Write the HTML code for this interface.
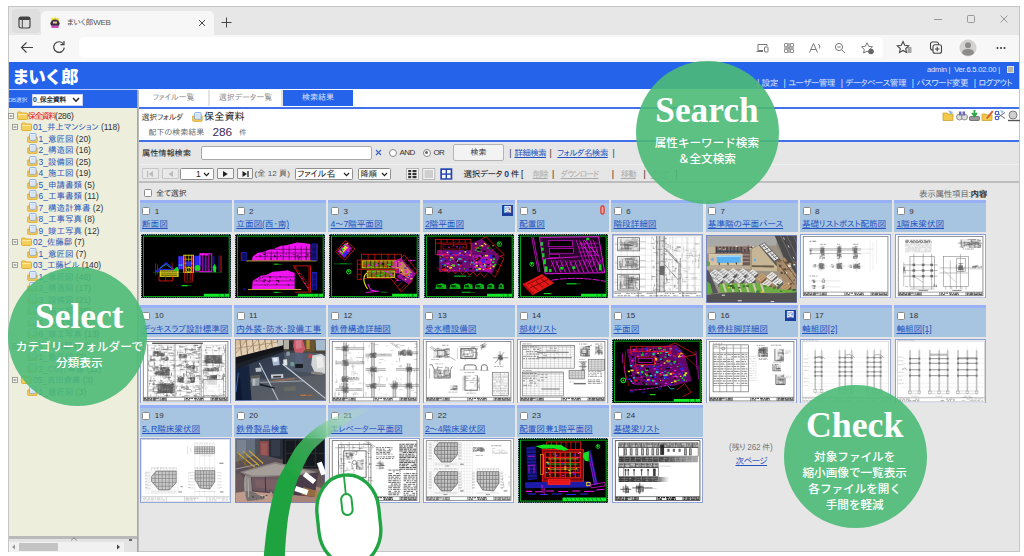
<!DOCTYPE html>
<html lang="ja"><head><meta charset="utf-8"><title>まいく郎WEB</title>
<style>
*{box-sizing:border-box;margin:0;padding:0}
html,body{width:1024px;height:556px;overflow:hidden;background:#fff}
body{position:relative;font-family:"Liberation Sans","IPAPGothic","IPAGothic","Noto Sans CJK JP",sans-serif;font-size:8px;color:#222;line-height:1}
.abs{position:absolute}
.t{position:absolute;white-space:nowrap;line-height:10px;height:10px}
a,.lnk{color:#2453c0;text-decoration:underline}
#win{position:absolute;left:8px;top:6px;width:1012px;height:546px;background:#e6e6e6;border:1px solid #c4c4c4;overflow:hidden}
/* coordinates inside #pg are page coordinates */
#pg{position:absolute;left:0;top:0;width:1024px;height:556px;overflow:hidden}
.tabstrip{left:9px;top:7px;width:1010px;height:28px;background:#e7e7e7}
.addr{left:9px;top:35px;width:1010px;height:27px;background:#f7f7f7}
.url{left:79px;top:37px;width:804px;height:21px;background:#fff;border-radius:5px}
.btab{left:41px;top:11px;width:173px;height:24px;background:#f7f7f7;border-radius:5px 5px 0 0}
.hdr{left:9px;top:62px;width:1010px;height:27px;background:#2563eb}
.hdr2{left:9px;top:90px;width:128px;height:18px;background:#2563eb}
.side{left:9px;top:108px;width:128px;height:428px;background:#eeeedd;overflow:hidden}
.split{left:137px;top:90px;width:2px;height:462px;background:linear-gradient(90deg,#9a9a9a,#c8c8c8)}
.tabsrow{left:139px;top:89px;width:880px;height:18px;background:#fff}
.tab{position:absolute;top:90px;height:16px;line-height:16px;text-align:center;color:#8a8a8a;font-size:8px;background:#fff}
.bline{position:absolute;left:139px;width:880px;height:1.7px;background:#3f72ea}
.sel{left:139px;top:109px;width:880px;height:31px;background:#fff}
.tree .t{font-size:8.5px;color:#333}
.tree .b{color:#2a56b8}
.cell{position:absolute;background:#a7c4e1;border-top:3.5px solid #98b1f6;height:32px}
.cb{position:absolute;width:8px;height:8px;background:#fff;border:1px solid #8a8a8a;border-radius:1.5px}
.num{position:absolute;font-size:8px;line-height:10px;color:#333}
.ttl{position:absolute;font-size:8.7px;line-height:10px;white-space:nowrap;color:#2453c0;text-decoration:underline;letter-spacing:-0.2px}
.th{position:absolute;overflow:hidden}
.cd,.wd{filter:blur(.3px)}
.ph{filter:blur(.5px)}
.btn{position:absolute;top:168px;height:11px;background:#f4f4f4;border:1px solid #8f8f8f;border-radius:1px}
.dis{border-color:#c6c6c6;background:#e9e9e9}
.sl{position:absolute;background:#fff;border:1px solid #8f8f8f;border-radius:1.5px}
.circ{position:absolute;border-radius:50%;background:rgba(76,186,119,.9)}
.big{position:absolute;font-family:"Liberation Serif",serif;font-weight:bold;font-size:35px;line-height:40px;color:#fff;text-align:center;white-space:nowrap}
.sub{position:absolute;font-family:"Liberation Sans","Noto Sans CJK JP",sans-serif;font-weight:500;font-size:11.5px;line-height:16px;color:#fff;text-align:center;white-space:nowrap}
</style></head><body>
<div class="abs" style="left:8px;top:6px;width:1012px;height:546px;background:#e6e6e6;border:1px solid #c6c6c6"></div>
<div class="abs tabstrip"></div>
<div class="abs" style="left:12px;top:9px;width:28px;height:24px;background:#dedede;border-radius:4px"></div>
<svg class="abs" style="left:18px;top:16px" width="13" height="13" viewBox="0 0 13 13"><rect x="1" y="1" width="11" height="11" rx="2" fill="none" stroke="#444" stroke-width="1.2"/><rect x="1" y="1" width="11" height="3" rx="1" fill="#444"/><line x1="4.3" y1="4" x2="4.3" y2="12" stroke="#444" stroke-width="1"/></svg>
<div class="abs btab"></div>
<svg class="abs" style="left:49px;top:15px" width="12" height="14" viewBox="0 0 12 14"><path d="M2 6 L3 2 L5 4 L6 1 L7 4 L9 2 L10 6 Z" fill="#e8d830"/><ellipse cx="6" cy="8.5" rx="4.6" ry="4" fill="#3a3040"/><rect x="2.5" y="10.5" width="7" height="2.5" fill="#c850c0"/><rect x="4" y="6.5" width="4" height="2" fill="#e8c8a0"/></svg>
<div class="t" style="left:67px;top:18px;font-size:8px;color:#555;letter-spacing:-0.3px">まいく郎WEB</div>
<svg class="abs" style="left:198px;top:19px" width="8" height="8" viewBox="0 0 8 8"><path d="M1 1 L7 7 M7 1 L1 7" stroke="#444" stroke-width="1"/></svg>
<svg class="abs" style="left:221px;top:17px" width="11" height="11" viewBox="0 0 11 11"><path d="M5.5 0.5 V10.5 M0.5 5.5 H10.5" stroke="#444" stroke-width="1"/></svg>
<svg class="abs" style="left:930px;top:12px" width="84" height="14" viewBox="0 0 84 14"><path d="M4 7.5 H12" stroke="#999" stroke-width="1"/><rect x="37.5" y="3.5" width="7" height="7" rx="1" fill="none" stroke="#999" stroke-width="1"/><path d="M70.5 3.5 L77.5 10.5 M77.5 3.5 L70.5 10.5" stroke="#999" stroke-width="1"/></svg>
<div class="abs addr"></div>
<div class="abs url"></div>
<svg class="abs" style="left:20px;top:41px" width="14" height="13" viewBox="0 0 14 13"><path d="M13 6.5 H2 M6.5 1.5 L1.5 6.5 L6.5 11.5" fill="none" stroke="#444" stroke-width="1.2"/></svg>
<svg class="abs" style="left:52px;top:40px" width="14" height="14" viewBox="0 0 14 14"><path d="M11.5 4.2 A5.3 5.3 0 1 0 12.3 7.6" fill="none" stroke="#444" stroke-width="1.2"/><path d="M12 1 V4.6 H8.4" fill="none" stroke="#444" stroke-width="1.2"/></svg>
<svg class="abs" style="left:755px;top:41px" width="124" height="14" viewBox="0 0 124 14"><g fill="none" stroke="#777" stroke-width="1"><path d="M3 3.5 H12 V5 M3 3.5 V9.5 H8 M1.5 10.5 H8"/><rect x="9.5" y="6" width="3.5" height="5" rx=".6"/><rect x="29.5" y="2.5" width="3.2" height="3.2" rx=".8"/><rect x="35.3" y="2.5" width="3.2" height="3.2" rx=".8"/><rect x="29.5" y="8.3" width="3.2" height="3.2" rx=".8"/><rect x="35.3" y="8.3" width="3.2" height="3.2" rx=".8"/><path d="M34 2 V12 M29 7 H39"/><path d="M54.5 11.5 L58.5 2.5 L62.5 11.5 M56 8.5 H61"/><path d="M63.5 3 Q65.5 5 64.5 7.5"/><circle cx="84" cy="6" r="3.6"/><path d="M86.7 8.8 L90 12 M82.3 6 H85.7"/><path d="M112 1.8 L113.7 5.3 L117.5 5.8 L114.7 8.4 L115.4 12 L112 10.2 L108.6 12 L109.3 8.4 L106.5 5.8 L110.3 5.3 Z"/></g><circle cx="116" cy="10.5" r="2.8" fill="#666"/></svg>
<svg class="abs" style="left:896px;top:39px" width="116" height="18" viewBox="0 0 116 18"><g fill="none" stroke="#444" stroke-width="1.1"><path d="M7 2.5 L8.7 6.3 L12.7 6.8 L9.7 9.5 L10.5 13.5 L7 11.5 L3.5 13.5 L4.3 9.5 L1.3 6.8 L5.3 6.3 Z"/><path d="M11.5 9 H15.5 M11.5 11 H15.5 M11.5 13 H15.5" stroke-width=".9"/><rect x="34.5" y="3" width="8" height="8" rx="2"/><rect x="37" y="5.8" width="8.5" height="8.5" rx="2" fill="#f7f7f7"/><path d="M41.2 7.8 V12.3 M39 10 H43.5"/></g><circle cx="72" cy="9" r="8.5" fill="#d4d2d0"/><circle cx="72" cy="6.3" r="3" fill="#8e8c8a"/><path d="M66 14.2 Q66 10 72 10 Q78 10 78 14.2 Q75 16.8 72 16.8 Q69 16.8 66 14.2Z" fill="#8e8c8a"/><circle cx="101.5" cy="9" r="1" fill="#333"/><circle cx="105" cy="9" r="1" fill="#333"/><circle cx="108.5" cy="9" r="1" fill="#333"/></svg>
<div class="abs hdr"></div>
<div class="abs" style="left:9px;top:89px;width:128px;height:1px;background:#b8cdf8"></div>
<div class="abs hdr2"></div>
<div class="t" style="left:12px;top:64px;height:24px;line-height:24px;font-family:'Noto Sans CJK JP',sans-serif;font-weight:900;font-size:17.5px;color:#fff;letter-spacing:-1.2px">まいく郎</div>
<div class="t" style="right:24px;top:65px;font-size:7.6px;color:#dfe8ff;letter-spacing:-0.2px">admin |&nbsp; Ver.6.5.02.00 |</div>
<div class="abs" style="left:1007px;top:66px;width:7px;height:7px;background:#b9b6a8;border:1px solid #e4e2d8"></div>
<div class="t" style="right:12px;top:78px;font-size:8.7px;color:#dde6ff;letter-spacing:-0.55px;word-spacing:1px">| 設定 &nbsp;| ユーザー管理 &nbsp;| データベース管理 &nbsp;| パスワード変更 &nbsp;| ログアウト</div>
<div class="t" style="left:8px;top:95px;font-size:6px;color:#cfdcff;letter-spacing:-0.3px">DB選択</div>
<div class="abs" style="left:32px;top:94px;width:51px;height:11.5px;background:#fff;border:1px solid #c6d2ee"></div>
<div class="t" style="left:33px;top:94.5px;font-size:7px;font-weight:bold;color:#333;letter-spacing:-0.5px">0_保全資料</div>
<svg class="abs" style="left:72px;top:97px" width="8" height="6" viewBox="0 0 8 6"><path d="M1 1 L4 4.2 L7 1" fill="none" stroke="#222" stroke-width="1.4"/></svg>
<div class="abs side"></div>
<div class="tree">
<svg class="abs" style="left:7.5px;top:112.8px" width="6" height="6" viewBox="0 0 6 6"><rect x=".5" y=".5" width="5" height="5" fill="#f8f8f0" stroke="#8a8a8a" stroke-width=".8"/><path d="M1.6 3 H4.4" stroke="#444" stroke-width=".8"/></svg>
<svg class="abs" style="left:16.5px;top:110.6px" width="11" height="9" viewBox="0 0 11 9"><path d="M.5 2 Q.5 1 1.5 1 H4 L5 2 H9.5 Q10.5 2 10.5 3 V7.5 Q10.5 8.5 9.5 8.5 H1.5 Q.5 8.5 .5 7.5Z" fill="#f3cf5a" stroke="#d9a520" stroke-width=".8"/><path d="M1.2 3.6 H9.8" stroke="#fbe9a8" stroke-width="1"/></svg>
<div class="t" style="left:27.5px;top:110.6px;letter-spacing:-1.6px"><span style="color:#e02020">保全資料</span><span style="letter-spacing:-0.3px">(286)</span></div>
<svg class="abs" style="left:12px;top:124.3px" width="6" height="6" viewBox="0 0 6 6"><rect x=".5" y=".5" width="5" height="5" fill="#f8f8f0" stroke="#8a8a8a" stroke-width=".8"/><path d="M1.6 3 H4.4" stroke="#444" stroke-width=".8"/></svg>
<svg class="abs" style="left:21px;top:122.1px" width="11" height="9" viewBox="0 0 11 9"><path d="M.5 2 Q.5 1 1.5 1 H4 L5 2 H9.5 Q10.5 2 10.5 3 V7.5 Q10.5 8.5 9.5 8.5 H1.5 Q.5 8.5 .5 7.5Z" fill="#f3cf5a" stroke="#d9a520" stroke-width=".8"/><path d="M1.2 3.6 H9.8" stroke="#fbe9a8" stroke-width="1"/></svg>
<div class="t" style="left:33px;top:122.1px;letter-spacing:-0.1px"><span class="b">01_井上マンション</span> (118)</div>
<svg class="abs" style="left:27px;top:132.8px" width="11" height="10" viewBox="0 0 11 10"><path d="M.6 4 H10.2 V8.6 Q10.2 9.4 9.4 9.4 H1.4 Q.6 9.4 .6 8.6Z" fill="#f0c860" stroke="#d9a520" stroke-width=".7"/><rect x="2.6" y=".6" width="6.4" height="6.6" rx=".8" fill="#f4f8ff" stroke="#6f9ad8" stroke-width=".8"/><path d="M3.8 2.4 H7.8 M3.8 3.8 H7.8 M3.8 5.2 H7.8" stroke="#a9c4ec" stroke-width=".6"/></svg>
<div class="t" style="left:38.5px;top:133.6px;letter-spacing:0px"><span class="b">1_意匠図</span> (20)</div>
<svg class="abs" style="left:27px;top:144.3px" width="11" height="10" viewBox="0 0 11 10"><path d="M.6 4 H10.2 V8.6 Q10.2 9.4 9.4 9.4 H1.4 Q.6 9.4 .6 8.6Z" fill="#f0c860" stroke="#d9a520" stroke-width=".7"/><rect x="2.6" y=".6" width="6.4" height="6.6" rx=".8" fill="#f4f8ff" stroke="#6f9ad8" stroke-width=".8"/><path d="M3.8 2.4 H7.8 M3.8 3.8 H7.8 M3.8 5.2 H7.8" stroke="#a9c4ec" stroke-width=".6"/></svg>
<div class="t" style="left:38.5px;top:145.1px;letter-spacing:0px"><span class="b">2_構造図</span> (16)</div>
<svg class="abs" style="left:27px;top:155.8px" width="11" height="10" viewBox="0 0 11 10"><path d="M.6 4 H10.2 V8.6 Q10.2 9.4 9.4 9.4 H1.4 Q.6 9.4 .6 8.6Z" fill="#f0c860" stroke="#d9a520" stroke-width=".7"/><rect x="2.6" y=".6" width="6.4" height="6.6" rx=".8" fill="#f4f8ff" stroke="#6f9ad8" stroke-width=".8"/><path d="M3.8 2.4 H7.8 M3.8 3.8 H7.8 M3.8 5.2 H7.8" stroke="#a9c4ec" stroke-width=".6"/></svg>
<div class="t" style="left:38.5px;top:156.6px;letter-spacing:0px"><span class="b">3_設備図</span> (25)</div>
<svg class="abs" style="left:27px;top:167.3px" width="11" height="10" viewBox="0 0 11 10"><path d="M.6 4 H10.2 V8.6 Q10.2 9.4 9.4 9.4 H1.4 Q.6 9.4 .6 8.6Z" fill="#f0c860" stroke="#d9a520" stroke-width=".7"/><rect x="2.6" y=".6" width="6.4" height="6.6" rx=".8" fill="#f4f8ff" stroke="#6f9ad8" stroke-width=".8"/><path d="M3.8 2.4 H7.8 M3.8 3.8 H7.8 M3.8 5.2 H7.8" stroke="#a9c4ec" stroke-width=".6"/></svg>
<div class="t" style="left:38.5px;top:168.1px;letter-spacing:0px"><span class="b">4_施工図</span> (19)</div>
<svg class="abs" style="left:27px;top:178.8px" width="11" height="10" viewBox="0 0 11 10"><path d="M.6 4 H10.2 V8.6 Q10.2 9.4 9.4 9.4 H1.4 Q.6 9.4 .6 8.6Z" fill="#f0c860" stroke="#d9a520" stroke-width=".7"/><rect x="2.6" y=".6" width="6.4" height="6.6" rx=".8" fill="#f4f8ff" stroke="#6f9ad8" stroke-width=".8"/><path d="M3.8 2.4 H7.8 M3.8 3.8 H7.8 M3.8 5.2 H7.8" stroke="#a9c4ec" stroke-width=".6"/></svg>
<div class="t" style="left:38.5px;top:179.6px;letter-spacing:0px"><span class="b">5_申請書類</span> (5)</div>
<svg class="abs" style="left:27px;top:190.3px" width="11" height="10" viewBox="0 0 11 10"><path d="M.6 4 H10.2 V8.6 Q10.2 9.4 9.4 9.4 H1.4 Q.6 9.4 .6 8.6Z" fill="#f0c860" stroke="#d9a520" stroke-width=".7"/><rect x="2.6" y=".6" width="6.4" height="6.6" rx=".8" fill="#f4f8ff" stroke="#6f9ad8" stroke-width=".8"/><path d="M3.8 2.4 H7.8 M3.8 3.8 H7.8 M3.8 5.2 H7.8" stroke="#a9c4ec" stroke-width=".6"/></svg>
<div class="t" style="left:38.5px;top:191.1px;letter-spacing:0px"><span class="b">6_工事書類</span> (11)</div>
<svg class="abs" style="left:27px;top:201.8px" width="11" height="10" viewBox="0 0 11 10"><path d="M.6 4 H10.2 V8.6 Q10.2 9.4 9.4 9.4 H1.4 Q.6 9.4 .6 8.6Z" fill="#f0c860" stroke="#d9a520" stroke-width=".7"/><rect x="2.6" y=".6" width="6.4" height="6.6" rx=".8" fill="#f4f8ff" stroke="#6f9ad8" stroke-width=".8"/><path d="M3.8 2.4 H7.8 M3.8 3.8 H7.8 M3.8 5.2 H7.8" stroke="#a9c4ec" stroke-width=".6"/></svg>
<div class="t" style="left:38.5px;top:202.6px;letter-spacing:0px"><span class="b">7_構造計算書</span> (2)</div>
<svg class="abs" style="left:27px;top:213.3px" width="11" height="10" viewBox="0 0 11 10"><path d="M.6 4 H10.2 V8.6 Q10.2 9.4 9.4 9.4 H1.4 Q.6 9.4 .6 8.6Z" fill="#f0c860" stroke="#d9a520" stroke-width=".7"/><rect x="2.6" y=".6" width="6.4" height="6.6" rx=".8" fill="#f4f8ff" stroke="#6f9ad8" stroke-width=".8"/><path d="M3.8 2.4 H7.8 M3.8 3.8 H7.8 M3.8 5.2 H7.8" stroke="#a9c4ec" stroke-width=".6"/></svg>
<div class="t" style="left:38.5px;top:214.1px;letter-spacing:0px"><span class="b">8_工事写真</span> (8)</div>
<svg class="abs" style="left:27px;top:224.8px" width="11" height="10" viewBox="0 0 11 10"><path d="M.6 4 H10.2 V8.6 Q10.2 9.4 9.4 9.4 H1.4 Q.6 9.4 .6 8.6Z" fill="#f0c860" stroke="#d9a520" stroke-width=".7"/><rect x="2.6" y=".6" width="6.4" height="6.6" rx=".8" fill="#f4f8ff" stroke="#6f9ad8" stroke-width=".8"/><path d="M3.8 2.4 H7.8 M3.8 3.8 H7.8 M3.8 5.2 H7.8" stroke="#a9c4ec" stroke-width=".6"/></svg>
<div class="t" style="left:38.5px;top:225.6px;letter-spacing:0px"><span class="b">9_竣工写真</span> (12)</div>
<svg class="abs" style="left:12px;top:239.3px" width="6" height="6" viewBox="0 0 6 6"><rect x=".5" y=".5" width="5" height="5" fill="#f8f8f0" stroke="#8a8a8a" stroke-width=".8"/><path d="M1.6 3 H4.4" stroke="#444" stroke-width=".8"/></svg>
<svg class="abs" style="left:21px;top:237.1px" width="11" height="9" viewBox="0 0 11 9"><path d="M.5 2 Q.5 1 1.5 1 H4 L5 2 H9.5 Q10.5 2 10.5 3 V7.5 Q10.5 8.5 9.5 8.5 H1.5 Q.5 8.5 .5 7.5Z" fill="#f3cf5a" stroke="#d9a520" stroke-width=".8"/><path d="M1.2 3.6 H9.8" stroke="#fbe9a8" stroke-width="1"/></svg>
<div class="t" style="left:33px;top:237.1px;letter-spacing:-0.1px"><span class="b">02_佐藤邸</span> (7)</div>
<svg class="abs" style="left:27px;top:247.8px" width="11" height="10" viewBox="0 0 11 10"><path d="M.6 4 H10.2 V8.6 Q10.2 9.4 9.4 9.4 H1.4 Q.6 9.4 .6 8.6Z" fill="#f0c860" stroke="#d9a520" stroke-width=".7"/><rect x="2.6" y=".6" width="6.4" height="6.6" rx=".8" fill="#f4f8ff" stroke="#6f9ad8" stroke-width=".8"/><path d="M3.8 2.4 H7.8 M3.8 3.8 H7.8 M3.8 5.2 H7.8" stroke="#a9c4ec" stroke-width=".6"/></svg>
<div class="t" style="left:38.5px;top:248.6px;letter-spacing:0px"><span class="b">1_意匠図</span> (7)</div>
<svg class="abs" style="left:12px;top:262.3px" width="6" height="6" viewBox="0 0 6 6"><rect x=".5" y=".5" width="5" height="5" fill="#f8f8f0" stroke="#8a8a8a" stroke-width=".8"/><path d="M1.6 3 H4.4" stroke="#444" stroke-width=".8"/></svg>
<svg class="abs" style="left:21px;top:260.1px" width="11" height="9" viewBox="0 0 11 9"><path d="M.5 2 Q.5 1 1.5 1 H4 L5 2 H9.5 Q10.5 2 10.5 3 V7.5 Q10.5 8.5 9.5 8.5 H1.5 Q.5 8.5 .5 7.5Z" fill="#f3cf5a" stroke="#d9a520" stroke-width=".8"/><path d="M1.2 3.6 H9.8" stroke="#fbe9a8" stroke-width="1"/></svg>
<div class="t" style="left:33px;top:260.1px;letter-spacing:-0.1px"><span class="b">03_工藤ビル</span> (140)</div>
<svg class="abs" style="left:27px;top:270.8px" width="11" height="10" viewBox="0 0 11 10"><path d="M.6 4 H10.2 V8.6 Q10.2 9.4 9.4 9.4 H1.4 Q.6 9.4 .6 8.6Z" fill="#f0c860" stroke="#d9a520" stroke-width=".7"/><rect x="2.6" y=".6" width="6.4" height="6.6" rx=".8" fill="#f4f8ff" stroke="#6f9ad8" stroke-width=".8"/><path d="M3.8 2.4 H7.8 M3.8 3.8 H7.8 M3.8 5.2 H7.8" stroke="#a9c4ec" stroke-width=".6"/></svg>
<div class="t" style="left:38.5px;top:271.6px;letter-spacing:0px"><span class="b">1_意匠図</span> (46)</div>
<svg class="abs" style="left:27px;top:282.3px" width="11" height="10" viewBox="0 0 11 10"><path d="M.6 4 H10.2 V8.6 Q10.2 9.4 9.4 9.4 H1.4 Q.6 9.4 .6 8.6Z" fill="#f0c860" stroke="#d9a520" stroke-width=".7"/><rect x="2.6" y=".6" width="6.4" height="6.6" rx=".8" fill="#f4f8ff" stroke="#6f9ad8" stroke-width=".8"/><path d="M3.8 2.4 H7.8 M3.8 3.8 H7.8 M3.8 5.2 H7.8" stroke="#a9c4ec" stroke-width=".6"/></svg>
<div class="t" style="left:38.5px;top:283.1px;letter-spacing:0px"><span class="b">2_構造図</span> (17)</div>
<svg class="abs" style="left:27px;top:293.8px" width="11" height="10" viewBox="0 0 11 10"><path d="M.6 4 H10.2 V8.6 Q10.2 9.4 9.4 9.4 H1.4 Q.6 9.4 .6 8.6Z" fill="#f0c860" stroke="#d9a520" stroke-width=".7"/><rect x="2.6" y=".6" width="6.4" height="6.6" rx=".8" fill="#f4f8ff" stroke="#6f9ad8" stroke-width=".8"/><path d="M3.8 2.4 H7.8 M3.8 3.8 H7.8 M3.8 5.2 H7.8" stroke="#a9c4ec" stroke-width=".6"/></svg>
<div class="t" style="left:38.5px;top:294.6px;letter-spacing:0px"><span class="b">3_設備図</span> (21)</div>
<svg class="abs" style="left:27px;top:305.3px" width="11" height="10" viewBox="0 0 11 10"><path d="M.6 4 H10.2 V8.6 Q10.2 9.4 9.4 9.4 H1.4 Q.6 9.4 .6 8.6Z" fill="#f0c860" stroke="#d9a520" stroke-width=".7"/><rect x="2.6" y=".6" width="6.4" height="6.6" rx=".8" fill="#f4f8ff" stroke="#6f9ad8" stroke-width=".8"/><path d="M3.8 2.4 H7.8 M3.8 3.8 H7.8 M3.8 5.2 H7.8" stroke="#a9c4ec" stroke-width=".6"/></svg>
<div class="t" style="left:38.5px;top:306.1px;letter-spacing:0px"><span class="b">4_施工図</span> (38)</div>
<svg class="abs" style="left:27px;top:316.8px" width="11" height="10" viewBox="0 0 11 10"><path d="M.6 4 H10.2 V8.6 Q10.2 9.4 9.4 9.4 H1.4 Q.6 9.4 .6 8.6Z" fill="#f0c860" stroke="#d9a520" stroke-width=".7"/><rect x="2.6" y=".6" width="6.4" height="6.6" rx=".8" fill="#f4f8ff" stroke="#6f9ad8" stroke-width=".8"/><path d="M3.8 2.4 H7.8 M3.8 3.8 H7.8 M3.8 5.2 H7.8" stroke="#a9c4ec" stroke-width=".6"/></svg>
<div class="t" style="left:38.5px;top:317.6px;letter-spacing:0px"><span class="b">5_工事写真</span> (5)</div>
<svg class="abs" style="left:27px;top:328.3px" width="11" height="10" viewBox="0 0 11 10"><path d="M.6 4 H10.2 V8.6 Q10.2 9.4 9.4 9.4 H1.4 Q.6 9.4 .6 8.6Z" fill="#f0c860" stroke="#d9a520" stroke-width=".7"/><rect x="2.6" y=".6" width="6.4" height="6.6" rx=".8" fill="#f4f8ff" stroke="#6f9ad8" stroke-width=".8"/><path d="M3.8 2.4 H7.8 M3.8 3.8 H7.8 M3.8 5.2 H7.8" stroke="#a9c4ec" stroke-width=".6"/></svg>
<div class="t" style="left:38.5px;top:329.1px;letter-spacing:0px"><span class="b">6_竣工写真</span> (13)</div>
<svg class="abs" style="left:12px;top:342.8px" width="6" height="6" viewBox="0 0 6 6"><rect x=".5" y=".5" width="5" height="5" fill="#f8f8f0" stroke="#8a8a8a" stroke-width=".8"/><path d="M1.6 3 H4.4" stroke="#444" stroke-width=".8"/></svg>
<svg class="abs" style="left:21px;top:340.6px" width="11" height="9" viewBox="0 0 11 9"><path d="M.5 2 Q.5 1 1.5 1 H4 L5 2 H9.5 Q10.5 2 10.5 3 V7.5 Q10.5 8.5 9.5 8.5 H1.5 Q.5 8.5 .5 7.5Z" fill="#f3cf5a" stroke="#d9a520" stroke-width=".8"/><path d="M1.2 3.6 H9.8" stroke="#fbe9a8" stroke-width="1"/></svg>
<div class="t" style="left:33px;top:340.6px;letter-spacing:-0.1px"><span class="b">04_山田邸</span> (18)</div>
<svg class="abs" style="left:27px;top:351.3px" width="11" height="10" viewBox="0 0 11 10"><path d="M.6 4 H10.2 V8.6 Q10.2 9.4 9.4 9.4 H1.4 Q.6 9.4 .6 8.6Z" fill="#f0c860" stroke="#d9a520" stroke-width=".7"/><rect x="2.6" y=".6" width="6.4" height="6.6" rx=".8" fill="#f4f8ff" stroke="#6f9ad8" stroke-width=".8"/><path d="M3.8 2.4 H7.8 M3.8 3.8 H7.8 M3.8 5.2 H7.8" stroke="#a9c4ec" stroke-width=".6"/></svg>
<div class="t" style="left:38.5px;top:352.1px;letter-spacing:0px"><span class="b">1_意匠図</span> (7)</div>
<svg class="abs" style="left:27px;top:362.8px" width="11" height="10" viewBox="0 0 11 10"><path d="M.6 4 H10.2 V8.6 Q10.2 9.4 9.4 9.4 H1.4 Q.6 9.4 .6 8.6Z" fill="#f0c860" stroke="#d9a520" stroke-width=".7"/><rect x="2.6" y=".6" width="6.4" height="6.6" rx=".8" fill="#f4f8ff" stroke="#6f9ad8" stroke-width=".8"/><path d="M3.8 2.4 H7.8 M3.8 3.8 H7.8 M3.8 5.2 H7.8" stroke="#a9c4ec" stroke-width=".6"/></svg>
<div class="t" style="left:38.5px;top:363.6px;letter-spacing:0px"><span class="b">2_C0計算書</span> (11)</div>
<svg class="abs" style="left:12px;top:377.3px" width="6" height="6" viewBox="0 0 6 6"><rect x=".5" y=".5" width="5" height="5" fill="#f8f8f0" stroke="#8a8a8a" stroke-width=".8"/><path d="M1.6 3 H4.4" stroke="#444" stroke-width=".8"/></svg>
<svg class="abs" style="left:21px;top:375.1px" width="11" height="9" viewBox="0 0 11 9"><path d="M.5 2 Q.5 1 1.5 1 H4 L5 2 H9.5 Q10.5 2 10.5 3 V7.5 Q10.5 8.5 9.5 8.5 H1.5 Q.5 8.5 .5 7.5Z" fill="#f3cf5a" stroke="#d9a520" stroke-width=".8"/><path d="M1.2 3.6 H9.8" stroke="#fbe9a8" stroke-width="1"/></svg>
<div class="t" style="left:33px;top:375.1px;letter-spacing:-0.1px"><span class="b">05_吉田倉庫</span> (3)</div>
<svg class="abs" style="left:27px;top:385.8px" width="11" height="10" viewBox="0 0 11 10"><path d="M.6 4 H10.2 V8.6 Q10.2 9.4 9.4 9.4 H1.4 Q.6 9.4 .6 8.6Z" fill="#f0c860" stroke="#d9a520" stroke-width=".7"/><rect x="2.6" y=".6" width="6.4" height="6.6" rx=".8" fill="#f4f8ff" stroke="#6f9ad8" stroke-width=".8"/><path d="M3.8 2.4 H7.8 M3.8 3.8 H7.8 M3.8 5.2 H7.8" stroke="#a9c4ec" stroke-width=".6"/></svg>
<div class="t" style="left:38.5px;top:386.6px;letter-spacing:0px"><span class="b">1_意匠図</span> (3)</div>
</div>
<div class="abs" style="left:9px;top:536px;width:128px;height:3px;background:#b9b9b9"></div>
<div class="abs" style="left:9px;top:539px;width:128px;height:13px;background:#e3e3e3"></div>
<div class="abs" style="left:9px;top:542px;width:115px;height:10px;background:#f1f1f1"></div>
<div class="abs" style="left:19px;top:543px;width:39px;height:8px;background:#c4c4c4"></div>
<svg class="abs" style="left:11px;top:544px" width="5" height="6" viewBox="0 0 5 6"><path d="M4 .5 L1 3 L4 5.5Z" fill="#999"/></svg>
<svg class="abs" style="left:116px;top:544px" width="5" height="6" viewBox="0 0 5 6"><path d="M1 .5 L4 3 L1 5.5Z" fill="#444"/></svg>
<svg class="abs" style="left:70px;top:537px" width="8" height="4" viewBox="0 0 8 4"><path d="M1 3.5 L4 .8 L7 3.5" fill="none" stroke="#777" stroke-width=".8"/></svg>
<div class="abs" style="left:129px;top:539px;width:3px;height:2px;background:#666"></div>
<div class="abs split"></div>
<div class="abs tabsrow"></div>
<div class="tab" style="left:139px;width:69px">ファイル一覧</div>
<div class="abs" style="left:208px;top:90px;width:2px;height:16px;background:#e4e4e4"></div>
<div class="tab" style="left:210px;width:71px">選択データ一覧</div>
<div class="abs" style="left:281px;top:90px;width:2px;height:16px;background:#e4e4e4"></div>
<div class="tab" style="left:283px;width:70px;background:#2563eb;color:#dfe8ff">検索結果</div>
<div class="bline" style="top:107px"></div>
<div class="abs sel"></div>
<div class="t" style="left:141.5px;top:112.5px;font-size:8px;color:#333;letter-spacing:-0.3px">選択フォルダ</div>
<svg class="abs" style="left:191.5px;top:111.5px" width="11" height="10" viewBox="0 0 11 10"><path d="M.6 4 H10.2 V8.6 Q10.2 9.4 9.4 9.4 H1.4 Q.6 9.4 .6 8.6Z" fill="#f0c860" stroke="#d9a520" stroke-width=".7"/><rect x="2.6" y=".6" width="6.4" height="6.6" rx=".8" fill="#f4f8ff" stroke="#6f9ad8" stroke-width=".8"/><path d="M3.8 2.4 H7.8 M3.8 3.8 H7.8 M3.8 5.2 H7.8" stroke="#a9c4ec" stroke-width=".6"/></svg>
<div class="t" style="left:204px;top:110.5px;font-size:10.2px;line-height:12px;height:12px;color:#222">保全資料</div>
<div class="t" style="left:148.5px;top:128px;font-size:8px;color:#666">配下の検索結果</div>
<div class="t" style="left:212.5px;top:125.5px;font-size:11.8px;line-height:13px;height:13px;color:#3d2a55">286</div>
<div class="t" style="left:239px;top:128px;font-size:7.5px;color:#666">件</div>
<svg class="abs" style="left:942px;top:109px" width="78" height="13" viewBox="0 0 78 13"><path d="M1 4 H5 L6 5 H11 V11.5 H1Z" fill="#f2c94c" stroke="#c99a1c" stroke-width=".7"/><path d="M6 1 L11 3 L9 6 Z" fill="#8fb8ee"/><circle cx="17.5" cy="8" r="3" fill="#ddd" stroke="#777" stroke-width=".8"/><circle cx="22.5" cy="8" r="3" fill="#ddd" stroke="#777" stroke-width=".8"/><rect x="17" y="2.5" width="2.5" height="4" fill="#6a6ab8"/><rect x="20.5" y="2.5" width="2.5" height="4" fill="#6a6ab8"/><rect x="27.5" y="7.5" width="10" height="4" rx="1" fill="#999" stroke="#555" stroke-width=".7"/><path d="M32.5 1 V6 M30 4 L32.5 7 L35 4" fill="none" stroke="#28a745" stroke-width="1.8"/><path d="M40 5 H44 L45 6 H50 V11.5 H40Z" fill="#f2c94c" stroke="#c99a1c" stroke-width=".7"/><path d="M44 9 L50 1.5 L51.5 2.7 L45.5 10Z" fill="#e05a30"/><circle cx="55" cy="4" r="1.8" fill="none" stroke="#2a4fc0" stroke-width="1.1"/><circle cx="55" cy="9" r="1.8" fill="none" stroke="#2a4fc0" stroke-width="1.1"/><path d="M56.5 5 L63 9.5 M56.5 8 L63 3.5" stroke="#667" stroke-width="1"/><path d="M58 1 L62 2 L60 5Z" fill="#9cc4f0"/><circle cx="71" cy="6" r="4" fill="#cfcfcf" stroke="#777" stroke-width=".9"/><path d="M66 11.5 H78" stroke="#555" stroke-width="1.4"/></svg>
<div class="bline" style="top:140px"></div>
<div class="t" style="left:142px;top:148px;font-size:8.3px;color:#111;letter-spacing:-0.15px">属性情報検索</div>
<div class="abs" style="left:200.5px;top:145.5px;width:171px;height:14px;background:#fff;border:1px solid #a9a9a9;border-radius:2px"></div>
<svg class="abs" style="left:375px;top:149px" width="7" height="7" viewBox="0 0 7 7"><path d="M1 1 L6 6 M6 1 L1 6" stroke="#3b5fc4" stroke-width="1.1"/></svg>
<div class="abs" style="left:389px;top:148.5px;width:8px;height:8px;border-radius:50%;background:#fff;border:1px solid #888"></div>
<div class="t" style="left:399.5px;top:148px;font-size:8px;color:#333;letter-spacing:-0.6px">AND</div>
<div class="abs" style="left:422.5px;top:148.5px;width:8px;height:8px;border-radius:50%;background:#fff;border:1px solid #888"></div>
<div class="abs" style="left:424.8px;top:150.8px;width:3.4px;height:3.4px;border-radius:50%;background:#666"></div>
<div class="t" style="left:433.5px;top:148px;font-size:8px;color:#333;letter-spacing:-0.6px">OR</div>
<div class="abs" style="left:453px;top:144px;width:51px;height:17px;background:#f3f3f3;border:1px solid #b4b4b4;border-radius:2px"></div>
<div class="t" style="left:453px;width:51px;text-align:center;top:147.5px;font-size:8px;color:#333">検索</div>
<div class="t " style="left:509.3px;top:147.5px;font-size:8.6px;color:#333;">|</div>
<div class="t lnk" style="left:514.4px;top:147.5px;font-size:8.6px;letter-spacing:-0.7px">詳細検索</div>
<div class="t " style="left:549.5px;top:147.5px;font-size:8.6px;color:#333;">|</div>
<div class="t lnk" style="left:557.3px;top:147.5px;font-size:8.6px;letter-spacing:-0.7px">フォルダ名検索</div>
<div class="t " style="left:612.4px;top:147.5px;font-size:8.6px;color:#333;">|</div>
<div class="abs" style="left:139px;top:164px;width:880px;height:1px;background:#f0f0f0"></div>
<div class="btn dis" style="left:142px;width:17px"></div>
<svg class="abs" style="left:146px;top:170.5px" width="9" height="6" viewBox="0 0 9 6"><path d="M1.5 0 V6" stroke="#bbb" stroke-width="1.2"/><path d="M7 0 L2.5 3 L7 6Z" fill="#bbb"/></svg>
<div class="btn dis" style="left:162px;width:16.5px"></div>
<svg class="abs" style="left:166.5px;top:170.5px" width="7" height="6" viewBox="0 0 7 6"><path d="M6 0 L1.5 3 L6 6Z" fill="#bbb"/></svg>
<div class="sl" style="left:179.5px;top:168px;width:34.5px;height:11.5px"></div>
<div class="t" style="left:196px;top:168.8px;font-size:8.5px;color:#222">1</div>
<svg class="abs" style="left:203px;top:171.5px" width="7" height="5" viewBox="0 0 7 5"><path d="M1 1 L3.5 3.6 L6 1" fill="none" stroke="#222" stroke-width="1.2"/></svg>
<div class="btn" style="left:217px;width:16.5px"></div>
<svg class="abs" style="left:222px;top:170.5px" width="7" height="6" viewBox="0 0 7 6"><path d="M1 0 L5.8 3 L1 6Z" fill="#222"/></svg>
<div class="btn" style="left:236.5px;width:16.5px"></div>
<svg class="abs" style="left:240.5px;top:170.5px" width="9" height="6" viewBox="0 0 9 6"><path d="M1.5 0 L6 3 L1.5 6Z" fill="#222"/><path d="M7 0 V6" stroke="#222" stroke-width="1.3"/></svg>
<div class="t" style="left:254.5px;top:168.5px;font-size:8px;color:#555;letter-spacing:0.1px">(全 12 頁)</div>
<div class="sl" style="left:294.5px;top:167.5px;width:58px;height:12.5px"></div>
<div class="t" style="left:297px;top:168.6px;font-size:9.2px;color:#222;letter-spacing:-0.2px">ファイル名</div>
<svg class="abs" style="left:342.5px;top:171.5px" width="7" height="5" viewBox="0 0 7 5"><path d="M1 1 L3.5 3.6 L6 1" fill="none" stroke="#222" stroke-width="1.2"/></svg>
<div class="sl" style="left:357.5px;top:167.5px;width:33.5px;height:12.5px"></div>
<div class="t" style="left:360.5px;top:168.8px;font-size:8.4px;color:#222;letter-spacing:-0.2px">降順</div>
<svg class="abs" style="left:381px;top:171.5px" width="7" height="5" viewBox="0 0 7 5"><path d="M1 1 L3.5 3.6 L6 1" fill="none" stroke="#222" stroke-width="1.2"/></svg>
<svg class="abs" style="left:406px;top:168px" width="47" height="12" viewBox="0 0 47 12"><rect x=".5" y=".5" width="12" height="11" fill="#f4f4f4" stroke="#aaa" stroke-width=".8"/><rect x="2.2" y="2" width="3" height="2.2" fill="#333"/><rect x="6.5" y="2" width="4" height="2.2" fill="#333"/><rect x="2.2" y="5" width="3" height="2.2" fill="#333"/><rect x="6.5" y="5" width="4" height="2.2" fill="#333"/><rect x="2.2" y="8" width="3" height="2.2" fill="#333"/><rect x="6.5" y="8" width="4" height="2.2" fill="#333"/><rect x="16.8" y=".5" width="12" height="11" fill="#f4f4f4" stroke="#aaa" stroke-width=".8"/><path d="M18.5 3 H27 M18.5 5 H27 M18.5 7 H27 M18.5 9 H27" stroke="#aaa" stroke-width="1"/><rect x="34.3" y=".3" width="12" height="11.4" fill="#2346b4"/><rect x="36" y="2" width="3.6" height="3.4" fill="#fff"/><rect x="41" y="2" width="3.6" height="3.4" fill="#fff"/><rect x="36" y="6.8" width="3.6" height="3.4" fill="#fff"/><rect x="41" y="6.8" width="3.6" height="3.4" fill="#fff"/></svg>
<div class="t" style="left:463.5px;top:168.6px;font-size:8.6px;color:#111;letter-spacing:-0.35px">選択データ<b style="color:#223a9a"> 0 </b>件 [</div>
<div class="t" style="left:532.7px;top:168.6px;font-size:8.4px;color:#aaa;text-decoration:underline;letter-spacing:-0.9px">削除</div>
<div class="t" style="left:552px;top:168.6px;font-size:8.6px;color:#222">|</div>
<div class="t" style="left:560.6px;top:168.6px;font-size:8.4px;color:#aaa;text-decoration:underline;letter-spacing:-0.9px">ダウンロード</div>
<div class="t" style="left:611.8px;top:168.6px;font-size:8.6px;color:#222">|</div>
<div class="t" style="left:620.7px;top:168.6px;font-size:8.4px;color:#aaa;text-decoration:underline;letter-spacing:-0.9px">移動</div>
<div class="t" style="left:643.6px;top:168.6px;font-size:8.6px;color:#222">|</div>
<div class="t" style="left:650.5px;top:168.6px;font-size:8.4px;color:#aaa;text-decoration:underline;letter-spacing:-0.9px">クリア</div>
<div class="t" style="left:675px;top:168.6px;font-size:8.6px;color:#222">]</div>
<div class="abs" style="left:139px;top:181px;width:880px;height:2px;background:#bdbdbd"></div>
<div class="cb" style="left:143.5px;top:189px"></div>
<div class="t" style="left:156px;top:189px;font-size:8px;color:#333;letter-spacing:-0.1px">全て選択</div>
<div class="t" style="right:37px;top:188.5px;font-size:8.6px;color:#666;letter-spacing:-0.35px">表示属性項目:<b style="color:#333">内容</b></div>
<div class="cell" style="left:139.8px;top:200.3px;width:92.0px;height:31.5px"></div>
<div class="cb" style="left:142.4px;top:206.9px"></div>
<div class="num" style="left:154.8px;top:206.6px">1</div>
<div class="ttl" style="left:142.0px;top:219.3px;letter-spacing:-0.1px">断面図</div>
<svg class="th cd" style="left:140.6px;top:233.8px" width="90.4" height="64.6" viewBox="0 0 90 64" preserveAspectRatio="none"><rect x="0" y="0" width="90" height="64" fill="#000"/><rect x="0.5" y="0.5" width="89" height="63" fill="none" stroke="#8ecbe8" stroke-width="1" stroke-dasharray="1.1 1.1"/><rect x="2.4" y="2.1" width="85.4" height="59.8" fill="none" stroke="#08b818" stroke-width="0.9"/><rect x="62.5" y="59.2" width="25.1" height="2.7" fill="#14e828"/><path d="M78.5 59.2L78.5 62M83.5 59.2L83.5 62M83 59.2L83 62" fill="none" stroke="#053" stroke-width="0.5"/><path d="M12 38L81 38" stroke="#0a7a14" stroke-width="0.5"/><path d="M17.5 35L25 28.5L33.5 35.5Z" fill="none" stroke="#2828f0" stroke-width="1"/><path d="M19 34L25 30L31 34.5" fill="none" stroke="#20d0e0" stroke-width="0.6"/><rect x="18.5" y="36" width="19" height="6.5" fill="#f0e020" opacity="0.9"/><path d="M20 37.5L36 37.5M20 39.5L36 39.5M20 41L36 41" fill="none" stroke="#000" stroke-width="0.5"/><path d="M18 42L18 46.5L31.5 46.5L31.5 42" fill="none" stroke="#f01818" stroke-width="0.8"/><path d="M24.5 42L24.5 46.5" stroke="#f01818" stroke-width="0.6"/><path d="M14.5 29L14.5 41M16.5 30L16.5 40M31 28L31 36" fill="none" stroke="#f01818" stroke-width="0.6"/><rect x="14" y="36" width="5" height="1.5" fill="#2828f0"/><circle cx="36" cy="34.6" r="2" fill="#10e020"/><circle cx="34.2" cy="35.6" r="1.3" fill="#10e020"/><rect x="37" y="22" width="5.2" height="13" fill="#2828f0" opacity="0.95"/><path d="M38.5 22L38.5 35M40.5 22L40.5 35" fill="none" stroke="#f014f0" stroke-width="0.6"/><rect x="37.5" y="30" width="4" height="1.5" fill="#20d0e0" opacity="0.7"/><rect x="42.6" y="21" width="9.6" height="17" fill="none" stroke="#f0e020" stroke-width="0.9"/><path d="M44.5 21L44.5 38M47.5 21L47.5 38M50.2 21L50.2 38M42.6 25L52.2 25M42.6 29L52.2 29M42.6 33L52.2 33" fill="none" stroke="#f0e020" stroke-width="0.6"/><path d="M43.5 22L43.5 46.5M51.3 22L51.3 46.5M46 38L46 46.5M49 38L49 46.5" fill="none" stroke="#f01818" stroke-width="0.7"/><rect x="45" y="27" width="5" height="5" fill="#2828f0" opacity="0.9"/><circle cx="47.5" cy="35.5" r="2.4" fill="none" stroke="#f0e020" stroke-width="0.8"/><path d="M43 47.5L52 47.5" stroke="#f01818" stroke-width="0.6"/><rect x="53.2" y="21.5" width="6.3" height="10.5" fill="#2828f0"/><rect x="53.5" y="32.5" width="5" height="4.8" fill="#f014f0" opacity="0.8"/><rect x="58.6" y="19.6" width="11.8" height="17.8" fill="none" stroke="#f014f0" stroke-width="1"/><path d="M61.6 19.6L61.6 37.4M64.6 19.6L64.6 37.4M67.6 19.6L67.6 37.4" fill="none" stroke="#f014f0" stroke-width="0.9"/><rect x="58.6" y="19.2" width="5" height="2" fill="#f014f0"/><rect x="64" y="19.8" width="3" height="1.5" fill="#f014f0"/><path d="M70.5 22L70.5 37M72.6 22L72.6 36" fill="none" stroke="#2828f0" stroke-width="0.8"/><path d="M63 24L63 36M66 24L66 36" fill="none" stroke="#2828f0" stroke-width="0.5"/><circle cx="56.2" cy="33.6" r="2.8" fill="#10e020"/><path d="M72.2 38L71.5 33L73.2 29.5L75 33L74.6 38Z" fill="#10e020"/><path d="M78.8 21L78.8 38M80 22L80 38" fill="none" stroke="#f01818" stroke-width="0.6"/><path d="M77.5 21.5L77.5 37" stroke="#2828f0" stroke-width="0.5"/><rect x="40.5" y="50.6" width="6" height="1.2" fill="#10e020"/><rect x="47" y="50.9" width="3" height="0.7" fill="#0a8a18"/></svg>
<div class="cell" style="left:234.1px;top:200.3px;width:92.0px;height:31.5px"></div>
<div class="cb" style="left:236.7px;top:206.9px"></div>
<div class="num" style="left:249.1px;top:206.6px">2</div>
<div class="ttl" style="left:236.3px;top:219.3px;letter-spacing:-0.1px">立面図(西・南)</div>
<svg class="th cd" style="left:234.9px;top:233.8px" width="90.4" height="64.6" viewBox="0 0 90 64" preserveAspectRatio="none"><rect x="0" y="0" width="90" height="64" fill="#000"/><rect x="0.5" y="0.5" width="89" height="63" fill="none" stroke="#8ecbe8" stroke-width="1" stroke-dasharray="1.1 1.1"/><rect x="2.4" y="2.1" width="85.4" height="59.8" fill="none" stroke="#08b818" stroke-width="0.9"/><rect x="62.5" y="59.2" width="25.1" height="2.7" fill="#14e828"/><path d="M78.5 59.2L78.5 62M83.5 59.2L83.5 62M83 59.2L83 62" fill="none" stroke="#053" stroke-width="0.5"/><path d="M16.9 26.2L17.5 22.5L22.5 18.6L27 18.2L33.7 15.6L39 14.6L45 11.8L52 10.8L61.9 8.4L68 8.8L75 10L75 26.2Z" fill="#f014f0"/><path d="M20 22.5L75 22.5M27 18.8L75 18.8M36 15.2L75 15.2" fill="none" stroke="#000" stroke-width="0.55" stroke-opacity="0.8"/><path d="M30 17L30 26M36 17L36 26M42 17L42 26M48 12L48 26M54 12L54 26M60 12L60 26M66 12L66 26M71 12L71 26" fill="none" stroke="#000" stroke-width="0.7" stroke-opacity="0.75"/><rect x="62.5" y="24.2" width="1.7" height="1" fill="#000" opacity="0.8"/><rect x="61.4" y="20.7" width="1.1" height="1" fill="#000" opacity="0.8"/><rect x="45" y="20.9" width="1" height="0.7" fill="#000" opacity="0.8"/><rect x="31.4" y="21.1" width="1.2" height="0.6" fill="#000" opacity="0.8"/><rect x="62.7" y="20.4" width="1.1" height="0.7" fill="#000" opacity="0.8"/><rect x="72.2" y="19.7" width="1.2" height="0.7" fill="#000" opacity="0.8"/><rect x="35.1" y="24.3" width="1.6" height="1" fill="#000" opacity="0.8"/><rect x="72" y="20.6" width="1.4" height="0.7" fill="#000" opacity="0.8"/><rect x="39.1" y="20.5" width="0.9" height="0.7" fill="#000" opacity="0.8"/><rect x="63.8" y="22.5" width="1.2" height="0.8" fill="#000" opacity="0.8"/><rect x="38.9" y="21.2" width="1.1" height="0.6" fill="#000" opacity="0.8"/><rect x="57.6" y="19.9" width="1.7" height="0.8" fill="#000" opacity="0.8"/><rect x="38.8" y="21.5" width="1.7" height="1.1" fill="#000" opacity="0.8"/><rect x="50.8" y="19.7" width="0.8" height="0.8" fill="#000" opacity="0.8"/><rect x="71.1" y="20.1" width="1.1" height="0.9" fill="#000" opacity="0.8"/><rect x="38.8" y="22.2" width="1.4" height="0.8" fill="#000" opacity="0.8"/><rect x="61.7" y="21.4" width="1.2" height="0.9" fill="#000" opacity="0.8"/><rect x="24.4" y="21.2" width="1.7" height="1.1" fill="#000" opacity="0.8"/><rect x="69.5" y="22.3" width="1" height="0.8" fill="#000" opacity="0.8"/><rect x="62.8" y="22.8" width="1.3" height="0.8" fill="#000" opacity="0.8"/><rect x="28.2" y="19.7" width="2.2" height="1.1" fill="#000" opacity="0.8"/><rect x="59.7" y="21.4" width="0.8" height="0.6" fill="#000" opacity="0.8"/><rect x="11.2" y="26.2" width="70" height="0.9" fill="#d8b040"/><rect x="6.8" y="18.4" width="4.4" height="8" fill="none" stroke="#2828f0" stroke-width="0.5"/><path d="M6.8 18.4L11.2 18.4M6.8 19.5L11.2 19.5M6.8 20.6L11.2 20.6M6.8 21.7L11.2 21.7M6.8 22.8L11.2 22.8M6.8 23.9L11.2 23.9M6.8 25L11.2 25M6.8 26.1L11.2 26.1" fill="none" stroke="#2828f0" stroke-width="0.5"/><path d="M6.2 18L6.2 27" stroke="#f01818" stroke-width="0.5"/><rect x="76.5" y="10" width="4.6" height="16.4" fill="none" stroke="#2828f0" stroke-width="0.5"/><path d="M76.5 10L81.1 10M76.5 11.2L81.1 11.2M76.5 12.4L81.1 12.4M76.5 13.6L81.1 13.6M76.5 14.8L81.1 14.8M76.5 16L81.1 16M76.5 17.2L81.1 17.2M76.5 18.4L81.1 18.4M76.5 19.6L81.1 19.6M76.5 20.8L81.1 20.8M76.5 22L81.1 22M76.5 23.2L81.1 23.2M76.5 24.4L81.1 24.4M76.5 25.6L81.1 25.6" fill="none" stroke="#2828f0" stroke-width="0.55"/><path d="M82 9.5L82 27" stroke="#f01818" stroke-width="0.5"/><rect x="38.5" y="29.4" width="5" height="1" fill="#10e020"/><rect x="44" y="29.7" width="3" height="0.6" fill="#0a8a18"/><path d="M17 54.4L17.6 46.2L21 44.4L26.2 41.2L31 40.6L37.5 37.4L44 37L52.5 36L56 37.4L59.4 38.4L59.4 54.4Z" fill="#f014f0"/><path d="M18 50.5L59 50.5M18 46.5L59 46.5M27 42.5L59 42.5" fill="none" stroke="#000" stroke-width="0.5" stroke-opacity="0.8"/><rect x="33.8" y="41.9" width="2.1" height="1.2" fill="#000" opacity="0.8"/><rect x="20.9" y="46.2" width="0.9" height="0.8" fill="#000" opacity="0.8"/><rect x="28" y="46.5" width="0.9" height="0.9" fill="#000" opacity="0.8"/><rect x="43" y="46.7" width="1.2" height="1.2" fill="#000" opacity="0.8"/><rect x="27.3" y="46.7" width="0.7" height="0.6" fill="#000" opacity="0.8"/><rect x="23.3" y="44.4" width="1.2" height="0.7" fill="#000" opacity="0.8"/><rect x="40.9" y="43.4" width="0.7" height="0.7" fill="#000" opacity="0.8"/><rect x="42.7" y="46" width="1.4" height="0.9" fill="#000" opacity="0.8"/><rect x="54.6" y="44.8" width="1.1" height="0.9" fill="#000" opacity="0.8"/><rect x="28" y="46.7" width="1.6" height="1" fill="#000" opacity="0.8"/><rect x="29.7" y="50.3" width="1.2" height="1" fill="#000" opacity="0.8"/><rect x="32" y="50" width="1" height="0.7" fill="#000" opacity="0.8"/><rect x="40.8" y="49.3" width="1.4" height="1.1" fill="#000" opacity="0.8"/><rect x="41.1" y="45.6" width="1.8" height="1" fill="#000" opacity="0.8"/><rect x="44.5" y="42.1" width="1.5" height="0.9" fill="#000" opacity="0.8"/><rect x="33.7" y="47.6" width="0.8" height="0.8" fill="#000" opacity="0.8"/><rect x="42.4" y="46" width="1" height="0.8" fill="#000" opacity="0.8"/><rect x="28.3" y="45.2" width="1.3" height="0.7" fill="#000" opacity="0.8"/><rect x="34.3" y="44.2" width="0.8" height="0.7" fill="#000" opacity="0.8"/><rect x="29.3" y="45.2" width="1.5" height="1.1" fill="#000" opacity="0.8"/><rect x="24.3" y="43" width="1.4" height="1.2" fill="#000" opacity="0.8"/><rect x="51.1" y="43.3" width="0.8" height="0.6" fill="#000" opacity="0.8"/><rect x="33" y="46.7" width="1.7" height="0.9" fill="#000" opacity="0.8"/><rect x="52.5" y="50.1" width="1.5" height="0.9" fill="#000" opacity="0.8"/><rect x="34" y="45.9" width="1.2" height="0.8" fill="#000" opacity="0.8"/><rect x="26.8" y="43.1" width="0.9" height="0.6" fill="#000" opacity="0.8"/><path d="M58 31.6L75.2 31.6L75.2 57.6L59.6 57.6" fill="none" stroke="#f01818" stroke-width="0.8"/><path d="M58.4 32L74 56" stroke="#f01818" stroke-width="0.9"/><path d="M60 32L75 53" stroke="#f01818" stroke-width="0.5"/><path d="M63 39L64.5 39M66 44L67.5 44M69 49L70.5 49M72 53L73.5 53" fill="none" stroke="#f014f0" stroke-width="0.9"/><path d="M73.6 32L73.6 57" stroke="#f01818" stroke-width="0.6"/><rect x="77" y="38" width="4.4" height="17" fill="none" stroke="#2828f0" stroke-width="0.5"/><path d="M77 38L81.4 38M77 39.2L81.4 39.2M77 40.4L81.4 40.4M77 41.6L81.4 41.6M77 42.8L81.4 42.8M77 44L81.4 44M77 45.2L81.4 45.2M77 46.4L81.4 46.4M77 47.6L81.4 47.6M77 48.8L81.4 48.8M77 50L81.4 50M77 51.2L81.4 51.2M77 52.4L81.4 52.4M77 53.6L81.4 53.6" fill="none" stroke="#2828f0" stroke-width="0.55"/><rect x="13" y="54.6" width="53" height="0.9" fill="#d8b040"/><rect x="8.5" y="54" width="1.5" height="1.2" fill="#2828f0"/><rect x="38.5" y="57.3" width="5" height="1" fill="#10e020"/><rect x="44" y="57.6" width="2.5" height="0.6" fill="#0a8a18"/></svg>
<div class="cell" style="left:328.4px;top:200.3px;width:92.0px;height:31.5px"></div>
<div class="cb" style="left:331.0px;top:206.9px"></div>
<div class="num" style="left:343.4px;top:206.6px">3</div>
<div class="ttl" style="left:330.6px;top:219.3px;letter-spacing:-0.1px">4～7階平面図</div>
<svg class="th cd" style="left:329.2px;top:233.8px" width="90.4" height="64.6" viewBox="0 0 90 64" preserveAspectRatio="none"><rect x="0" y="0" width="90" height="64" fill="#000"/><rect x="0.5" y="0.5" width="89" height="63" fill="none" stroke="#8ecbe8" stroke-width="1" stroke-dasharray="1.1 1.1"/><rect x="2.4" y="2.1" width="85.4" height="59.8" fill="none" stroke="#08b818" stroke-width="0.9"/><rect x="62.8" y="59.2" width="24.8" height="2.7" fill="#14e828"/><path d="M78.8 59.2L78.8 62M83.8 59.2L83.8 62M83 59.2L83 62" fill="none" stroke="#053" stroke-width="0.5"/><g transform="rotate(-48 16.5 15.8)"><rect x="8.5" y="9.5" width="15" height="12.5" fill="none" stroke="#f01818" stroke-width="0.7"/><path d="M8.5 13.5L23.5 13.5M12 9.5L12 22M16 9.5L16 22M20 9.5L20 22" fill="none" stroke="#f01818" stroke-width="0.5"/><rect x="10" y="11" width="12" height="9" fill="#f014f0" opacity="0.85"/><rect x="11.5" y="12.5" width="8" height="3.4" fill="#f0e020" opacity="0.95"/><rect x="10.5" y="17" width="6" height="3" fill="#2828f0" opacity="0.95"/><rect x="18.7" y="11.8" width="1.1" height="1" fill="#10e020" opacity="0.95"/><rect x="18" y="11.7" width="2.1" height="1.1" fill="#10e020" opacity="0.95"/><rect x="11.1" y="15.2" width="1.7" height="1.2" fill="#10e020" opacity="0.95"/><rect x="16.7" y="11.6" width="1.5" height="0.8" fill="#000" opacity="0.95"/><rect x="12" y="14.1" width="1.5" height="0.9" fill="#000" opacity="0.95"/><rect x="12.2" y="15.8" width="1.3" height="0.8" fill="#2828f0" opacity="0.95"/><rect x="13.6" y="12.2" width="2.4" height="1.3" fill="#10e020" opacity="0.95"/><rect x="18.5" y="18.5" width="1.2" height="0.7" fill="#000" opacity="0.95"/><rect x="14.8" y="13.9" width="1.1" height="0.8" fill="#2828f0" opacity="0.95"/><rect x="12.6" y="13.1" width="1.6" height="1" fill="#2828f0" opacity="0.95"/><rect x="19.5" y="19.1" width="2.3" height="1.2" fill="#000" opacity="0.95"/><rect x="13" y="12" width="2" height="1.3" fill="#10e020" opacity="0.95"/><rect x="12.9" y="11.9" width="1.3" height="1.3" fill="#000" opacity="0.95"/><rect x="21" y="16.5" width="1.2" height="1" fill="#000" opacity="0.95"/><rect x="21.3" y="12.2" width="1.7" height="1.2" fill="#f0e020" opacity="0.95"/><rect x="19" y="15.5" width="1.1" height="1" fill="#f0e020" opacity="0.95"/></g><path d="M4.5 29.6L23 29.6" stroke="#0a9a18" stroke-width="0.6"/><rect x="11" y="28.9" width="7" height="1" fill="#0c7a18"/><circle cx="19.6" cy="37.4" r="2.2" fill="none" stroke="#10e020" stroke-width="0.9"/><path d="M18.6 35L20.6 37.2L18.8 38.4Z" fill="#10e020"/><rect x="32.4" y="20" width="39.6" height="5.8" fill="none" stroke="#f01818" stroke-width="0.7"/><path d="M39 20L39 25.8M45.6 20L45.6 25.8M52.2 20L52.2 25.8M58.8 20L58.8 25.8M65.4 20L65.4 25.8" fill="none" stroke="#f01818" stroke-width="0.6"/><path d="M32.4 25.8L28.2 25.8L28.2 45L33 45" fill="none" stroke="#f01818" stroke-width="0.7"/><path d="M28.2 30L32 30M28.2 35L32 35M28.2 40L32 40M32 25.8L32 45" fill="none" stroke="#f01818" stroke-width="0.6"/><rect x="33" y="26.6" width="34" height="7" fill="#f0e020" opacity="0.5"/><rect x="33" y="26.6" width="34" height="7" fill="none" stroke="#f0e020" stroke-width="0.8"/><path d="M37.2 26.6L37.2 33.6M41.4 26.6L41.4 33.6M45.6 26.6L45.6 33.6M49.8 26.6L49.8 33.6M54 26.6L54 33.6M58.2 26.6L58.2 33.6M62.4 26.6L62.4 33.6" fill="none" stroke="#000" stroke-width="0.7" stroke-opacity="0.8"/><rect x="40.5" y="31.6" width="1.2" height="0.8" fill="#f01818" opacity="0.95"/><rect x="38.6" y="30.2" width="2.3" height="1.4" fill="#f01818" opacity="0.95"/><rect x="55.9" y="29.4" width="1.2" height="1" fill="#f01818" opacity="0.95"/><rect x="43" y="29.5" width="1" height="0.9" fill="#10e020" opacity="0.95"/><rect x="55.3" y="31.2" width="1.8" height="1.4" fill="#f01818" opacity="0.95"/><rect x="55.6" y="27.1" width="1.2" height="1.1" fill="#f014f0" opacity="0.95"/><rect x="65.9" y="26.6" width="2" height="1.5" fill="#f014f0" opacity="0.95"/><rect x="49.8" y="28.3" width="1.8" height="1.3" fill="#f014f0" opacity="0.95"/><rect x="45.7" y="30.6" width="2.1" height="1.1" fill="#f014f0" opacity="0.95"/><rect x="57.7" y="29.7" width="1.6" height="1.4" fill="#f014f0" opacity="0.95"/><rect x="60.1" y="26.6" width="1.1" height="0.8" fill="#10e020" opacity="0.95"/><rect x="39.1" y="30.5" width="1.3" height="0.9" fill="#f014f0" opacity="0.95"/><rect x="52.4" y="29.1" width="2.5" height="1.3" fill="#000" opacity="0.95"/><rect x="49" y="28.9" width="1.3" height="0.8" fill="#000" opacity="0.95"/><rect x="40.7" y="32" width="2" height="1.2" fill="#10e020" opacity="0.95"/><rect x="61" y="31.5" width="2.7" height="1.4" fill="#f014f0" opacity="0.95"/><rect x="55.9" y="31.8" width="2.1" height="1.1" fill="#f01818" opacity="0.95"/><rect x="46.8" y="29.5" width="1.3" height="1.1" fill="#f014f0" opacity="0.95"/><rect x="48.7" y="26.4" width="2.1" height="1.5" fill="#f01818" opacity="0.95"/><rect x="65.2" y="32.1" width="1.1" height="0.8" fill="#f014f0" opacity="0.95"/><rect x="38.2" y="30.6" width="1.9" height="1.4" fill="#f014f0" opacity="0.95"/><rect x="60" y="32" width="2" height="1" fill="#000" opacity="0.95"/><rect x="33.6" y="30.9" width="2.3" height="1.2" fill="#f01818" opacity="0.95"/><rect x="35.7" y="28.2" width="1.4" height="0.9" fill="#10e020" opacity="0.95"/><rect x="61.9" y="27.8" width="1.3" height="0.8" fill="#f01818" opacity="0.95"/><rect x="58.5" y="29.7" width="2.9" height="1.4" fill="#10e020" opacity="0.95"/><path d="M32 35.2L66 35.2" stroke="#f01818" stroke-width="0.7"/><rect x="38" y="36.6" width="27.5" height="6.4" fill="#f0e020" opacity="0.5"/><rect x="38" y="36.6" width="27.5" height="6.4" fill="none" stroke="#f0e020" stroke-width="0.8"/><path d="M42.5 36.6L42.5 43M47 36.6L47 43M51.5 36.6L51.5 43M56 36.6L56 43M60.5 36.6L60.5 43" fill="none" stroke="#000" stroke-width="0.7" stroke-opacity="0.8"/><rect x="38.3" y="37.8" width="1" height="1" fill="#f01818" opacity="0.95"/><rect x="63.1" y="38.9" width="1.3" height="1" fill="#000" opacity="0.95"/><rect x="59.6" y="37" width="1.6" height="1.2" fill="#10e020" opacity="0.95"/><rect x="57.7" y="36.8" width="1.4" height="1.3" fill="#10e020" opacity="0.95"/><rect x="56.4" y="36.7" width="1.8" height="1.3" fill="#f014f0" opacity="0.95"/><rect x="54.6" y="38" width="1.5" height="1.2" fill="#10e020" opacity="0.95"/><rect x="42.3" y="37.2" width="1.8" height="1.1" fill="#10e020" opacity="0.95"/><rect x="44.2" y="41" width="1.6" height="1" fill="#f01818" opacity="0.95"/><rect x="44.9" y="37" width="1.7" height="1.3" fill="#10e020" opacity="0.95"/><rect x="48.3" y="40.7" width="1.8" height="1.3" fill="#10e020" opacity="0.95"/><rect x="59.8" y="39.1" width="2.1" height="1.1" fill="#10e020" opacity="0.95"/><rect x="45" y="37.9" width="1" height="0.8" fill="#f014f0" opacity="0.95"/><rect x="51.2" y="39.6" width="1.9" height="1.4" fill="#10e020" opacity="0.95"/><rect x="60.3" y="40.8" width="2" height="1" fill="#10e020" opacity="0.95"/><rect x="53.7" y="41.1" width="1.6" height="1.5" fill="#f014f0" opacity="0.95"/><rect x="46.2" y="40.8" width="1.7" height="1" fill="#10e020" opacity="0.95"/><rect x="55.3" y="36.5" width="1.9" height="1.1" fill="#f014f0" opacity="0.95"/><rect x="58.7" y="37.3" width="1.2" height="1.1" fill="#f014f0" opacity="0.95"/><rect x="60.4" y="39.3" width="2.6" height="1.5" fill="#f014f0" opacity="0.95"/><rect x="61.5" y="40.7" width="1.8" height="1.2" fill="#f014f0" opacity="0.95"/><path d="M34 44.2L62 44.2" stroke="#f01818" stroke-width="0.6"/><path d="M64.6 27L71.5 23.6L86.6 39.6L79.6 49.8L68.4 43L65.4 35Z" fill="#f014f0" opacity="0.6"/><path d="M69 29L73 27L83 38.5L79 44L70 38.5Z" fill="#f0e020" opacity="0.55"/><rect x="68" y="32.3" width="1.2" height="1.1" fill="#000" opacity="0.95"/><rect x="76" y="40.2" width="2.8" height="1.6" fill="#f01818" opacity="0.95"/><rect x="80.6" y="43.7" width="2.6" height="1.3" fill="#f0e020" opacity="0.95"/><rect x="83.6" y="25.7" width="1.9" height="1.1" fill="#f014f0" opacity="0.95"/><rect x="71.8" y="35.2" width="1.4" height="1.4" fill="#f0e020" opacity="0.95"/><rect x="72" y="36.9" width="1.3" height="0.9" fill="#f0e020" opacity="0.95"/><rect x="68.6" y="27.1" width="1.7" height="0.9" fill="#f0e020" opacity="0.95"/><rect x="73.7" y="41.6" width="1.8" height="1.4" fill="#000" opacity="0.95"/><rect x="70.5" y="37.3" width="2.2" height="1.1" fill="#000" opacity="0.95"/><rect x="66.2" y="41.9" width="1.4" height="1.2" fill="#000" opacity="0.95"/><rect x="67.2" y="32.9" width="2.3" height="1.2" fill="#f0e020" opacity="0.95"/><rect x="65.6" y="43.6" width="1.9" height="1.1" fill="#f01818" opacity="0.95"/><rect x="80.7" y="25.6" width="2.4" height="1.4" fill="#f014f0" opacity="0.95"/><rect x="78.8" y="26" width="1.5" height="0.9" fill="#f014f0" opacity="0.95"/><rect x="65.6" y="34.7" width="2.4" height="1.3" fill="#f01818" opacity="0.95"/><rect x="75.4" y="36.2" width="2.5" height="1.5" fill="#f014f0" opacity="0.95"/><rect x="81" y="40" width="1.7" height="1.4" fill="#f014f0" opacity="0.95"/><rect x="77" y="31.3" width="1.8" height="0.9" fill="#000" opacity="0.95"/><rect x="75.8" y="37.5" width="2" height="1.1" fill="#f014f0" opacity="0.95"/><rect x="78.5" y="41.4" width="1.2" height="1.2" fill="#2828f0" opacity="0.95"/><rect x="67.3" y="39.3" width="2.4" height="1.3" fill="#000" opacity="0.95"/><rect x="75.5" y="44.4" width="1.5" height="1.3" fill="#f0e020" opacity="0.95"/><rect x="70.2" y="45.5" width="1.5" height="1" fill="#2828f0" opacity="0.95"/><rect x="65.9" y="37.5" width="2.4" height="1.2" fill="#f01818" opacity="0.95"/><rect x="80.6" y="42.9" width="1.3" height="1.2" fill="#f014f0" opacity="0.95"/><rect x="80.2" y="38.9" width="2.4" height="1.2" fill="#2828f0" opacity="0.95"/><rect x="69.2" y="29.4" width="2.7" height="1.6" fill="#f014f0" opacity="0.95"/><rect x="74.9" y="33.3" width="2.2" height="1.2" fill="#2828f0" opacity="0.95"/><rect x="67.1" y="45.1" width="2.4" height="1.6" fill="#f014f0" opacity="0.95"/><rect x="65.4" y="37.3" width="1.7" height="1.3" fill="#f014f0" opacity="0.95"/><path d="M71.5 23.6L75 20.6L88 36.6L86.6 39.6" fill="none" stroke="#f01818" stroke-width="0.7"/><path d="M62 44.5L72 57.5L83 46L79.6 49.8" fill="none" stroke="#f01818" stroke-width="0.7"/><path d="M65 48.2L69 44.6M68 52L73 47.6M70.5 55.5L76 50M77 24L74 27.6M81 29L78 32M85 34L82 37" fill="none" stroke="#f01818" stroke-width="0.6"/><path d="M37.6 38.5 Q33.6 42 35.2 48 Q36.6 52 38.4 54.5" fill="none" stroke="#f0e020" stroke-width="1.1"/><path d="M38.6 49.5L41.6 55.6L48.6 57" fill="none" stroke="#f014f0" stroke-width="1"/><path d="M36.5 58L50 56.6" stroke="#f014f0" stroke-width="0.9"/><rect x="51.5" y="57.2" width="6" height="0.9" fill="#0c8a1c"/></svg>
<div class="cell" style="left:422.7px;top:200.3px;width:92.0px;height:31.5px"></div>
<div class="cb" style="left:425.3px;top:206.9px"></div>
<div class="num" style="left:437.7px;top:206.6px">4</div>
<div class="ttl" style="left:424.9px;top:219.3px;letter-spacing:-0.1px">2階平面図</div>
<div class="abs" style="left:502.2px;top:205.3px;width:10.5px;height:10.5px;background:#1f3f9e;color:#fff;font-size:7.5px;line-height:10.5px;text-align:center;font-weight:bold">図</div>
<svg class="th cd" style="left:423.5px;top:233.8px" width="90.4" height="64.6" viewBox="0 0 90 64" preserveAspectRatio="none"><rect x="0" y="0" width="90" height="64" fill="#000"/><rect x="0.5" y="0.5" width="89" height="63" fill="none" stroke="#8ecbe8" stroke-width="1" stroke-dasharray="1.1 1.1"/><rect x="2.4" y="2.1" width="85.4" height="59.8" fill="none" stroke="#08b818" stroke-width="0.9"/><rect x="62.8" y="59.2" width="24.8" height="2.7" fill="#14e828"/><path d="M78.8 59.2L78.8 62M83.8 59.2L83.8 62M83 59.2L83 62" fill="none" stroke="#053" stroke-width="0.5"/><rect x="11.4" y="5.4" width="35.4" height="15" fill="none" stroke="#f01818" stroke-width="0.7"/><path d="M11.4 9L46.8 9M17 5.4L17 20.4M23 5.4L23 9M29 5.4L29 9M35 5.4L35 9M41 5.4L41 9" fill="none" stroke="#f01818" stroke-width="0.6"/><rect x="19" y="10.2" width="23" height="4.6" fill="none" stroke="#f01818" stroke-width="0.7"/><rect x="13" y="16" width="34" height="5.5" fill="#f014f0" opacity="0.5"/><rect x="15" y="21" width="52" height="16.5" fill="#f014f0" opacity="0.48"/><path d="M46.8 9.2L57.6 4.6L75.6 22L67.6 40L52.6 33.6L46.8 20.4Z" fill="#f014f0" opacity="0.45"/><rect x="45.2" y="20.4" width="1.5" height="1.1" fill="#f0e020" opacity="0.95"/><rect x="25.7" y="19.4" width="2" height="1.2" fill="#000" opacity="0.95"/><rect x="40.2" y="17.8" width="1.5" height="1.3" fill="#2828f0" opacity="0.95"/><rect x="23.4" y="16.6" width="2.7" height="1.6" fill="#2828f0" opacity="0.95"/><rect x="38.7" y="15.8" width="1.6" height="0.8" fill="#f01818" opacity="0.95"/><rect x="25.1" y="18.2" width="1.3" height="0.9" fill="#2828f0" opacity="0.95"/><rect x="42.8" y="19.3" width="1.8" height="0.9" fill="#2828f0" opacity="0.95"/><rect x="20.7" y="15.6" width="1.6" height="1" fill="#2828f0" opacity="0.95"/><rect x="40.3" y="16.9" width="1.7" height="1.5" fill="#f0e020" opacity="0.95"/><rect x="34.7" y="18.2" width="1.6" height="1.1" fill="#2828f0" opacity="0.95"/><rect x="16.1" y="20.8" width="1.2" height="0.9" fill="#2828f0" opacity="0.95"/><rect x="30.6" y="20.1" width="2.3" height="1.4" fill="#f01818" opacity="0.95"/><rect x="39.4" y="19.5" width="1.6" height="0.9" fill="#000" opacity="0.95"/><rect x="35.8" y="20.1" width="2.2" height="1.6" fill="#2828f0" opacity="0.95"/><rect x="26.7" y="20" width="2.5" height="1.3" fill="#2828f0" opacity="0.95"/><rect x="25.1" y="18" width="1.7" height="1" fill="#2828f0" opacity="0.95"/><rect x="35" y="18.5" width="1.7" height="0.9" fill="#f0e020" opacity="0.95"/><rect x="42.2" y="17.3" width="2" height="1" fill="#2828f0" opacity="0.95"/><rect x="22.7" y="17.7" width="1.5" height="1.4" fill="#f0e020" opacity="0.95"/><rect x="14.5" y="16.5" width="1.6" height="0.9" fill="#f01818" opacity="0.95"/><rect x="30.7" y="18.6" width="2.4" height="1.6" fill="#2828f0" opacity="0.95"/><rect x="35.1" y="16.2" width="2" height="1" fill="#2828f0" opacity="0.95"/><rect x="19.5" y="19.6" width="1.9" height="1.4" fill="#f01818" opacity="0.95"/><rect x="39.5" y="15.4" width="2.4" height="1.5" fill="#000" opacity="0.95"/><rect x="28.3" y="24.4" width="1.4" height="0.8" fill="#f0e020" opacity="0.95"/><rect x="15.9" y="22.2" width="1.7" height="1.4" fill="#f0e020" opacity="0.95"/><rect x="50.1" y="31.3" width="1.9" height="1.4" fill="#2828f0" opacity="0.95"/><rect x="54.8" y="20.9" width="2.5" height="1.4" fill="#f014f0" opacity="0.95"/><rect x="22.2" y="35.3" width="1.5" height="1.1" fill="#20d0e0" opacity="0.95"/><rect x="32.4" y="26.1" width="1.5" height="1.2" fill="#f0e020" opacity="0.95"/><rect x="41" y="35.3" width="2.1" height="1.5" fill="#2828f0" opacity="0.95"/><rect x="45.1" y="33.6" width="2.6" height="1.6" fill="#000" opacity="0.95"/><rect x="26" y="25.4" width="0.9" height="0.8" fill="#f0e020" opacity="0.95"/><rect x="33.2" y="27.5" width="3.1" height="1.7" fill="#000" opacity="0.95"/><rect x="24.9" y="24.9" width="2.3" height="1.2" fill="#10e020" opacity="0.95"/><rect x="22.9" y="31.7" width="1.6" height="1.4" fill="#f0e020" opacity="0.95"/><rect x="60.7" y="31.3" width="1.3" height="1.1" fill="#20d0e0" opacity="0.95"/><rect x="53" y="24.1" width="1.7" height="1.6" fill="#f01818" opacity="0.95"/><rect x="17.7" y="34.6" width="1.9" height="1.2" fill="#f01818" opacity="0.95"/><rect x="39.5" y="34.3" width="1.7" height="1" fill="#f01818" opacity="0.95"/><rect x="26.8" y="29.4" width="1.3" height="1.1" fill="#10e020" opacity="0.95"/><rect x="34.1" y="23.9" width="3.4" height="1.7" fill="#20d0e0" opacity="0.95"/><rect x="16.9" y="22.7" width="1.4" height="0.9" fill="#f014f0" opacity="0.95"/><rect x="33.5" y="29.7" width="2" height="1.4" fill="#20d0e0" opacity="0.95"/><rect x="57.2" y="20.8" width="3" height="1.8" fill="#000" opacity="0.95"/><rect x="31.2" y="25.1" width="1.8" height="1.6" fill="#000" opacity="0.95"/><rect x="57.9" y="24.6" width="2.6" height="1.8" fill="#2828f0" opacity="0.95"/><rect x="19.7" y="30.2" width="2.4" height="1.3" fill="#10e020" opacity="0.95"/><rect x="52.6" y="29.1" width="1.7" height="1" fill="#000" opacity="0.95"/><rect x="38.7" y="22.5" width="1.9" height="1.4" fill="#2828f0" opacity="0.95"/><rect x="26.5" y="29.5" width="1.1" height="1" fill="#000" opacity="0.95"/><rect x="63.1" y="28.7" width="1.8" height="1.6" fill="#f014f0" opacity="0.95"/><rect x="22.4" y="28.5" width="2.8" height="1.7" fill="#f014f0" opacity="0.95"/><rect x="51.9" y="31" width="3" height="1.7" fill="#000" opacity="0.95"/><rect x="46.6" y="27.2" width="2.7" height="1.8" fill="#20d0e0" opacity="0.95"/><rect x="17.7" y="21.3" width="1.6" height="1" fill="#f0e020" opacity="0.95"/><rect x="50" y="22" width="0.9" height="0.8" fill="#000" opacity="0.95"/><rect x="17.7" y="24.2" width="2.8" height="1.7" fill="#2828f0" opacity="0.95"/><rect x="50.5" y="34.1" width="2.1" height="1.3" fill="#000" opacity="0.95"/><rect x="54.6" y="23.6" width="1.7" height="1.6" fill="#000" opacity="0.95"/><rect x="35" y="33.9" width="1.2" height="1.2" fill="#20d0e0" opacity="0.95"/><rect x="51" y="33.1" width="1" height="0.9" fill="#f0e020" opacity="0.95"/><rect x="36.9" y="27.3" width="1.3" height="1" fill="#000" opacity="0.95"/><rect x="17.9" y="32.8" width="3.1" height="1.7" fill="#000" opacity="0.95"/><rect x="64.5" y="33.6" width="1.7" height="0.9" fill="#f0e020" opacity="0.95"/><rect x="38.8" y="24.2" width="1.4" height="1" fill="#000" opacity="0.95"/><rect x="14.6" y="26.9" width="1.9" height="1" fill="#2828f0" opacity="0.95"/><rect x="49.3" y="31.9" width="1.9" height="1.1" fill="#f014f0" opacity="0.95"/><rect x="29.4" y="35.6" width="1.5" height="1" fill="#f014f0" opacity="0.95"/><rect x="17.1" y="29.5" width="2.3" height="1.5" fill="#2828f0" opacity="0.95"/><rect x="40" y="33.8" width="0.9" height="0.9" fill="#10e020" opacity="0.95"/><rect x="26" y="22.6" width="2.8" height="1.5" fill="#f0e020" opacity="0.95"/><rect x="16.3" y="22" width="2.3" height="1.4" fill="#000" opacity="0.95"/><rect x="24.3" y="31.4" width="2.1" height="1.7" fill="#f01818" opacity="0.95"/><rect x="46.8" y="27.9" width="1.8" height="0.9" fill="#20d0e0" opacity="0.95"/><rect x="45.7" y="29.5" width="0.9" height="0.8" fill="#f0e020" opacity="0.95"/><rect x="21" y="26.1" width="1.4" height="1.3" fill="#000" opacity="0.95"/><rect x="22.3" y="33.4" width="2" height="1.2" fill="#000" opacity="0.95"/><rect x="42" y="34.7" width="1.6" height="1.5" fill="#2828f0" opacity="0.95"/><rect x="59" y="32.1" width="1.2" height="1.1" fill="#10e020" opacity="0.95"/><rect x="50.2" y="23.9" width="2.3" height="1.4" fill="#000" opacity="0.95"/><rect x="26.9" y="34.5" width="1.4" height="1.3" fill="#000" opacity="0.95"/><rect x="16.4" y="25.7" width="1.8" height="1.6" fill="#20d0e0" opacity="0.95"/><rect x="36.6" y="31.6" width="1.5" height="1" fill="#000" opacity="0.95"/><rect x="58.7" y="34.6" width="1.4" height="0.9" fill="#f0e020" opacity="0.95"/><rect x="21.7" y="22.7" width="1.8" height="1.4" fill="#f01818" opacity="0.95"/><rect x="24.7" y="24.4" width="1.9" height="1.7" fill="#2828f0" opacity="0.95"/><rect x="51.6" y="34.5" width="2.2" height="1.8" fill="#20d0e0" opacity="0.95"/><rect x="54.7" y="33.8" width="1.8" height="1.8" fill="#10e020" opacity="0.95"/><rect x="34.8" y="30.8" width="2.7" height="1.6" fill="#f01818" opacity="0.95"/><rect x="53.8" y="22.6" width="2" height="1.1" fill="#000" opacity="0.95"/><rect x="55.3" y="27.9" width="1.3" height="1" fill="#f014f0" opacity="0.95"/><rect x="47.5" y="27" width="1.3" height="1" fill="#000" opacity="0.95"/><rect x="28.1" y="30.2" width="2.5" height="1.8" fill="#f0e020" opacity="0.95"/><rect x="19.9" y="35.2" width="2" height="1.7" fill="#f01818" opacity="0.95"/><rect x="44.4" y="26.3" width="1.5" height="0.8" fill="#000" opacity="0.95"/><rect x="39.9" y="26.6" width="2.2" height="1.4" fill="#20d0e0" opacity="0.95"/><rect x="36.4" y="28.9" width="1.5" height="0.8" fill="#000" opacity="0.95"/><rect x="17.9" y="30.9" width="1.5" height="1.2" fill="#000" opacity="0.95"/><rect x="20.5" y="34.3" width="2.2" height="1.5" fill="#f01818" opacity="0.95"/><rect x="49.3" y="29.3" width="1.3" height="1.1" fill="#20d0e0" opacity="0.95"/><rect x="59.4" y="30" width="1.9" height="1.5" fill="#20d0e0" opacity="0.95"/><rect x="25" y="32.7" width="1.8" height="1.1" fill="#2828f0" opacity="0.95"/><rect x="36.5" y="24.1" width="1.9" height="1.3" fill="#f01818" opacity="0.95"/><rect x="28.5" y="30.7" width="2.4" height="1.5" fill="#10e020" opacity="0.95"/><rect x="51.7" y="30.8" width="2" height="1.6" fill="#f0e020" opacity="0.95"/><rect x="16.8" y="35.8" width="1.5" height="0.9" fill="#000" opacity="0.95"/><rect x="58.7" y="29.5" width="2.2" height="1.3" fill="#f0e020" opacity="0.95"/><rect x="26.6" y="30.7" width="1.3" height="1.3" fill="#20d0e0" opacity="0.95"/><rect x="25.2" y="32.8" width="2.7" height="1.6" fill="#f0e020" opacity="0.95"/><rect x="27" y="33.8" width="1.2" height="0.9" fill="#f014f0" opacity="0.95"/><rect x="63.7" y="29.7" width="2.9" height="1.5" fill="#f014f0" opacity="0.95"/><rect x="50.3" y="28.4" width="2.6" height="1.4" fill="#f014f0" opacity="0.95"/><rect x="51.3" y="27.8" width="2.1" height="1.7" fill="#f014f0" opacity="0.95"/><rect x="65.5" y="33.4" width="1.5" height="1.1" fill="#f0e020" opacity="0.95"/><rect x="58.7" y="21.2" width="1.6" height="1.6" fill="#f01818" opacity="0.95"/><rect x="62.4" y="32.9" width="2.6" height="1.4" fill="#000" opacity="0.95"/><rect x="50.6" y="11.2" width="1.3" height="1.2" fill="#000" opacity="0.95"/><rect x="60.3" y="21.4" width="1.6" height="0.9" fill="#10e020" opacity="0.95"/><rect x="54.8" y="12.8" width="1.9" height="1.8" fill="#000" opacity="0.95"/><rect x="69.3" y="30.4" width="1.1" height="0.9" fill="#000" opacity="0.95"/><rect x="51.5" y="30.6" width="2.1" height="1.3" fill="#f0e020" opacity="0.95"/><rect x="51.2" y="24.5" width="2.6" height="1.5" fill="#f01818" opacity="0.95"/><rect x="60.5" y="26.7" width="1.3" height="1.1" fill="#f01818" opacity="0.95"/><rect x="56.3" y="31.3" width="1.1" height="0.9" fill="#f0e020" opacity="0.95"/><rect x="62.2" y="33.7" width="1.5" height="1" fill="#f01818" opacity="0.95"/><rect x="68.3" y="27.4" width="1.5" height="1.1" fill="#f0e020" opacity="0.95"/><rect x="69.9" y="24.2" width="0.9" height="0.8" fill="#000" opacity="0.95"/><rect x="67.6" y="27.3" width="2.3" height="1.4" fill="#10e020" opacity="0.95"/><rect x="60.8" y="20.1" width="0.9" height="0.9" fill="#2828f0" opacity="0.95"/><rect x="66.2" y="30.1" width="1" height="0.9" fill="#f0e020" opacity="0.95"/><rect x="68.1" y="31.1" width="2.4" height="1.8" fill="#f0e020" opacity="0.95"/><rect x="54.8" y="27.9" width="1.9" height="1.3" fill="#f01818" opacity="0.95"/><rect x="57.3" y="26.7" width="1.8" height="1.7" fill="#2828f0" opacity="0.95"/><rect x="63.3" y="13.2" width="3.2" height="1.6" fill="#10e020" opacity="0.95"/><rect x="61.8" y="32.2" width="1.4" height="1.1" fill="#000" opacity="0.95"/><rect x="60.9" y="28.9" width="1" height="0.9" fill="#2828f0" opacity="0.95"/><rect x="63.2" y="33" width="2.2" height="1.8" fill="#f01818" opacity="0.95"/><rect x="69.8" y="29.6" width="2.2" height="1.6" fill="#10e020" opacity="0.95"/><rect x="50.7" y="9.1" width="1.9" height="1.3" fill="#f0e020" opacity="0.95"/><rect x="67.8" y="21.3" width="2.5" height="1.6" fill="#000" opacity="0.95"/><rect x="54.8" y="11.7" width="2.4" height="1.4" fill="#f0e020" opacity="0.95"/><rect x="51.8" y="14.2" width="1.6" height="1" fill="#10e020" opacity="0.95"/><rect x="58.4" y="8.9" width="1.4" height="1" fill="#000" opacity="0.95"/><rect x="60.7" y="22.5" width="1.3" height="1.1" fill="#2828f0" opacity="0.95"/><rect x="50.4" y="15.5" width="1.7" height="1" fill="#10e020" opacity="0.95"/><rect x="65.9" y="20.7" width="2.2" height="1.6" fill="#2828f0" opacity="0.95"/><rect x="64.8" y="20.8" width="1.7" height="1" fill="#2828f0" opacity="0.95"/><rect x="58.6" y="27.1" width="2.7" height="1.4" fill="#2828f0" opacity="0.95"/><rect x="64.9" y="22.4" width="3.2" height="1.7" fill="#2828f0" opacity="0.95"/><rect x="58.5" y="29.6" width="1.3" height="1.2" fill="#000" opacity="0.95"/><rect x="62.6" y="29.4" width="2.8" height="1.7" fill="#000" opacity="0.95"/><rect x="66.1" y="24.9" width="1.6" height="1.4" fill="#f0e020" opacity="0.95"/><rect x="54" y="33.8" width="2.7" height="1.7" fill="#f0e020" opacity="0.95"/><rect x="50.5" y="12.6" width="3.2" height="1.6" fill="#f01818" opacity="0.95"/><rect x="56.6" y="20" width="1.4" height="1.1" fill="#000" opacity="0.95"/><rect x="56.3" y="17.2" width="1" height="0.9" fill="#10e020" opacity="0.95"/><rect x="58.6" y="16.3" width="2.7" height="1.5" fill="#000" opacity="0.95"/><rect x="53" y="16" width="2.3" height="1.6" fill="#10e020" opacity="0.95"/><rect x="60.4" y="9.6" width="1.6" height="1.4" fill="#f0e020" opacity="0.95"/><rect x="53.7" y="12.8" width="3.1" height="1.6" fill="#10e020" opacity="0.95"/><rect x="64.3" y="13.3" width="2.5" height="1.3" fill="#000" opacity="0.95"/><rect x="53.1" y="14.8" width="3.2" height="1.7" fill="#000" opacity="0.95"/><rect x="56.8" y="10.9" width="2.2" height="1.5" fill="#f0e020" opacity="0.95"/><rect x="54.6" y="12.2" width="2.6" height="1.6" fill="#000" opacity="0.95"/><rect x="61.7" y="25" width="1.3" height="0.9" fill="#000" opacity="0.95"/><rect x="51.5" y="25.8" width="2.2" height="1.4" fill="#000" opacity="0.95"/><rect x="51.8" y="27.4" width="1.3" height="0.9" fill="#f0e020" opacity="0.95"/><rect x="60.7" y="20.7" width="2.9" height="1.5" fill="#f0e020" opacity="0.95"/><rect x="55.2" y="32.6" width="0.9" height="0.8" fill="#2828f0" opacity="0.95"/><rect x="53.1" y="24.5" width="2" height="1.6" fill="#000" opacity="0.95"/><rect x="59.3" y="8.8" width="1.6" height="0.9" fill="#f0e020" opacity="0.95"/><rect x="68.6" y="24.1" width="2.1" height="1.7" fill="#10e020" opacity="0.95"/><rect x="68.2" y="11" width="1.2" height="1.2" fill="#f0e020" opacity="0.95"/><rect x="19.4" y="10.6" width="22" height="3.8" fill="#000" opacity="0.85"/><rect x="31.3" y="12.4" width="0.8" height="0.6" fill="#2828f0" opacity="0.95"/><rect x="20.4" y="11.8" width="0.9" height="0.8" fill="#2828f0" opacity="0.95"/><rect x="39.5" y="13.2" width="1" height="0.6" fill="#f01818" opacity="0.95"/><rect x="38.3" y="12.2" width="1.4" height="1.2" fill="#f01818" opacity="0.95"/><rect x="28.8" y="11.2" width="1.4" height="0.9" fill="#f014f0" opacity="0.95"/><rect x="32.1" y="12.2" width="1.8" height="1" fill="#f014f0" opacity="0.95"/><rect x="34.8" y="13.4" width="1.2" height="1.1" fill="#f01818" opacity="0.95"/><rect x="27.6" y="12.2" width="1" height="0.8" fill="#f01818" opacity="0.95"/><rect x="24.2" y="12.6" width="1.5" height="1.1" fill="#f014f0" opacity="0.95"/><rect x="35.7" y="12.3" width="1.8" height="1" fill="#2828f0" opacity="0.95"/><path d="M13 33L16.6 37.4L20.2 33.9L20.2 33.9L23.8 38.3L27.4 34.8L27.4 34.8L31 39.2L34.6 35.7L34.6 35.7L38.2 40.1L41.8 36.6L41.8 36.6L45.4 41L49 37.5L49 37.5L52.6 41.9L56.2 38.4L56.2 38.4L59.8 42.8L63.4 39.3" fill="none" stroke="#f01818" stroke-width="0.7"/><path d="M57.6 4.6L62 2.8L80 20.6L75.6 22" fill="none" stroke="#f01818" stroke-width="0.7"/><path d="M75.6 22L79.6 24L70.6 43L67.6 40" fill="none" stroke="#f01818" stroke-width="0.7"/><path d="M66 10.5L63 13.5M70 14.5L67 17.5M74 18.5L71 21.5M74 30L78 32M71 36L75 38" fill="none" stroke="#f01818" stroke-width="0.6"/><circle cx="75" cy="10" r="2.2" fill="none" stroke="#10e020" stroke-width="0.9"/><path d="M74 7.6L76.2 9.8L74.2 11Z" fill="#10e020"/><rect x="30" y="41.2" width="12" height="1.1" fill="#14c028"/><rect x="43" y="41.5" width="4" height="0.7" fill="#0a8a18"/><path d="M11.4 54.6L12 50.4L17.4 48.8L22 50.2L22.4 54.6Z" fill="#10e020" opacity="0.8"/><rect x="12.6" y="50.8" width="4.9" height="1.6" fill="#000" opacity="0.8"/><rect x="13.6" y="53" width="5.5" height="0.8" fill="#000" opacity="0.6"/><path d="M25.4 54.6L26 50.4L31.4 48.8L36 50.2L36.4 54.6Z" fill="#10e020" opacity="0.8"/><rect x="26.6" y="50.8" width="5" height="1.6" fill="#000" opacity="0.8"/><rect x="27.6" y="53" width="5.5" height="0.8" fill="#000" opacity="0.6"/><path d="M39.4 54.6L40 50.4L44.5 48.8L48.2 50.2L48.6 54.6Z" fill="#10e020" opacity="0.8"/><rect x="40.6" y="50.8" width="4.1" height="1.6" fill="#000" opacity="0.8"/><rect x="41.2" y="53" width="4.6" height="0.8" fill="#000" opacity="0.6"/><path d="M50.6 54.6L51.2 50.4L55.8 48.8L59.6 50.2L60 54.6Z" fill="#10e020" opacity="0.8"/><rect x="51.8" y="50.8" width="4.2" height="1.6" fill="#000" opacity="0.8"/><rect x="52.5" y="53" width="4.7" height="0.8" fill="#000" opacity="0.6"/><path d="M62.8 54.6L63.4 50.4L66.9 48.8L69.8 50.2L70.2 54.6Z" fill="#10e020" opacity="0.8"/><rect x="64" y="50.8" width="3.3" height="1.6" fill="#000" opacity="0.8"/><rect x="64.3" y="53" width="3.7" height="0.8" fill="#000" opacity="0.6"/><path d="M74 54.6L74.6 50.4L77.1 48.8L79.2 50.2L79.6 54.6Z" fill="#10e020" opacity="0.8"/><rect x="75.2" y="50.8" width="2.5" height="1.6" fill="#000" opacity="0.8"/><rect x="75.1" y="53" width="2.8" height="0.8" fill="#000" opacity="0.6"/><rect x="37.5" y="57.2" width="9" height="1" fill="#14c028"/><rect x="47" y="57.5" width="4" height="0.6" fill="#0a8a18"/></svg>
<div class="cell" style="left:517.0px;top:200.3px;width:92.0px;height:31.5px"></div>
<div class="cb" style="left:519.6px;top:206.9px"></div>
<div class="num" style="left:532.0px;top:206.6px">5</div>
<div class="ttl" style="left:519.2px;top:219.3px;letter-spacing:-0.1px">配置図</div>
<svg class="abs" style="left:600.0px;top:204.8px" width="5" height="10" viewBox="0 0 5 10"><rect x=".9" y=".9" width="3.2" height="8.2" rx="1.6" fill="#f0a8a0" stroke="#d8281c" stroke-width="1.1"/></svg>
<svg class="th cd" style="left:517.8px;top:233.8px" width="90.4" height="64.6" viewBox="0 0 90 64" preserveAspectRatio="none"><rect x="0" y="0" width="90" height="64" fill="#000"/><rect x="0.5" y="0.5" width="89" height="63" fill="none" stroke="#8ecbe8" stroke-width="1" stroke-dasharray="1.1 1.1"/><rect x="2.4" y="2.1" width="85.4" height="59.8" fill="none" stroke="#08b818" stroke-width="0.9"/><rect x="62.8" y="59.2" width="24.8" height="2.7" fill="#14e828"/><path d="M78.8 59.2L78.8 62M83.8 59.2L83.8 62M83 59.2L83 62" fill="none" stroke="#053" stroke-width="0.5"/><path d="M13.6 3L20.2 37.6M15.2 3L21.8 37.6" fill="none" stroke="#f014f0" stroke-width="0.7"/><path d="M21.4 3.4L80.2 2.6L86.4 38.4L27 39.4Z" fill="#f014f0" opacity="0.2"/><path d="M21.4 3.4L80.2 2.6L86.4 38.4L27 39.4Z" fill="none" stroke="#f014f0" stroke-width="0.9"/><rect x="30.6" y="6.4" width="23.6" height="6.2" fill="#000" stroke="#f014f0" stroke-width="0.6"/><rect x="31.4" y="14.2" width="23.8" height="4.8" fill="#000" stroke="#f014f0" stroke-width="0.6"/><rect x="31" y="20.4" width="10" height="3" fill="#000" stroke="#f014f0" stroke-width="0.5"/><path d="M27 24.6L60 22.6" stroke="#f014f0" stroke-width="0.8"/><path d="M58 6L78 5L83 30L62 30Z" fill="#000" opacity="0.3"/><path d="M58 6L66 30M61.4 6L69.4 30M64.8 6L72.8 30M68.2 6L76.2 30M71.6 6L79.6 30M75 6L83 30" fill="none" stroke="#f014f0" stroke-width="0.7"/><path d="M60 10L80 9M60 14L80 13M60 18L80 17M60 22L80 21M60 26L80 25" fill="none" stroke="#f014f0" stroke-width="0.5"/><path d="M62 8L76 26M66 6L80 22" fill="none" stroke="#f014f0" stroke-width="0.9"/><path d="M31 26L82 24L84.6 37.4L33 38.4Z" fill="#000" opacity="0.2"/><path d="M33 26L38 38M37.6 26L42.6 38M42.2 26L47.2 38M46.8 26L51.8 38M51.4 26L56.4 38M56 26L61 38M60.6 26L65.6 38M65.2 26L70.2 38M69.8 26L74.8 38M74.4 26L79.4 38M79 26L84 38" fill="none" stroke="#f014f0" stroke-width="0.8"/><path d="M36 26L33 32M40.6 26L37.6 32M45.2 26L42.2 32M49.8 26L46.8 32M54.4 26L51.4 32M59 26L56 32M63.6 26L60.6 32M68.2 26L65.2 32M72.8 26L69.8 32M77.4 26L74.4 32M82 26L79 32" fill="none" stroke="#f014f0" stroke-width="0.5"/><rect x="22.4" y="8" width="2.4" height="3.6" fill="#10e020" opacity="0.95"/><rect x="23" y="13.5" width="2.6" height="3" fill="#10e020" opacity="0.95"/><rect x="24" y="19" width="2.4" height="4" fill="#10e020" opacity="0.95"/><rect x="25.2" y="25" width="2.6" height="5" fill="#10e020" opacity="0.95"/><rect x="26.4" y="32" width="3" height="5.6" fill="#10e020" opacity="0.95"/><rect x="68" y="3.8" width="3" height="2.4" fill="#10e020" opacity="0.95"/><rect x="42" y="32.6" width="3" height="2.6" fill="#10e020" opacity="0.95"/><rect x="54" y="32" width="3" height="2.6" fill="#10e020" opacity="0.95"/><rect x="80.5" y="30" width="2.6" height="6" fill="#10e020" opacity="0.95"/><rect x="31" y="34.6" width="2.4" height="3" fill="#10e020" opacity="0.95"/><circle cx="13.8" cy="30" r="2" fill="none" stroke="#10e020" stroke-width="0.9"/><path d="M12.6 27.6L15 29.6L13 31Z" fill="#10e020"/><path d="M4.4 49.8L24 39.6L36 48.6L14.6 60.8Z" fill="#f01818" opacity="0.95"/><path d="M9 50L26 42M12 53.5L30 45M8 54.6L16 58.6M18 47L25 53M23 44.4L31 50.6M13 50L20 56" fill="none" stroke="#500" stroke-width="0.7"/><path d="M4.4 49.8L14.6 60.8L14.6 58L5.5 48.2Z" fill="#b00808"/><path d="M33.4 45.8 Q60 41.6 87.4 47" fill="none" stroke="#f014f0" stroke-width=".9" stroke-dasharray="7 1.2"/><rect x="48.4" y="48.8" width="10" height="1.1" fill="#10e020"/><rect x="59" y="49.1" width="3.5" height="0.6" fill="#0a8a18"/><rect x="25.6" y="58.5" width="7.5" height="1.1" fill="#10e020"/></svg>
<div class="cell" style="left:611.3px;top:200.3px;width:92.0px;height:31.5px"></div>
<div class="cb" style="left:613.9px;top:206.9px"></div>
<div class="num" style="left:626.3px;top:206.6px">6</div>
<div class="ttl" style="left:613.5px;top:219.3px;letter-spacing:-0.1px">階段詳細図</div>
<svg class="th wd" style="left:611.7px;top:233.8px" width="91.2" height="64.6" viewBox="0 0 90 64" preserveAspectRatio="none"><rect x="0" y="0" width="90" height="64" fill="#fff"/><g opacity="0.75"><rect x="0" y="0" width="90" height="64" fill="#fff"/><rect x="0.5" y="0.5" width="89" height="63" fill="none" stroke="#8b9fd8" stroke-width="1"/><rect x="1.6" y="1.4" width="86.8" height="61" fill="none" stroke="#555" stroke-width="0.4"/><path d="M3 3L3 57M9 3L9 57M15 3L15 57M21 3L21 57M27 3L27 57M33 3L33 57M39 3L39 57M45 3L45 57M51 3L51 57M57 3L57 57M63 3L63 57M69 3L69 57M75 3L75 57M81 3L81 57M87 3L87 57M3 3L87 3M3 9L87 9M3 15L87 15M3 21L87 21M3 27L87 27M3 33L87 33M3 39L87 39M3 45L87 45M3 51L87 51M3 57L87 57" fill="none" stroke="#666" stroke-width="0.3" stroke-opacity="0.55"/><rect x="5.6" y="3.7" width="21.6" height="13" fill="none" stroke="#1a1a1a" stroke-width="0.7"/><rect x="6.5" y="4.7" width="19.6" height="11" fill="#000" opacity="0.13"/><path d="M12.5 11.1L12.5 14.5M15.7 8.4L15.7 15.7M23.3 12L26 12M11.2 13.4L11.2 14.3M9.8 8.1L9.8 15M16.5 10.8L16.5 15.7M8.6 8L9.6 8M12.3 7.4L12.3 10.9M9 14.6L18.7 14.6M22.8 6.9L26.1 6.9M12.7 10.1L12.7 14.6M19.2 5.1L25.4 5.1M9.9 9L13.8 9M25.8 13.3L25.8 15.7M9.8 12.6L9.8 15.7M16.5 11.2L21.1 11.2M25.9 6.2L26.1 6.2M17.4 10.7L18.6 10.7M6.8 15.1L16.8 15.1M21.6 12.7L24.4 12.7M13.8 9.3L13.8 15M21.4 10.9L22.2 10.9M18.8 14.5L18.8 15.4M15.8 8.4L25.1 8.4M11 10.8L18.2 10.8M16.7 7.6L25 7.6M23.1 10.1L25.9 10.1M20.7 10.5L22.6 10.5M7.9 10.6L15.5 10.6M22.9 10.8L26.1 10.8M10.2 11L19.9 11M14.3 10.9L15.3 10.9M13.6 13.2L13.6 15.7M14.4 11.2L20.7 11.2M18.3 9.5L25.9 9.5M8.7 5.4L8.7 11.8M21.8 6.6L23 6.6M24.5 11.2L24.5 12.9M18.8 13.7L18.8 15.7M15.3 12.5L15.3 14.4" fill="none" stroke="#1a1a1a" stroke-width="0.55" stroke-opacity="0.75"/><rect x="13" y="5.7" width="8" height="9" fill="#000" opacity="0.18"/><path d="M2.6 10.2L5.6 10.2M27.2 7.6L33 7.6M27.2 14.1L33 14.1" fill="none" stroke="#1a1a1a" stroke-width="0.4" stroke-opacity="0.7"/><rect x="5.6" y="22.3" width="21.6" height="13" fill="none" stroke="#1a1a1a" stroke-width="0.7"/><rect x="6.5" y="23.3" width="19.6" height="11" fill="#000" opacity="0.13"/><path d="M16.2 29.4L24.9 29.4M12.8 30.9L18.4 30.9M14.4 26.9L14.4 29.4M24 30.9L26.1 30.9M15 24.9L22.9 24.9M12.2 34.1L12.2 34.3M18.6 31.7L25.6 31.7M20.5 26.1L25.3 26.1M7.6 27.3L8.6 27.3M23.2 34.3L26.1 34.3M13.3 24L13.3 26.9M18.6 23.6L24.2 23.6M14.3 24.8L19 24.8M19.9 30.4L26.1 30.4M25.3 27.4L26.1 27.4M24.4 25L24.4 33.3M23.2 28.4L23.2 33.6M20.4 32.2L20.4 34.3M21 25.9L21 28.8M17.6 27.8L23.2 27.8M11.4 24.5L16.1 24.5M24.1 33.8L26.1 33.8M18.2 25L22.7 25M16.2 24.1L19.8 24.1M15.6 33.5L15.6 34.3M20.7 29.1L22.2 29.1M9.1 29L9.1 33.1M10.4 24.7L10.4 31.8M7.5 27.1L7.5 32.2M21.8 32.9L21.8 34.3M15.7 26.5L15.7 28.7M19.2 30.1L19.2 34.3M12.6 30.9L22.5 30.9M25 27.9L26.1 27.9M21.8 28.7L21.8 32.1M8.5 30.7L8.5 34.3M16.4 26.4L16.4 29.2M15.5 26.4L15.5 33M8.2 28.3L8.2 30.6M7.4 32.5L13.7 32.5" fill="none" stroke="#1a1a1a" stroke-width="0.55" stroke-opacity="0.75"/><rect x="13" y="24.3" width="8" height="9" fill="#000" opacity="0.18"/><path d="M2.6 28.8L5.6 28.8M27.2 26.2L33 26.2M27.2 32.7L33 32.7" fill="none" stroke="#1a1a1a" stroke-width="0.4" stroke-opacity="0.7"/><rect x="5.6" y="39.9" width="21.6" height="15.6" fill="none" stroke="#1a1a1a" stroke-width="0.7"/><rect x="6.5" y="40.9" width="19.6" height="13.6" fill="#000" opacity="0.13"/><path d="M24.7 43.3L26.1 43.3M15.6 53.1L20.6 53.1M9.7 54L22.2 54M8.9 47.3L8.9 54.3M13.2 48.9L15.9 48.9M8 48.3L8 54.5M24.8 45.1L26.1 45.1M25 45.1L26.1 45.1M20 44.7L20 47.6M17.8 48.8L18.7 48.8M8.5 45.9L8.5 54.5M23.1 45.9L23.1 53.4M13.2 46.3L22.5 46.3M15.8 45.8L26.1 45.8M8.4 41.1L16.8 41.1M19.6 43.9L26.1 43.9M19.3 42.7L19.3 48.4M11.6 54.4L11.6 54.5M24.8 53.7L24.8 54.5M14.5 41.8L14.5 53.6M11.6 46L11.6 49.6M9.8 52L11 52M21.8 47.5L24.3 47.5M19.8 41.9L19.8 46.1M12.6 41.4L12.6 51.6M18.5 42.3L18.5 48.8M16.5 44.4L26.1 44.4M16.8 43.1L16.8 54.2M16.9 47.6L21.7 47.6M16.5 41.2L16.5 50.4M7.1 42.7L16.3 42.7M9.3 50.4L21.7 50.4M18.1 48.4L25.5 48.4M24.4 52.6L24.4 54.5M21.4 51.2L21.4 54.5M21.4 41.7L21.4 44.5M14.8 44L23.3 44M21.3 45.2L26.1 45.2M25.4 45.4L26.1 45.4M16.4 45.8L16.4 54.5" fill="none" stroke="#1a1a1a" stroke-width="0.55" stroke-opacity="0.75"/><rect x="13" y="41.9" width="8" height="11.6" fill="#000" opacity="0.18"/><path d="M2.6 47.7L5.6 47.7M27.2 44.6L33 44.6M27.2 52.4L33 52.4" fill="none" stroke="#1a1a1a" stroke-width="0.4" stroke-opacity="0.7"/><rect x="44" y="2" width="7.6" height="55.4" fill="#000" opacity="0.16"/><path d="M44 2L44 57.4M51.6 2L51.6 57.4M47 2L47 57.4" fill="none" stroke="#1a1a1a" stroke-width="0.7" stroke-opacity="0.85"/><path d="M39.1 26.5L40.9 26.5M42.1 49.5L42.1 52.6M52.8 29.7L54 29.7M50.5 6.8L52.8 6.8M49.7 27.7L52.5 27.7M51.5 55.9L51.5 57M49.4 40.7L54 40.7M43.1 29.1L45.1 29.1M41.2 52.7L41.2 57M50.7 24.9L52.7 24.9M38.3 9.4L41 9.4M48.5 33.3L48.5 34.5M44.8 28.8L47.1 28.8M52.7 55.2L52.7 56.7M51 47.5L51 49.4M47.3 27.8L48.3 27.8M40.8 18.6L45.1 18.6M51 22.8L52.3 22.8M40.7 11.3L40.7 14.8M40.9 42.4L43.9 42.4M39.6 40.9L39.6 45.3M47.6 6.6L51.4 6.6M50.5 7.8L54 7.8M41.5 8.3L41.5 10.2M42.3 7.2L46.1 7.2M40.7 14.4L42.1 14.4M39.1 3.7L40.4 3.7M52.8 48.2L54 48.2M52.9 17.5L54 17.5M44.7 15.3L49.1 15.3M43.4 40.3L45.4 40.3M39.3 42.2L42.2 42.2M51.5 37.9L53.1 37.9M52.3 25L54 25M53.1 35.9L54 35.9M48.9 7.1L50.2 7.1M42.6 54.5L44.3 54.5M52 32L52 36.4M50 10.7L50 12.7M44.1 44.2L44.1 47.5M46.7 54.9L46.7 57M53.3 39.5L53.3 42.1M49.3 33.4L53.1 33.4M52.3 31.6L54 31.6M51 4.8L54 4.8M44.4 17.6L44.4 21.6M44.8 7.4L44.8 10.1M51.8 20.2L54 20.2M53.1 8.9L53.1 9.8M43 36.1L45.8 36.1M52.5 4.1L54 4.1M47.9 20.5L49.8 20.5M51.2 24.2L51.2 25.8M50.5 50.5L50.5 53.5M44.6 51.7L49.2 51.7M46.1 36.8L49.7 36.8M53.9 42.4L53.9 47M41.1 4.6L41.1 6.4M53.2 16.1L54 16.1M43.6 11.1L43.6 14.5M52.6 9.4L54 9.4M48.2 26.9L51.5 26.9M41.4 31.2L41.4 34.8M40.5 31.9L40.5 33.6M52.1 12.1L53.1 12.1M52.1 4.7L53.3 4.7M44.5 49.7L44.5 50.5M42.7 55.3L46.2 55.3M40.9 56.1L42.7 56.1M50 19.5L54 19.5" fill="none" stroke="#1a1a1a" stroke-width="0.5" stroke-opacity="0.7"/><rect x="46.9" y="31.6" width="4.7" height="9" fill="#222" opacity="0.85"/><path d="M51.6 14L66 30M53 14L67.4 30M51.6 30L66 46M66 30L66 57M67.4 24L67.4 57" fill="none" stroke="#1a1a1a" stroke-width="0.7" stroke-opacity="0.8"/><path d="M53.2 45.2L57.9 45.2M67.1 29.8L67.1 33M55.3 11.8L56.8 11.8M59 15.7L60.2 15.7M58.4 50.6L58.4 51.4M66.5 43.7L68 43.7M57.9 10.3L57.9 15M64.9 39.9L68 39.9M52.7 26.5L52.7 29M52 49.4L54.2 49.4M61.7 50.1L61.7 53.4M59 28.2L59 29.1M61.2 16.2L62.8 16.2M63.1 53.7L65.6 53.7M63.2 12.9L67.8 12.9M67.8 50.3L68 50.3M59.3 32.4L61.3 32.4M56.9 37L56.9 40.6M64.9 46.5L64.9 48.7M64.3 13.4L67.8 13.4M54.2 23.4L54.2 27.3M60.6 51.5L63.8 51.5M62.3 33.5L62.3 37.5M64.2 12.7L67.7 12.7M54.4 44.8L54.4 48.9M57.5 53.8L57.5 56M65.2 48.5L65.2 49.6M61.6 40.1L61.6 42.4M55.2 48.1L56.8 48.1M53.5 51.3L54.4 51.3M63.9 24.2L63.9 28.7M59.2 41.9L59.2 46.1M67 24.2L68 24.2M52.5 43.9L54.5 43.9M61 42.9L62 42.9M66.2 36.9L66.2 38M55.9 28.3L55.9 33.1M52.9 13L56.5 13M55.2 25.3L59.8 25.3M62 34.1L64.1 34.1M62.2 14.6L65.5 14.6M52 17.2L54.2 17.2M60.6 16.6L64.7 16.6M66.1 34.9L66.1 36.6M61.3 26L64.5 26M63.4 16.9L67.8 16.9M59.7 12.4L59.7 14.1M59.1 36.6L62.4 36.6M52.1 10.7L56.4 10.7M65.5 43.9L68 43.9" fill="none" stroke="#1a1a1a" stroke-width="0.5" stroke-opacity="0.65"/><path d="M82.1 52.9L82.1 56M70.1 34.1L73.5 34.1M84.3 21.1L87 21.1M78.5 44.3L84 44.3M81.9 9.5L84.8 9.5M79.5 14.1L81.5 14.1M76.1 31.9L76.1 35.8M85.1 54.4L85.1 56M79.2 22L84.7 22M85.8 28.8L85.8 34.1M69.5 26L72.6 26M82.1 25.7L86.8 25.7M85.8 25.4L85.8 31.2M69.7 43L69.7 48M82.8 17.5L82.8 21.9M72.6 23.5L76.2 23.5M82.4 23.8L82.4 28.4M68.5 31.3L68.5 32.7M78.9 17L84.5 17M74.6 49.5L74.6 54.3M69.3 18.5L69.3 24.1M74.6 19.1L78.9 19.1M78.2 43.1L84.2 43.1M72.8 25.9L72.8 27.1M71.9 45.8L71.9 48.6M79.6 25.8L79.6 29.5M85.6 23.1L85.6 28M72.9 43.2L73.8 43.2M72.9 21.3L79.6 21.3M68.6 39.5L68.6 43.3M78 15.5L78 21.1M86.1 18.9L86.1 24.4M69.9 36.4L73.7 36.4M74.3 41.8L74.3 43.7M71 43.2L74.4 43.2M76.7 20.5L76.7 24M70.8 12L70.8 18.6M79.2 19.7L79.2 22.8M80 50.4L80 52.9M86.2 21.6L87 21.6M72 16.3L75.9 16.3M69.1 47.1L73.7 47.1M71.4 37.4L75.3 37.4M81.4 10.2L86.5 10.2M85 30.9L85 34.4M77.4 39.7L81.1 39.7" fill="none" stroke="#333" stroke-width="0.4" stroke-opacity="0.55"/><path d="M60 3L60 57M74 3L74 57M82 3L82 57" fill="none" stroke="#444" stroke-width="0.4" stroke-opacity="0.6"/><path d="M1.6 57.4L88.4 57.4" stroke="#1a1a1a" stroke-width="0.6"/><path d="M2.4 58.9L5.5 58.9M6 58.9L8.8 58.9M14 58.9L17.5 58.9M18.6 58.9L20.5 58.9M21.3 58.9L23.5 58.9M24.3 58.9L25.7 58.9M26.4 58.9L29.4 58.9M34.1 58.9L36.3 58.9M36.7 58.9L40.3 58.9M41 58.9L42.1 58.9M42.6 58.9L44.3 58.9M52 58.9L53.1 58.9M53.6 58.9L55.7 58.9M56.9 58.9L58.4 58.9M59.3 58.9L61.7 58.9M66.2 58.9L68.1 58.9M68.8 58.9L71.8 58.9M72.5 58.9L75.9 58.9M76.3 58.9L79.7 58.9M80.2 58.9L83.3 58.9M5.4 61.1L7.8 61.1M8.3 61.1L10.8 61.1M11.8 61.1L14.6 61.1M15.5 61.1L18.1 61.1M23.4 61.1L27.1 61.1M28.1 61.1L31.9 61.1M37 61.1L39.7 61.1M40.7 61.1L42 61.1M42.6 61.1L46 61.1M47 61.1L50.4 61.1M51 61.1L54.1 61.1M55 61.1L56.9 61.1M60.5 61.1L62.9 61.1M63.8 61.1L64.8 61.1M69.1 61.1L71.5 61.1M72.3 61.1L76.3 61.1M83.2 61.1L85.4 61.1M86.1 61.1L87.4 61.1" fill="none" stroke="#222" stroke-width="0.8" stroke-opacity="0.7"/><path d="M26 57.4L26 62.4M44 57.4L44 62.4M70 57.4L70 62.4" fill="none" stroke="#1a1a1a" stroke-width="0.5"/></g><rect x="0.5" y="0.5" width="89" height="63" fill="none" stroke="#8b9fd8" stroke-width="1"/></svg>
<div class="cell" style="left:705.6px;top:200.3px;width:92.0px;height:31.5px"></div>
<div class="cb" style="left:708.2px;top:206.9px"></div>
<div class="num" style="left:720.6px;top:206.6px">7</div>
<div class="ttl" style="left:707.8px;top:219.3px;letter-spacing:-0.1px">基準階の平面パース</div>
<svg class="th ph" style="left:706.0px;top:234.7px" width="91.4" height="68.2" viewBox="0 0 90 64" preserveAspectRatio="none"><rect x="0" y="0" width="90" height="64" fill="#8f8a80"/><path d="M0 0L70.6 0L69.3 10.2L0 10.8Z" fill="#a9a9a8"/><path d="M67.4 0L90 0L90 48.2L81.5 32.5Z" fill="#4b4b4b"/><path d="M73.1 0L90 33.7M79.5 0L90 21.7M85.9 0L90 9" fill="none" stroke="#6c6c6c" stroke-width="0.9"/><path d="M76.3 2.4L77.2 4.3M80.8 9.6L81.8 11.8M85.9 20.5L87 22.7" fill="none" stroke="#e0e0e0" stroke-width="0.8"/><path d="M0 10.8L69.3 10.2L90 48.2L90 54.2L0 54.2Z" fill="#9c9384"/><path d="M9.2 9.6L47.8 9.4L47.8 17.5L9.2 17.8Z" fill="#7c6a64"/><path d="M10.5 10.1L10.5 16.9M13.9 10.1L13.9 16.9M17.4 10.1L17.4 16.9M20.8 10.1L20.8 16.9M24.3 10.1L24.3 16.9M27.7 10.1L27.7 16.9M31.2 10.1L31.2 16.9M34.7 10.1L34.7 16.9M38.1 10.1L38.1 16.9M41.6 10.1L41.6 16.9M45 10.1L45 16.9" fill="none" stroke="#4a4042" stroke-width="1.3"/><rect x="9.2" y="9.4" width="38.6" height="1.4" fill="#b4aaa4"/><rect x="9.8" y="14.5" width="23.7" height="1.6" fill="#3e4a5c"/><rect x="18.6" y="12.7" width="1" height="0.9" fill="#e8e0d8" opacity="0.95"/><rect x="45.6" y="10.4" width="2" height="1.3" fill="#e8e0d8" opacity="0.95"/><rect x="40.5" y="9.8" width="2" height="1" fill="#b05858" opacity="0.95"/><rect x="16.7" y="13.1" width="1.6" height="1.2" fill="#d8a0a0" opacity="0.95"/><rect x="13.2" y="12.5" width="1.4" height="0.9" fill="#e8e0d8" opacity="0.95"/><rect x="12.6" y="12.8" width="1.4" height="0.8" fill="#d8a0a0" opacity="0.95"/><rect x="29.2" y="10.1" width="1.9" height="1.1" fill="#e8e0d8" opacity="0.95"/><rect x="36.5" y="12.6" width="1.3" height="1.1" fill="#b05858" opacity="0.95"/><rect x="42.7" y="12.4" width="2.4" height="1.2" fill="#e8e0d8" opacity="0.95"/><rect x="37.8" y="11.7" width="1.1" height="1" fill="#e8e0d8" opacity="0.95"/><path d="M34.8 15.7L43.7 15.7L43.7 28.9L34.8 28.9Z" fill="#6c5a58"/><path d="M35.5 18.7L43 18.7M35.5 21.7L43 21.7M35.5 25.1L43 25.1" fill="none" stroke="#b8a8a0" stroke-width="0.8"/><path d="M0.5 10.8L9 10.6L9 16.9L0.5 17.5Z" fill="#c2b49a"/><path d="M2.8 17.8L36.1 17.5L36.1 28.3L2.8 28.7Z" fill="#d6c6a6"/><path d="M10.5 19.5L34.1 19.3L34.1 26L10.5 26.3Z" fill="#58b2f4"/><path d="M10.5 19.5L34.1 19.3L34.1 20.5L10.5 20.7Z" fill="#a8dcfc"/><path d="M2.8 22.9L7.3 19.3L10.5 23.5L6.6 27.1Z" fill="#d8b8a0"/><circle cx="6.4" cy="22.9" r="1.3" fill="#60b0ec"/><path d="M12.8 25.9L13.3 28M21.4 25.9L21.9 28M29.7 25.7L30.2 27.7" fill="none" stroke="#4a4038" stroke-width="1.2"/><path d="M0 23.5L4.1 25.9L3.5 29.2L0 29.2Z" fill="#62a040"/><path d="M0 29.2L43.7 28.7L43.7 31.9L0 32.5Z" fill="#b8ac98"/><path d="M43.7 13.5L54 9.2L69.9 29.2L69.9 34L43.7 33.7Z" fill="#c6b696"/><path d="M44.4 28.3L66.8 28.7L66.8 30.4L44.4 30.1Z" fill="#6a5a4a"/><circle cx="48.2" cy="23.5" r="1.5" fill="#8cc4e8"/><circle cx="48.2" cy="23.5" r="0.7" fill="#4a7aa8"/><path d="M43.7 13.5L45.3 13L45.3 33.7L43.7 33.7Z" fill="#a89878"/><path d="M52 9.6L57.8 7L76.3 25.9L69.3 29.2Z" fill="#5e5a56"/><path d="M53.3 9.6L57.5 7.7L64.2 14.5L59.8 16.6Z" fill="#e6e6e6"/><path d="M60.6 17.1L65 15.2L71.6 21.9L67.3 24.1Z" fill="#e2e2e2"/><path d="M55.5 8.7L62 15.4M62.9 16.3L69.3 22.9M54.6 11.6L58.8 9.6M57.2 14.2L61.4 12.3M64.2 19L68.4 17.1M66.5 21.4L70.7 19.5" fill="none" stroke="#77777a" stroke-width="0.9"/><path d="M69.3 24.7L77.6 21.1L89.1 37.3L89.1 51.2L79.5 48.2L70.6 33.7Z" fill="#a88c6c"/><rect x="86" y="41.9" width="1.4" height="1.1" fill="#5a4838" opacity="0.95"/><rect x="81.1" y="45.4" width="2.9" height="2.1" fill="#7a6048" opacity="0.95"/><rect x="78" y="47.7" width="2.1" height="2.1" fill="#5a4838" opacity="0.95"/><rect x="76.1" y="31.3" width="3" height="1.9" fill="#5a4838" opacity="0.95"/><rect x="83.2" y="45.1" width="1.7" height="1.2" fill="#5a4838" opacity="0.95"/><rect x="73.5" y="34.6" width="2.2" height="1.9" fill="#5a4838" opacity="0.95"/><rect x="86" y="27.2" width="2" height="1.3" fill="#ece8e0" opacity="0.95"/><rect x="86" y="24.6" width="3.9" height="2.1" fill="#7a6048" opacity="0.95"/><rect x="81.9" y="28.8" width="2" height="1.1" fill="#e4e0d8" opacity="0.95"/><rect x="81.8" y="40.1" width="1.5" height="1.5" fill="#7a6048" opacity="0.95"/><rect x="79.5" y="30.6" width="2.3" height="1.4" fill="#c8a47c" opacity="0.95"/><rect x="80.9" y="27.9" width="2.3" height="2" fill="#ece8e0" opacity="0.95"/><rect x="72.5" y="41.6" width="2" height="1" fill="#e4e0d8" opacity="0.95"/><rect x="78" y="34.9" width="1.9" height="1.4" fill="#e4e0d8" opacity="0.95"/><rect x="72.8" y="28.2" width="1.6" height="1.2" fill="#7a6048" opacity="0.95"/><rect x="72" y="28" width="2.1" height="2.1" fill="#5a4838" opacity="0.95"/><rect x="73" y="31" width="1.6" height="1.3" fill="#c8a47c" opacity="0.95"/><rect x="78.2" y="24.9" width="3.3" height="2" fill="#5a4838" opacity="0.95"/><rect x="70.3" y="23.4" width="3.9" height="2.2" fill="#7a6048" opacity="0.95"/><rect x="77" y="35.2" width="1.7" height="1.5" fill="#5a4838" opacity="0.95"/><rect x="83.1" y="34.9" width="2.8" height="2.1" fill="#c8a47c" opacity="0.95"/><rect x="81.7" y="26.4" width="2.2" height="1.6" fill="#c8a47c" opacity="0.95"/><rect x="79.6" y="44.9" width="2.5" height="1.5" fill="#ece8e0" opacity="0.95"/><rect x="79.3" y="31.3" width="2.4" height="1.7" fill="#7a6048" opacity="0.95"/><rect x="73.1" y="40.1" width="2.1" height="1.2" fill="#c8a47c" opacity="0.95"/><rect x="71.1" y="39.2" width="2.1" height="1.4" fill="#c8a47c" opacity="0.95"/><path d="M71.9 27.7L87.2 47M75.7 23.5L89.1 41" fill="none" stroke="#5c4a3a" stroke-width="0.8"/><path d="M2.8 36.7L8.8 32.1L14.3 35.9L8.2 40.7Z" fill="#e4e4e4"/><path d="M8.2 40.7L14.3 35.9L14.3 38.7L8.2 43.5Z" fill="#57575a"/><path d="M2.8 36.7L8.2 40.7L8.2 43.5L2.8 39.5Z" fill="#9a9a9a"/><path d="M5.2 36.7L9.8 33.9M7.2 38.5L11.8 35.5M5.8 35.1L10.8 38.9" fill="none" stroke="#8a8a8c" stroke-width="0.7"/><path d="M11.1 35.8L17.1 31.2L22.6 35L16.5 39.8Z" fill="#e4e4e4"/><path d="M16.5 39.8L22.6 35L22.6 37.8L16.5 42.6Z" fill="#57575a"/><path d="M11.1 35.8L16.5 39.8L16.5 42.6L11.1 38.6Z" fill="#9a9a9a"/><path d="M13.5 35.8L18.1 33M15.5 37.6L20.1 34.6M14.1 34.2L19.1 38" fill="none" stroke="#8a8a8c" stroke-width="0.7"/><path d="M20.7 35.5L26.7 30.9L32.2 34.7L26.1 39.5Z" fill="#e4e4e4"/><path d="M26.1 39.5L32.2 34.7L32.2 37.5L26.1 42.3Z" fill="#57575a"/><path d="M20.7 35.5L26.1 39.5L26.1 42.3L20.7 38.3Z" fill="#9a9a9a"/><path d="M23.1 35.5L27.7 32.7M25.1 37.3L29.7 34.3M23.7 33.9L28.7 37.7" fill="none" stroke="#8a8a8c" stroke-width="0.7"/><path d="M30.3 35.8L36.3 31.2L41.8 35L35.7 39.8Z" fill="#e4e4e4"/><path d="M35.7 39.8L41.8 35L41.8 37.8L35.7 42.6Z" fill="#57575a"/><path d="M30.3 35.8L35.7 39.8L35.7 42.6L30.3 38.6Z" fill="#9a9a9a"/><path d="M32.7 35.8L37.3 33M34.7 37.6L39.3 34.6M33.3 34.2L38.3 38" fill="none" stroke="#8a8a8c" stroke-width="0.7"/><path d="M39.9 36.7L45.9 32.1L51.4 35.9L45.3 40.7Z" fill="#e4e4e4"/><path d="M45.3 40.7L51.4 35.9L51.4 38.7L45.3 43.5Z" fill="#57575a"/><path d="M39.9 36.7L45.3 40.7L45.3 43.5L39.9 39.5Z" fill="#9a9a9a"/><path d="M42.3 36.7L46.9 33.9M44.3 38.5L48.9 35.5M42.9 35.1L47.9 38.9" fill="none" stroke="#8a8a8c" stroke-width="0.7"/><path d="M6.6 42.2L12.6 37.6L18.1 41.4L12 46.2Z" fill="#e4e4e4"/><path d="M12 46.2L18.1 41.4L18.1 44.2L12 49Z" fill="#57575a"/><path d="M6.6 42.2L12 46.2L12 49L6.6 45Z" fill="#9a9a9a"/><path d="M9 42.2L13.6 39.4M11 44L15.6 41M9.6 40.6L14.6 44.4" fill="none" stroke="#8a8a8c" stroke-width="0.7"/><path d="M16.9 41.6L22.9 37L28.4 40.8L22.3 45.6Z" fill="#e4e4e4"/><path d="M22.3 45.6L28.4 40.8L28.4 43.6L22.3 48.4Z" fill="#57575a"/><path d="M16.9 41.6L22.3 45.6L22.3 48.4L16.9 44.4Z" fill="#9a9a9a"/><path d="M19.3 41.6L23.9 38.8M21.3 43.4L25.9 40.4M19.9 40L24.9 43.8" fill="none" stroke="#8a8a8c" stroke-width="0.7"/><path d="M27.7 41.6L33.7 37L39.2 40.8L33.1 45.6Z" fill="#e4e4e4"/><path d="M33.1 45.6L39.2 40.8L39.2 43.6L33.1 48.4Z" fill="#57575a"/><path d="M27.7 41.6L33.1 45.6L33.1 48.4L27.7 44.4Z" fill="#9a9a9a"/><path d="M30.1 41.6L34.7 38.8M32.1 43.4L36.7 40.4M30.7 40L35.7 43.8" fill="none" stroke="#8a8a8c" stroke-width="0.7"/><path d="M38 42.2L44 37.6L49.5 41.4L43.4 46.2Z" fill="#e4e4e4"/><path d="M43.4 46.2L49.5 41.4L49.5 44.2L43.4 49Z" fill="#57575a"/><path d="M38 42.2L43.4 46.2L43.4 49L38 45Z" fill="#9a9a9a"/><path d="M40.4 42.2L45 39.4M42.4 44L47 41M41 40.6L46 44.4" fill="none" stroke="#8a8a8c" stroke-width="0.7"/><path d="M48.8 40.3L54.8 35.7L59.8 39.5L54 44.3Z" fill="#c8a070"/><path d="M54 44.3L59.8 39.5L59.8 42.7L54 47.5Z" fill="#7a5a3c"/><path d="M48.8 40.3L54 44.3L54 47.5L48.8 43.5Z" fill="#a48a6a"/><path d="M51.2 40.3L55.8 37.5M53.2 42.1L57.8 39.1" fill="none" stroke="#8a7a68" stroke-width="0.7"/><path d="M59.1 39.1L65.1 34.5L70.1 38.3L64.3 43.1Z" fill="#e8e8e6"/><path d="M64.3 43.1L70.1 38.3L70.1 41.5L64.3 46.3Z" fill="#6a6a6a"/><path d="M59.1 39.1L64.3 43.1L64.3 46.3L59.1 42.3Z" fill="#a48a6a"/><path d="M61.5 39.1L66.1 36.3M63.5 40.9L68.1 37.9" fill="none" stroke="#8a7a68" stroke-width="0.7"/><path d="M54.6 45.8L60.6 41.2L65.6 45L59.8 49.8Z" fill="#e6e4e0"/><path d="M59.8 49.8L65.6 45L65.6 48.2L59.8 53Z" fill="#80603e"/><path d="M54.6 45.8L59.8 49.8L59.8 53L54.6 49Z" fill="#a48a6a"/><path d="M57 45.8L61.6 43M59 47.6L63.6 44.6" fill="none" stroke="#8a7a68" stroke-width="0.7"/><path d="M64.8 44.6L70.8 40L75.8 43.8L70 48.6Z" fill="#e8e8e8"/><path d="M70 48.6L75.8 43.8L75.8 47L70 51.8Z" fill="#5e5e5e"/><path d="M64.8 44.6L70 48.6L70 51.8L64.8 47.8Z" fill="#a48a6a"/><path d="M67.2 44.6L71.8 41.8M69.2 46.4L73.8 43.4" fill="none" stroke="#8a7a68" stroke-width="0.7"/><path d="M73.1 48.8L79.1 44.2L84.1 48L78.3 52.8Z" fill="#c49a68"/><path d="M78.3 52.8L84.1 48L84.1 51.2L78.3 56Z" fill="#6e5034"/><path d="M73.1 48.8L78.3 52.8L78.3 56L73.1 52Z" fill="#a48a6a"/><path d="M75.5 48.8L80.1 46M77.5 50.6L82.1 47.6" fill="none" stroke="#8a7a68" stroke-width="0.7"/><path d="M0 32.5L2.8 33.7L12 54.2L5.4 55.4L0 43.4Z" fill="#55555a"/><path d="M0 42.8L4.1 45.8L6.6 54.2L0 56Z" fill="#63a83c"/><path d="M13 45.8L51.4 45.2L69.3 50.6L89.1 51.8L89.1 54.2L14.3 54Z" fill="#6cae42"/><path d="M16.9 45.5L19.7 53.7M24.3 45.5L27.1 53.7M31.7 45.5L34.5 53.7M39.1 45.5L41.9 53.7M46.5 45.5L49.4 53.7M54 45.5L56.8 53.7" fill="none" stroke="#cfc6b0" stroke-width="2"/><rect x="56.8" y="47.3" width="2.5" height="1.4" fill="#3c7a28" opacity="0.95"/><rect x="38.9" y="47.2" width="2.3" height="1.2" fill="#2c5c1c" opacity="0.95"/><rect x="25.5" y="48.8" width="2.9" height="1.7" fill="#2c5c1c" opacity="0.95"/><rect x="32.1" y="51.9" width="1.4" height="1.4" fill="#3c7a28" opacity="0.95"/><rect x="85.1" y="50.7" width="3.3" height="1.7" fill="#2c5c1c" opacity="0.95"/><rect x="21.5" y="47.1" width="1.4" height="1.1" fill="#2c5c1c" opacity="0.95"/><rect x="36.2" y="47.2" width="2.1" height="2" fill="#3c7a28" opacity="0.95"/><rect x="23.6" y="46.9" width="3.7" height="1.9" fill="#2c5c1c" opacity="0.95"/><rect x="69.8" y="45.9" width="2.4" height="1.3" fill="#2c5c1c" opacity="0.95"/><rect x="49.5" y="52.2" width="3.2" height="2" fill="#3c7a28" opacity="0.95"/><rect x="73.2" y="52.5" width="1.5" height="1" fill="#2c5c1c" opacity="0.95"/><rect x="67.3" y="47.5" width="1.7" height="1" fill="#3c7a28" opacity="0.95"/><rect x="40.1" y="47.5" width="2.1" height="1.2" fill="#2c5c1c" opacity="0.95"/><rect x="66" y="48.8" width="2.7" height="1.7" fill="#3c7a28" opacity="0.95"/><rect x="21.4" y="48.8" width="2.2" height="1.2" fill="#e8b818"/><rect x="54" y="53" width="2.6" height="1.3" fill="#e8b818"/><rect x="31.6" y="48.8" width="2.4" height="1.4" fill="#50555a"/><path d="M0 56.6 Q22 52.4 50 54.2 Q75 55.4 90 53.6 V64 H0Z" fill="#525252"/><rect x="15.6" y="56" width="3" height="1" fill="#e6e6e6"/><rect x="31.2" y="61.2" width="4" height="1" fill="#dcdcdc"/><rect x="63.6" y="62" width="3.5" height="1" fill="#dcdcdc"/><rect x="0.4" y="0.4" width="89.2" height="63.2" fill="none" stroke="#6f86cc" stroke-width="0.8"/></svg>
<div class="cell" style="left:799.9px;top:200.3px;width:92.0px;height:31.5px"></div>
<div class="cb" style="left:802.5px;top:206.9px"></div>
<div class="num" style="left:814.9px;top:206.6px">8</div>
<div class="ttl" style="left:802.1px;top:219.3px;letter-spacing:-0.2px">基礎リストポスト配筋図</div>
<svg class="th wd" style="left:800.3px;top:233.8px" width="91.2" height="64.6" viewBox="0 0 90 64" preserveAspectRatio="none"><rect x="0" y="0" width="90" height="64" fill="#fff"/><g opacity="0.66"><rect x="0" y="0" width="90" height="64" fill="#fff"/><rect x="0.5" y="0.5" width="89" height="63" fill="none" stroke="#8b9fd8" stroke-width="1"/><rect x="3.2" y="2.6" width="83.6" height="58.6" fill="none" stroke="#222" stroke-width="0.7"/><path d="M3.2 57.6L86.8 57.6" stroke="#222" stroke-width="0.6"/><rect x="3.2" y="57.6" width="22.8" height="3.6" fill="#000" opacity="0.22"/><rect x="70" y="57.6" width="16.8" height="3.6" fill="#000" opacity="0.25"/><path d="M3.8 58.6L6.2 58.6M7.3 58.6L9.7 58.6M10.6 58.6L12.1 58.6M13 58.6L16.4 58.6M17 58.6L18.3 58.6M21.6 58.6L24.5 58.6M25.1 58.6L25.8 58.6M3.8 60.1L5.4 60.1M5.8 60.1L8.2 60.1M9.3 60.1L11.8 60.1M12.6 60.1L15.6 60.1M21.3 60.1L24.4 60.1M25 60.1L25.8 60.1" fill="none" stroke="#111" stroke-width="1.1" stroke-opacity="1"/><path d="M26 57.6L26 61.2M44 57.6L44 61.2M70 57.6L70 61.2M8 57.6L8 61.2M14 57.6L14 61.2M20 57.6L20 61.2" fill="none" stroke="#111" stroke-width="0.6"/><path d="M45 58.6L47.4 58.6M48.4 58.6L49.8 58.6M50.5 58.6L52.3 58.6M53.3 58.6L56.1 58.6M57 58.6L58.4 58.6M59 58.6L62.7 58.6M45 60.1L46.2 60.1M46.9 60.1L49.1 60.1M53.9 60.1L55.3 60.1M55.8 60.1L57.7 60.1M58.3 60.1L61.3 60.1M61.9 60.1L63 60.1" fill="none" stroke="#111" stroke-width="1.3" stroke-opacity="1"/><path d="M71 58.6L72.8 58.6M73.7 58.6L77.3 58.6M77.9 58.6L79.3 58.6M80.3 58.6L81.7 58.6M82.2 58.6L84.1 58.6M85.2 58.6L86 58.6M71 60.1L72.4 60.1M73.5 60.1L76.9 60.1M77.9 60.1L81.7 60.1M82.4 60.1L85.9 60.1" fill="none" stroke="#111" stroke-width="1.1" stroke-opacity="1"/><path d="M9.3 7.2L11.1 7.2M12.1 7.2L16 7.2M16.8 7.2L16.8 7.2" fill="none" stroke="#1a1a1a" stroke-width="0.9" stroke-opacity="0.85"/><path d="M20 10.2L22.5 10.2M23.4 10.2L25.5 10.2" fill="none" stroke="#1a1a1a" stroke-width="0.7" stroke-opacity="0.8"/><path d="M36.6 10.2L38 10.2M38.8 10.2L39.6 10.2" fill="none" stroke="#1a1a1a" stroke-width="0.7" stroke-opacity="0.8"/><path d="M52.5 10.2L55 10.2M55.5 10.2L57.5 10.2" fill="none" stroke="#1a1a1a" stroke-width="0.7" stroke-opacity="0.8"/><path d="M9.3 14.6L60.3 14.6M9.3 19.4L60.3 19.4M9.3 16L60.3 16" fill="none" stroke="#1a1a1a" stroke-width="0.55" stroke-opacity="0.8"/><rect x="19.5" y="12" width="5" height="12.5" fill="#000" opacity="0.13"/><path d="M23.2 23.4L24.1 23.4M24.5 16L24.5 16M22.3 21.2L24.5 21.2M23.3 15.3L23.3 18.4M23.1 19.5L23.1 21M19.7 22.1L21.3 22.1M22.9 18.7L23.8 18.7M21.6 15.7L23 15.7M23.2 18.8L24.5 18.8M23.3 24.4L24.5 24.4M23.1 19.9L24.5 19.9M22.6 14.4L24.5 14.4M21.3 15.9L21.3 21.4M21.9 14.2L21.9 19.6M19.6 22.2L19.6 23M22.5 23.6L24.5 23.6M22.1 23.1L22.1 24.5M21.3 20.3L23.8 20.3M19.5 23.5L19.5 24.5M23 15.9L23 17M24.1 23.3L24.5 23.3M23.3 16.1L24.5 16.1M22 17L22 22.2M20.2 15.6L20.2 18.7M23.7 17.5L24.5 17.5M19.9 23.3L19.9 24.5" fill="none" stroke="#1a1a1a" stroke-width="0.55" stroke-opacity="0.85"/><rect x="20.3" y="13.4" width="3.4" height="5.4" fill="#111" opacity="0.7"/><path d="M22 10.5L22 27" stroke="#444" stroke-width="0.35" stroke-opacity="0.7"/><rect x="36" y="12" width="5" height="12.5" fill="#000" opacity="0.13"/><path d="M37 19.7L37 21M37 17.8L37 22.4M38.9 20.5L38.9 24M37.1 20.6L40.9 20.6M38.2 12.1L41 12.1M39.1 17.7L39.1 23.1M39.2 14.8L39.2 17.6M37.8 14L40.5 14M40.1 20.4L40.1 22.3M38.3 16.2L41 16.2M37.3 17.2L41 17.2M38.8 14.1L40.8 14.1M39.6 22.2L41 22.2M38.3 14L41 14M40.9 22.3L41 22.3M40.8 21.7L40.8 23.2M36.6 24.4L38.9 24.4M38.7 12.5L38.7 17M36.4 21.5L39.7 21.5M38.7 21.2L38.7 24.5M37.1 21L40.1 21M37.7 19.9L37.7 22M38.1 20.3L40.4 20.3M39.4 16.4L41 16.4M39.4 17.8L41 17.8M37 12.9L39 12.9" fill="none" stroke="#1a1a1a" stroke-width="0.55" stroke-opacity="0.85"/><rect x="36.8" y="13.4" width="3.4" height="5.4" fill="#111" opacity="0.7"/><path d="M38.5 10.5L38.5 27" stroke="#444" stroke-width="0.35" stroke-opacity="0.7"/><rect x="52" y="12" width="5" height="12.5" fill="#000" opacity="0.13"/><path d="M56 12.4L57 12.4M52.1 12.9L52.1 16.2M56.1 22.2L56.1 23.5M52.5 22.2L55.6 22.2M55.8 14.6L55.8 15.7M52.9 15.6L54.1 15.6M53.5 18L57 18M54.1 21.5L57 21.5M56.2 21.9L57 21.9M55.2 16.6L55.2 20.8M54.2 21.7L54.2 23.3M55.9 20.4L55.9 24.5M54.3 12.7L55.6 12.7M52.9 21.8L52.9 24.5M56.6 18.7L56.6 23.6M56.9 12.7L57 12.7M53.2 22.1L53.2 24.5M53.6 16.7L53.6 21.1M54.6 18.6L54.6 23M55.5 21.7L55.5 22.7M53.5 22.4L53.5 24.5M53.3 16.5L55.2 16.5M53.5 17.4L56 17.4M56.4 14.4L56.4 15.6M52.1 15.5L52.1 16.5M54.1 24.2L56.1 24.2" fill="none" stroke="#1a1a1a" stroke-width="0.55" stroke-opacity="0.85"/><rect x="52.8" y="13.4" width="3.4" height="5.4" fill="#111" opacity="0.7"/><path d="M54.5 10.5L54.5 27" stroke="#444" stroke-width="0.35" stroke-opacity="0.7"/><rect x="9.3" y="13.6" width="2.6" height="6.6" fill="#000" opacity="0.13"/><path d="M10.3 14.9L10.3 18.4M10.7 18.2L10.7 20.2M9.7 20.1L10.8 20.1M9.8 16.3L11.9 16.3M9.7 16.7L11.9 16.7M11.6 15.2L11.9 15.2M11.7 20.1L11.7 20.2M11.8 18.8L11.9 18.8" fill="none" stroke="#1a1a1a" stroke-width="0.55" stroke-opacity="0.8"/><path d="M60.3 15L72 15M60.3 19L70 19" fill="none" stroke="#555" stroke-width="0.35" stroke-opacity="0.5"/><rect x="17.6" y="29" width="6.4" height="5.6" fill="#000" opacity="0.13"/><path d="M18.9 29.5L23.3 29.5M21.7 31L21.7 34.3M22.8 30.5L24 30.5M22.3 29.2L22.3 33.8M23 31.1L24 31.1M22.5 30L24 30M20.8 34.2L22.8 34.2M20.3 29L20.3 30.3M23.9 34.4L24 34.4M22.6 33.1L24 33.1M22.4 30.9L24 30.9M20 31.5L20 34M21 31.4L21 34.6M18 30.9L22.5 30.9M23.7 33.1L23.7 34.6M18.8 29.3L21.9 29.3M21.2 33.3L21.2 34.6M18.4 34.6L24 34.6M21.9 32.8L24 32.8M20 31L20 33.4M22 32.6L22.8 32.6M20.7 33.1L20.7 34.6" fill="none" stroke="#1a1a1a" stroke-width="0.55" stroke-opacity="0.85"/><rect x="18.6" y="29.8" width="4.2" height="4" fill="#111" opacity="0.65"/><rect x="13" y="30" width="3" height="3.6" fill="#000" opacity="0.13"/><path d="M14.6 30.4L16 30.4M13.1 31.8L16 31.8M15.5 33.5L16 33.5M14.3 33.5L14.3 33.6M15 30.2L15 32.5M13.5 30.5L16 30.5" fill="none" stroke="#1a1a1a" stroke-width="0.55" stroke-opacity="0.7"/><path d="M11.6 31.8L26.6 31.8" fill="none" stroke="#444" stroke-width="0.35" stroke-opacity="0.7"/><path d="M20.8 27L20.8 37.5" stroke="#444" stroke-width="0.35" stroke-opacity="0.7"/><rect x="35.2" y="29" width="6.4" height="5.6" fill="#000" opacity="0.13"/><path d="M35.7 30L40.3 30M41.3 33.7L41.6 33.7M40.5 30.4L41.6 30.4M38.3 34.4L38.3 34.6M40.1 29.5L41.6 29.5M38.7 30.7L38.7 34.5M37.4 33.1L37.4 34.6M39.6 31.4L41.6 31.4M37.6 34L41.6 34M36.9 29.2L41.6 29.2M37.7 30L37.7 31.9M38 32.5L41.6 32.5M40.4 33.3L41.6 33.3M40.9 32.8L40.9 34.6M40.5 34.3L41.6 34.3M37.5 32.5L37.5 34.3M39.7 33.9L41.6 33.9M38.7 32.4L41.6 32.4M41.1 34.1L41.1 34.6M39 29L41.6 29M37.6 29.6L37.6 34.6M36.7 32.2L36.7 34.6" fill="none" stroke="#1a1a1a" stroke-width="0.55" stroke-opacity="0.85"/><rect x="36.2" y="29.8" width="4.2" height="4" fill="#111" opacity="0.65"/><rect x="30.6" y="30" width="3" height="3.6" fill="#000" opacity="0.13"/><path d="M32.9 31.8L33.6 31.8M33.4 30.5L33.6 30.5M30.6 30.3L32.4 30.3M32.3 31.9L32.3 33.4M31.7 32.7L33.6 32.7M31.2 33.4L31.2 33.6" fill="none" stroke="#1a1a1a" stroke-width="0.55" stroke-opacity="0.7"/><path d="M29.2 31.8L44.2 31.8" fill="none" stroke="#444" stroke-width="0.35" stroke-opacity="0.7"/><path d="M38.4 27L38.4 37.5" stroke="#444" stroke-width="0.35" stroke-opacity="0.7"/><rect x="52.8" y="29" width="6.4" height="5.6" fill="#000" opacity="0.13"/><path d="M55.5 32.2L59.2 32.2M57.9 34.4L57.9 34.6M56.4 31.6L56.4 34.6M56.5 32.5L56.5 33.7M56.9 32.5L58.6 32.5M56.7 29.9L56.7 32.9M57.8 33L57.8 34.6M57.9 29.4L59.2 29.4M58.6 32.9L59.2 32.9M54.3 32.4L57.7 32.4M57 30.6L57 33M58.6 33.9L59.2 33.9M53.2 31.1L53.2 34.6M54.9 29.4L54.9 34.6M58.2 31.7L59.2 31.7M53.7 31.1L53.7 34.6M59 31.7L59 33.7M52.9 29.4L52.9 33.9M59.1 32.8L59.1 34.6M58.9 34L58.9 34.6M57.7 29.1L59.2 29.1M57.8 30.1L59.2 30.1" fill="none" stroke="#1a1a1a" stroke-width="0.55" stroke-opacity="0.85"/><rect x="53.8" y="29.8" width="4.2" height="4" fill="#111" opacity="0.65"/><rect x="48.2" y="30" width="3" height="3.6" fill="#000" opacity="0.13"/><path d="M49.3 33.3L51.2 33.3M50.7 32.7L51.2 32.7M49.4 31.1L51.1 31.1M49 31.8L49.9 31.8M51.1 31.7L51.1 33.6M49.2 33.3L49.2 33.6" fill="none" stroke="#1a1a1a" stroke-width="0.55" stroke-opacity="0.7"/><path d="M46.8 31.8L61.8 31.8" fill="none" stroke="#444" stroke-width="0.35" stroke-opacity="0.7"/><path d="M56 27L56 37.5" stroke="#444" stroke-width="0.35" stroke-opacity="0.7"/><path d="M9.3 41.6L10.9 41.6M11.6 41.6L15.1 41.6M16 41.6L17.3 41.6" fill="none" stroke="#1a1a1a" stroke-width="0.7" stroke-opacity="0.8"/><rect x="11.6" y="44.6" width="3.6" height="3.6" fill="#000" opacity="0.13"/><path d="M12.9 47.6L15.1 47.6M13.3 47.2L15.2 47.2M13.4 45.3L13.4 46.2M14.1 45.9L14.1 48.2M11.6 46L13.6 46M14.3 47.7L14.3 48.2M13.5 46.1L13.5 48.2M12.6 46.4L13.9 46.4M14.1 46.1L14.1 47.3M14.4 47.6L14.4 48.2" fill="none" stroke="#1a1a1a" stroke-width="0.55" stroke-opacity="0.85"/><rect x="21.6" y="44" width="2.8" height="4.6" fill="#000" opacity="0.13"/><path d="M22 46.1L22 48.6M23.6 46L24.4 46M21.8 46.1L21.8 47.1M24.3 45.5L24.3 47.3M22.2 44.8L23.6 44.8M23.4 48.4L23.4 48.6M23.2 48.1L24.4 48.1M23.4 44.6L24.2 44.6M23.8 46.6L23.8 48" fill="none" stroke="#1a1a1a" stroke-width="0.55" stroke-opacity="0.85"/><path d="M15 46.4L40 46.4M9 46.4L11.6 46.4" fill="none" stroke="#555" stroke-width="0.35" stroke-opacity="0.55"/><rect x="11.6" y="50.6" width="3.6" height="3.6" fill="#000" opacity="0.13"/><path d="M13.1 51.3L14.5 51.3M14.3 51.5L14.3 53.8M13.5 54L15.2 54M13.8 51.4L15.2 51.4M13 53.1L13 54.2M14.7 51.8L15.2 51.8M14.4 52.3L15.2 52.3M11.6 51.3L15.2 51.3M13.3 53.8L13.3 54.2M12.9 51.4L15.2 51.4" fill="none" stroke="#1a1a1a" stroke-width="0.55" stroke-opacity="0.85"/><rect x="21.6" y="50" width="2.8" height="4.6" fill="#000" opacity="0.13"/><path d="M23.2 50.9L23.2 54.6M22.9 53.1L24.4 53.1M22.4 53.2L22.4 54.6M21.8 50.9L21.8 52M22.6 52.2L22.6 54M22.7 51L24.4 51M21.9 53.8L21.9 54.6M24.1 51.8L24.4 51.8M22.7 53.1L23.6 53.1" fill="none" stroke="#1a1a1a" stroke-width="0.55" stroke-opacity="0.85"/><path d="M15 52.4L40 52.4M9 52.4L11.6 52.4" fill="none" stroke="#555" stroke-width="0.35" stroke-opacity="0.55"/><path d="M69 6L69 38M72 8L72 36M75.6 6L75.6 30" fill="none" stroke="#666" stroke-width="0.3" stroke-opacity="0.45"/></g><rect x="0.5" y="0.5" width="89" height="63" fill="none" stroke="#8b9fd8" stroke-width="1"/></svg>
<div class="cell" style="left:894.2px;top:200.3px;width:92.0px;height:31.5px"></div>
<div class="cb" style="left:896.8px;top:206.9px"></div>
<div class="num" style="left:909.2px;top:206.6px">9</div>
<div class="ttl" style="left:896.4px;top:219.3px;letter-spacing:-0.1px">1階床梁伏図</div>
<svg class="th wd" style="left:894.6px;top:233.8px" width="91.2" height="64.6" viewBox="0 0 90 64" preserveAspectRatio="none"><rect x="0" y="0" width="90" height="64" fill="#fff"/><g opacity="0.68"><rect x="0" y="0" width="90" height="64" fill="#fff"/><rect x="0.5" y="0.5" width="89" height="63" fill="none" stroke="#8b9fd8" stroke-width="1"/><rect x="3.2" y="2.6" width="83.6" height="58.6" fill="none" stroke="#222" stroke-width="0.7"/><path d="M3.2 57.6L86.8 57.6" stroke="#222" stroke-width="0.6"/><rect x="3.2" y="57.6" width="22.8" height="3.6" fill="#000" opacity="0.22"/><rect x="70" y="57.6" width="16.8" height="3.6" fill="#000" opacity="0.25"/><path d="M3.8 58.6L6.2 58.6M7.3 58.6L9.7 58.6M10.6 58.6L12.1 58.6M13 58.6L16.4 58.6M17 58.6L18.3 58.6M21.6 58.6L24.5 58.6M25.1 58.6L25.8 58.6M3.8 60.1L5.4 60.1M5.8 60.1L8.2 60.1M9.3 60.1L11.8 60.1M12.6 60.1L15.6 60.1M21.3 60.1L24.4 60.1M25 60.1L25.8 60.1" fill="none" stroke="#111" stroke-width="1.1" stroke-opacity="1"/><path d="M26 57.6L26 61.2M44 57.6L44 61.2M70 57.6L70 61.2M8 57.6L8 61.2M14 57.6L14 61.2M20 57.6L20 61.2" fill="none" stroke="#111" stroke-width="0.6"/><path d="M45 58.6L47.4 58.6M48.4 58.6L49.8 58.6M50.5 58.6L52.3 58.6M53.3 58.6L56.1 58.6M57 58.6L58.4 58.6M59 58.6L62.7 58.6M45 60.1L46.2 60.1M46.9 60.1L49.1 60.1M53.9 60.1L55.3 60.1M55.8 60.1L57.7 60.1M58.3 60.1L61.3 60.1M61.9 60.1L63 60.1" fill="none" stroke="#111" stroke-width="1.3" stroke-opacity="1"/><path d="M71 58.6L72.8 58.6M73.7 58.6L77.3 58.6M77.9 58.6L79.3 58.6M80.3 58.6L81.7 58.6M82.2 58.6L84.1 58.6M85.2 58.6L86 58.6M71 60.1L72.4 60.1M73.5 60.1L76.9 60.1M77.9 60.1L81.7 60.1M82.4 60.1L85.9 60.1" fill="none" stroke="#111" stroke-width="1.1" stroke-opacity="1"/><path d="M10.2 6.2L14 6.2M15.1 6.2L16.8 6.2M17.4 6.2L20 6.2M20.8 6.2L22.7 6.2M23.8 6.2L27.5 6.2M28.4 6.2L31 6.2M31.9 6.2L34.9 6.2M10.2 7.4L13.5 7.4M14.7 7.4L18.6 7.4M19.2 7.4L21.4 7.4M22.1 7.4L25.7 7.4M26.4 7.4L27.9 7.4M28.9 7.4L32.8 7.4M33.2 7.4L35 7.4M35.8 7.4L36.2 7.4M10.2 8.6L13.1 8.6M13.9 8.6L15 8.6M15.8 8.6L19.4 8.6M19.9 8.6L23.8 8.6M24.4 8.6L28.3 8.6M28.7 8.6L32.6 8.6M33.1 8.6L34.5 8.6M35.4 8.6L36.2 8.6" fill="none" stroke="#1a1a1a" stroke-width="0.9" stroke-opacity="0.85"/><path d="M10.2 10.2L13.7 10.2M14.8 10.2L17.3 10.2M18.2 10.2L19.7 10.2M20.5 10.2L22.1 10.2M22.9 10.2L25 10.2M29.4 10.2L32.8 10.2M33.9 10.2L35.6 10.2M10.2 11.7L13.8 11.7M14.3 11.7L15.6 11.7M19 11.7L20.1 11.7M21 11.7L24.8 11.7M25.8 11.7L29 11.7M29.8 11.7L33.4 11.7M34.3 11.7L36.2 11.7M12.7 13.2L15.1 13.2M16.3 13.2L18.4 13.2M19.3 13.2L23 13.2M24 13.2L26.2 13.2M27 13.2L30.8 13.2M32 13.2L35.9 13.2M10.2 14.7L13.5 14.7M14.3 14.7L16.2 14.7M16.6 14.7L18.7 14.7M19.1 14.7L21.9 14.7M22.6 14.7L25.7 14.7M29.9 14.7L31.6 14.7M34 14.7L36.2 14.7M10.2 16.1L11.4 16.1M12.5 16.1L14.7 16.1M15.2 16.1L16.4 16.1M17.1 16.1L18.7 16.1M19.5 16.1L22.2 16.1M23 16.1L24.8 16.1M29.1 16.1L31.9 16.1M32.9 16.1L35.5 16.1M10.2 17.6L11.5 17.6M12 17.6L13.5 17.6M18.4 17.6L21.1 17.6M21.7 17.6L23 17.6M23.4 17.6L24.5 17.6M25.5 17.6L28.4 17.6M29.2 17.6L31.7 17.6M32.4 17.6L34.1 17.6M34.6 17.6L35.7 17.6" fill="none" stroke="#555" stroke-width="0.5" stroke-opacity="0.55"/><rect x="10.2" y="9.2" width="26" height="9.4" fill="#000" opacity="0.06"/><rect x="64" y="5" width="21" height="8.4" fill="#000" opacity="0.13"/><path d="M74.1 10.6L74.1 13.4M82.9 11.3L85 11.3M73.6 8.3L73.6 13.4M73.8 8L73.8 10.5M83.4 6.4L85 6.4M76.8 7.1L76.8 8.4M70.4 10.4L78.3 10.4M83.2 11.7L84.4 11.7M77.9 9L77.9 9.9M77.6 8.7L82.5 8.7M75.6 6.2L75.6 12.1M68.5 7.2L68.5 12.5M67.6 8.3L73 8.3M65.5 11.3L71.1 11.3M75.5 5.9L80 5.9M74.8 6.4L76.1 6.4M78.6 10.6L85 10.6M72.2 7.8L72.2 12.5M82.1 5.8L82.1 11M79.7 8.6L81.1 8.6M76.5 11.5L79 11.5M71.7 5.4L80 5.4M73.3 13.1L80.1 13.1M83.8 11.9L85 11.9M81.8 12.7L85 12.7M82.3 10.5L82.3 13.4M78.5 12.5L78.5 13.4M79.7 8.7L79.7 10.5M75.3 8.8L80.2 8.8M81.7 7.4L81.7 10.1M74.3 7.6L75.7 7.6M72.7 9.6L78.5 9.6M65.4 5.5L65.4 10.6M79.5 12.8L81.5 12.8M79 8.4L79 12.5M65.7 12.9L68 12.9M77.8 9.7L84 9.7M68.8 10.5L76.9 10.5M66.2 13.3L67.4 13.3M74.6 7.7L80.8 7.7M80.7 5.9L83.2 5.9M80.8 13.4L84.6 13.4M65.5 6.5L65.5 13.4M83.4 6.5L83.4 7.9M79.2 12.4L79.2 13.4M64.3 12.3L64.3 13.4" fill="none" stroke="#1a1a1a" stroke-width="0.55" stroke-opacity="0.85"/><path d="M62 9L86 9" stroke="#1a1a1a" stroke-width="0.7" stroke-opacity="0.8"/><path d="M67 14.9L68.1 14.9M69.1 14.9L70.1 14.9M70.7 14.9L74.4 14.9M75 14.9L77.8 14.9" fill="none" stroke="#1a1a1a" stroke-width="0.7" stroke-opacity="0.8"/><rect x="14.8" y="22.4" width="24.2" height="30" fill="none" stroke="#333" stroke-width="0.5"/><path d="M8.6 30.6L42 30.6M8.6 36.2L42 36.2M8.6 41.8L42 41.8M18.6 19.6L18.6 54.6M27.8 19.6L27.8 54.6M36.2 19.6L36.2 54.6" fill="none" stroke="#1a1a1a" stroke-width="0.55" stroke-opacity="0.8"/><rect x="17.3" y="29.4" width="2.6" height="2.4" fill="#111" opacity="0.85"/><rect x="17.3" y="35" width="2.6" height="2.4" fill="#111" opacity="0.85"/><rect x="17.3" y="40.6" width="2.6" height="2.4" fill="#111" opacity="0.85"/><rect x="26.5" y="29.4" width="2.6" height="2.4" fill="#111" opacity="0.85"/><rect x="26.5" y="35" width="2.6" height="2.4" fill="#111" opacity="0.85"/><rect x="26.5" y="40.6" width="2.6" height="2.4" fill="#111" opacity="0.85"/><rect x="34.9" y="29.4" width="2.6" height="2.4" fill="#111" opacity="0.85"/><rect x="34.9" y="35" width="2.6" height="2.4" fill="#111" opacity="0.85"/><rect x="34.9" y="40.6" width="2.6" height="2.4" fill="#111" opacity="0.85"/><path d="M18.6 41.8L27.8 48" stroke="#1a1a1a" stroke-width="0.5" stroke-opacity="0.7"/><path d="M8.6 28L8.6 52M10 52L13 52M14.8 54.6L39 54.6" fill="none" stroke="#1a1a1a" stroke-width="0.5" stroke-opacity="0.7"/><rect x="8" y="32" width="2.4" height="8" fill="#000" opacity="0.13"/><path d="M8.6 32.8L10.4 32.8M9.5 33.2L9.5 36.9M8.7 32.5L8.7 35.8M8.8 32.9L8.8 36.5M9.1 32.9L9.1 35.9M8.7 35L8.7 38.3M10.2 37L10.2 38.4M9.9 38.9L10.4 38.9" fill="none" stroke="#1a1a1a" stroke-width="0.55" stroke-opacity="0.7"/><rect x="38" y="49.6" width="3.4" height="3" fill="#000" opacity="0.13"/><path d="M41 50.2L41.4 50.2M40.6 52.2L40.6 52.6M40.2 51.7L41.4 51.7M38.5 49.7L38.5 52.6M41.3 51.8L41.4 51.8M41 51.2L41 52.6M40.7 51.5L41.4 51.5M40.4 51.2L40.4 52.6" fill="none" stroke="#1a1a1a" stroke-width="0.55" stroke-opacity="0.8"/><rect x="48" y="22.2" width="24.4" height="30" fill="none" stroke="#333" stroke-width="0.5"/><rect x="61" y="24" width="8.6" height="13" fill="none" stroke="#333" stroke-width="0.5"/><path d="M44 33.6L80 33.6M44 38.6L72 38.6M54.6 26L54.6 54.6M64.6 19.6L64.6 54.6M60.6 30L60.6 54.6" fill="none" stroke="#1a1a1a" stroke-width="0.5" stroke-opacity="0.75"/><rect x="62.6" y="31.2" width="4.4" height="4.6" fill="#111" opacity="0.85"/><path d="M67.4 34.4L69 34.4M65.8 35.6L68.1 35.6M62.2 32.7L62.2 35.2M65.2 33.1L65.2 34.8M62.9 29.5L65.4 29.5M67.5 33L69 33M64.4 29.7L66.6 29.7M63.6 31.4L66.6 31.4M63.6 32.8L66.3 32.8M66.8 35.3L68.7 35.3M65.7 29.2L67.7 29.2M63.2 32.7L63.2 36.3M62.7 29.3L65.7 29.3M60.3 31.6L60.3 32.9M62.3 33.4L62.3 34.3M64.5 29.2L64.5 31.8M64.3 33.9L67.9 33.9M65 36.9L67.8 36.9" fill="none" stroke="#1a1a1a" stroke-width="0.5" stroke-opacity="0.8"/><path d="M48 36L60 47.5" stroke="#1a1a1a" stroke-width="0.45" stroke-opacity="0.6"/><rect x="76" y="31.4" width="9.6" height="2.4" fill="#000" opacity="0.13"/><path d="M78.3 31.8L80.3 31.8M79.9 31.7L82.2 31.7M79.3 33.3L79.3 33.8M80.2 31.8L82.1 31.8M76.1 33.1L78.7 33.1M82.1 33.6L84.3 33.6M85 33.5L85.6 33.5M84.7 32.9L85.5 32.9M79.2 32.4L80.8 32.4M81.3 33.6L81.3 33.8M76.1 32.1L79.5 32.1M79.1 32L79.1 33.8M82.2 33.2L82.2 33.8M80.3 33.4L80.3 33.8M84.6 32.1L85.6 32.1M77.1 32.1L80.8 32.1" fill="none" stroke="#1a1a1a" stroke-width="0.55" stroke-opacity="0.9"/><path d="M74 34.6L86 34.6" stroke="#444" stroke-width="0.4" stroke-opacity="0.7"/><path d="M50 52.2L50 55M56 52.2L56 55M66 52.2L66 55M70 52.2L70 55" fill="none" stroke="#1a1a1a" stroke-width="0.5" stroke-opacity="0.7"/><rect x="23.4" y="55.4" width="9" height="1" fill="#222" opacity="0.8"/><rect x="56.6" y="55.4" width="9" height="1" fill="#222" opacity="0.8"/></g><rect x="0.5" y="0.5" width="89" height="63" fill="none" stroke="#8b9fd8" stroke-width="1"/></svg>
<div class="cell" style="left:139.8px;top:305.0px;width:92.0px;height:31.5px"></div>
<div class="cb" style="left:142.4px;top:311.6px"></div>
<div class="num" style="left:154.8px;top:311.3px">10</div>
<div class="ttl" style="left:142.0px;top:324.0px;letter-spacing:-0.2px">デッキスラブ設計標準図</div>
<svg class="th wd" style="left:140.2px;top:338.6px" width="91.2" height="64.8" viewBox="0 0 90 64" preserveAspectRatio="none"><rect x="0" y="0" width="90" height="64" fill="#fff"/><g opacity="0.72"><rect x="0" y="0" width="90" height="64" fill="#fff"/><rect x="0.5" y="0.5" width="89" height="63" fill="none" stroke="#8b9fd8" stroke-width="1"/><rect x="3.2" y="2.6" width="83.6" height="58.6" fill="none" stroke="#222" stroke-width="0.7"/><path d="M3.2 57.6L86.8 57.6" stroke="#222" stroke-width="0.6"/><rect x="3.2" y="57.6" width="22.8" height="3.6" fill="#000" opacity="0.22"/><rect x="70" y="57.6" width="16.8" height="3.6" fill="#000" opacity="0.25"/><path d="M3.8 58.6L6.2 58.6M7.3 58.6L9.7 58.6M10.6 58.6L12.1 58.6M13 58.6L16.4 58.6M17 58.6L18.3 58.6M21.6 58.6L24.5 58.6M25.1 58.6L25.8 58.6M3.8 60.1L5.4 60.1M5.8 60.1L8.2 60.1M9.3 60.1L11.8 60.1M12.6 60.1L15.6 60.1M21.3 60.1L24.4 60.1M25 60.1L25.8 60.1" fill="none" stroke="#111" stroke-width="1.1" stroke-opacity="1"/><path d="M26 57.6L26 61.2M44 57.6L44 61.2M70 57.6L70 61.2M8 57.6L8 61.2M14 57.6L14 61.2M20 57.6L20 61.2" fill="none" stroke="#111" stroke-width="0.6"/><path d="M45 58.6L47.4 58.6M48.4 58.6L49.8 58.6M50.5 58.6L52.3 58.6M53.3 58.6L56.1 58.6M57 58.6L58.4 58.6M59 58.6L62.7 58.6M45 60.1L46.2 60.1M46.9 60.1L49.1 60.1M53.9 60.1L55.3 60.1M55.8 60.1L57.7 60.1M58.3 60.1L61.3 60.1M61.9 60.1L63 60.1" fill="none" stroke="#111" stroke-width="1.3" stroke-opacity="1"/><path d="M71 58.6L72.8 58.6M73.7 58.6L77.3 58.6M77.9 58.6L79.3 58.6M80.3 58.6L81.7 58.6M82.2 58.6L84.1 58.6M85.2 58.6L86 58.6M71 60.1L72.4 60.1M73.5 60.1L76.9 60.1M77.9 60.1L81.7 60.1M82.4 60.1L85.9 60.1" fill="none" stroke="#111" stroke-width="1.1" stroke-opacity="1"/><rect x="12" y="3.6" width="50" height="1.3" fill="#111"/><path d="M34.6 5L34.6 57.6M60.4 5L60.4 57.6M7.6 5L7.6 57.6M84.6 5L84.6 57.6" fill="none" stroke="#1a1a1a" stroke-width="0.6" stroke-opacity="0.85"/><path d="M7.6 6L7.6 57M14 6L14 57M20.4 6L20.4 57M26.9 6L26.9 57M33.3 6L33.3 57M39.7 6L39.7 57M46.1 6L46.1 57M52.5 6L52.5 57M58.9 6L58.9 57M65.3 6L65.3 57M71.8 6L71.8 57M78.2 6L78.2 57M84.6 6L84.6 57M7.6 6L84.6 6M7.6 11.1L84.6 11.1M7.6 16.2L84.6 16.2M7.6 21.3L84.6 21.3M7.6 26.4L84.6 26.4M7.6 31.5L84.6 31.5M7.6 36.6L84.6 36.6M7.6 41.7L84.6 41.7M7.6 46.8L84.6 46.8M7.6 51.9L84.6 51.9M7.6 57L84.6 57" fill="none" stroke="#444" stroke-width="0.35" stroke-opacity="0.6"/><path d="M21.4 15.6L21.4 21.2M23.3 54L23.3 55.2M13.8 18.8L13.8 21.2M32.5 42L34 42M15.4 17.1L18.8 17.1M11 16.6L11 21.8M10.5 50.2L13.5 50.2M28.9 41.1L31.9 41.1M22.1 48.6L26.5 48.6M8.8 24.3L8.8 26.5M23.8 13.1L26.7 13.1M20.5 19.2L24.7 19.2M33.9 25.3L33.9 28.6M17.1 52L20.7 52M14.2 22.8L14.2 26.3M12 49.2L17.4 49.2M24.7 18.1L24.7 19.4M14.4 27.1L14.4 31.5M31.4 55.7L34 55.7M29.8 13.7L32.4 13.7M29.5 16.6L34 16.6M23.9 44L26.4 44M27.3 38.2L30.2 38.2M12.2 28.8L16.4 28.8M8.4 29.5L8.4 31.5M26.3 31.6L26.3 32.8M20.1 44.9L24.9 44.9M15.6 34.5L16.9 34.5M26.7 8.7L28.7 8.7M31.5 42.3L31.5 46.8M13.8 47.7L16.4 47.7M10.1 20.3L10.1 23M20.9 20.1L24.7 20.1M29.2 23L31 23M23.1 38.9L25.3 38.9M25 17.2L27.3 17.2M28.7 12.8L28.7 15M21.6 6.2L21.6 9.7M21.3 46.2L26.3 46.2M30.9 7.9L30.9 9.1M18.4 44.8L21.3 44.8M22.1 42.9L22.1 48M18.3 56.3L18.3 57M23.5 8.8L23.5 11M9 27.3L13.1 27.3M22.2 8.2L23.6 8.2M21.1 26.1L21.1 30.9M27.5 6.6L27.5 9.8M21.9 37.5L26.7 37.5M33.7 24.7L33.7 28M9.3 43.8L9.3 45.3M16.2 44.6L16.2 47.9M31.6 43.9L34 43.9M27.9 39.7L29.6 39.7M20.4 28.4L24.5 28.4M30.6 53.7L31.7 53.7M20.5 26L23.5 26M15.1 28.3L17.8 28.3M28.5 35.1L28.5 40.7M30.2 21L34 21M11.1 17.4L12.1 17.4M23.9 10.1L27.9 10.1M11 9.2L15 9.2M20.6 25.6L20.6 29.9M29.6 42.9L32.7 42.9M16 10.3L18 10.3M16.6 53L21.9 53M27.7 38.3L30 38.3M8.5 21.7L8.5 25.3M26.4 52L26.4 57M23.6 29.1L26.2 29.1M11.4 21.6L14.9 21.6M13.2 40.8L15.7 40.8M10.8 37.1L10.8 40M10.7 20.3L15.2 20.3M24.2 55.9L27.7 55.9M12.7 44.1L12.7 45.2M13.8 13.8L19.1 13.8M13.2 47.4L13.2 51.9M32 29.3L34 29.3M23.7 21.5L23.7 24.3M22.5 28.4L22.5 32M10 21.4L11.3 21.4M28.7 8L32.2 8M33.1 19.4L34 19.4M29.7 53.8L32.4 53.8M12.2 45L17.6 45M25.8 32.8L25.8 36.6M13.6 33.9L18.1 33.9M31.4 55L34 55M32.4 47L33.8 47M8.7 41.2L12.8 41.2M25.8 10.4L31.2 10.4M23.6 32.3L23.6 36.7M8.6 43.8L11 43.8M18.1 6.4L19.3 6.4M11 20.8L15.6 20.8M19.6 24.9L19.6 25.9M16.1 54.5L16.1 56.9M23.6 46.8L27.9 46.8M29.3 46.6L29.3 52.2M26.1 55.4L27.5 55.4M19 6.1L20.3 6.1M16.1 9.6L17.1 9.6M18.2 42.8L23.7 42.8M30.1 14.4L34 14.4M28.1 14.7L29.6 14.7M28.2 45.4L33.7 45.4M25 31.3L30 31.3M14.4 7.1L16.2 7.1M31 32.7L31 36.4M10.1 16.7L10.1 21M14.3 27.2L18.3 27.2M10.4 40.1L10.4 42.5M30.4 25.7L34 25.7M8.4 50.4L11.2 50.4M33.5 11.8L34 11.8M21 10.4L26.1 10.4M17.1 33.6L22 33.6M15.8 53.5L20.3 53.5M11.7 28.4L13 28.4M15 32.6L19.1 32.6M31 33.8L31 36.2M13.6 24.4L15.3 24.4M12.3 44.1L14.8 44.1M26 46.3L28.6 46.3M18.8 7.8L18.8 11.2M24.8 37.8L30.3 37.8M33.4 20L34 20M23.8 28.4L23.8 31.5M14 53.4L18 53.4M13.4 28.4L13.4 31.4M13.3 39.1L14.1 39.1M21.1 41.5L22 41.5M25.3 56.1L29.6 56.1M10.1 20.2L12.6 20.2M13.5 42L13.5 45.8M9.4 31.4L11.6 31.4M10.6 54.7L10.6 57M15.6 32.8L18.9 32.8M20.3 53.3L24.2 53.3M17.2 13.9L22.8 13.9M27.7 52.6L31.4 52.6M12.1 52L17.1 52M17.5 55.4L18.4 55.4M21.3 28L21.3 29.5M19.8 19.5L19.8 22M19.8 41.1L22 41.1M33.3 49.6L34 49.6M14.8 14.1L17.7 14.1" fill="none" stroke="#1a1a1a" stroke-width="0.6" stroke-opacity="0.75"/><path d="M37.2 35.8L37.2 38.6M50.4 32.6L55.9 32.6M56.2 27.5L56.2 31.7M55.2 36.8L60 36.8M45.7 49.8L50.3 49.8M40.7 23.7L43.7 23.7M58.4 39L60 39M43.1 27L44.6 27M44.2 43.6L49.5 43.6M38.4 49.6L39.3 49.6M49.1 33.2L49.1 35M52.8 6.3L57.2 6.3M47.3 35.4L47.3 39.5M39.5 15.7L41.3 15.7M54.7 49.8L54.7 52.4M54.8 49.9L59.4 49.9M55 22.6L58.7 22.6M45.1 25.3L48.4 25.3M45.9 31.4L45.9 36.7M38.8 26L43.4 26M56.6 8.4L60 8.4M59 24.8L60 24.8M41.9 22.2L45.6 22.2M39.5 50.2L39.5 51.3M41.5 45L41.5 49.5M54.3 6.5L54.3 11.1M54.7 32.5L55.7 32.5M41.2 42.8L42.7 42.8M53.8 34.9L53.8 39.4M53.1 6.3L57.2 6.3M55.5 19.2L57 19.2M46.3 14.3L50.9 14.3M44.4 23.3L45.7 23.3M57.3 14.7L60 14.7M53.8 14.4L56.6 14.4M37.9 25.1L41.3 25.1M44.7 34.5L44.7 35.4M35.5 26.5L39.8 26.5M38.7 7.1L40.2 7.1M53.6 55.3L53.6 57M45.4 32.9L51 32.9M57.8 21.3L57.8 24.3M45.9 53L50.1 53M59.4 7.5L60 7.5M59.1 18.4L60 18.4M52.8 26.3L52.8 30.2M52.9 48.1L55 48.1M47.8 15.1L52.3 15.1M49.9 16.9L49.9 19.6M50.9 22.8L54.5 22.8M56.2 38.6L57.6 38.6M40.5 48L43.2 48M51.1 28.7L53.1 28.7M52.7 33L58.1 33M44.1 48.4L48.5 48.4M41.2 42.7L44.1 42.7M46.6 53.2L49.9 53.2M44.4 10.1L49.5 10.1M45.6 29.8L47.7 29.8M36.2 51L41.7 51M59.6 50.3L60 50.3M40.6 7.7L45.1 7.7M58.1 39.9L60 39.9M56.4 28.9L56.4 31.3M35.8 46.2L35.8 49.7M56.7 10.2L59.4 10.2M50 10.6L55.2 10.6M35.7 52.1L35.7 55.5M43.6 56L49.1 56M43.2 9.8L46.8 9.8M53.7 18.8L59 18.8M41.6 17.1L46.8 17.1M53.5 27.1L58.2 27.1M53.1 12.3L58.8 12.3M51.1 8.8L51.1 9.8M59.2 7.6L60 7.6M36.4 26.6L39 26.6M52.5 27.7L52.5 28.7M40.4 29.9L44.6 29.9M58.6 54.9L60 54.9M46.3 45.6L46.3 49.9M54.3 46.1L58.6 46.1M40.9 47.4L44.6 47.4M56.6 8.2L60 8.2M48.6 34.1L52.6 34.1M50.8 9.7L52.3 9.7M58.1 15.7L58.1 20.2M56.2 36.1L59.4 36.1M43.2 33.7L43.2 39M36.8 45.7L36.8 46.6M38.3 7.9L42.4 7.9M48.2 26.7L49.5 26.7M55.2 53.4L55.2 57M58.2 8.5L58.2 11.4M56.6 53.8L59.1 53.8M39.1 20.3L40.4 20.3M40.8 25.6L40.8 28.2M58.9 43.8L60 43.8M56 35.2L56 36.7M49.8 26.1L49.8 27.8M37.8 13.1L42.9 13.1M53 28.5L56.1 28.5M51.5 13.2L56.6 13.2M54.1 36.9L54.1 39.3M52.7 23.5L52.7 28.8M37 12.4L37 15.6M53.8 56.6L59.1 56.6M50.4 31.7L54.4 31.7M43.3 33.9L43.3 39.1M58.9 37.3L58.9 38.6M50.4 30.8L54.1 30.8M53 55.6L56.7 55.6M55.4 14.9L58.8 14.9M41.2 56.9L43.9 56.9M42.8 28.1L47.5 28.1M47.3 46.5L47.3 49.9M49.6 29.4L49.6 31.7M58.2 8.8L60 8.8M44.9 9.7L44.9 14M44.6 22.4L48.1 22.4M44.7 18.9L44.7 23.3M40.7 40.8L43.6 40.8M57.5 48.7L60 48.7M45.7 24.7L45.7 27.8M39.3 30.2L42.4 30.2M36.3 40.2L38 40.2M53.4 22.2L53.4 25.8M48.2 10.5L53.1 10.5M49.5 11.5L52.2 11.5M42.4 35.4L44 35.4M48.8 35.5L52.9 35.5M55.8 47.7L58.9 47.7M46.7 23.2L46.7 26.8M43.1 49.4L47.6 49.4M43.5 47L43.5 50.4M39.1 54.7L40.3 54.7M50.9 50.4L50.9 53M47.7 15.2L47.7 16.6M51 13.7L54.6 13.7M49.8 35L49.8 38.9" fill="none" stroke="#1a1a1a" stroke-width="0.6" stroke-opacity="0.75"/><path d="M72.7 36.4L72.7 38.8M77.8 44.8L77.8 47.9M77.9 36.2L79.2 36.2M83.3 34.5L83.3 37.2M64.3 22.8L69 22.8M69.9 55.6L73.3 55.6M62.9 36.4L66.2 36.4M82.4 37.8L82.4 41.3M70.1 55.8L74.3 55.8M71.5 55.4L75.3 55.4M80.6 27.1L82.9 27.1M65.7 40L69.6 40M72.1 23L72.1 27.3M62.2 38.2L62.2 43M78.9 54.6L78.9 57M78 18.8L78 23.2M73.2 18.2L73.2 23.7M79.1 18.4L80.7 18.4M69.7 23.3L74.3 23.3M83.9 8.7L83.9 11.5M72.5 40.3L72.5 45.3M64.9 8.6L70.6 8.6M72.9 11.6L76.2 11.6M64.8 40.6L64.8 44.8M80.1 55.4L84 55.4M73.1 40L78.3 40M71.4 20.7L71.4 22.7M61.4 43.7L67.1 43.7M65.2 20.3L65.2 25.2M82.1 37.1L84 37.1M73.8 43.4L73.8 45.7M65.3 55.9L68.4 55.9M63.3 40L68.7 40M61.5 23L66.3 23M70.2 19.7L71 19.7M69.1 38L69.1 42.3M81.8 36L81.8 40M68.2 56.6L68.2 57M71.8 17.7L74.4 17.7M64.8 9.9L64.8 12.1M78.5 23.9L82.8 23.9M63.9 28.8L63.9 31.3M63.2 45.3L63.2 46.6M78.2 54.8L82.3 54.8M82.7 54L82.7 57M76.8 27.9L79 27.9M74.1 21.1L78.1 21.1M62.6 49.2L66.5 49.2M77.4 54.1L81 54.1M83.6 10.8L83.6 14.1M65.9 21L65.9 26.7M65.2 45.4L65.2 50.9M80.7 14.6L83 14.6M72.4 40.4L74.8 40.4M76.9 49.8L81.9 49.8M62.4 30.2L62.4 31.7M63.4 50.5L64.7 50.5M74.8 35.5L77.4 35.5M69.8 39.7L69.8 42.7M75.5 28.5L76.4 28.5M67.3 51.3L72.7 51.3M66.8 16.9L70.3 16.9M67.4 44.3L70.3 44.3M64.1 41.1L64.1 45.5M69.3 20.6L74.4 20.6M69.8 41.5L71.2 41.5M63.1 54.7L63.1 57M67.2 41.1L70.8 41.1M76.1 17.5L76.1 21.4M62.5 21.5L64.9 21.5M82.3 6.8L82.3 10M83.8 28.7L83.8 30M72.1 7.6L73.2 7.6M72.4 57L73.7 57M66.2 41L70.6 41M66 53.3L66 54.3M78.3 21.7L78.3 27.1M76.7 9.7L79 9.7M77.6 51.1L78.6 51.1M80.8 38L80.8 43.3M61.2 56.9L63.7 56.9M62.9 28.6L64.2 28.6M62.3 25.8L67.4 25.8M72.3 19.7L75.2 19.7M66.7 45.2L68.5 45.2M71.7 17.8L73.1 17.8M63.6 21L67.9 21M61.2 48.1L66.9 48.1M62.8 29.8L62.8 35.4M61.9 33.3L67.6 33.3M75.3 26.9L77.2 26.9M80.1 26L80.1 31.2M73.4 48L76.4 48M78.8 18.2L78.8 23.1M70.3 56.4L74.3 56.4M65.3 42.6L70.7 42.6M70.4 23.2L73 23.2M70.2 40.2L70.2 45.3M80.2 24.6L84 24.6M67.9 41.5L71.2 41.5M61.8 40.9L67.3 40.9M74.6 56.9L77.4 56.9M69.2 39.9L73.5 39.9M74.7 6.9L76.4 6.9M71.4 19.9L77.2 19.9M73.2 16.6L73.2 20M76.6 8.9L80.6 8.9M82.6 33.3L82.6 36.5M63 40.2L65 40.2M78.3 44.5L78.3 47.6M61.7 41.5L61.7 43.1M66.1 20.2L69.5 20.2M76.8 21.7L79 21.7M81.9 34.7L81.9 40.3M71.3 38.4L72.9 38.4M63.5 43.5L63.5 47.4M81.7 52.2L84 52.2M64.7 13.6L66.7 13.6M74.9 18.9L74.9 24.2M64.2 34.6L68.5 34.6" fill="none" stroke="#1a1a1a" stroke-width="0.6" stroke-opacity="0.75"/><rect x="12" y="12" width="12" height="5" fill="#000" opacity="0.13"/><path d="M23.5 14.7L23.5 16.4M17 15.9L18 15.9M23.6 16.1L24 16.1M17.1 13.1L18.4 13.1M13.7 13L18.8 13M15.5 14L15.5 15.3M18.2 15.3L23.9 15.3M18.8 14.4L18.8 17M17.3 12.7L17.3 16.1M23.4 14.3L23.4 17M17.4 14L17.4 17M21.2 16.7L22.9 16.7M12.7 16.7L14.7 16.7M20.3 14.3L23.5 14.3M19 15.2L23.4 15.2M16.8 12.8L17.7 12.8M23.4 14.4L24 14.4M20.8 16.1L20.8 17M12.7 16.2L15.4 16.2M14.5 16.1L19.7 16.1M23.6 13.1L24 13.1M14 15.6L14 17M14.5 12.8L19.6 12.8M17.7 15.8L18.5 15.8M13.1 13.8L14.3 13.8M17 13.8L19.1 13.8M21.1 16.8L24 16.8M19.5 15.7L24 15.7M14.8 14.2L20.4 14.2M18.1 13.8L20.5 13.8M17.4 14.9L17.4 17M15.8 13.4L17.3 13.4M21.4 15.3L21.4 17M23.4 16.5L23.4 17M12.5 15.1L14.7 15.1M24 13.5L24 15.6M13.5 13.4L18.4 13.4M21.3 14.1L21.3 17M17.1 12.3L20.8 12.3M21.6 14.6L21.6 17M19.8 16.2L24 16.2M13.9 12.4L13.9 15.8M14.8 12.5L14.8 14.2M22.4 16.3L23.6 16.3M17.6 14.2L22.9 14.2M22.2 16.5L24 16.5M19.9 13.9L19.9 17M13 12.6L16.2 12.6M13.8 12.2L15.3 12.2M13 14.1L15.6 14.1M19.5 13.8L20.6 13.8M21.8 15.9L21.8 17M23.8 13.1L24 13.1M20.5 16.8L20.5 17M17.2 12.1L17.2 14.8M20.1 17L20.1 17M14.2 12.5L17.2 12.5M19.1 14.9L19.1 17" fill="none" stroke="#1a1a1a" stroke-width="0.55" stroke-opacity="0.8"/><rect x="22" y="18" width="6" height="3.4" fill="#000" opacity="0.13"/><path d="M27.4 18.8L28 18.8M26.4 19.2L26.4 21.4M22 20.4L23.4 20.4M27 20.2L28 20.2M24.9 18.6L27.6 18.6M27.6 18.9L28 18.9M24.6 21L24.6 21.4M23.1 18.5L23.1 19.6M25.6 18.3L28 18.3M24.9 20.1L28 20.1M25.9 20.6L28 20.6M25.2 20.5L25.2 21.4M25.4 18.8L28 18.8M26.2 19.6L26.2 21.4M23.8 19.3L25 19.3M23.1 20.1L24.6 20.1M24.5 21.2L26.4 21.2M25.6 20.3L28 20.3M22.1 18.8L22.1 20.3M27.7 19.6L28 19.6M26.1 18.9L28 18.9M25.6 21.1L25.6 21.4" fill="none" stroke="#1a1a1a" stroke-width="0.55" stroke-opacity="0.8"/><rect x="15" y="28" width="14" height="8" fill="#000" opacity="0.13"/><path d="M23 32.6L23 36M21.6 31.8L23.6 31.8M23.8 28.7L29 28.7M20 34.1L23.7 34.1M26.2 31.8L29 31.8M23.8 30.4L23.8 32.5M20.6 30L24.5 30M20.7 33.9L20.7 34.9M24.2 33.1L24.2 35M15.1 32.5L15.1 36M16.3 32L16.3 36M21.3 31.3L21.3 35.9M25 30.9L29 30.9M25.1 31.9L27.1 31.9M28.3 28.2L28.3 33.4M20.5 34.4L20.5 36M27 28.8L29 28.8M24.8 34.7L24.8 36M20.9 31L20.9 36M23.1 35.8L23.1 36M18.5 30.8L18.5 35.2M28.8 32.4L28.8 36M22.5 33.9L26.5 33.9M27.1 34.6L29 34.6M23 33.8L23 36M28.9 34.5L29 34.5M17.3 28.3L17.3 29.8M28.9 30.1L28.9 31.7M24.8 32.8L27.9 32.8M26.1 35L28.2 35M17.9 28.5L25 28.5M23.5 35.4L23.5 36M16.6 32.3L16.6 34.4M25 30L29 30M18.2 32.6L19.2 32.6M22.3 28L29 28M29 31.3L29 31.3M16 30.2L18.6 30.2M19.1 32.8L20.3 32.8M21 35.2L27.2 35.2M24 33.9L24 35.8M19.6 32L21 32M17.4 31.7L22 31.7M19.5 33.2L19.5 36M21.2 34.8L23 34.8M15 32.9L15 34.7M25.4 29.9L25.4 33.1M22.2 29.8L22.2 36M26.9 34.2L29 34.2M15.9 32.7L19.5 32.7M15.1 28.1L18.4 28.1M19.3 33.3L25.4 33.3M25.1 30.1L29 30.1M25.7 34.3L29 34.3M24.8 35.7L24.8 36M22.5 31.8L22.5 36M25.4 35.4L29 35.4M25.2 35.2L25.2 36M24.9 31.9L25.8 31.9M15.9 28.5L15.9 30.3M23.9 34.6L28 34.6M28.7 32.8L29 32.8M19 29.6L22.4 29.6M15.7 32.4L15.7 36M25.9 30.3L29 30.3M23.2 31.6L23.2 34.8M22.3 28.2L26.5 28.2M18.3 32.6L22.4 32.6M24.8 30.1L24.8 33.7M24.8 31.7L27.7 31.7M24.5 35.9L29 35.9M20.1 32.4L20.1 36M15 34.1L22.9 34.1M28.9 31L29 31M20.9 33.6L20.9 36M22.6 31.2L28 31.2M20.4 28.8L20.4 30.6M26.4 30.3L29 30.3M28.9 35L29 35M20.4 33.9L24 33.9M28.4 29.7L28.4 31.3M22.5 33.3L28.3 33.3M28.7 33L29 33M28.4 33.9L29 33.9M16.9 32.9L16.9 36M23.8 32.9L29 32.9M16.7 35L21.4 35M25.1 30.6L26.3 30.6M20.9 32.8L20.9 34.1M27 30.6L29 30.6M22.9 29L23.8 29M28.3 32L29 32M22.3 30.7L22.3 36M26.9 35L28.6 35M20.3 29.1L28.1 29.1M24.5 32.6L28.6 32.6M16.8 32.9L18.6 32.9M18.5 35.4L18.5 36M18.5 34.8L18.5 36M21.2 33L22.3 33M26.5 31.2L26.5 35.9M19.8 30.5L23.2 30.5M18 35.3L24.4 35.3M24.7 35.7L24.7 36" fill="none" stroke="#1a1a1a" stroke-width="0.55" stroke-opacity="0.8"/><rect x="17" y="44" width="16" height="9" fill="#000" opacity="0.13"/><path d="M17.7 49.6L23.1 49.6M17.5 52.5L21.6 52.5M27.7 52.4L27.7 53M22 52.6L28.6 52.6M31.8 45L33 45M32.6 44.2L32.6 52.8M28.4 47.4L32.3 47.4M25.1 46.3L26.7 46.3M18 50.5L20.4 50.5M23.9 50.5L23.9 53M21 51.4L29.4 51.4M32 49.8L33 49.8M29.8 45.8L29.8 53M28.9 45.3L28.9 46.8M20.5 46.6L20.5 52.1M23.8 47.9L29.3 47.9M26.9 47.4L27.7 47.4M20.8 49L23.9 49M30.9 45.4L33 45.4M26.6 53L26.6 53M29.2 52.6L33 52.6M21.5 47.2L26.9 47.2M19.5 44.5L22.3 44.5M17.7 44L17.7 47.5M25.4 50L25.4 53M28.2 44.2L33 44.2M18.2 52.4L26.4 52.4M31.5 44.3L33 44.3M20.7 46.4L20.7 50.9M24.5 52.5L27.6 52.5M30.6 47.9L30.6 53M22.1 45.8L28.8 45.8M20.2 46L22.1 46M30.8 45.2L33 45.2M23 47.9L25.4 47.9M19.3 44.4L24.9 44.4M20.4 45.7L26.5 45.7M17.7 45.6L17.7 50.4M30.5 51L30.5 53M22.6 47.7L24.1 47.7M30 50.2L30 53M19.2 47.3L21.1 47.3M18.5 48.3L18.5 52.7M19.6 44.5L19.6 46.7M32 47.5L32 53M25.6 50.5L28.2 50.5M27.8 48L29 48M28.6 47.5L33 47.5M30.9 48.6L32.5 48.6M22.2 52.5L29.4 52.5M32.5 52.7L33 52.7M18.2 49.6L18.2 52.5M22.6 49.6L22.6 53M32.9 51.8L33 51.8M22.4 44.7L30.2 44.7M25.2 50.2L30.9 50.2M26.7 45.8L29.2 45.8M21 47.4L22.4 47.4M21.5 46.1L27.3 46.1M27.4 50.7L32.9 50.7M26 49.9L26 53M18.6 50.7L18.6 53M21.1 52L28.5 52M23.6 51.3L24.5 51.3M31 45.6L33 45.6M28.1 47.5L30.9 47.5M26.9 47.8L29.5 47.8M17.1 44.6L25.1 44.6M26.9 52.7L26.9 53M19.5 48.7L22.3 48.7M18.7 50.7L21.2 50.7M29.3 45.3L32.3 45.3M26.1 46.7L26.1 51.5M23 48.9L23 50.4M23.3 47.7L23.3 48.9M30.3 44.6L30.3 53M32.3 50.4L33 50.4M17.5 48.4L18.9 48.4M17.2 45.4L25.8 45.4M31.5 45.4L33 45.4M27.4 51L33 51M21.1 47.2L23.2 47.2M23.6 51.6L23.6 53M33 52.4L33 53M25.1 49.9L25.1 53M22.3 52.9L24.8 52.9M32.5 52L33 52M28.7 49.8L30.1 49.8M25 49L32.5 49M27.2 52.2L30.7 52.2M25.7 48.4L29.6 48.4M22.4 51.5L25.1 51.5M31.4 48.3L33 48.3M17.4 51.2L20.2 51.2M22.3 48.6L25.8 48.6M32.1 49.3L33 49.3M18.9 45.6L18.9 49.7M32.3 48L32.3 49.2M27.2 47.7L33 47.7M21.3 48.7L21.3 52.6M23.6 46.9L29.6 46.9M31.8 52.2L31.8 53M23.9 46.8L23.9 48.4M19.5 51.5L20.8 51.5M24 48.8L32.5 48.8M24 44.6L24 47.9M24.4 52.8L32.8 52.8M25.8 52.7L25.8 53M25.8 49.2L28.5 49.2M28 51.3L28 53M23.9 44.9L23.9 49M17.8 46L26.7 46M24.1 47.5L24.1 53M18.2 51.4L25.1 51.4M20.5 45.1L25.1 45.1M23.3 50.7L29.1 50.7M20.1 51.3L22.9 51.3M26 50.3L26 53M23.6 49.5L23.6 53M18.4 49.5L19.7 49.5M29.6 47.6L33 47.6M25 45L25 46.5M19.5 52.6L19.5 53M31.6 45L31.6 53M21.9 45.9L21.9 53M22.2 52.6L22.2 53M31 48.1L31 53M25.7 46.1L31.5 46.1M27.7 45.6L33 45.6M31.4 52.1L31.4 53M23.5 51.6L23.5 53M22.9 46.6L31.2 46.6M23.3 44.2L29.5 44.2" fill="none" stroke="#1a1a1a" stroke-width="0.55" stroke-opacity="0.8"/><rect x="38" y="15" width="8" height="4" fill="#000" opacity="0.13"/><path d="M45.5 15.9L46 15.9M38.2 15.6L41.7 15.6M43.3 17.9L46 17.9M38.9 16.2L38.9 18.5M43.7 16.8L45.2 16.8M45.3 18.4L46 18.4M40.8 17.7L45.1 17.7M42.5 15L45.7 15M42.6 16.1L46 16.1M43.9 17.3L43.9 19M41.2 15.6L42.1 15.6M40.2 16.3L40.2 19M45.5 16.7L46 16.7M43.4 17L43.4 19M40.1 17.6L44.7 17.6M39.5 18.2L39.5 19M39.2 15.4L40.3 15.4M45.1 18L46 18M38.5 15.1L43 15.1M39.7 15.7L39.7 19M43.2 17.1L43.2 19M43.7 16L43.7 17M38.8 17.2L38.8 19M44.3 16.6L46 16.6M43.6 19L43.6 19M41.8 17.8L41.8 19M45 17.7L46 17.7M42.7 15.2L46 15.2M44.1 16L46 16M39.4 15.9L41.7 15.9M39.1 18.8L41.9 18.8M39.3 15.7L39.3 17.4" fill="none" stroke="#1a1a1a" stroke-width="0.55" stroke-opacity="0.8"/><rect x="46" y="26" width="8" height="4" fill="#000" opacity="0.13"/><path d="M50.7 29.1L50.7 30M53.1 29.8L54 29.8M52.6 26.4L54 26.4M52.3 28.3L54 28.3M51.8 29.2L53.2 29.2M46.6 27L50.5 27M53.5 27.7L54 27.7M46.8 27.9L46.8 29M48.6 26.6L48.6 29.4M52.8 26.4L54 26.4M53.3 26.6L53.3 29.3M52 27.4L54 27.4M53.3 27.3L53.3 29.6M50.2 27.5L50.2 30M46.1 26.6L46.1 28.5M50.3 26.3L53.8 26.3M47.6 29.7L49.9 29.7M47.2 28L50.3 28M48.1 27.5L52.5 27.5M47.9 26.8L48.7 26.8M50.7 28.8L52.3 28.8M53.4 27.9L54 27.9M52.6 28.6L52.6 29.9M46.9 27.8L50.1 27.8M50.5 26.3L51.8 26.3M51.6 27.7L51.6 30M51.7 29.6L54 29.6M48 28.6L48 30M53.4 28.7L54 28.7M53.9 28.6L54 28.6M53.7 27.6L54 27.6M46.1 28.1L47.4 28.1" fill="none" stroke="#1a1a1a" stroke-width="0.55" stroke-opacity="0.8"/><rect x="37" y="38" width="6" height="5" fill="#000" opacity="0.13"/><path d="M40.1 39.4L40.1 43M40.9 38.1L42.9 38.1M42.9 41.3L42.9 43M37.6 41.4L41.7 41.4M39.2 40.1L43 40.1M37.2 42.1L42.3 42.1M41.4 42.9L41.4 43M40.3 40.7L40.3 43M42.5 42.7L42.5 43M37.7 38.8L39.2 38.8M39.6 38.5L39.6 41.5M39.5 38.4L43 38.4M38.1 39.7L40.2 39.7M42.5 38.9L43 38.9M40.8 42.4L42.7 42.4M39.1 40.7L39.1 43M38.4 40.6L39.9 40.6M38.8 42L42.1 42M40.7 39.6L43 39.6M41 39.4L42.1 39.4M38 40.4L39.7 40.4M37.8 38.9L42.9 38.9M39.2 40.9L40.8 40.9M38.6 42.4L38.6 43M37.4 39L41.8 39M37.7 39.6L43 39.6M41.9 38.2L41.9 42.2M37.2 40.2L37.2 43M40.5 39L43 39M40.8 39.1L40.8 43M39.7 39.9L43 39.9" fill="none" stroke="#1a1a1a" stroke-width="0.55" stroke-opacity="0.8"/><rect x="47" y="38" width="7" height="5" fill="#000" opacity="0.13"/><path d="M49.2 41.8L50.4 41.8M49.7 42.5L52.3 42.5M47.7 38.9L52 38.9M52 40.2L54 40.2M48.6 38.3L50.2 38.3M51.1 41.7L51.1 43M52.2 38L54 38M50 38.4L51.6 38.4M47.6 41.9L47.6 43M53.9 41.1L54 41.1M53.8 40.5L53.8 42.9M48.2 42.4L49 42.4M49.4 42.9L52.4 42.9M52.7 41.1L52.7 43M47.5 38.7L50.3 38.7M52.7 38.7L52.7 43M51.6 39.3L51.6 43M53 39.5L54 39.5M50.2 38.7L50.2 40.8M54 38.8L54 38.8M49.5 40.2L51.5 40.2M51.7 42.5L53.5 42.5M52.2 41.6L54 41.6M53.6 42L53.6 43M48.2 42.7L52 42.7M51.8 41.9L53.3 41.9M49.5 38.7L53.8 38.7M51.3 41.1L51.3 43M50.7 38.9L50.7 43M50.5 42.3L54 42.3M49.7 39L50.8 39M47.2 41.4L47.2 42.8M48.9 39L54 39M47.7 41.2L47.7 43M52.6 39.9L54 39.9" fill="none" stroke="#1a1a1a" stroke-width="0.55" stroke-opacity="0.8"/><rect x="63" y="16" width="18" height="8" fill="#000" opacity="0.13"/><path d="M70.4 19.3L70.4 24M68.5 22.8L68.5 24M63.4 23.8L63.4 24M66.1 20.6L66.1 24M76.8 22.8L76.8 24M74.2 20.3L74.2 24M77.3 19.1L77.3 24M66.5 22.4L66.5 24M77.4 21.4L77.4 24M65.7 16.5L68.7 16.5M65.4 16.3L65.4 20.7M77 19.7L81 19.7M73.4 16.5L76.6 16.5M64.5 18.9L69.7 18.9M67.9 22.2L67.9 24M65.8 17.6L65.8 24M65 21L65 24M76.5 22.4L76.5 24M67.7 20.4L67.7 24M76.3 21.5L76.3 23.1M69.9 22.9L71.3 22.9M71.9 23.7L78.3 23.7M76.2 19.7L81 19.7M79.8 23.3L79.8 24M77.9 21.6L81 21.6M71.5 23.7L71.5 24M77.8 16.8L77.8 19.5M68.7 22.5L68.7 24M71.7 17.7L77.5 17.7M75.9 18.9L79 18.9M71.6 21.7L71.6 24M71.2 21.6L76 21.6M71 21.4L72.4 21.4M80.3 21.7L81 21.7M79.3 21.2L79.3 24M79.1 16.4L81 16.4M78.7 16.5L78.7 17.7M66.7 16.2L66.7 24M69.9 22.7L77.4 22.7M73.8 22.8L73.8 24M75.6 22.1L75.6 24M65.8 19.6L65.8 20.9M77.2 20.4L77.2 24M70.2 20.9L76.7 20.9M67.9 18.9L73.4 18.9M63.3 17.8L68.2 17.8M80.8 23.7L80.8 24M64.4 16.1L64.4 22.8M77 23.5L78.4 23.5M65.6 16.6L72.5 16.6M73.1 21.7L80.9 21.7M80.6 16L80.6 18.3M71.4 23.3L71.4 24M67.6 23.5L71.2 23.5M77.5 17.5L81 17.5M77.1 19.5L78.7 19.5M79.3 19.4L81 19.4M76 16.8L77.2 16.8M71.6 18.6L77.5 18.6M80.7 23.2L81 23.2M80.8 20.4L81 20.4M64.9 19.8L70 19.8M69.4 17.2L75.6 17.2M72.5 18.9L74.1 18.9M78.9 19.4L78.9 24M80.6 22.8L80.6 24M77.2 23.9L77.2 24M74.5 18.3L79.4 18.3M75.8 20.4L80.8 20.4M70.4 16.9L75.7 16.9M68.1 19.9L70.2 19.9M70.9 16.7L70.9 19.1M74.2 21.7L74.2 24M70.9 23.1L72.8 23.1M75.1 18.6L75.1 20.4M80 23.1L81 23.1M68.3 20.8L68.3 23.1M72.1 19.7L75.6 19.7M67.1 18L67.1 24M79.3 20.3L81 20.3M76.3 20.4L76.3 24M73.4 23.7L77.1 23.7M77.8 20.3L77.8 24M77.3 19.5L77.3 22.9M63.4 23L63.4 24M74.8 23.5L74.8 24M64.9 16.4L67.9 16.4M77.9 22.7L81 22.7M68.7 18.3L68.7 24M65.2 17.7L67.4 17.7M67.3 20.5L67.3 24M74.5 16.6L74.5 24M63.3 19.1L64.8 19.1M66 18L72.3 18M63 22.2L71 22.2M75.7 20.2L75.7 24M73.7 20.3L73.7 21.1M74.2 19.6L74.2 22.2M77.7 22.7L81 22.7M69.9 21.9L71.1 21.9M65.5 19.7L65.5 24M78.8 23.5L81 23.5M67.6 17L67.6 20M75 17.9L81 17.9M65 21L65 23M78.9 20.1L79.9 20.1M69.1 16.7L75.1 16.7M77.6 22.8L77.6 23.7M74.8 22.9L74.8 24M66.9 18.4L66.9 22.6M71.5 22.7L79.1 22.7M67.6 23L69.1 23M66.4 22L66.4 24M69.6 19.3L69.6 24M67.3 20.6L68.6 20.6M66 20.7L73.1 20.7M69.6 18.5L74.6 18.5M81 22.5L81 24M64.8 20.7L67.8 20.7M75.6 21.1L75.6 24M71.7 17.8L77 17.8M69.8 21.6L72.7 21.6M78.8 16.1L78.8 24M67 22.9L69.4 22.9M74.9 23.6L74.9 24M65.8 17.1L73 17.1M68.1 19.3L74.9 19.3M79.4 22.6L81 22.6M65.8 21.6L65.8 24M76.8 16.5L78.5 16.5M72 16.4L79 16.4M65.1 20.5L65.1 24M81 16.4L81 16.4" fill="none" stroke="#1a1a1a" stroke-width="0.55" stroke-opacity="0.8"/><rect x="66" y="36" width="10" height="9" fill="#000" opacity="0.13"/><path d="M70.9 40.3L70.9 45M69.4 40.9L69.4 45M75.5 42.7L75.5 45M68.6 38.6L69.5 38.6M67.6 38.6L69.6 38.6M73.7 38.9L73.7 45M68.9 41.2L70.8 41.2M73 36.8L76 36.8M74.8 44.7L76 44.7M71 38.1L73.8 38.1M70.7 38.4L76 38.4M71.5 36.3L76 36.3M70 37.6L73.1 37.6M70.3 44.3L74.9 44.3M74.4 43.3L74.4 45M71.7 43.5L73.7 43.5M66.1 42L73.4 42M73.5 38.2L76 38.2M68.8 38.7L68.8 43.3M71.1 43.4L71.1 44.8M66.7 36.7L66.7 40.9M72.8 42.5L72.8 44.7M75.1 41.1L76 41.1M74.2 39.7L76 39.7M72.6 40.8L72.6 45M74.9 41.8L76 41.8M66.1 37.6L71.6 37.6M69.5 38.3L75.3 38.3M68.8 36L76 36M73.6 38.1L76 38.1M69.5 41.2L75 41.2M70.7 37.2L76 37.2M66.4 41.4L71 41.4M67.7 43.5L72.6 43.5M70.3 44.4L71.8 44.4M69.3 39.2L69.3 45M72.8 37.9L75 37.9M72.7 41L72.7 45M70.7 37.7L73.2 37.7M69.1 38.2L76 38.2M66 41.4L72.4 41.4M70.2 39.2L74.1 39.2M75.9 41L76 41M74.8 37.1L76 37.1M70.8 41.1L74.8 41.1M75.1 40L75.1 44.8M70.4 37.2L73.8 37.2M74.4 36.6L76 36.6M72.6 37.8L76 37.8M73.6 38.2L75.7 38.2M72.9 44.5L73.8 44.5M69 40.7L71.9 40.7M72.5 36.4L76 36.4M66.3 37L70.4 37M74.9 37.3L76 37.3M75.4 38.3L76 38.3M73.6 37.4L73.6 40.3M68.8 43.1L68.8 45M66.8 43.1L71.3 43.1M72.3 41.7L76 41.7M68.6 42.1L69.7 42.1M70.7 38.4L76 38.4M70.2 39.9L74.2 39.9M70.5 44.3L72.3 44.3M72.1 39.6L76 39.6M67.8 42L67.8 43.7M72.4 37L76 37M71.1 37.9L72.4 37.9M75.6 37.3L76 37.3M69.2 36.4L71.3 36.4M71.9 36.4L74.7 36.4M67.2 40.8L67.2 45M74.9 44.5L74.9 45M66.5 43.3L71.1 43.3M68.9 41.2L68.9 45M72.8 42.1L72.8 45M70.5 38.9L70.5 40M75.3 43.4L76 43.4M70.8 40.5L70.8 41.5M68.2 42.1L76 42.1M69.9 36.7L76 36.7M73.4 37L73.4 44.5M75.8 40.5L75.8 41.7M71.5 43.5L76 43.5M74 39.8L76 39.8" fill="none" stroke="#1a1a1a" stroke-width="0.55" stroke-opacity="0.8"/><rect x="64" y="28" width="14" height="4" fill="#000" opacity="0.13"/><path d="M70.8 28.8L70.8 32M74.4 31.3L74.4 32M65.5 29.6L68.4 29.6M71.6 29.8L72.6 29.8M71.2 31.2L75.1 31.2M76.7 31L78 31M76.2 31.7L76.2 32M76.9 31.7L76.9 32M66 31.3L69.8 31.3M76 31.3L76 32M71 30.3L72 30.3M67.4 28.5L67.4 29.8M65.4 29.4L68.8 29.4M72.8 29L72.8 32M75.3 29.6L76.8 29.6M75.1 28.3L75.1 32M75.6 28.7L78 28.7M67.1 28.8L67.1 32M71.3 30L71.3 32M69 29.5L73.8 29.5M64.1 31.4L68.9 31.4M73.7 28.4L74.6 28.4M64.8 29.7L64.8 30.5M70.4 28.9L74.4 28.9M74.4 28.1L74.4 31.2M71.8 30.9L72.8 30.9M74.7 30L76.9 30M69.3 31.1L69.3 32M68.2 30.6L68.2 32M70.2 28.9L70.2 32M68 29.2L68 31.1M77.9 30.4L78 30.4M66.7 30.9L67.6 30.9M76.1 31.6L77 31.6M64.6 28.5L64.6 30.7M64.8 30.8L69.7 30.8M64 30.5L64 32M67.8 30.9L71.8 30.9M73.3 29.9L74.9 29.9M72.9 28.1L74.5 28.1M77.3 28.2L77.3 31.5M69.7 30.5L72.2 30.5M67.5 29.5L67.5 32M70.4 30.5L70.4 31.3M75.1 30.4L77.8 30.4M67.5 29.6L69.6 29.6M71.3 30.8L71.3 32M66.2 28.6L66.2 32M65.7 28.6L66.9 28.6M76.4 30.7L78 30.7M74 29.2L77.2 29.2M72.4 28.3L75.5 28.3M64.1 30.5L64.1 32M69.9 30.4L73.9 30.4" fill="none" stroke="#1a1a1a" stroke-width="0.55" stroke-opacity="0.8"/><rect x="62.4" y="40" width="20" height="16" fill="#fff" opacity="0.75"/><rect x="62.4" y="40" width="20" height="16" fill="none" stroke="#333" stroke-width="0.4"/><path d="M18 45L18 53M20.7 45L20.7 53M23.3 45L23.3 53M26 45L26 53M28.7 45L28.7 53M31.3 45L31.3 53M34 45L34 53M18 45L34 45M18 47.7L34 47.7M18 50.3L34 50.3M18 53L34 53" fill="none" stroke="#1a1a1a" stroke-width="0.5" stroke-opacity="0.8"/><circle cx="40" cy="39.6" r="2.4" fill="none" stroke="#1a1a1a" stroke-width="0.8"/><circle cx="52" cy="39.6" r="2" fill="none" stroke="#1a1a1a" stroke-width="0.8"/></g><rect x="0.5" y="0.5" width="89" height="63" fill="none" stroke="#8b9fd8" stroke-width="1"/></svg>
<div class="cell" style="left:234.1px;top:305.0px;width:92.0px;height:31.5px"></div>
<div class="cb" style="left:236.7px;top:311.6px"></div>
<div class="num" style="left:249.1px;top:311.3px">11</div>
<div class="ttl" style="left:236.3px;top:324.0px;letter-spacing:-0.2px">内外装・防水・設備工事</div>
<svg class="th ph" style="left:234.9px;top:338.8px" width="90.8" height="61.8" viewBox="0 0 90 64" preserveAspectRatio="none"><defs><linearGradient id="g11" x1="0" y1="0" x2="1" y2="1"><stop offset="0" stop-color="#222c3e"/><stop offset=".5" stop-color="#3a4454"/><stop offset="1" stop-color="#62666c"/></linearGradient></defs><rect x="0" y="0" width="90" height="64" fill="url(#g11)"/><path d="M48.4 14.5L90 13.2L90 37.4L51 32Z" fill="#566070" opacity="0.8"/><path d="M12.5 42.7L90 37.4L90 64L15.1 64Z" fill="#5e6268" opacity="0.75"/><path d="M0 30.6L13.8 27.3L16.4 64L0 64Z" fill="#14223c" opacity="0.95"/><path d="M0 41.4L4.9 40.1L7.4 64L0 64Z" fill="#0e1830"/><path d="M0 0L47.8 0L47.8 6.5L0 19.2Z" fill="#e2ceb2"/><path d="M0 0L17.7 0L0 7.8Z" fill="#d4b48c" opacity="0.6"/><path d="M4.9 0L6.4 17.2M11 0L12.5 15.6M17.2 0L18.7 14M23.3 0L24.8 12.4M29.4 0L31 10.8M35.6 0L37.1 9.1M41.7 0L43.3 7.5" fill="none" stroke="#8a7058" stroke-width="0.9"/><path d="M1 14.5L12.5 0M11.3 13.8L22.8 0M21.5 11.2L31.8 0M31.8 8.5L39.4 0M0 9.8L47.1 2.4" fill="none" stroke="#a08868" stroke-width="0.7"/><path d="M42.6 0L47.8 0L47.8 9.4L42.6 9.8Z" fill="#c4c2ba"/><path d="M0 19.2L47.8 6.5L48.4 12.1L0 31.3Z" fill="#121418"/><path d="M0 25.9L48.4 10.5L48.4 12.9L0 31.3Z" fill="#1c2028"/><path d="M47.8 0L90 0L90 15.2L48.4 12.1Z" fill="#4a4238"/><path d="M48.4 0.4L53.5 0.4L53.5 10.5L48.4 10.5Z" fill="#b4b0a6"/><path d="M68.9 0L79.1 0L79.1 13.2L68.9 13.2Z" fill="#6a5430"/><path d="M70.8 1.1L74 1.1L74 10.5L70.8 10.5Z" fill="#c8a040" opacity="0.8"/><path d="M53.5 2.4L58.6 2.4L58.6 11.8L53.5 11.8Z" fill="#2a2a2c"/><path d="M72.7 15.9L77.2 15.9L77.2 19.9L72.7 19.9Z" fill="#b84a4a"/><path d="M79.8 1.1L90 0.4L90 11.8L80.4 11.8Z" fill="#a4bccc"/><path d="M76.6 17.2L85.5 15.2L90 18.5L90 36L79.1 35.3L75.5 26.6Z" fill="#d2d4d6"/><path d="M80.4 18.5L86.8 17.9L88.1 29.3L81.7 30.6Z" fill="#ececea"/><path d="M75.5 33.3L86.8 34.7L86.8 37.4L75.5 36.3Z" fill="#8a8480"/><path d="M58.4 0.4L67.3 0.4L69.7 10.5L67 14.5L59.7 14.2L57.6 7.8Z" fill="#c85868"/><path d="M59.9 1.7L65.7 1.1L66.3 9.1L60.6 10.5Z" fill="#dc8c96" opacity="0.7"/><path d="M59.9 14.2L67 14.5L67.3 25.9L64.4 28.6L62.7 21.2L61.8 29.3L59.7 27.3Z" fill="#56607a"/><path d="M59.7 25.9L67.3 25.9L67.3 30L59.7 30Z" fill="#1a1c22"/><path d="M24.1 24.6L43 63.8" stroke="#c4d0de" stroke-width="1"/><path d="M47.1 25.9L89.9 61.8" stroke="#c8d0dc" stroke-width="1.1"/><path d="M24.7 44.9L68.9 43.4" stroke="#b8c4d2" stroke-width="0.8" stroke-opacity="0.85"/><path d="M3.3 34.7L1 54.8" stroke="#3c5c9c" stroke-width="1.1"/><path d="M15.7 39.8L24.7 38.7L23.8 48.1L17 48.7Z" fill="#8e979e"/><path d="M15.7 38L24.7 37.1L24.7 40.1L15.7 40.9Z" fill="#5c5a52"/><path d="M17.7 41.4L20.2 41.1L20 47.8L17.9 48.1Z" fill="#b4bcc2"/><path d="M24.7 46.1L39.4 50.1L39.4 51.5L24.7 48.1Z" fill="#1e222a"/><path d="M36.2 19.2L43.5 18.3L44.3 26.9L37.9 27.7Z" fill="#a8b8d0"/><path d="M37.5 19.6L42 19.2L42.3 23.3L38.2 23.7Z" fill="#e4e8f0"/><path d="M47.8 21.2L51.6 21L51.9 27.3L48 27.4Z" fill="#dfe3e8"/><path d="M54.8 23.9L58.6 23.7L58.9 28L55.1 28.2Z" fill="#6a9a94"/><path d="M20.2 30L26.1 29.6L26.4 33.6L20.7 34.1Z" fill="#b8c0c6"/><path d="M35.6 36.8L47.8 36.3L47.9 40.3L35.9 40.9Z" fill="#c8ccd0"/><path d="M37.9 38.4L45.8 38L45.8 39.8L37.9 40.2Z" fill="#3a3a40"/><path d="M37.5 42.7L59.3 40.1L59.5 41.7L37.8 44.6Z" fill="#946e58"/><path d="M51 13.2L54.2 12.9L54.3 17.2L51.1 17.5Z" fill="#8e9aa4"/><path d="M48.4 50.1L59.9 48.8L60.2 53.5L48.7 54.2Z" fill="#8a8660" opacity="0.35"/><path d="M64.8 58.3L70.8 58.3" stroke="#e07a30" stroke-width="1.2" stroke-opacity="0.9"/><path d="M72.1 58.3L77.2 58.2" stroke="#d86a2c" stroke-width="1.1" stroke-opacity="0.8"/><rect x="0.4" y="0.4" width="89.2" height="63.2" fill="none" stroke="#6f86cc" stroke-width="0.8"/></svg>
<div class="cell" style="left:328.4px;top:305.0px;width:92.0px;height:31.5px"></div>
<div class="cb" style="left:331.0px;top:311.6px"></div>
<div class="num" style="left:343.4px;top:311.3px">12</div>
<div class="ttl" style="left:330.6px;top:324.0px;letter-spacing:-0.1px">鉄骨構造詳細図</div>
<svg class="th wd" style="left:328.8px;top:338.6px" width="91.2" height="64.8" viewBox="0 0 90 64" preserveAspectRatio="none"><rect x="0" y="0" width="90" height="64" fill="#fff"/><g opacity="0.68"><rect x="0" y="0" width="90" height="64" fill="#fff"/><rect x="0.5" y="0.5" width="89" height="63" fill="none" stroke="#8b9fd8" stroke-width="1"/><rect x="3.2" y="2.6" width="83.6" height="58.6" fill="none" stroke="#222" stroke-width="0.7"/><path d="M3.2 57.6L86.8 57.6" stroke="#222" stroke-width="0.6"/><rect x="3.2" y="57.6" width="22.8" height="3.6" fill="#000" opacity="0.22"/><rect x="70" y="57.6" width="16.8" height="3.6" fill="#000" opacity="0.25"/><path d="M3.8 58.6L6.2 58.6M7.3 58.6L9.7 58.6M10.6 58.6L12.1 58.6M13 58.6L16.4 58.6M17 58.6L18.3 58.6M21.6 58.6L24.5 58.6M25.1 58.6L25.8 58.6M3.8 60.1L5.4 60.1M5.8 60.1L8.2 60.1M9.3 60.1L11.8 60.1M12.6 60.1L15.6 60.1M21.3 60.1L24.4 60.1M25 60.1L25.8 60.1" fill="none" stroke="#111" stroke-width="1.1" stroke-opacity="1"/><path d="M26 57.6L26 61.2M44 57.6L44 61.2M70 57.6L70 61.2M8 57.6L8 61.2M14 57.6L14 61.2M20 57.6L20 61.2" fill="none" stroke="#111" stroke-width="0.6"/><path d="M45 58.6L47.4 58.6M48.4 58.6L49.8 58.6M50.5 58.6L52.3 58.6M53.3 58.6L56.1 58.6M57 58.6L58.4 58.6M59 58.6L62.7 58.6M45 60.1L46.2 60.1M46.9 60.1L49.1 60.1M53.9 60.1L55.3 60.1M55.8 60.1L57.7 60.1M58.3 60.1L61.3 60.1M61.9 60.1L63 60.1" fill="none" stroke="#111" stroke-width="1.3" stroke-opacity="1"/><path d="M71 58.6L72.8 58.6M73.7 58.6L77.3 58.6M77.9 58.6L79.3 58.6M80.3 58.6L81.7 58.6M82.2 58.6L84.1 58.6M85.2 58.6L86 58.6M71 60.1L72.4 60.1M73.5 60.1L76.9 60.1M77.9 60.1L81.7 60.1M82.4 60.1L85.9 60.1" fill="none" stroke="#111" stroke-width="1.1" stroke-opacity="1"/><rect x="14.5" y="3.4" width="2.6" height="54.6" fill="#000" opacity="0.22"/><path d="M14.5 3.4L14.5 58M17.1 3.4L17.1 58" fill="none" stroke="#1a1a1a" stroke-width="0.6" stroke-opacity="0.85"/><rect x="42.1" y="3.4" width="2.6" height="54.6" fill="#000" opacity="0.22"/><path d="M42.1 3.4L42.1 58M44.7 3.4L44.7 58" fill="none" stroke="#1a1a1a" stroke-width="0.6" stroke-opacity="0.85"/><rect x="63.3" y="41" width="2.6" height="17" fill="#000" opacity="0.22"/><path d="M63.3 41L63.3 58M65.9 41L65.9 58" fill="none" stroke="#1a1a1a" stroke-width="0.6" stroke-opacity="0.85"/><rect x="77.3" y="24" width="2.6" height="34" fill="#000" opacity="0.22"/><path d="M77.3 24L77.3 58M79.9 24L79.9 58" fill="none" stroke="#1a1a1a" stroke-width="0.6" stroke-opacity="0.85"/><path d="M6.5 8.5L35 8.5M6.5 10.3L35 10.3" fill="none" stroke="#1a1a1a" stroke-width="0.5" stroke-opacity="0.8"/><rect x="6.5" y="8.5" width="28.5" height="1.8" fill="#000" opacity="0.12"/><path d="M36 14.9L62 14.9M36 16.7L62 16.7" fill="none" stroke="#1a1a1a" stroke-width="0.5" stroke-opacity="0.8"/><rect x="36" y="14.9" width="26" height="1.8" fill="#000" opacity="0.12"/><path d="M68 12.7L88 12.7M68 14.5L88 14.5" fill="none" stroke="#1a1a1a" stroke-width="0.5" stroke-opacity="0.8"/><rect x="68" y="12.7" width="20" height="1.8" fill="#000" opacity="0.12"/><path d="M6.5 22.7L35 22.7M6.5 24.5L35 24.5" fill="none" stroke="#1a1a1a" stroke-width="0.5" stroke-opacity="0.8"/><rect x="6.5" y="22.7" width="28.5" height="1.8" fill="#000" opacity="0.12"/><path d="M36 29.3L56 29.3M36 31.1L56 31.1" fill="none" stroke="#1a1a1a" stroke-width="0.5" stroke-opacity="0.8"/><rect x="36" y="29.3" width="20" height="1.8" fill="#000" opacity="0.12"/><path d="M66 29.1L89 29.1M66 30.9L89 30.9" fill="none" stroke="#1a1a1a" stroke-width="0.5" stroke-opacity="0.8"/><rect x="66" y="29.1" width="23" height="1.8" fill="#000" opacity="0.12"/><path d="M12 38.5L30 38.5M12 40.3L30 40.3" fill="none" stroke="#1a1a1a" stroke-width="0.5" stroke-opacity="0.8"/><rect x="12" y="38.5" width="18" height="1.8" fill="#000" opacity="0.12"/><path d="M36 45.1L56 45.1M36 46.9L56 46.9" fill="none" stroke="#1a1a1a" stroke-width="0.5" stroke-opacity="0.8"/><rect x="36" y="45.1" width="20" height="1.8" fill="#000" opacity="0.12"/><path d="M60 45.1L89 45.1M60 46.9L89 46.9" fill="none" stroke="#1a1a1a" stroke-width="0.5" stroke-opacity="0.8"/><rect x="60" y="45.1" width="29" height="1.8" fill="#000" opacity="0.12"/><path d="M6.5 49.1L33 49.1M6.5 50.9L33 50.9" fill="none" stroke="#1a1a1a" stroke-width="0.5" stroke-opacity="0.8"/><rect x="6.5" y="49.1" width="26.5" height="1.8" fill="#000" opacity="0.12"/><rect x="12.4" y="6.6" width="6.8" height="5.6" fill="#000" opacity="0.13"/><path d="M15.9 8.1L15.9 12.2M16.8 6.7L18.9 6.7M19 10.3L19 12.2M13.1 10.4L17.5 10.4M14.8 8.9L19.2 8.9M12.6 11.2L18.1 11.2M17.3 12.1L17.3 12.2M16.1 9.7L16.1 12.2M18.7 11.8L18.7 12.2M13.2 7.5L14.8 7.5M15.4 7.2L15.4 10.4M15.2 7L19.2 7M13.7 8.5L15.9 8.5M18.7 7.6L19.2 7.6M16.7 11.6L18.7 11.6M14.7 9.7L14.7 12.2M14 9.5L15.6 9.5M14.5 11.1L18 11.1M16.6 8.4L19.2 8.4M16.9 8.1L18 8.1M13.5 9.2L15.3 9.2M13.3 7.6L18.8 7.6M14.9 9.8L16.6 9.8M14.3 11.5L14.3 12.2" fill="none" stroke="#1a1a1a" stroke-width="0.55" stroke-opacity="0.85"/><rect x="14.2" y="7.8" width="3.2" height="3.2" fill="#111" opacity="0.6"/><rect x="12.4" y="20.8" width="6.8" height="5.6" fill="#000" opacity="0.13"/><path d="M14.5 25.1L15.8 25.1M15.1 25.8L17.8 25.8M13.1 21.8L17.7 21.8M17.3 23.3L19.2 23.3M13.9 21.1L15.6 21.1M16.4 24.9L16.4 26.4M17.4 20.8L19.2 20.8M15.4 21.3L17 21.3M13 25.2L13 26.4M19.1 24.3L19.2 24.3M19 23.6L19 26.2M13.6 25.7L14.4 25.7M14.7 26.3L18 26.3M17.9 24.3L17.9 26.4M12.9 21.6L15.9 21.6M18 21.6L18 26.4M16.8 22.3L16.8 26.4M18.3 22.5L19.2 22.5M15.5 21.6L15.5 23.8M19.2 21.7L19.2 21.7M14.8 23.3L16.9 23.3M17 25.8L18.9 25.8M17.5 24.8L19.2 24.8M18.8 25.2L18.8 26.4" fill="none" stroke="#1a1a1a" stroke-width="0.55" stroke-opacity="0.85"/><rect x="14.2" y="22" width="3.2" height="3.2" fill="#111" opacity="0.6"/><rect x="12.4" y="36.6" width="6.8" height="5.6" fill="#000" opacity="0.13"/><path d="M15.2 38.9L15.2 42.2M14.5 41.4L14.5 42.2M12.6 42.1L12.6 42.2M13.6 39.8L13.6 42.2M17.6 41.3L17.6 42.2M16.6 39.6L16.6 42.2M17.8 38.7L17.8 42.2M13.7 41.1L13.7 42.2M17.8 40.4L17.8 42.2M13.4 37L15.8 37M13.3 36.8L13.3 40.3M17.7 39.2L19.2 39.2M16.3 36.9L18.9 36.9M13 38.6L17 38.6M14.2 40.9L14.2 42.2M13.5 37.7L13.5 42.2M13.1 40.1L13.1 42.2M17.5 41.1L17.5 42.2M14.2 39.7L14.2 42.2M17.4 40.4L17.4 41.8M15 41.4L16.2 41.4M15.8 42L19.2 42M17.4 39.2L19.2 39.2M18.7 41.7L18.7 42.2" fill="none" stroke="#1a1a1a" stroke-width="0.55" stroke-opacity="0.85"/><rect x="14.2" y="37.8" width="3.2" height="3.2" fill="#111" opacity="0.6"/><rect x="12.4" y="47.2" width="6.8" height="5.6" fill="#000" opacity="0.13"/><path d="M15.8 49.9L15.8 52.8M14.7 50.3L14.7 52.8M18.9 51.4L18.9 52.8M14.2 48.8L15 48.8M13.5 48.8L15.1 48.8M17.6 49L17.6 52.8M14.4 50.4L15.9 50.4M17.2 47.7L19.2 47.7M18.4 52.6L19.2 52.6M15.8 48.5L17.9 48.5M15.6 48.7L19.2 48.7M16.1 47.4L19.2 47.4M15.1 48.2L17.5 48.2M15.3 52.4L18.7 52.4M18.1 51.8L18.1 52.8M16.3 51.8L17.9 51.8M12.4 50.9L17.6 50.9M17.5 48.6L19.2 48.6M14.3 48.9L14.3 52.2M15.8 51.8L15.8 52.8M12.9 47.6L12.9 50.7M17 51.2L17 52.8M18.6 50.4L19.2 50.4M18 49.5L19.2 49.5" fill="none" stroke="#1a1a1a" stroke-width="0.55" stroke-opacity="0.85"/><rect x="14.2" y="48.4" width="3.2" height="3.2" fill="#111" opacity="0.6"/><rect x="40" y="13" width="6.8" height="5.6" fill="#000" opacity="0.13"/><path d="M43.3 14.1L43.3 18.6M45.1 17.7L45.1 18.6M40.8 15.2L44.2 15.2M43.7 15.6L44.7 15.6M43.5 17.4L46.8 17.4M46.2 17.2L46.8 17.2M45.9 18.2L45.9 18.6M46.3 18.2L46.3 18.6M41 17.7L45.7 17.7M45.8 17.6L45.8 18.6M43.4 16.2L44.5 16.2M41.7 13.8L41.7 15.1M40.7 15L44.9 15M44.3 14.4L44.3 18.6M45.5 15.2L46.8 15.2M45.4 13.5L45.4 18.6M45.6 13.9L46.8 13.9M41.5 14.1L41.5 18.6M43.6 15.9L43.6 18.6M42.4 15.1L46.8 15.1M40.1 17.8L46 17.8M44.7 13.5L45.7 13.5M40.4 15.3L40.4 16.1M43.1 14.3L46.8 14.3" fill="none" stroke="#1a1a1a" stroke-width="0.55" stroke-opacity="0.85"/><rect x="41.8" y="14.2" width="3.2" height="3.2" fill="#111" opacity="0.6"/><rect x="40" y="27.4" width="6.8" height="5.6" fill="#000" opacity="0.13"/><path d="M44.6 30.9L46.8 30.9M45.6 28.1L46.8 28.1M41 31L41 33M41.8 32.1L46.8 32.1M41.8 27.6L44.1 27.6M43.6 32.9L43.6 33M42.4 29.3L42.4 31.4M46.6 28.6L46.6 33M44.7 29.6L44.7 31M43.2 29.8L46.8 29.8M41.6 29.1L46.8 29.1M43.6 31.9L46.2 31.9M42 27.9L42 32.7M42.7 27.6L44 27.6M41.2 30.3L42.1 30.3M42.5 28.3L42.5 30.3M44.7 28.6L44.7 32.1M43.6 31.9L46.8 31.9M41 27.5L41 31.6M44.2 29.3L44.2 30.6M40.6 30.9L45.5 30.9M45.7 27.9L45.7 29.3M43.5 29L43.5 33M42.3 28.6L42.3 30.6" fill="none" stroke="#1a1a1a" stroke-width="0.55" stroke-opacity="0.85"/><rect x="41.8" y="28.6" width="3.2" height="3.2" fill="#111" opacity="0.6"/><rect x="40" y="43.2" width="6.8" height="5.6" fill="#000" opacity="0.13"/><path d="M43.9 46.2L43.9 48.8M42.9 44L46.8 44M46.8 47.1L46.8 47.1M46.6 47.6L46.8 47.6M45.6 47.6L45.6 48.8M41.8 47.5L41.8 48.4M41.2 48.2L46.8 48.2M41.4 44.6L41.4 48.8M45.1 47.7L45.1 48.8M40.4 46.2L44.2 46.2M43.6 46.8L45.7 46.8M45 48.3L46.6 48.3M44.6 45.8L44.6 47.1M41.5 46.7L41.5 48.6M43.2 44.5L46.8 44.5M40.9 45.5L46.8 45.5M45.5 45.8L46.8 45.8M42.4 47.4L46.2 47.4M45.4 47.7L45.4 48.8M43.2 44.3L46.8 44.3M40.5 46L41.6 46M41.2 47.2L45.2 47.2M42.8 48.1L42.8 48.8M41.6 47.8L45.9 47.8" fill="none" stroke="#1a1a1a" stroke-width="0.55" stroke-opacity="0.85"/><rect x="41.8" y="44.4" width="3.2" height="3.2" fill="#111" opacity="0.6"/><rect x="75.2" y="10.8" width="6.8" height="5.6" fill="#000" opacity="0.13"/><path d="M75.7 13.1L81.9 13.1M77.6 15.4L82 15.4M81.7 15.5L82 15.5M78.1 13.7L78.9 13.7M81.8 11.6L82 11.6M80.6 15.6L80.6 16.4M77.4 10.9L80.4 10.9M77.6 13.7L79.5 13.7M81.6 13.8L81.6 16.4M75.5 15.2L76.8 15.2M80.7 10.8L80.7 15.6M76.9 15.9L82 15.9M80.3 15.5L80.3 16.4M77.1 14.5L80.5 14.5M80.8 14.8L80.8 16.4M77.8 15.8L77.8 16.4M76.2 11.4L80.6 11.4M80.4 14.5L80.4 16.4M77.2 15.6L82 15.6M79.9 11.9L79.9 15.8M77.9 15.2L80.8 15.2M81.9 12.9L81.9 16.4M75.5 15.2L75.5 16.4M75.9 12.5L75.9 16.4" fill="none" stroke="#1a1a1a" stroke-width="0.55" stroke-opacity="0.85"/><rect x="77" y="12" width="3.2" height="3.2" fill="#111" opacity="0.6"/><rect x="75.2" y="27.2" width="6.8" height="5.6" fill="#000" opacity="0.13"/><path d="M76.5 29.7L81.1 29.7M81.1 28.6L82 28.6M77.5 31.2L77.5 32.8M80 29.9L82 29.9M76.1 28.5L81.7 28.5M79.5 29.3L81.6 29.3M77 29.6L77 31.1M77.9 30.1L82 30.1M79.2 31.9L79.2 32.8M80.6 30.8L82 30.8M79.8 30L81.9 30M79.5 30.5L80.3 30.5M76.6 28.9L82 28.9M80.3 29.2L82 29.2M81.3 29.2L81.3 32.8M80.3 27.6L80.3 29.9M77.8 28.5L82 28.5M80.7 29.8L82 29.8M77.8 29.7L77.8 32.8M77.9 28.9L77.9 32.8M79.3 31.9L81.3 31.9M78.2 28.7L82 28.7M76.2 28.8L79.9 28.8M78 30.4L81.8 30.4" fill="none" stroke="#1a1a1a" stroke-width="0.55" stroke-opacity="0.85"/><rect x="77" y="28.4" width="3.2" height="3.2" fill="#111" opacity="0.6"/><rect x="75.2" y="43.2" width="6.8" height="5.6" fill="#000" opacity="0.13"/><path d="M75.2 47.1L75.2 48.8M81.6 46.9L82 46.9M78.8 48.2L82 48.2M81.5 44L81.5 48.8M77 44.5L79.5 44.5M77.3 43.3L77.3 45.1M78.8 43.6L80.2 43.6M81.7 48.8L82 48.8M80.5 43.5L82 43.5M79.5 46.5L82 46.5M77.8 46.5L80.2 46.5M79.7 44.7L79.7 48.8M77.2 45.4L81.5 45.4M81.6 46L81.6 48.8M79.5 44.3L79.5 46.2M77.7 44.3L81 44.3M76.8 45.2L76.8 48.8M77.3 44.7L82 44.7M79.7 47.3L82 47.3M76.7 44.5L76.7 46.9M77.3 47.4L79.2 47.4M76.8 47.9L76.8 48.8M75.8 45.5L79.9 45.5M77.1 45.9L77.1 47" fill="none" stroke="#1a1a1a" stroke-width="0.55" stroke-opacity="0.85"/><rect x="77" y="44.4" width="3.2" height="3.2" fill="#111" opacity="0.6"/><rect x="61.2" y="43.2" width="6.8" height="5.6" fill="#000" opacity="0.13"/><path d="M66.4 43.7L68 43.7M61.6 47.2L62.4 47.2M66 47.9L66 48.8M67.3 44.5L67.3 46.3M65.9 48.4L67 48.4M63.9 46L63.9 48.8M62.2 48.1L62.2 48.8M65.2 46.9L65.2 48.8M64.4 44.4L66.6 44.4M64.7 43.6L68 43.6M66.9 45.3L66.9 48.8M67 48.6L67 48.8M65.3 48.4L65.3 48.8M66.4 47L68 47M63 44.3L65.8 44.3M63.7 47.8L63.7 48.8M66.7 45.4L68 45.4M62.2 48.7L63.8 48.7M65 46.9L67.3 46.9M61.2 46.7L65.8 46.7M63.6 45.1L67.4 45.1M63 45.5L63 48.8M67.6 47.7L68 47.7M64.9 44.9L64.9 48.8" fill="none" stroke="#1a1a1a" stroke-width="0.55" stroke-opacity="0.85"/><rect x="63" y="44.4" width="3.2" height="3.2" fill="#111" opacity="0.6"/><rect x="68.6" y="10.8" width="6.8" height="5.6" fill="#000" opacity="0.13"/><path d="M72.1 11L75.4 11M73.3 10.8L75.4 10.8M73.3 15.8L75.4 15.8M71 15L75.4 15M73.6 12.8L73.6 14.8M70.3 13.8L72.6 13.8M69.7 15.5L69.7 16.4M73.1 13.9L73.1 16.4M71.6 11.4L73.9 11.4M72.9 15.5L75.4 15.5M71 14L75.4 14M70.4 15.5L71.5 15.5M68.7 12.3L68.7 16.4M70.8 12.6L70.8 16.4M68.9 14.7L72.3 14.7M72.2 11.8L75.4 11.8M73.3 16.2L75.4 16.2M74.2 15.9L74.2 16.4M70.9 12.5L75.4 12.5M70.4 14.7L70.4 16.4M72.7 11.7L72.7 16.2M69.1 13.9L74.2 13.9M75.3 15.7L75.3 16.4M75 10.9L75 11.9" fill="none" stroke="#1a1a1a" stroke-width="0.55" stroke-opacity="0.85"/><rect x="70.4" y="12" width="3.2" height="3.2" fill="#111" opacity="0.6"/><path d="M76.4 45.9L81.7 45.9M7 20.7L7 25.5M80.8 50.9L83.9 50.9M14.2 47.2L15.3 47.2M41.4 35.6L43.6 35.6M20.3 20.8L23.6 20.8M78.3 48.7L84.1 48.7M21.8 26.8L25.6 26.8M49.4 20.2L53.8 20.2M60.6 11.5L62.9 11.5M23.5 34.3L28.7 34.3M48 43.6L50.8 43.6M23.5 54.3L28.9 54.3M38.5 45.8L38.5 49.8M65.8 43.4L71.3 43.4M57.2 37.8L57.2 41.5M24.7 35.2L24.7 36.2M84.5 14.5L87 14.5M24 53.7L24 56M85 44.3L87 44.3M83.8 8.4L86.7 8.4M18.2 40.3L18.2 41.2M49.8 38L49.8 43M80.1 32.2L80.1 35.5M13.2 53.2L17.1 53.2M68.4 26.9L72.3 26.9M38.3 21L38.3 22.2M50.8 15.5L56.3 15.5M33.6 16.6L35 16.6M21 41.7L24.2 41.7M29 43.5L32.6 43.5M14.1 16.1L18.1 16.1M66.7 38L66.7 39.9M8.8 54.8L11.2 54.8M65.2 6.6L68 6.6M13.8 48.7L14.8 48.7M78.4 7.9L78.4 10M69.4 50.1L72.6 50.1M22.5 34.4L22.5 36M13.2 42.5L16.8 42.5M39.7 5.6L39.7 8.2M42.3 33.7L42.3 37.8M83.8 52.7L87 52.7M69.8 6.4L74.9 6.4M28.6 13.4L29.5 13.4M69.7 18.7L69.7 22.9M36.6 16.7L36.6 18.7M44 5.6L49.1 5.6M86.8 6.8L86.8 8M55.5 20.6L55.5 21.5M38.5 15.6L43 15.6M83.4 20.1L87 20.1M48.9 23.5L52 23.5M39.4 45.6L41 45.6M85.6 5.4L87 5.4M84.5 30.2L84.5 33.1M21.8 17.6L21.8 19.6M71 25.2L71 28.1M39.3 29.9L39.3 33.9M5.9 42.9L8.3 42.9M56.5 54L56.5 56M69.7 18.3L69.7 20.9M63.3 49.6L67 49.6M27.2 49.4L30.4 49.4M47.5 32.4L49.7 32.4M9.3 53.2L11.2 53.2M66 22.4L67.5 22.4M5.5 8.3L10.6 8.3M58.3 44.5L61.6 44.5M36.4 52.3L36.4 56M24.6 53.1L27.3 53.1M27.6 21.5L29.1 21.5M10 56L10 56M23.5 25.2L23.5 28.5M15.2 20.7L20.1 20.7M23.7 43.4L23.7 45.1M39 17.1L39 19.2M9.4 52.9L9.4 56M38.3 16.3L38.3 20.1M49.9 48.5L49.9 49.6M34.5 43L34.5 45.1M57.1 6.2L57.1 7.7M30 18.3L34.4 18.3M48.9 50.2L50.3 50.2M14.8 26.9L16.8 26.9M21.6 32.6L26.7 32.6M14.4 43L14.4 44.7M14.5 29.6L16.2 29.6M45.3 27.6L48.2 27.6M33.1 19L33.1 23.8M71 39L71 40.5M83.9 4.8L87 4.8M6.7 34.7L6.7 35.6M34.2 54.8L34.2 56M26.4 18.1L30.5 18.1M74.8 44.5L76.1 44.5M40.6 4.3L43.7 4.3M62.3 24.4L62.3 25.5M19.4 5L19.4 6.8M23.8 27.7L23.8 31.1M7.5 39.7L7.5 42.7M18.7 39.6L23.2 39.6M24.8 5.4L24.8 8.5M12.4 40.9L17.5 40.9M66.2 5.3L69.8 5.3M30.4 22.3L34.3 22.3M40.2 33.1L40.2 35.6M18.2 13.8L21.9 13.8M48.3 37.4L52.7 37.4M37.3 29.1L40.6 29.1" fill="none" stroke="#1a1a1a" stroke-width="0.45" stroke-opacity="0.6"/><path d="M60 3.4L68 9M62 3.4L70 9M34 4L34 57M6 52L6 57" fill="none" stroke="#1a1a1a" stroke-width="0.5" stroke-opacity="0.7"/><path d="M19 38.3L20.4 38.3M21.4 38.3L22.6 38.3M23.7 38.3L25.8 38.3M27 38.3L28 38.3" fill="none" stroke="#1a1a1a" stroke-width="0.8" stroke-opacity="0.85"/><rect x="10" y="44" width="9" height="4" fill="#000" opacity="0.13"/><path d="M15.4 44.6L19 44.6M14 46.5L14 48M17.6 45.2L17.6 48M14.2 44.3L16.7 44.3M13 46.5L14.7 46.5M10.6 47.1L10.6 48M14.5 45.2L14.5 47M11.7 47.3L15.7 47.3M16.6 46.1L18.4 46.1M11.9 44.3L13.3 44.3M10.6 46.3L10.6 48M13.1 47.6L13.1 48M10.9 46.9L10.9 48M17 44.6L19 44.6" fill="none" stroke="#1a1a1a" stroke-width="0.55" stroke-opacity="0.7"/></g><rect x="0.5" y="0.5" width="89" height="63" fill="none" stroke="#8b9fd8" stroke-width="1"/></svg>
<div class="cell" style="left:422.7px;top:305.0px;width:92.0px;height:31.5px"></div>
<div class="cb" style="left:425.3px;top:311.6px"></div>
<div class="num" style="left:437.7px;top:311.3px">13</div>
<div class="ttl" style="left:424.9px;top:324.0px;letter-spacing:-0.1px">受水槽設備図</div>
<svg class="th wd" style="left:423.1px;top:338.6px" width="91.2" height="64.8" viewBox="0 0 90 64" preserveAspectRatio="none"><rect x="0" y="0" width="90" height="64" fill="#fff"/><g opacity="0.68"><rect x="0" y="0" width="90" height="64" fill="#fff"/><rect x="0.5" y="0.5" width="89" height="63" fill="none" stroke="#8b9fd8" stroke-width="1"/><rect x="3.2" y="2.6" width="83.6" height="58.6" fill="none" stroke="#222" stroke-width="0.7"/><path d="M3.2 57.6L86.8 57.6" stroke="#222" stroke-width="0.6"/><rect x="3.2" y="57.6" width="22.8" height="3.6" fill="#000" opacity="0.22"/><rect x="70" y="57.6" width="16.8" height="3.6" fill="#000" opacity="0.25"/><path d="M3.8 58.6L6.2 58.6M7.3 58.6L9.7 58.6M10.6 58.6L12.1 58.6M13 58.6L16.4 58.6M17 58.6L18.3 58.6M21.6 58.6L24.5 58.6M25.1 58.6L25.8 58.6M3.8 60.1L5.4 60.1M5.8 60.1L8.2 60.1M9.3 60.1L11.8 60.1M12.6 60.1L15.6 60.1M21.3 60.1L24.4 60.1M25 60.1L25.8 60.1" fill="none" stroke="#111" stroke-width="1.1" stroke-opacity="1"/><path d="M26 57.6L26 61.2M44 57.6L44 61.2M70 57.6L70 61.2M8 57.6L8 61.2M14 57.6L14 61.2M20 57.6L20 61.2" fill="none" stroke="#111" stroke-width="0.6"/><path d="M45 58.6L47.4 58.6M48.4 58.6L49.8 58.6M50.5 58.6L52.3 58.6M53.3 58.6L56.1 58.6M57 58.6L58.4 58.6M59 58.6L62.7 58.6M45 60.1L46.2 60.1M46.9 60.1L49.1 60.1M53.9 60.1L55.3 60.1M55.8 60.1L57.7 60.1M58.3 60.1L61.3 60.1M61.9 60.1L63 60.1" fill="none" stroke="#111" stroke-width="1.3" stroke-opacity="1"/><path d="M71 58.6L72.8 58.6M73.7 58.6L77.3 58.6M77.9 58.6L79.3 58.6M80.3 58.6L81.7 58.6M82.2 58.6L84.1 58.6M85.2 58.6L86 58.6M71 60.1L72.4 60.1M73.5 60.1L76.9 60.1M77.9 60.1L81.7 60.1M82.4 60.1L85.9 60.1" fill="none" stroke="#111" stroke-width="1.1" stroke-opacity="1"/><rect x="10.4" y="9" width="16" height="9.6" fill="#000" opacity="0.13"/><path d="M23.6 17.6L26 17.6M18.1 10.6L18.1 12.2M15.7 16.1L24.6 16.1M22.4 9.5L26.4 9.5M23.7 13.7L23.7 18.6M18.1 10.2L18.1 11.5M19.5 11L19.5 14.1M18.3 14.2L18.3 18.6M10.9 17.3L10.9 18.6M13.1 9.3L16.5 9.3M19.3 11.8L20.3 11.8M25.5 18.1L26.4 18.1M12.5 17L14.4 17M19.6 10.6L24.3 10.6M16.1 16.5L16.1 18.6M21 18.4L22.6 18.4M14.7 17L22.7 17M16.4 12.5L16.4 18.6M13.7 9.2L15.2 9.2M16.8 11.8L23.3 11.8M16.1 10.7L16.1 18.6M19.6 18.5L19.6 18.6M14.4 18.3L14.4 18.6M20.3 10.4L26.4 10.4M17.1 15.2L25.9 15.2M16.1 10.6L16.1 18.6M10.6 11.6L19.1 11.6M19.3 13.5L19.3 16.3M13 10.1L13 12.5M14.8 11.8L14.8 18.6M23.6 10.5L25.3 10.5M17.6 12.2L22.7 12.2M21.5 12.6L24.5 12.6M23.6 17.6L26.4 17.6M17.2 13.1L23.5 13.1M13.6 11.1L19.3 11.1M17.4 15L26.4 15M12.8 17L17.6 17M19.2 10.9L21 10.9M25.3 11.5L26.4 11.5M13.2 17.7L13.2 18.6M13.8 10.9L18.1 10.9M19.1 14.3L22.6 14.3M17.7 15.9L17.7 18.6M22.8 12.2L22.8 18.6M20.5 10.8L20.5 14.4" fill="none" stroke="#1a1a1a" stroke-width="0.55" stroke-opacity="0.8"/><rect x="14.6" y="11.4" width="7" height="5.4" fill="#fff" opacity="0.7"/><rect x="14.6" y="11.4" width="7" height="5.4" fill="none" stroke="#1a1a1a" stroke-width="0.7"/><path d="M7 8L12 12M8 7L13 11M27 18L32 21" fill="none" stroke="#1a1a1a" stroke-width="0.6" stroke-opacity="0.8"/><path d="M19 6.2L22.1 6.2M23.3 6.2L25 6.2" fill="none" stroke="#1a1a1a" stroke-width="0.7" stroke-opacity="0.8"/><path d="M8 20.2L11.9 20.2M12.4 20.2L16 20.2" fill="none" stroke="#1a1a1a" stroke-width="0.6" stroke-opacity="0.7"/><rect x="37.4" y="9.6" width="15" height="9.6" fill="none" stroke="#1a1a1a" stroke-width="1.1"/><rect x="40.4" y="11.6" width="9" height="5.6" fill="none" stroke="#1a1a1a" stroke-width="0.6"/><path d="M53.9 9L53.9 10.8M52.1 15.4L52.1 18.6M53.6 19.5L54 19.5M41.7 16.6L41.7 21M51 18.4L51 20.9M46.2 16.5L48 16.5M42.3 18.9L44.2 18.9M53.6 13.4L53.6 16.8M39 15.4L39 18.5M44.1 16.2L44.1 17.7M39.2 15.6L42.9 15.6M53.5 9.5L54 9.5M43.6 14.5L48 14.5M43.9 14.2L43.9 16M48.1 11.4L48.1 14.3M38.4 12.1L38.4 15.4M38.1 8.7L38.1 11.2M50.5 13.4L54 13.4M42.2 9.6L45 9.6M40.5 14.6L43.7 14.6M47.7 8.3L51.1 8.3M42.7 17.7L47.4 17.7M53.2 19L54 19M47.9 8L51.5 8M39.8 14.9L41.4 14.9M36.5 11.8L40.1 11.8M48.4 16L50.2 16M47.8 13L51.8 13M42.5 15.6L45.7 15.6M48.4 16.9L48.4 20.7M39.6 14.3L39.6 15.7M44.2 10.3L48.5 10.3M46.1 10.9L46.1 13.8M38.9 10.5L41.7 10.5" fill="none" stroke="#1a1a1a" stroke-width="0.5" stroke-opacity="0.7"/><path d="M35 7.6L55 7.6M34 9L34 20" fill="none" stroke="#1a1a1a" stroke-width="0.4" stroke-opacity="0.7"/><path d="M56 7L62 3.6M57 9L63 5.4M58 6L58 11" fill="none" stroke="#1a1a1a" stroke-width="0.6" stroke-opacity="0.8"/><rect x="56.6" y="5.4" width="5" height="4" fill="#000" opacity="0.13"/><path d="M57.6 9.1L57.6 9.4M58.8 5.4L58.8 8.1M58.7 8L61.6 8M60.4 7.2L61.6 7.2M58.5 7.6L61.6 7.6M59.6 6.5L59.6 8.5M58.4 8.4L59.6 8.4M59 5.6L59 8.5M60.7 5.6L61.6 5.6M58.6 5.8L60.2 5.8" fill="none" stroke="#1a1a1a" stroke-width="0.55" stroke-opacity="0.7"/><path d="M76 12L76 26M69 18.6L84 18.6M71 24L80 13" fill="none" stroke="#1a1a1a" stroke-width="0.7" stroke-opacity="0.85"/><rect x="73.4" y="16" width="5.4" height="5" fill="#000" opacity="0.13"/><path d="M76.5 18.7L76.5 21M77.6 18.1L77.6 21M76.5 17.4L76.5 19.1M73.7 16.1L77.2 16.1M74.7 19.2L78.8 19.2M78.6 19L78.6 21M74.5 18.6L78.5 18.6M75.7 20.2L75.7 21M74.9 19.2L78 19.2M76.8 18.4L77.7 18.4M76.2 20.5L78.2 20.5M76 17.9L78.8 17.9M76.6 17L76.6 20M75 19.2L78.8 19.2M76.6 19.4L78.6 19.4M74.1 16.3L76.9 16.3M75.5 16.1L78.8 16.1M75.2 17.1L78.2 17.1M73.5 20.5L73.5 21M75.2 19.6L78.3 19.6" fill="none" stroke="#1a1a1a" stroke-width="0.55" stroke-opacity="0.9"/><rect x="74.4" y="17" width="3.4" height="3" fill="#111" opacity="0.8"/><path d="M70 27.2L72.5 27.2M73.1 27.2L75.1 27.2M75.7 27.2L79.4 27.2" fill="none" stroke="#1a1a1a" stroke-width="0.6" stroke-opacity="0.75"/><path d="M6.4 25.4L9 25.4L11 30L11 38.6L27 38.6L27 30L29 27" fill="none" stroke="#1a1a1a" stroke-width="0.8" stroke-opacity="0.9"/><rect x="11.6" y="30.4" width="6.6" height="8" fill="#000" opacity="0.3"/><rect x="19.6" y="30.4" width="6.6" height="8" fill="#000" opacity="0.3"/><path d="M20.8 30.5L21.7 30.5M14.7 37L16 37M12.7 29.2L12.7 33.5M17.3 32.2L17.3 34.5M12.6 33.2L12.6 34.9M21.4 36L23.8 36M25.9 34.3L27 34.3M25.1 37.6L25.1 39M16.5 37.6L20.1 37.6M11.5 29.5L11.5 33.9M23.2 36.3L27 36.3M21.1 32.1L21.1 37.5M18.6 33.8L20.2 33.8M21.3 31.2L24.2 31.2M16.2 38.2L16.2 39M22 35.7L26.4 35.7M17.5 31.8L17.5 34.5M13 30.6L18.3 30.6M16 34.1L18.7 34.1M23.5 38.8L23.5 39M15.7 30.2L15.7 33.8M25.2 28.1L25.2 32.2M24.5 28.8L24.5 30.4M19.9 31.8L22.4 31.8M12.9 38.5L12.9 39M15.5 36.4L15.5 38.7M14.8 32.5L14.8 34.5M18.6 37.2L20.9 37.2M26.8 31.4L27 31.4M14.3 28.1L19.5 28.1M25.6 34.6L27 34.6M26.3 33.8L26.3 38.4M14.4 34.7L14.4 38.5M18.8 37.4L24.5 37.4M18.2 35.5L18.2 39M18.2 31.3L19.3 31.3M22.6 35.6L22.6 38.3M15.8 34.2L16.9 34.2M22.2 28.3L25.1 28.3M14.1 28.1L14.1 31.1" fill="none" stroke="#1a1a1a" stroke-width="0.55" stroke-opacity="0.8"/><path d="M12 24.6L15.1 24.6M16.2 24.6L17.5 24.6M18.5 24.6L20 24.6" fill="none" stroke="#1a1a1a" stroke-width="0.6" stroke-opacity="0.75"/><path d="M6.4 29L6.4 39M14.6 26.6L14.6 31M22.6 26.6L22.6 31" fill="none" stroke="#1a1a1a" stroke-width="0.5" stroke-opacity="0.8"/><path d="M40.6 30.6 V27.4 Q40.6 25.6 43 25.6 H50 Q52.4 25.6 52.4 27.4 V30.6" fill="none" stroke="#1a1a1a" stroke-width=".9"/><path d="M57.6 31 V27.4 Q57.6 25.4 60.4 25.4 Q63.4 25.4 63.4 27.4 V31" fill="none" stroke="#1a1a1a" stroke-width=".9"/><path d="M36 30.6L55 30.6M56 31L65 31" fill="none" stroke="#1a1a1a" stroke-width="0.5" stroke-opacity="0.8"/><path d="M41 33.1L43.2 33.1M43.8 33.1L47.3 33.1M47.7 33.1L50.9 33.1" fill="none" stroke="#1a1a1a" stroke-width="0.6" stroke-opacity="0.7"/><path d="M41.4 36.4L41.4 50.6L53.6 50.6L53.6 36.4" fill="none" stroke="#1a1a1a" stroke-width="1" stroke-opacity="0.9"/><path d="M39.6 36.4L39.6 51M55.4 38L55.4 49M41.4 41L53.6 41" fill="none" stroke="#1a1a1a" stroke-width="0.45" stroke-opacity="0.75"/><path d="M42 41.5L43.5 41.5M51.4 44.4L51.4 47.3M51.9 43.5L53.8 43.5M40.8 36.8L43.2 36.8M47.3 49.3L47.3 52M55 46.9L55 47.8M54.8 38.9L54.8 42.7M41.2 38.4L43.7 38.4M51 36.1L54.2 36.1M55.3 44.7L55.3 48.5M49.4 39.4L49.4 40.4M48.8 39L51.7 39M42 46.1L43.3 46.1M55.1 40.7L55.1 42M40.6 38.8L40.6 40.3M50.2 37.8L50.2 38.7M41.6 43.4L42.5 43.4M43 36.6L47.6 36.6M41.6 39L45.2 39M55.4 38.5L56 38.5M46.2 43L50.5 43M55.7 47.7L55.7 51.3" fill="none" stroke="#1a1a1a" stroke-width="0.5" stroke-opacity="0.7"/><path d="M43 53.5L45.6 53.5M46.1 53.5L49.8 53.5M50.6 53.5L52 53.5" fill="none" stroke="#1a1a1a" stroke-width="0.6" stroke-opacity="0.7"/><rect x="26.4" y="45.6" width="7.6" height="5" fill="#000" opacity="0.13"/><path d="M26.8 50.1L28.6 50.1M30.2 48.7L34 48.7M29.9 46.5L32.8 46.5M33.3 45.9L33.3 49.6M32.2 47L33.8 47M33.9 50L33.9 50.6M32 48.1L32 50.6M29.8 46.9L29.8 50.5M29.5 49.3L31.5 49.3M27.8 49.7L32.1 49.7M32.9 49L34 49M32.4 50.4L33.4 50.4M31.3 49.1L31.3 50.6M30.1 50.1L30.1 50.6M28.3 49.3L32.1 49.3M29.5 49.6L34 49.6M29.9 46.5L34 46.5M34 50.5L34 50.5" fill="none" stroke="#1a1a1a" stroke-width="0.55" stroke-opacity="0.8"/><path d="M25 52.5L27.6 52.5M28.5 52.5L31 52.5M31.6 52.5L33.7 52.5" fill="none" stroke="#1a1a1a" stroke-width="0.6" stroke-opacity="0.7"/><rect x="68.4" y="33" width="16" height="23" fill="none" stroke="#1a1a1a" stroke-width="0.5"/><path d="M68.4 33L68.4 56M76.4 33L76.4 56M84.4 33L84.4 56M68.4 33L84.4 33M68.4 35.6L84.4 35.6M68.4 38.1L84.4 38.1M68.4 40.7L84.4 40.7M68.4 43.2L84.4 43.2M68.4 45.8L84.4 45.8M68.4 48.3L84.4 48.3M68.4 50.9L84.4 50.9M68.4 53.4L84.4 53.4M68.4 56L84.4 56" fill="none" stroke="#333" stroke-width="0.35" stroke-opacity="0.7"/><path d="M69 34.6L70.3 34.6M71.4 34.6L73.8 34.6M74.3 34.6L76.6 34.6M79.9 34.6L81.2 34.6M69 37.1L70.3 37.1M71.3 37.1L73.1 37.1M73.8 37.1L77.5 37.1M78.5 37.1L82.5 37.1M83 37.1L84 37.1M69 39.5L72.7 39.5M73.7 39.5L75.4 39.5M76.4 39.5L77.9 39.5M78.3 39.5L79.7 39.5M83.6 39.5L84 39.5M72 42L74.1 42M74.7 42L76.3 42M77.3 42L79.1 42M83.6 42L84 42M69 44.4L72 44.4M76.9 44.4L78.4 44.4M79.3 44.4L80.8 44.4M81.9 44.4L84 44.4M69 46.8L72.5 46.8M73.5 46.8L75.7 46.8M80.2 46.8L82.7 46.8M83.6 46.8L84 46.8M69 49.3L70.4 49.3M71.1 49.3L74.8 49.3M75.6 49.3L78.5 49.3M79 49.3L81.8 49.3M82.6 49.3L84 49.3M69 51.7L71 51.7M71.9 51.7L75.9 51.7M77 51.7L78.8 51.7M79.4 51.7L82.3 51.7M83 51.7L84 51.7M77.1 54.2L80.9 54.2M82 54.2L84 54.2" fill="none" stroke="#333" stroke-width="0.55" stroke-opacity="0.6"/></g><rect x="0.5" y="0.5" width="89" height="63" fill="none" stroke="#8b9fd8" stroke-width="1"/></svg>
<div class="cell" style="left:517.0px;top:305.0px;width:92.0px;height:31.5px"></div>
<div class="cb" style="left:519.6px;top:311.6px"></div>
<div class="num" style="left:532.0px;top:311.3px">14</div>
<div class="ttl" style="left:519.2px;top:324.0px;letter-spacing:-0.1px">部材リスト</div>
<svg class="th wd" style="left:517.4px;top:338.6px" width="91.2" height="64.8" viewBox="0 0 90 64" preserveAspectRatio="none"><rect x="0" y="0" width="90" height="64" fill="#fff"/><g opacity="0.7"><rect x="0" y="0" width="90" height="64" fill="#fff"/><rect x="0.5" y="0.5" width="89" height="63" fill="none" stroke="#8b9fd8" stroke-width="1"/><rect x="3.2" y="2.6" width="83.6" height="58.6" fill="none" stroke="#222" stroke-width="0.7"/><path d="M3.2 57.6L86.8 57.6" stroke="#222" stroke-width="0.6"/><rect x="3.2" y="57.6" width="22.8" height="3.6" fill="#000" opacity="0.22"/><rect x="70" y="57.6" width="16.8" height="3.6" fill="#000" opacity="0.25"/><path d="M3.8 58.6L6.2 58.6M7.3 58.6L9.7 58.6M10.6 58.6L12.1 58.6M13 58.6L16.4 58.6M17 58.6L18.3 58.6M21.6 58.6L24.5 58.6M25.1 58.6L25.8 58.6M3.8 60.1L5.4 60.1M5.8 60.1L8.2 60.1M9.3 60.1L11.8 60.1M12.6 60.1L15.6 60.1M21.3 60.1L24.4 60.1M25 60.1L25.8 60.1" fill="none" stroke="#111" stroke-width="1.1" stroke-opacity="1"/><path d="M26 57.6L26 61.2M44 57.6L44 61.2M70 57.6L70 61.2M8 57.6L8 61.2M14 57.6L14 61.2M20 57.6L20 61.2" fill="none" stroke="#111" stroke-width="0.6"/><path d="M45 58.6L47.4 58.6M48.4 58.6L49.8 58.6M50.5 58.6L52.3 58.6M53.3 58.6L56.1 58.6M57 58.6L58.4 58.6M59 58.6L62.7 58.6M45 60.1L46.2 60.1M46.9 60.1L49.1 60.1M53.9 60.1L55.3 60.1M55.8 60.1L57.7 60.1M58.3 60.1L61.3 60.1M61.9 60.1L63 60.1" fill="none" stroke="#111" stroke-width="1.3" stroke-opacity="1"/><path d="M71 58.6L72.8 58.6M73.7 58.6L77.3 58.6M77.9 58.6L79.3 58.6M80.3 58.6L81.7 58.6M82.2 58.6L84.1 58.6M85.2 58.6L86 58.6M71 60.1L72.4 60.1M73.5 60.1L76.9 60.1M77.9 60.1L81.7 60.1M82.4 60.1L85.9 60.1" fill="none" stroke="#111" stroke-width="1.1" stroke-opacity="1"/><path d="M5.4 4.8L8.8 4.8M9.6 4.8L11.6 4.8M12.2 4.8L13.6 4.8M14 4.8L14.4 4.8" fill="none" stroke="#1a1a1a" stroke-width="0.7" stroke-opacity="0.8"/><rect x="5.4" y="6.2" width="51.4" height="22.6" fill="none" stroke="#1a1a1a" stroke-width="0.5"/><path d="M5.4 6.2L5.4 28.8M9.4 6.2L9.4 28.8M13.3 6.2L13.3 28.8M17.3 6.2L17.3 28.8M21.2 6.2L21.2 28.8M25.2 6.2L25.2 28.8M29.1 6.2L29.1 28.8M33.1 6.2L33.1 28.8M37 6.2L37 28.8M41 6.2L41 28.8M44.9 6.2L44.9 28.8M48.9 6.2L48.9 28.8M52.8 6.2L52.8 28.8M56.8 6.2L56.8 28.8M5.4 6.2L56.8 6.2M5.4 8.5L56.8 8.5M5.4 10.7L56.8 10.7M5.4 13L56.8 13M5.4 15.2L56.8 15.2M5.4 17.5L56.8 17.5M5.4 19.8L56.8 19.8M5.4 22L56.8 22M5.4 24.3L56.8 24.3M5.4 26.5L56.8 26.5M5.4 28.8L56.8 28.8" fill="none" stroke="#444" stroke-width="0.3" stroke-opacity="0.7"/><path d="M6 7.8L9.3 7.8M10.5 7.8L11.9 7.8M13 7.8L16.8 7.8M18 7.8L19.9 7.8M6 10.1L9.5 10.1M10.4 10.1L12 10.1M15.8 10.1L18.5 10.1M19.5 10.1L22 10.1M9.3 12.4L12 12.4M12.5 12.4L14.2 12.4M14.9 12.4L16.1 12.4M17.3 12.4L20.7 12.4M21.5 12.4L22 12.4M9.8 14.8L11.2 14.8M12.1 14.8L14.5 14.8M15.2 14.8L17.6 14.8M18.4 14.8L21.5 14.8M6 17.1L9 17.1M9.5 17.1L12.8 17.1M13.7 17.1L15.4 17.1M16.4 17.1L18.9 17.1M19.7 17.1L21.2 17.1M6 19.4L8 19.4M8.9 19.4L9.9 19.4M11.1 19.4L14.2 19.4M14.7 19.4L18.2 19.4M18.7 19.4L22 19.4" fill="none" stroke="#1a1a1a" stroke-width="0.8" stroke-opacity="0.8"/><path d="M22 9.2L24.1 9.2M32.3 9.2L35.4 9.2M36.5 9.2L39.3 9.2M40 9.2L40 9.2M22 11.6L24.3 11.6M29.1 11.6L33 11.6M33.8 11.6L36.2 11.6M36.6 11.6L38.8 11.6M39.5 11.6L40 11.6M22 14L25.8 14M26.5 14L27.9 14M38.9 14L40 14M25.8 16.4L29.7 16.4M24.5 18.8L27.9 18.8M35.8 18.8L38.6 18.8M39.8 18.8L40 18.8" fill="none" stroke="#1a1a1a" stroke-width="0.7" stroke-opacity="0.7"/><rect x="20" y="12.6" width="31" height="1.2" fill="#222" opacity="0.75"/><rect x="20" y="17.8" width="34" height="1.2" fill="#222" opacity="0.7"/><rect x="5.4" y="6.2" width="51.4" height="2" fill="#000" opacity="0.18"/><path d="M5.4 31.2L7.4 31.2M8.4 31.2L11.6 31.2M12.2 31.2L14.4 31.2" fill="none" stroke="#1a1a1a" stroke-width="0.7" stroke-opacity="0.8"/><rect x="5.4" y="32.6" width="40.4" height="23.6" fill="none" stroke="#1a1a1a" stroke-width="0.5"/><path d="M5.4 32.6L5.4 56.2M9.4 32.6L9.4 56.2M13.5 32.6L13.5 56.2M17.5 32.6L17.5 56.2M21.6 32.6L21.6 56.2M25.6 32.6L25.6 56.2M29.6 32.6L29.6 56.2M33.7 32.6L33.7 56.2M37.7 32.6L37.7 56.2M41.8 32.6L41.8 56.2M45.8 32.6L45.8 56.2M5.4 32.6L45.8 32.6M5.4 35L45.8 35M5.4 37.3L45.8 37.3M5.4 39.7L45.8 39.7M5.4 42L45.8 42M5.4 44.4L45.8 44.4M5.4 46.8L45.8 46.8M5.4 49.1L45.8 49.1M5.4 51.5L45.8 51.5M5.4 53.8L45.8 53.8M5.4 56.2L45.8 56.2" fill="none" stroke="#444" stroke-width="0.3" stroke-opacity="0.7"/><path d="M6 34.2L9.4 34.2M9.8 34.2L11.9 34.2M12.5 34.2L16.2 34.2M17.1 34.2L19.2 34.2M6 36.5L9.1 36.5M10.1 36.5L13.1 36.5M14.1 36.5L15.4 36.5M15.9 36.5L18.2 36.5M18.8 36.5L20 36.5M6 38.8L9.5 38.8M10 38.8L11.6 38.8M12.1 38.8L14.6 38.8M15.7 38.8L18.1 38.8M19.3 38.8L20 38.8M6 41.2L7.8 41.2M12 41.2L16 41.2M12.4 43.5L15.6 43.5M16.7 43.5L18.8 43.5M19.6 43.5L20 43.5M6 45.8L10 45.8M11 45.8L12.3 45.8M13.2 45.8L14.3 45.8M19.1 45.8L20 45.8" fill="none" stroke="#1a1a1a" stroke-width="0.8" stroke-opacity="0.8"/><path d="M20 35.3L22.3 35.3M23.2 35.3L26.6 35.3M27.8 35.3L30 35.3M23.1 38L26.3 38M27.4 38L30 38M20 40.7L22.7 40.7M23.7 40.7L26.5 40.7" fill="none" stroke="#1a1a1a" stroke-width="0.7" stroke-opacity="0.7"/><rect x="24" y="48.8" width="18" height="1.2" fill="#222" opacity="0.7"/><rect x="5.4" y="32.6" width="40.4" height="2" fill="#000" opacity="0.18"/><path d="M61.4 5L62.5 5M63.1 5L64.4 5M65.3 5L68.2 5M68.7 5L69.4 5" fill="none" stroke="#1a1a1a" stroke-width="0.7" stroke-opacity="0.8"/><path d="M77 5L80.9 5M81.8 5L84 5" fill="none" stroke="#1a1a1a" stroke-width="0.7" stroke-opacity="0.8"/><rect x="62" y="7" width="10" height="10" fill="#000" opacity="0.13"/><path d="M71.5 16.6L71.5 17M69.6 10.4L69.6 17M63.9 16.5L72 16.5M64.2 16.7L64.2 17M63.7 12.1L67.9 12.1M68.6 14.4L70.4 14.4M68.5 7.2L72 7.2M67.2 9.5L67.2 15.6M65.6 8.1L72 8.1M63 14.8L63 17M70.7 10.7L72 10.7M69.1 13.1L69.1 17M67.3 7.4L72 7.4M67.6 13.7L72 13.7M64.7 17L72 17M67.9 9.8L72 9.8M67.8 14.8L72 14.8M63.1 14.6L63.1 17M67.6 16.1L72 16.1M68.2 14.1L68.2 17M65.5 7.8L65.5 16.1M62.5 9.5L62.5 13.9M65.2 16.1L69.4 16.1M68 7.5L68 17M62 13.8L70.3 13.8M64.5 11.8L64.5 14.5M71.7 15.9L72 15.9M67.7 14.8L67.7 17M63.7 16.3L63.7 17M68.8 11.7L71.2 11.7M64.3 12.3L68.5 12.3M68 10.4L72 10.4M70.9 15.5L70.9 17M68.4 10.5L68.4 16.8M70 8.1L72 8.1M63.1 12.5L72 12.5" fill="none" stroke="#1a1a1a" stroke-width="0.55" stroke-opacity="0.85"/><rect x="64" y="10" width="5" height="4.4" fill="#fff" opacity="0.6"/><rect x="64" y="10" width="5" height="4.4" fill="none" stroke="#1a1a1a" stroke-width="0.8"/><path d="M70 8L74 6" stroke="#1a1a1a" stroke-width="0.6"/><rect x="77.4" y="6.6" width="7" height="8.6" fill="#000" opacity="0.13"/><path d="M83.7 8.3L84.4 8.3M81 10.4L81 11.5M84.2 8.5L84.4 8.5M81.2 12.9L81.2 14.5M81.6 11.7L83.5 11.7M79.5 13.2L84.4 13.2M82.2 7L84.4 7M77.6 13.7L78.9 13.7M82.9 14.8L84.3 14.8M78.6 8.6L78.6 10.3M83.8 11L83.8 15.2M80.2 11L80.2 14.7M80.7 13.1L84.4 13.1M83.3 13.2L83.3 15.2M77.9 6.8L77.9 13.6M83.8 14.4L84.4 14.4M79.9 8.5L79.9 13.2M81.8 9.5L81.8 14.8M78.5 12.6L80.4 12.6M82.7 9.4L84.4 9.4M78.7 11.8L83.3 11.8M77.7 8.4L80.8 8.4M77.4 13.1L77.4 15.2M78.9 12.5L80 12.5" fill="none" stroke="#1a1a1a" stroke-width="0.55" stroke-opacity="0.8"/><path d="M80.8 6L80.8 16" stroke="#1a1a1a" stroke-width="0.8"/><path d="M61.4 20.2L62.8 20.2M63.7 20.2L65.1 20.2M65.7 20.2L66.8 20.2" fill="none" stroke="#1a1a1a" stroke-width="0.7" stroke-opacity="0.8"/><rect x="62.4" y="22" width="5" height="8.6" fill="#000" opacity="0.13"/><path d="M65.3 22.9L67.4 22.9M63.4 24.7L65.8 24.7M66.1 24.1L67.4 24.1M67.1 28.6L67.4 28.6M67 25.4L67 28.1M63.8 23.7L63.8 24.7M66.1 28.3L67.4 28.3M64.6 30.5L66.4 30.5M67.2 29.7L67.2 30.6M67.4 30.6L67.4 30.6M63 30.6L66.5 30.6M63.7 28.4L66.5 28.4M64 27.1L67.4 27.1M65.9 24.5L67.4 24.5M64.8 29.7L64.8 30.6M65.3 25.1L67.4 25.1" fill="none" stroke="#1a1a1a" stroke-width="0.55" stroke-opacity="0.8"/><path d="M61 22.6L69 22.6M61 27L69 27M65 22.6L65 31" fill="none" stroke="#1a1a1a" stroke-width="0.7" stroke-opacity="0.85"/><rect x="70.4" y="20.2" width="16" height="10.6" fill="none" stroke="#1a1a1a" stroke-width="0.45"/><path d="M70.4 20.2L70.4 30.8M73.6 20.2L73.6 30.8M76.8 20.2L76.8 30.8M80 20.2L80 30.8M83.2 20.2L83.2 30.8M86.4 20.2L86.4 30.8M70.4 20.2L86.4 20.2M70.4 22L86.4 22M70.4 23.7L86.4 23.7M70.4 25.5L86.4 25.5M70.4 27.3L86.4 27.3M70.4 29L86.4 29M70.4 30.8L86.4 30.8" fill="none" stroke="#333" stroke-width="0.35" stroke-opacity="0.75"/><rect x="70.4" y="20.2" width="16" height="10.6" fill="#000" opacity="0.14"/><rect x="51.4" y="31" width="15.4" height="8.4" fill="none" stroke="#1a1a1a" stroke-width="0.45"/><path d="M51.4 31L51.4 39.4M54.5 31L54.5 39.4M57.6 31L57.6 39.4M60.6 31L60.6 39.4M63.7 31L63.7 39.4M66.8 31L66.8 39.4M51.4 31L66.8 31M51.4 32.7L66.8 32.7M51.4 34.4L66.8 34.4M51.4 36L66.8 36M51.4 37.7L66.8 37.7M51.4 39.4L66.8 39.4" fill="none" stroke="#333" stroke-width="0.35" stroke-opacity="0.75"/><rect x="51.4" y="31" width="15.4" height="8.4" fill="#000" opacity="0.16"/><path d="M70 32.2L72.4 32.2M73.5 32.2L75.5 32.2M76.6 32.2L78.4 32.2M79.1 32.2L82.9 32.2M83.5 32.2L84 32.2M70 33.8L71.3 33.8M72.3 33.8L73.8 33.8M74.7 33.8L78.1 33.8M78.7 33.8L81.1 33.8M81.9 33.8L84 33.8M70 35.4L72.1 35.4M73.3 35.4L75.7 35.4M76.5 35.4L78.8 35.4M82.2 35.4L84 35.4M70 37L71.6 37M72 37L75.8 37M76.3 37L79.4 37M80.3 37L81.4 37M82 37L84 37" fill="none" stroke="#1a1a1a" stroke-width="0.7" stroke-opacity="0.75"/><path d="M70 40.4L71.3 40.4M71.7 40.4L73.6 40.4M74.7 40.4L77.2 40.4M78.2 40.4L81.8 40.4M70 42.1L73.9 42.1M74.4 42.1L77.3 42.1M78.3 42.1L82 42.1M83 42.1L84 42.1M70 43.8L73.5 43.8M74.6 43.8L77.7 43.8M78.5 43.8L82.4 43.8M83.3 43.8L84 43.8" fill="none" stroke="#1a1a1a" stroke-width="0.8" stroke-opacity="0.8"/><rect x="56" y="43.4" width="12" height="1.4" fill="#111" opacity="0.85"/><path d="M52 42.5L53.8 42.5M55 42.5L56 42.5" fill="none" stroke="#1a1a1a" stroke-width="0.6" stroke-opacity="0.7"/></g><rect x="0.5" y="0.5" width="89" height="63" fill="none" stroke="#8b9fd8" stroke-width="1"/></svg>
<div class="cell" style="left:611.3px;top:305.0px;width:92.0px;height:31.5px"></div>
<div class="cb" style="left:613.9px;top:311.6px"></div>
<div class="num" style="left:626.3px;top:311.3px">15</div>
<div class="ttl" style="left:613.5px;top:324.0px;letter-spacing:-0.1px">平面図</div>
<svg class="th cd" style="left:612.1px;top:338.6px" width="90.4" height="64.8" viewBox="0 0 90 64" preserveAspectRatio="none"><rect x="0" y="0" width="90" height="64" fill="#000"/><rect x="0.5" y="0.5" width="89" height="63" fill="none" stroke="#8ecbe8" stroke-width="1" stroke-dasharray="1.1 1.1"/><rect x="2.4" y="2.1" width="85.4" height="59.8" fill="none" stroke="#08b818" stroke-width="0.9"/><rect x="61.5" y="59.2" width="26.1" height="2.7" fill="#14e828"/><path d="M77.5 59.2L77.5 62M82.5 59.2L82.5 62M83 59.2L83 62" fill="none" stroke="#053" stroke-width="0.5"/><path d="M14.6 10.2L64 5.8L72 14L79.4 41.6L61 46.4L22 45.4Z" fill="#f014f0" opacity="0.42"/><rect x="66" y="34" width="2.1" height="1.2" fill="#f014f0" opacity="0.95"/><rect x="68.4" y="28.8" width="2.6" height="1.8" fill="#2828f0" opacity="0.95"/><rect x="21.8" y="23.1" width="1.1" height="0.9" fill="#000" opacity="0.95"/><rect x="47.7" y="13.1" width="1.8" height="1.4" fill="#10e020" opacity="0.95"/><rect x="25.4" y="20.4" width="1.6" height="1.5" fill="#10e020" opacity="0.95"/><rect x="32" y="34.9" width="1.5" height="1.2" fill="#000" opacity="0.95"/><rect x="48.2" y="25.2" width="1.5" height="1.3" fill="#f014f0" opacity="0.95"/><rect x="44.4" y="26.7" width="2.2" height="1.6" fill="#2828f0" opacity="0.95"/><rect x="61.4" y="23.4" width="1.3" height="0.9" fill="#20d0e0" opacity="0.95"/><rect x="28.3" y="12" width="3.5" height="1.8" fill="#000" opacity="0.95"/><rect x="47.7" y="19.3" width="2.3" height="1.4" fill="#20d0e0" opacity="0.95"/><rect x="27.2" y="38" width="1.7" height="1" fill="#000" opacity="0.95"/><rect x="17.1" y="35.7" width="2.6" height="1.6" fill="#f014f0" opacity="0.95"/><rect x="56.6" y="21" width="1.7" height="1.5" fill="#10e020" opacity="0.95"/><rect x="31.4" y="44" width="1.3" height="1.2" fill="#000" opacity="0.95"/><rect x="43.4" y="32" width="2.3" height="1.8" fill="#10e020" opacity="0.95"/><rect x="71" y="11.7" width="1.6" height="1.1" fill="#000" opacity="0.95"/><rect x="57.6" y="27.8" width="1.5" height="0.9" fill="#f014f0" opacity="0.95"/><rect x="23.2" y="35.7" width="2.6" height="1.4" fill="#000" opacity="0.95"/><rect x="55.6" y="22.5" width="1.7" height="1.1" fill="#f014f0" opacity="0.95"/><rect x="53.1" y="35.1" width="1.3" height="1" fill="#f0e020" opacity="0.95"/><rect x="46" y="8.4" width="3.1" height="1.6" fill="#10e020" opacity="0.95"/><rect x="31.1" y="38" width="2.4" height="1.5" fill="#000" opacity="0.95"/><rect x="24.7" y="32.5" width="2.6" height="1.7" fill="#f0e020" opacity="0.95"/><rect x="52.2" y="17.3" width="1.8" height="1.3" fill="#10e020" opacity="0.95"/><rect x="23.4" y="28" width="1.3" height="1.2" fill="#f014f0" opacity="0.95"/><rect x="66.6" y="15.4" width="2" height="1.3" fill="#f0e020" opacity="0.95"/><rect x="71" y="33.6" width="2" height="1.5" fill="#000" opacity="0.95"/><rect x="18.5" y="41" width="1.8" height="1.7" fill="#20d0e0" opacity="0.95"/><rect x="62.4" y="36.2" width="2.2" height="1.1" fill="#f0e020" opacity="0.95"/><rect x="41.1" y="23.3" width="2.2" height="1.6" fill="#f0e020" opacity="0.95"/><rect x="34.5" y="23" width="1.1" height="1.1" fill="#2828f0" opacity="0.95"/><rect x="30.1" y="42.2" width="2" height="1.8" fill="#000" opacity="0.95"/><rect x="21.8" y="26.1" width="2" height="1.2" fill="#f01818" opacity="0.95"/><rect x="51.7" y="31.7" width="2.1" height="1.8" fill="#20d0e0" opacity="0.95"/><rect x="42.8" y="18.7" width="2.1" height="1.4" fill="#f0e020" opacity="0.95"/><rect x="62.4" y="36.5" width="2.1" height="1.7" fill="#f014f0" opacity="0.95"/><rect x="62" y="37.8" width="1.6" height="1.5" fill="#000" opacity="0.95"/><rect x="41.8" y="14.3" width="1.6" height="1.3" fill="#f014f0" opacity="0.95"/><rect x="40.7" y="12.1" width="2.7" height="1.4" fill="#f014f0" opacity="0.95"/><rect x="28.8" y="25.5" width="2.7" height="1.5" fill="#20d0e0" opacity="0.95"/><rect x="28.7" y="31.5" width="2.5" height="1.6" fill="#10e020" opacity="0.95"/><rect x="30" y="13.2" width="1.4" height="1.3" fill="#10e020" opacity="0.95"/><rect x="37.3" y="10.3" width="1.8" height="1.3" fill="#f0e020" opacity="0.95"/><rect x="18.1" y="40.3" width="1.6" height="1.3" fill="#f014f0" opacity="0.95"/><rect x="54.1" y="28.2" width="3.6" height="1.8" fill="#000" opacity="0.95"/><rect x="23.9" y="42.3" width="1.6" height="0.9" fill="#000" opacity="0.95"/><rect x="41.3" y="28.8" width="2.3" height="1.5" fill="#f014f0" opacity="0.95"/><rect x="64.5" y="22.7" width="0.9" height="0.9" fill="#000" opacity="0.95"/><rect x="25" y="16.4" width="2" height="1.6" fill="#f014f0" opacity="0.95"/><rect x="40.4" y="14.2" width="2.3" height="1.6" fill="#000" opacity="0.95"/><rect x="36.9" y="40" width="2.5" height="1.5" fill="#2828f0" opacity="0.95"/><rect x="60.9" y="16.1" width="2.6" height="1.4" fill="#f01818" opacity="0.95"/><rect x="51.8" y="37" width="3.2" height="1.7" fill="#2828f0" opacity="0.95"/><rect x="29.4" y="34.8" width="1.4" height="1.3" fill="#000" opacity="0.95"/><rect x="15.7" y="25.4" width="1.9" height="1.1" fill="#000" opacity="0.95"/><rect x="27.3" y="37.9" width="1.1" height="0.8" fill="#f01818" opacity="0.95"/><rect x="57.3" y="15.7" width="1.8" height="1" fill="#f014f0" opacity="0.95"/><rect x="54.9" y="38.6" width="1.5" height="0.8" fill="#2828f0" opacity="0.95"/><rect x="47.2" y="33.6" width="1.4" height="1" fill="#10e020" opacity="0.95"/><rect x="18" y="42.6" width="1.4" height="1.3" fill="#000" opacity="0.95"/><rect x="47.9" y="37.3" width="1.6" height="1.3" fill="#000" opacity="0.95"/><rect x="50.2" y="12.1" width="1.3" height="0.9" fill="#10e020" opacity="0.95"/><rect x="54.9" y="15.9" width="1.6" height="1.5" fill="#000" opacity="0.95"/><rect x="59.7" y="43.6" width="1.1" height="1.1" fill="#2828f0" opacity="0.95"/><rect x="45.1" y="13.5" width="1.6" height="1.3" fill="#f0e020" opacity="0.95"/><rect x="68" y="15.9" width="3.2" height="1.7" fill="#f014f0" opacity="0.95"/><rect x="67.9" y="16.5" width="1.6" height="0.9" fill="#20d0e0" opacity="0.95"/><rect x="37.3" y="11.4" width="2.6" height="1.5" fill="#000" opacity="0.95"/><rect x="39.5" y="37.2" width="2.4" height="1.5" fill="#000" opacity="0.95"/><rect x="27.5" y="28.2" width="1.6" height="1.2" fill="#2828f0" opacity="0.95"/><rect x="16.1" y="38.8" width="2.7" height="1.6" fill="#2828f0" opacity="0.95"/><rect x="32.3" y="15.1" width="1.9" height="1.4" fill="#2828f0" opacity="0.95"/><rect x="58.7" y="42.5" width="1.9" height="1" fill="#f0e020" opacity="0.95"/><rect x="18.5" y="37.1" width="1.3" height="0.8" fill="#000" opacity="0.95"/><rect x="72.3" y="20.2" width="1.2" height="0.9" fill="#2828f0" opacity="0.95"/><rect x="34.4" y="11.2" width="2" height="1.4" fill="#f01818" opacity="0.95"/><rect x="37.1" y="16.7" width="1.6" height="1.2" fill="#000" opacity="0.95"/><rect x="34.4" y="40.4" width="1.8" height="1.4" fill="#f014f0" opacity="0.95"/><rect x="43.8" y="31.9" width="2.5" height="1.7" fill="#20d0e0" opacity="0.95"/><rect x="65.2" y="40.1" width="2.2" height="1.3" fill="#10e020" opacity="0.95"/><rect x="55.7" y="13.8" width="2" height="1.6" fill="#f0e020" opacity="0.95"/><rect x="33.9" y="12.1" width="1.1" height="0.8" fill="#000" opacity="0.95"/><rect x="17" y="36" width="1.8" height="1.3" fill="#000" opacity="0.95"/><rect x="67.5" y="36.2" width="1.7" height="1.3" fill="#f0e020" opacity="0.95"/><rect x="36.1" y="26.7" width="1.6" height="1.4" fill="#2828f0" opacity="0.95"/><rect x="38.9" y="10.8" width="1.4" height="1.1" fill="#000" opacity="0.95"/><rect x="49.9" y="40.3" width="1.1" height="1.1" fill="#f014f0" opacity="0.95"/><rect x="49.3" y="36.3" width="1.8" height="1.2" fill="#000" opacity="0.95"/><rect x="40.2" y="13.9" width="2.4" height="1.3" fill="#10e020" opacity="0.95"/><rect x="65.1" y="37" width="0.9" height="0.8" fill="#f0e020" opacity="0.95"/><rect x="47.5" y="34.6" width="2.6" height="1.5" fill="#f01818" opacity="0.95"/><rect x="27.4" y="32.4" width="1.6" height="1.2" fill="#2828f0" opacity="0.95"/><rect x="51.9" y="32.3" width="1.8" height="1.1" fill="#000" opacity="0.95"/><rect x="65.6" y="16.6" width="2.6" height="1.6" fill="#f0e020" opacity="0.95"/><rect x="28.3" y="36.9" width="2" height="1.3" fill="#f014f0" opacity="0.95"/><rect x="17.5" y="13.3" width="2.2" height="1.5" fill="#f01818" opacity="0.95"/><rect x="20.9" y="9.8" width="2.5" height="1.7" fill="#f014f0" opacity="0.95"/><rect x="58.9" y="21.7" width="1.6" height="0.9" fill="#000" opacity="0.95"/><rect x="25.3" y="40.7" width="2.3" height="1.4" fill="#000" opacity="0.95"/><rect x="40" y="41.7" width="1.7" height="0.9" fill="#2828f0" opacity="0.95"/><rect x="60.4" y="36.8" width="1.7" height="1" fill="#f014f0" opacity="0.95"/><rect x="43.1" y="20" width="2" height="1.3" fill="#f0e020" opacity="0.95"/><rect x="33.6" y="41" width="1.8" height="1.6" fill="#2828f0" opacity="0.95"/><rect x="49.3" y="20.2" width="1.5" height="1.5" fill="#000" opacity="0.95"/><rect x="61.8" y="34.2" width="2.2" height="1.6" fill="#2828f0" opacity="0.95"/><rect x="24" y="30.2" width="2.3" height="1.6" fill="#f01818" opacity="0.95"/><rect x="19.5" y="43" width="2.4" height="1.4" fill="#f014f0" opacity="0.95"/><rect x="32.1" y="37.8" width="1.5" height="1.1" fill="#000" opacity="0.95"/><rect x="48.4" y="29" width="1.4" height="1.3" fill="#f01818" opacity="0.95"/><rect x="15.7" y="31.2" width="2.3" height="1.6" fill="#f0e020" opacity="0.95"/><rect x="68.3" y="33" width="2.5" height="1.4" fill="#2828f0" opacity="0.95"/><rect x="44.9" y="23.5" width="1.7" height="1.1" fill="#f014f0" opacity="0.95"/><rect x="51.5" y="23.1" width="1.7" height="1.5" fill="#f0e020" opacity="0.95"/><rect x="54.2" y="20.7" width="3.4" height="1.7" fill="#f0e020" opacity="0.95"/><rect x="54.5" y="21.4" width="2.8" height="1.6" fill="#10e020" opacity="0.95"/><rect x="32.4" y="11.8" width="1.8" height="1.3" fill="#000" opacity="0.95"/><rect x="62.3" y="18.1" width="2" height="1.6" fill="#2828f0" opacity="0.95"/><rect x="65.1" y="11" width="3.2" height="1.7" fill="#2828f0" opacity="0.95"/><rect x="69.1" y="40.8" width="1.9" height="1.2" fill="#2828f0" opacity="0.95"/><rect x="73.4" y="40.6" width="1.1" height="1" fill="#f014f0" opacity="0.95"/><rect x="27.7" y="23" width="2.8" height="1.5" fill="#20d0e0" opacity="0.95"/><rect x="54.1" y="13.8" width="1.8" height="1.3" fill="#000" opacity="0.95"/><rect x="48.6" y="8.8" width="1" height="1" fill="#f01818" opacity="0.95"/><rect x="57.4" y="44.5" width="1.7" height="0.9" fill="#2828f0" opacity="0.95"/><rect x="44.6" y="16.6" width="2" height="1.5" fill="#000" opacity="0.95"/><rect x="29.4" y="22.9" width="1.1" height="1.1" fill="#000" opacity="0.95"/><rect x="43" y="43.3" width="2.3" height="1.5" fill="#20d0e0" opacity="0.95"/><rect x="21.7" y="18.3" width="1.7" height="1.3" fill="#2828f0" opacity="0.95"/><rect x="27.2" y="11.7" width="2.9" height="1.5" fill="#2828f0" opacity="0.95"/><rect x="63.3" y="41.6" width="1.2" height="0.9" fill="#000" opacity="0.95"/><rect x="66.5" y="44.4" width="2.2" height="1.1" fill="#000" opacity="0.95"/><rect x="68" y="13.5" width="2.6" height="1.5" fill="#f0e020" opacity="0.95"/><rect x="16.9" y="14.2" width="1.3" height="0.9" fill="#000" opacity="0.95"/><rect x="64.6" y="26.7" width="1.5" height="0.9" fill="#10e020" opacity="0.95"/><rect x="50.6" y="10.1" width="1.6" height="1.2" fill="#000" opacity="0.95"/><rect x="65.9" y="24.1" width="0.9" height="0.8" fill="#f014f0" opacity="0.95"/><rect x="54.6" y="32.8" width="2.5" height="1.3" fill="#10e020" opacity="0.95"/><rect x="46.8" y="40.4" width="2.1" height="1.1" fill="#f0e020" opacity="0.95"/><rect x="54.6" y="34.1" width="1.7" height="1" fill="#2828f0" opacity="0.95"/><rect x="42.3" y="34.9" width="1.5" height="1.3" fill="#20d0e0" opacity="0.95"/><rect x="53" y="15.1" width="1.2" height="0.9" fill="#20d0e0" opacity="0.95"/><rect x="61.5" y="40.9" width="2.8" height="1.8" fill="#f0e020" opacity="0.95"/><rect x="41.5" y="36.9" width="2.6" height="1.8" fill="#2828f0" opacity="0.95"/><rect x="26.7" y="24.4" width="1.2" height="1.1" fill="#2828f0" opacity="0.95"/><rect x="19.3" y="20.6" width="2.1" height="1.6" fill="#f014f0" opacity="0.95"/><rect x="26.3" y="35.9" width="2" height="1.4" fill="#000" opacity="0.95"/><rect x="33.2" y="30" width="2.7" height="1.5" fill="#10e020" opacity="0.95"/><rect x="52.5" y="23.6" width="1.3" height="0.9" fill="#f014f0" opacity="0.95"/><rect x="69.5" y="30.5" width="1.9" height="1" fill="#f014f0" opacity="0.95"/><rect x="51.6" y="38.6" width="1.3" height="0.9" fill="#20d0e0" opacity="0.95"/><rect x="41.3" y="26.1" width="1.7" height="0.9" fill="#10e020" opacity="0.95"/><rect x="59.7" y="33" width="2.4" height="1.8" fill="#f01818" opacity="0.95"/><rect x="65.2" y="13.9" width="2.6" height="1.6" fill="#f01818" opacity="0.95"/><rect x="70.3" y="36.4" width="2.7" height="1.6" fill="#2828f0" opacity="0.95"/><rect x="51" y="35" width="2.8" height="1.7" fill="#20d0e0" opacity="0.95"/><rect x="20.2" y="25.4" width="1.5" height="0.8" fill="#2828f0" opacity="0.95"/><rect x="53.8" y="35" width="2.1" height="1.1" fill="#f0e020" opacity="0.95"/><rect x="56.9" y="10.7" width="2.2" height="1.5" fill="#2828f0" opacity="0.95"/><rect x="40.3" y="14.6" width="2.2" height="1.5" fill="#20d0e0" opacity="0.95"/><rect x="35.1" y="39.5" width="2.4" height="1.5" fill="#f0e020" opacity="0.95"/><rect x="57.4" y="33.6" width="2.4" height="1.8" fill="#f0e020" opacity="0.95"/><rect x="57.1" y="13.8" width="2.2" height="1.7" fill="#2828f0" opacity="0.95"/><rect x="33.4" y="14" width="1.9" height="1" fill="#f014f0" opacity="0.95"/><rect x="17.9" y="28.6" width="2.4" height="1.4" fill="#000" opacity="0.95"/><rect x="67.3" y="28.8" width="1.7" height="1.3" fill="#2828f0" opacity="0.95"/><rect x="18.5" y="43.9" width="1.7" height="1.7" fill="#000" opacity="0.95"/><rect x="34.1" y="10.7" width="1.5" height="1.2" fill="#f014f0" opacity="0.95"/><rect x="39.7" y="18.5" width="2.4" height="1.4" fill="#20d0e0" opacity="0.95"/><rect x="43.3" y="15.4" width="2.9" height="1.6" fill="#000" opacity="0.95"/><rect x="29.2" y="26.1" width="2" height="1.1" fill="#f0e020" opacity="0.95"/><rect x="32.3" y="8.6" width="2.6" height="1.7" fill="#2828f0" opacity="0.95"/><rect x="27.5" y="34.4" width="2.3" height="1.5" fill="#2828f0" opacity="0.95"/><rect x="69.9" y="12.7" width="1.8" height="1.2" fill="#000" opacity="0.95"/><rect x="59.6" y="43.6" width="2" height="1" fill="#000" opacity="0.95"/><rect x="50.9" y="9.9" width="2.8" height="1.5" fill="#10e020" opacity="0.95"/><rect x="33.3" y="23.3" width="2.7" height="1.5" fill="#000" opacity="0.95"/><rect x="33.5" y="33.9" width="2.6" height="1.7" fill="#f01818" opacity="0.95"/><rect x="41.4" y="9.9" width="2" height="1" fill="#000" opacity="0.95"/><rect x="43.7" y="29.6" width="2.7" height="1.4" fill="#2828f0" opacity="0.95"/><rect x="33.9" y="28.6" width="3.2" height="1.6" fill="#000" opacity="0.95"/><rect x="32.6" y="34.1" width="1.5" height="1.4" fill="#20d0e0" opacity="0.95"/><rect x="29.1" y="21.5" width="1.5" height="1.3" fill="#f01818" opacity="0.95"/><rect x="72.3" y="32.9" width="2.6" height="1.8" fill="#f0e020" opacity="0.95"/><rect x="52.9" y="12.6" width="2" height="1" fill="#20d0e0" opacity="0.95"/><rect x="57.2" y="8.9" width="2.6" height="1.4" fill="#20d0e0" opacity="0.95"/><rect x="40.5" y="40.7" width="2.7" height="1.4" fill="#f014f0" opacity="0.95"/><rect x="42.2" y="17.4" width="1.7" height="1.1" fill="#f014f0" opacity="0.95"/><rect x="52.5" y="43.2" width="2.5" height="1.3" fill="#f014f0" opacity="0.95"/><rect x="71.1" y="39.8" width="1.8" height="1.4" fill="#10e020" opacity="0.95"/><rect x="62.7" y="9.6" width="2.2" height="1.5" fill="#2828f0" opacity="0.95"/><rect x="28.8" y="15" width="2.6" height="1.6" fill="#10e020" opacity="0.95"/><rect x="57.9" y="24.3" width="1.7" height="1" fill="#10e020" opacity="0.95"/><rect x="69.3" y="37.9" width="1.7" height="1.6" fill="#10e020" opacity="0.95"/><rect x="69.9" y="28" width="2.2" height="1.1" fill="#2828f0" opacity="0.95"/><rect x="39.8" y="40.3" width="1.8" height="1.7" fill="#10e020" opacity="0.95"/><rect x="55.6" y="13.2" width="3.4" height="1.7" fill="#f01818" opacity="0.95"/><rect x="70.7" y="35.1" width="3.2" height="1.8" fill="#10e020" opacity="0.95"/><rect x="17.8" y="25.6" width="2.3" height="1.6" fill="#20d0e0" opacity="0.95"/><rect x="20.8" y="37.7" width="2.2" height="1.4" fill="#20d0e0" opacity="0.95"/><rect x="71.8" y="10.3" width="2.3" height="1.3" fill="#000" opacity="0.95"/><rect x="61.8" y="30.6" width="2.2" height="1.3" fill="#f014f0" opacity="0.95"/><rect x="48.4" y="32.5" width="2.7" height="1.5" fill="#f014f0" opacity="0.95"/><rect x="35.7" y="33.4" width="3.2" height="1.7" fill="#000" opacity="0.95"/><rect x="55.4" y="20.4" width="2.1" height="1.7" fill="#f01818" opacity="0.95"/><rect x="23.4" y="35" width="1.3" height="1" fill="#000" opacity="0.95"/><rect x="39.9" y="26.7" width="2.2" height="1.3" fill="#2828f0" opacity="0.95"/><rect x="71.8" y="34.7" width="1.9" height="1.6" fill="#f0e020" opacity="0.95"/><rect x="37.7" y="35.5" width="2.3" height="1.6" fill="#20d0e0" opacity="0.95"/><rect x="45.1" y="22.6" width="2.6" height="1.5" fill="#000" opacity="0.95"/><rect x="33.7" y="44.2" width="1.5" height="0.9" fill="#10e020" opacity="0.95"/><rect x="37.9" y="25.4" width="1.3" height="1" fill="#2828f0" opacity="0.95"/><rect x="28.7" y="40.3" width="0.9" height="0.9" fill="#f01818" opacity="0.95"/><rect x="54.5" y="27.5" width="1.8" height="1.2" fill="#2828f0" opacity="0.95"/><rect x="39" y="23.6" width="1" height="0.8" fill="#10e020" opacity="0.95"/><rect x="25" y="34.3" width="1.2" height="0.9" fill="#000" opacity="0.95"/><rect x="68.2" y="15.9" width="1.1" height="0.9" fill="#000" opacity="0.95"/><rect x="18.3" y="30.2" width="3.2" height="1.6" fill="#f0e020" opacity="0.95"/><rect x="19.6" y="16.8" width="2.4" height="1.5" fill="#000" opacity="0.95"/><rect x="47.5" y="44.4" width="1.1" height="0.8" fill="#000" opacity="0.95"/><rect x="68" y="24.2" width="2" height="1.8" fill="#2828f0" opacity="0.95"/><rect x="22.2" y="40.2" width="3.2" height="1.6" fill="#f01818" opacity="0.95"/><rect x="33.7" y="35.4" width="2.5" height="1.4" fill="#10e020" opacity="0.95"/><rect x="53.4" y="12.3" width="2.3" height="1.5" fill="#20d0e0" opacity="0.95"/><rect x="55.7" y="15.4" width="1.6" height="1.2" fill="#20d0e0" opacity="0.95"/><rect x="56.5" y="23.2" width="2" height="1.3" fill="#2828f0" opacity="0.95"/><rect x="48.9" y="11" width="2.5" height="1.5" fill="#f014f0" opacity="0.95"/><rect x="61.3" y="21.7" width="2.5" height="1.6" fill="#10e020" opacity="0.95"/><rect x="29.2" y="32.4" width="1.9" height="1.4" fill="#10e020" opacity="0.95"/><rect x="46.6" y="40.3" width="1.4" height="1.3" fill="#000" opacity="0.95"/><rect x="18.6" y="7.2" width="40" height="5" fill="none" stroke="#f01818" stroke-width="0.7"/><path d="M24.3 7.2L24.3 12.2M30 7.2L30 12.2M35.7 7.2L35.7 12.2M41.4 7.2L41.4 12.2M47.1 7.2L47.1 12.2M52.8 7.2L52.8 12.2" fill="none" stroke="#f01818" stroke-width="0.6"/><rect x="23.6" y="17.8" width="18.8" height="7.4" fill="#000" stroke="#f01818" stroke-width="0.8" opacity="0.9"/><rect x="26" y="19.4" width="14" height="4" fill="none" stroke="#f014f0" stroke-width="0.6"/><path d="M57 6.4L63 4L83.6 15.4L70 18" fill="none" stroke="#f01818" stroke-width="0.7"/><path d="M13.6 12L12 30L17 46.5" fill="none" stroke="#f01818" stroke-width="0.6"/><path d="M10.5 14L10.5 24M12 26L14 40" fill="none" stroke="#f014f0" stroke-width="0.6"/><path d="M64.6 50.4L72.4 44L78.6 52.6L70.5 57" fill="none" stroke="#f01818" stroke-width="0.7"/><path d="M66 11L84 27" stroke="#f01818" stroke-width="0.5"/><path d="M83.6 12L84.6 30M85.6 26L86 40" fill="none" stroke="#f014f0" stroke-width="0.6"/><circle cx="11.2" cy="40.8" r="2.3" fill="none" stroke="#10e020" stroke-width="1"/><circle cx="11.2" cy="40.8" r="0.9" fill="#10e020"/><path d="M17.6 50.6 Q40 49.6 56 45.4" fill="none" stroke="#f014f0" stroke-width=".9" stroke-dasharray="3 1.2"/><path d="M18 52.2L22 52.2M46 49.6L49 49M30 52.6L33 52.4" fill="none" stroke="#2828f0" stroke-width="0.8"/><path d="M56 46.6L58.5 49.4L62 49" fill="none" stroke="#20d0e0" stroke-width="0.8"/><rect x="37.6" y="54.4" width="5.6" height="1.1" fill="#10e020"/></svg>
<div class="cell" style="left:705.6px;top:305.0px;width:92.0px;height:31.5px"></div>
<div class="cb" style="left:708.2px;top:311.6px"></div>
<div class="num" style="left:720.6px;top:311.3px">16</div>
<div class="ttl" style="left:707.8px;top:324.0px;letter-spacing:-0.1px">鉄骨柱脚詳細図</div>
<div class="abs" style="left:785.1px;top:310.0px;width:10.5px;height:10.5px;background:#1f3f9e;color:#fff;font-size:7.5px;line-height:10.5px;text-align:center;font-weight:bold">図</div>
<svg class="th wd" style="left:706.0px;top:338.6px" width="91.2" height="64.8" viewBox="0 0 90 64" preserveAspectRatio="none"><rect x="0" y="0" width="90" height="64" fill="#fff"/><g opacity="0.72"><rect x="0" y="0" width="90" height="64" fill="#fff"/><rect x="0.5" y="0.5" width="89" height="63" fill="none" stroke="#8b9fd8" stroke-width="1"/><rect x="3.2" y="2.6" width="83.6" height="58.6" fill="none" stroke="#222" stroke-width="0.7"/><path d="M3.2 57.6L86.8 57.6" stroke="#222" stroke-width="0.6"/><rect x="3.2" y="57.6" width="22.8" height="3.6" fill="#000" opacity="0.22"/><rect x="70" y="57.6" width="16.8" height="3.6" fill="#000" opacity="0.25"/><path d="M3.8 58.6L6.2 58.6M7.3 58.6L9.7 58.6M10.6 58.6L12.1 58.6M13 58.6L16.4 58.6M17 58.6L18.3 58.6M21.6 58.6L24.5 58.6M25.1 58.6L25.8 58.6M3.8 60.1L5.4 60.1M5.8 60.1L8.2 60.1M9.3 60.1L11.8 60.1M12.6 60.1L15.6 60.1M21.3 60.1L24.4 60.1M25 60.1L25.8 60.1" fill="none" stroke="#111" stroke-width="1.1" stroke-opacity="1"/><path d="M26 57.6L26 61.2M44 57.6L44 61.2M70 57.6L70 61.2M8 57.6L8 61.2M14 57.6L14 61.2M20 57.6L20 61.2" fill="none" stroke="#111" stroke-width="0.6"/><path d="M45 58.6L47.4 58.6M48.4 58.6L49.8 58.6M50.5 58.6L52.3 58.6M53.3 58.6L56.1 58.6M57 58.6L58.4 58.6M59 58.6L62.7 58.6M45 60.1L46.2 60.1M46.9 60.1L49.1 60.1M53.9 60.1L55.3 60.1M55.8 60.1L57.7 60.1M58.3 60.1L61.3 60.1M61.9 60.1L63 60.1" fill="none" stroke="#111" stroke-width="1.3" stroke-opacity="1"/><path d="M71 58.6L72.8 58.6M73.7 58.6L77.3 58.6M77.9 58.6L79.3 58.6M80.3 58.6L81.7 58.6M82.2 58.6L84.1 58.6M85.2 58.6L86 58.6M71 60.1L72.4 60.1M73.5 60.1L76.9 60.1M77.9 60.1L81.7 60.1M82.4 60.1L85.9 60.1" fill="none" stroke="#111" stroke-width="1.1" stroke-opacity="1"/><path d="M7 4.8L8.2 4.8M9.3 4.8L11 4.8M12.1 4.8L13.6 4.8M14.6 4.8L16 4.8" fill="none" stroke="#1a1a1a" stroke-width="0.7" stroke-opacity="0.8"/><rect x="7" y="5.8" width="34.8" height="46.4" fill="none" stroke="#1a1a1a" stroke-width="0.6"/><path d="M13.6 5.8L13.6 52.2M20.4 5.8L20.4 52.2M27 5.8L27 52.2M34.4 5.8L34.4 52.2" fill="none" stroke="#1a1a1a" stroke-width="0.5" stroke-opacity="0.85"/><path d="M7 13.6L41.8 13.6M7 46L41.8 46M7 9L41.8 9" fill="none" stroke="#1a1a1a" stroke-width="0.5" stroke-opacity="0.8"/><path d="M7 13.6L7 46M41.8 13.6L41.8 46M7 13.6L41.8 13.6M7 15.9L41.8 15.9M7 18.2L41.8 18.2M7 20.5L41.8 20.5M7 22.9L41.8 22.9M7 25.2L41.8 25.2M7 27.5L41.8 27.5M7 29.8L41.8 29.8M7 32.1L41.8 32.1M7 34.4L41.8 34.4M7 36.7L41.8 36.7M7 39.1L41.8 39.1M7 41.4L41.8 41.4M7 43.7L41.8 43.7M7 46L41.8 46" fill="none" stroke="#444" stroke-width="0.3" stroke-opacity="0.6"/><circle cx="17" cy="9.4" r="1.4" fill="none" stroke="#1a1a1a" stroke-width="0.6"/><path d="M8 7.5L11.3 7.5M12.4 7.5L13 7.5" fill="none" stroke="#1a1a1a" stroke-width="0.6" stroke-opacity="0.8"/><path d="M7.6 15.2L9.7 15.2M10.5 15.2L13 15.2M7.6 17.6L10.6 17.6M11.7 17.6L13 17.6M7.6 20L10 20M11.1 20L13 20M7.6 22.3L10.5 22.3M11.1 22.3L13 22.3M7.6 24.7L9.3 24.7M10 24.7L11.6 24.7M12.6 24.7L13 24.7M7.6 27.1L10.4 27.1M10.9 27.1L13 27.1M7.6 29.5L10.6 29.5M11.3 29.5L13 29.5M7.6 31.9L10.2 31.9M11 31.9L13 31.9M7.6 34.3L11.5 34.3M12.4 34.3L13 34.3M7.6 36.7L11.2 36.7M12.4 36.7L13 36.7M7.6 39L10.2 39M11 39L13 39M7.6 41.4L9.3 41.4M10 41.4L13 41.4M7.6 43.8L10.7 43.8M11.5 43.8L13 43.8" fill="none" stroke="#1a1a1a" stroke-width="0.85" stroke-opacity="0.82"/><path d="M14.2 15.2L16.9 15.2M17.9 15.2L19.8 15.2M14.2 17.6L15.9 17.6M14.2 20L15.8 20M16.9 20L19.4 20M14.2 22.3L16.2 22.3M16.8 22.3L19.8 22.3M14.2 24.7L18 24.7M14.2 27.1L16.8 27.1M17.6 27.1L19.6 27.1M14.2 29.5L17.4 29.5M18.5 29.5L19.8 29.5M14.2 31.9L15.6 31.9M16.7 31.9L19.7 31.9M14.2 34.3L15.6 34.3M16.8 34.3L17.8 34.3M18.8 34.3L19.8 34.3M14.2 36.7L17.2 36.7M18.3 36.7L19.8 36.7M14.2 39L17 39M17.7 39L19.3 39M14.2 41.4L15.6 41.4M16.7 41.4L19.3 41.4M14.2 43.8L17.3 43.8M18.4 43.8L19.8 43.8" fill="none" stroke="#1a1a1a" stroke-width="0.85" stroke-opacity="0.82"/><path d="M21 15.2L24.4 15.2M25 15.2L26.6 15.2M25.1 17.6L26.6 17.6M21 20L23.9 20M24.4 20L26.6 20M21 22.3L23.7 22.3M24.4 22.3L26.2 22.3M21 24.7L24.3 24.7M24.8 24.7L26.6 24.7M21 27.1L24.1 27.1M25.3 27.1L26.6 27.1M21 29.5L23.2 29.5M24.1 29.5L25.6 29.5M26.5 29.5L26.6 29.5M21 31.9L24.3 31.9M24.8 31.9L26.6 31.9M21 34.3L24.3 34.3M25.2 34.3L26.6 34.3M21 36.7L22.3 36.7M22.7 36.7L26 36.7M21 39L23.8 39M24.7 39L26.2 39M21 41.4L22.2 41.4M22.6 41.4L25.1 41.4M25.8 41.4L26.6 41.4M21 43.8L23.4 43.8M24.1 43.8L26.6 43.8" fill="none" stroke="#1a1a1a" stroke-width="0.85" stroke-opacity="0.82"/><path d="M27.6 15.2L30.4 15.2M30.9 15.2L33.2 15.2M27.6 17.6L30.5 17.6M31.4 17.6L33.2 17.6M29.7 22.3L33.2 22.3M27.6 24.7L28.8 24.7M29.7 24.7L33.2 24.7M27.6 27.1L29.8 27.1M30.7 27.1L32.8 27.1M27.6 29.5L29.9 29.5M30.7 29.5L33.2 29.5M27.6 31.9L31.6 31.9M32 31.9L33.2 31.9M27.6 34.3L29.4 34.3M30.5 34.3L33.2 34.3M27.6 36.7L29.1 36.7M29.5 36.7L33.2 36.7M27.6 39L29.4 39M30.2 39L32.7 39M27.6 41.4L30.6 41.4M31.7 41.4L33.2 41.4M30.5 43.8L31.8 43.8M32.9 43.8L33.2 43.8" fill="none" stroke="#1a1a1a" stroke-width="0.85" stroke-opacity="0.82"/><path d="M35 15.2L37.9 15.2M38.9 15.2L40.6 15.2M35 17.6L37.9 17.6M39 17.6L40.6 17.6M35 20L36.3 20M37 20L38.8 20M39.7 20L40.6 20M35 22.3L37.5 22.3M38.1 22.3L39.3 22.3M35 24.7L38.4 24.7M39.5 24.7L40.6 24.7M35 27.1L38.2 27.1M35 29.5L38.6 29.5M39.3 29.5L40.6 29.5M35 31.9L37.2 31.9M37.6 31.9L40.1 31.9M40.5 31.9L40.6 31.9M35 34.3L36.7 34.3M37.7 34.3L40.4 34.3M35 36.7L38.5 36.7M39.5 36.7L40.6 36.7M35 39L36.1 39M36.7 39L39.5 39M35 41.4L37.4 41.4M37.8 41.4L40.6 41.4M35 43.8L37.5 43.8M38.2 43.8L40.6 43.8" fill="none" stroke="#1a1a1a" stroke-width="0.85" stroke-opacity="0.82"/><path d="M42 17.2L44 17.2M44.7 17.2L47.8 17.2M48.7 17.2L50 17.2M42 19.5L45.3 19.5M46.1 19.5L49.5 19.5M42 21.9L43.7 21.9M44.6 21.9L48.1 21.9M48.8 21.9L50 21.9M42 24.3L44.1 24.3M45.2 24.3L47.1 24.3M48.3 24.3L50 24.3M45.8 26.6L48.1 26.6M48.6 26.6L50 26.6M42 29L45.3 29M46.3 29L47.8 29M49 29L50 29M42 31.4L45.6 31.4M46 31.4L49.6 31.4M42 33.7L43.8 33.7M44.5 33.7L46.9 33.7M48 33.7L50 33.7M42 36.1L45.9 36.1M48.6 36.1L50 36.1M42 38.5L45.7 38.5M46.2 38.5L47.5 38.5M48.2 38.5L50 38.5M42 40.8L44.3 40.8M44.8 40.8L47.9 40.8M48.8 40.8L50 40.8" fill="none" stroke="#555" stroke-width="0.5" stroke-opacity="0.5"/><path d="M50 6.5L51.1 6.5M52.1 6.5L53.5 6.5M54.1 6.5L55.2 6.5M55.7 6.5L56.8 6.5M57.5 6.5L58 6.5" fill="none" stroke="#1a1a1a" stroke-width="0.7" stroke-opacity="0.8"/><path d="M64 6.1L65.2 6.1M65.6 6.1L67.5 6.1M68.4 6.1L70.8 6.1M71.6 6.1L74 6.1" fill="none" stroke="#1a1a1a" stroke-width="0.7" stroke-opacity="0.8"/><rect x="51" y="8" width="10" height="9.6" fill="#000" opacity="0.13"/><path d="M58.6 14.2L61 14.2M57.8 17.3L57.8 17.6M51.4 13.1L53.9 13.1M57.1 16.2L57.1 17.6M54.3 9.2L54.3 14.1M58.1 8.4L61 8.4M55.7 16.3L58.9 16.3M60 16.3L61 16.3M53.6 9.7L61 9.7M52.3 10.1L59.9 10.1M60.8 11L61 11M53.9 16.3L61 16.3M54.5 8.6L57 8.6M56.2 13.5L60 13.5M56.6 11.3L56.6 15.1M56.9 8.1L56.9 17.3M54.9 17.4L54.9 17.6M52.7 16.3L52.7 17.6M54 14.3L61 14.3M52.9 13.3L54.8 13.3M51.2 11.3L57.6 11.3M57 8.3L58.7 8.3M52.6 8.1L52.6 9.5M60.6 12.8L61 12.8M57.8 15.6L60.4 15.6M51.4 13.2L58.7 13.2M58.9 10.2L61 10.2M57 8.7L57 13.4M53.3 13.3L54.3 13.3M60.4 14.2L60.4 17.6M57.9 12.9L57.9 16.9M56.6 12.7L60.7 12.7M52.9 13.8L52.9 17.6M55.5 11.7L61 11.7M60.6 14.1L61 14.1M59.4 17.1L59.4 17.6M59.1 11.5L61 11.5M51.5 13.7L51.5 17.6M54.4 17.4L61 17.4M53.3 17L53.3 17.6M52.9 9.9L52.9 12.4M55.4 14.7L55.4 17.6" fill="none" stroke="#1a1a1a" stroke-width="0.55" stroke-opacity="0.9"/><rect x="52" y="9.6" width="7" height="3" fill="#111" opacity="0.7"/><path d="M52 19.2L53.3 19.2M54.2 19.2L55.8 19.2M56.7 19.2L60.2 19.2M52 20.2L55.3 20.2M55.8 20.2L59.5 20.2M60.3 20.2L61 20.2" fill="none" stroke="#1a1a1a" stroke-width="0.6" stroke-opacity="0.7"/><rect x="69.6" y="9.6" width="7" height="12" fill="#000" opacity="0.13"/><path d="M72.4 10.6L76.6 10.6M73 13.6L76.6 13.6M76.4 10.5L76.4 11.7M76.5 19.9L76.6 19.9M71 13.1L73.4 13.1M71.7 14.1L71.7 17.1M75.4 11.2L75.4 15.5M69.8 20.9L74.4 20.9M72.4 20.4L76.6 20.4M76.3 11.8L76.3 15.7M75.5 18.9L76.6 18.9M74.3 15.7L74.3 21.6M72.4 19.3L75.6 19.3M74.6 20.2L76.6 20.2M70.1 20.9L74.4 20.9M74.5 20.9L74.5 21.6M72.8 17.9L76.6 17.9M76.4 14L76.4 20.7M74.8 14.4L76.6 14.4M75.2 18.8L76.6 18.8M74.9 11.5L76.6 11.5M70.8 14L76.6 14M72.9 21.4L72.9 21.6M72.4 20.8L72.4 21.6M71 20.8L71 21.6M74.3 17L74.3 20.4" fill="none" stroke="#1a1a1a" stroke-width="0.55" stroke-opacity="0.8"/><path d="M68 9.6L68 21.6L77 21.6" fill="none" stroke="#1a1a1a" stroke-width="0.8"/><path d="M78 11.7L80.3 11.7M81.1 11.7L83.6 11.7M78 13L81.9 13M82.4 13L84 13M78 14.3L81.1 14.3" fill="none" stroke="#444" stroke-width="0.5" stroke-opacity="0.6"/><rect x="67" y="25" width="6.6" height="6" fill="#000" opacity="0.13"/><path d="M67.1 26.8L67.1 31M72.9 30.8L73.6 30.8M70.5 28.9L70.5 30.8M68.8 29.1L73.3 29.1M69.8 29.1L73.6 29.1M73.2 27.1L73.6 27.1M73.3 29.2L73.6 29.2M68.2 25.1L68.2 29.1M73.5 25.6L73.6 25.6M68 29.5L68 31M69.5 26L69.5 31M67.8 25.3L69.2 25.3M71.3 29.2L73.4 29.2M70.5 30.9L73.6 30.9M67.7 25.2L71.7 25.2M71.9 27L71.9 31" fill="none" stroke="#1a1a1a" stroke-width="0.55" stroke-opacity="0.8"/><path d="M66 24.6L66 31.4L74 31.4" fill="none" stroke="#1a1a1a" stroke-width="0.7"/><path d="M66 23.1L68.5 23.1M69.6 23.1L71.3 23.1M72.2 23.1L74.2 23.1" fill="none" stroke="#1a1a1a" stroke-width="0.5" stroke-opacity="0.7"/><rect x="69.6" y="35" width="7.6" height="10" fill="#000" opacity="0.13"/><path d="M71.7 42.8L71.7 44M71.5 40.7L77.2 40.7M74.8 44.7L77.2 44.7M71 45L71 45M73.8 36.5L77.2 36.5M74.3 37.3L77.2 37.3M71.5 43.4L71.5 45M76.4 42.2L76.4 45M70.8 42.3L70.8 45M74.7 43.2L74.7 45M76.1 35.3L77.2 35.3M74.4 38.6L77.2 38.6M73.7 41.5L77.2 41.5M69.9 40.3L76.2 40.3M75 36.5L77.2 36.5M70.9 44.6L75.5 44.6M73.1 36.7L73.1 42.7M73 38.6L73 40.1M71.4 39.7L77.2 39.7M72.8 43.6L72.8 45M70.4 38.3L72.5 38.3M75.9 39.9L75.9 45M72.9 39.7L77.2 39.7M71.2 36.9L71.2 42.4" fill="none" stroke="#1a1a1a" stroke-width="0.55" stroke-opacity="0.8"/><path d="M69 35L69 45L78 45L78 38" fill="none" stroke="#1a1a1a" stroke-width="0.9"/><path d="M79 36.8L81.7 36.8M82.8 36.8L84 36.8M79 38.2L81.1 38.2M82.2 38.2L84 38.2" fill="none" stroke="#444" stroke-width="0.5" stroke-opacity="0.6"/></g><rect x="0.5" y="0.5" width="89" height="63" fill="none" stroke="#8b9fd8" stroke-width="1"/></svg>
<div class="cell" style="left:799.9px;top:305.0px;width:92.0px;height:31.5px"></div>
<div class="cb" style="left:802.5px;top:311.6px"></div>
<div class="num" style="left:814.9px;top:311.3px">17</div>
<div class="ttl" style="left:802.1px;top:324.0px;letter-spacing:-0.1px">軸組図[2]</div>
<svg class="th wd" style="left:800.3px;top:338.6px" width="91.2" height="64.8" viewBox="0 0 90 64" preserveAspectRatio="none"><rect x="0" y="0" width="90" height="64" fill="#fff"/><g opacity="0.55"><rect x="0" y="0" width="90" height="64" fill="#fff"/><rect x="0.5" y="0.5" width="89" height="63" fill="none" stroke="#8b9fd8" stroke-width="1"/><rect x="2.6" y="2.2" width="85" height="59.8" fill="none" stroke="#666" stroke-width="0.4"/><path d="M3 1.5L5.2 1.5M6.1 1.5L8.4 1.5M8.8 1.5L10.6 1.5M11.1 1.5L13.8 1.5M14.8 1.5L16.2 1.5M16.7 1.5L18 1.5" fill="none" stroke="#555" stroke-width="0.5" stroke-opacity="0.7"/><path d="M8 18.4L88 18.4" stroke="#777" stroke-width="0.25" stroke-opacity="0.55"/><path d="M8 23L88 23" stroke="#777" stroke-width="0.25" stroke-opacity="0.55"/><path d="M8 27.6L88 27.6" stroke="#777" stroke-width="0.25" stroke-opacity="0.55"/><path d="M8 32.4L88 32.4" stroke="#777" stroke-width="0.25" stroke-opacity="0.55"/><path d="M8 36.4L88 36.4" stroke="#777" stroke-width="0.25" stroke-opacity="0.55"/><path d="M8 44L88 44" stroke="#777" stroke-width="0.25" stroke-opacity="0.55"/><path d="M8 47L88 47" stroke="#777" stroke-width="0.25" stroke-opacity="0.55"/><path d="M14.7 11L14.7 50M15.3 11L15.3 50" fill="none" stroke="#1a1a1a" stroke-width="0.4" stroke-opacity="0.85"/><path d="M15 8L15 54" stroke="#555" stroke-width="0.25" stroke-opacity="0.6"/><path d="M21 11L21 50M21.8 11L21.8 50" fill="none" stroke="#1a1a1a" stroke-width="0.4" stroke-opacity="0.85"/><path d="M21.4 8L21.4 54" stroke="#555" stroke-width="0.25" stroke-opacity="0.6"/><path d="M15 18.4L21.4 18.4" fill="none" stroke="#1a1a1a" stroke-width="0.8" stroke-opacity="0.9"/><rect x="14.1" y="17.4" width="1.8" height="2" fill="#111" opacity="0.85"/><rect x="20.5" y="17.4" width="1.8" height="2" fill="#111" opacity="0.85"/><path d="M15 23L21.4 23" fill="none" stroke="#1a1a1a" stroke-width="0.8" stroke-opacity="0.9"/><rect x="14.1" y="22" width="1.8" height="2" fill="#111" opacity="0.85"/><rect x="20.5" y="22" width="1.8" height="2" fill="#111" opacity="0.85"/><path d="M15 27.6L21.4 27.6" fill="none" stroke="#1a1a1a" stroke-width="0.8" stroke-opacity="0.9"/><rect x="14.1" y="26.6" width="1.8" height="2" fill="#111" opacity="0.85"/><rect x="20.5" y="26.6" width="1.8" height="2" fill="#111" opacity="0.85"/><path d="M15 32.4L21.4 32.4" fill="none" stroke="#1a1a1a" stroke-width="0.8" stroke-opacity="0.9"/><rect x="14.1" y="31.4" width="1.8" height="2" fill="#111" opacity="0.85"/><rect x="20.5" y="31.4" width="1.8" height="2" fill="#111" opacity="0.85"/><path d="M15 36.4L21.4 36.4" fill="none" stroke="#1a1a1a" stroke-width="0.8" stroke-opacity="0.9"/><rect x="14.1" y="35.4" width="1.8" height="2" fill="#111" opacity="0.85"/><rect x="20.5" y="35.4" width="1.8" height="2" fill="#111" opacity="0.85"/><path d="M13.6 50L22.8 50M13.6 52.6L22.8 52.6" fill="none" stroke="#444" stroke-width="0.4" stroke-opacity="0.7"/><rect x="13.7" y="50" width="2.6" height="2.6" fill="none" stroke="#444" stroke-width="0.4"/><rect x="20.1" y="50" width="2.6" height="2.6" fill="none" stroke="#444" stroke-width="0.4"/><path d="M38.6 11L38.6 50M39.4 11L39.4 50" fill="none" stroke="#1a1a1a" stroke-width="0.4" stroke-opacity="0.85"/><path d="M39 8L39 54" stroke="#555" stroke-width="0.25" stroke-opacity="0.6"/><path d="M44.2 11L44.2 50M45 11L45 50" fill="none" stroke="#1a1a1a" stroke-width="0.4" stroke-opacity="0.85"/><path d="M44.6 8L44.6 54" stroke="#555" stroke-width="0.25" stroke-opacity="0.6"/><path d="M50.6 11L50.6 50M51.4 11L51.4 50" fill="none" stroke="#1a1a1a" stroke-width="0.4" stroke-opacity="0.85"/><path d="M51 8L51 54" stroke="#555" stroke-width="0.25" stroke-opacity="0.6"/><path d="M39 18.4L51 18.4" fill="none" stroke="#1a1a1a" stroke-width="0.8" stroke-opacity="0.9"/><rect x="38.1" y="17.4" width="1.8" height="2" fill="#111" opacity="0.85"/><rect x="43.7" y="17.4" width="1.8" height="2" fill="#111" opacity="0.85"/><rect x="50.1" y="17.4" width="1.8" height="2" fill="#111" opacity="0.85"/><path d="M39 23L51 23" fill="none" stroke="#1a1a1a" stroke-width="0.8" stroke-opacity="0.9"/><rect x="38.1" y="22" width="1.8" height="2" fill="#111" opacity="0.85"/><rect x="43.7" y="22" width="1.8" height="2" fill="#111" opacity="0.85"/><rect x="50.1" y="22" width="1.8" height="2" fill="#111" opacity="0.85"/><path d="M39 27.6L51 27.6" fill="none" stroke="#1a1a1a" stroke-width="0.8" stroke-opacity="0.9"/><rect x="38.1" y="26.6" width="1.8" height="2" fill="#111" opacity="0.85"/><rect x="43.7" y="26.6" width="1.8" height="2" fill="#111" opacity="0.85"/><rect x="50.1" y="26.6" width="1.8" height="2" fill="#111" opacity="0.85"/><path d="M39 32.4L51 32.4" fill="none" stroke="#1a1a1a" stroke-width="0.8" stroke-opacity="0.9"/><rect x="38.1" y="31.4" width="1.8" height="2" fill="#111" opacity="0.85"/><rect x="43.7" y="31.4" width="1.8" height="2" fill="#111" opacity="0.85"/><rect x="50.1" y="31.4" width="1.8" height="2" fill="#111" opacity="0.85"/><path d="M39 36.4L51 36.4" fill="none" stroke="#1a1a1a" stroke-width="0.8" stroke-opacity="0.9"/><rect x="38.1" y="35.4" width="1.8" height="2" fill="#111" opacity="0.85"/><rect x="43.7" y="35.4" width="1.8" height="2" fill="#111" opacity="0.85"/><rect x="50.1" y="35.4" width="1.8" height="2" fill="#111" opacity="0.85"/><path d="M37.6 50L52.4 50M37.6 52.6L52.4 52.6" fill="none" stroke="#444" stroke-width="0.4" stroke-opacity="0.7"/><rect x="37.7" y="50" width="2.6" height="2.6" fill="none" stroke="#444" stroke-width="0.4"/><rect x="43.3" y="50" width="2.6" height="2.6" fill="none" stroke="#444" stroke-width="0.4"/><rect x="49.7" y="50" width="2.6" height="2.6" fill="none" stroke="#444" stroke-width="0.4"/><path d="M66.2 11L66.2 50M66.9 11L66.9 50" fill="none" stroke="#1a1a1a" stroke-width="0.4" stroke-opacity="0.85"/><path d="M66.6 8L66.6 54" stroke="#555" stroke-width="0.25" stroke-opacity="0.6"/><path d="M72.9 11L72.9 50M73.5 11L73.5 50" fill="none" stroke="#1a1a1a" stroke-width="0.4" stroke-opacity="0.85"/><path d="M73.2 8L73.2 54" stroke="#555" stroke-width="0.25" stroke-opacity="0.6"/><path d="M79.2 11L79.2 50M79.9 11L79.9 50" fill="none" stroke="#1a1a1a" stroke-width="0.4" stroke-opacity="0.85"/><path d="M79.6 8L79.6 54" stroke="#555" stroke-width="0.25" stroke-opacity="0.6"/><path d="M66.6 18.4L79.6 18.4" fill="none" stroke="#1a1a1a" stroke-width="0.8" stroke-opacity="0.9"/><rect x="65.7" y="17.4" width="1.8" height="2" fill="#111" opacity="0.85"/><rect x="72.3" y="17.4" width="1.8" height="2" fill="#111" opacity="0.85"/><rect x="78.7" y="17.4" width="1.8" height="2" fill="#111" opacity="0.85"/><path d="M66.6 23L79.6 23" fill="none" stroke="#1a1a1a" stroke-width="0.8" stroke-opacity="0.9"/><rect x="65.7" y="22" width="1.8" height="2" fill="#111" opacity="0.85"/><rect x="72.3" y="22" width="1.8" height="2" fill="#111" opacity="0.85"/><rect x="78.7" y="22" width="1.8" height="2" fill="#111" opacity="0.85"/><path d="M66.6 27.6L79.6 27.6" fill="none" stroke="#1a1a1a" stroke-width="0.8" stroke-opacity="0.9"/><rect x="65.7" y="26.6" width="1.8" height="2" fill="#111" opacity="0.85"/><rect x="72.3" y="26.6" width="1.8" height="2" fill="#111" opacity="0.85"/><rect x="78.7" y="26.6" width="1.8" height="2" fill="#111" opacity="0.85"/><path d="M66.6 32.4L79.6 32.4" fill="none" stroke="#1a1a1a" stroke-width="0.8" stroke-opacity="0.9"/><rect x="65.7" y="31.4" width="1.8" height="2" fill="#111" opacity="0.85"/><rect x="72.3" y="31.4" width="1.8" height="2" fill="#111" opacity="0.85"/><rect x="78.7" y="31.4" width="1.8" height="2" fill="#111" opacity="0.85"/><path d="M66.6 36.4L79.6 36.4" fill="none" stroke="#1a1a1a" stroke-width="0.8" stroke-opacity="0.9"/><rect x="65.7" y="35.4" width="1.8" height="2" fill="#111" opacity="0.85"/><rect x="72.3" y="35.4" width="1.8" height="2" fill="#111" opacity="0.85"/><rect x="78.7" y="35.4" width="1.8" height="2" fill="#111" opacity="0.85"/><path d="M65.2 50L81 50M65.2 52.6L81 52.6" fill="none" stroke="#444" stroke-width="0.4" stroke-opacity="0.7"/><rect x="65.3" y="50" width="2.6" height="2.6" fill="none" stroke="#444" stroke-width="0.4"/><rect x="71.9" y="50" width="2.6" height="2.6" fill="none" stroke="#444" stroke-width="0.4"/><rect x="78.3" y="50" width="2.6" height="2.6" fill="none" stroke="#444" stroke-width="0.4"/><path d="M15 18.4 Q21 15.4 24.4 19.4" fill="none" stroke="#222" stroke-width=".6"/><path d="M44.6 16 Q51 14 54 18.6" fill="none" stroke="#222" stroke-width=".6"/><path d="M73.2 16 Q79.6 14 82.6 18.6" fill="none" stroke="#222" stroke-width=".6"/><path d="M6.8 15.9L7.9 15.9M8.5 15.9L8.6 15.9M3.6 19.7L6.2 19.7M6.7 19.7L7.9 19.7M8.4 19.7L8.6 19.7M3.6 23.4L4.8 23.4M5.4 23.4L8 23.4M3.6 27.2L6.4 27.2M7.3 27.2L8.6 27.2M3.6 31L7.4 31M8.3 31L8.6 31M3.6 34.8L4.8 34.8M3.6 38.6L6.1 38.6M6.8 38.6L8.6 38.6M3.6 42.3L6.4 42.3M7 42.3L8.6 42.3M3.6 46.1L4.7 46.1M5.6 46.1L7.4 46.1" fill="none" stroke="#333" stroke-width="0.5" stroke-opacity="0.7"/><path d="M15 54.4L21.4 54.4M39 54.4L51 54.4M66.6 54.4L79.6 54.4" fill="none" stroke="#333" stroke-width="0.4" stroke-opacity="0.7"/><path d="M2.6 57.6L87.6 57.6" stroke="#1a1a1a" stroke-width="0.5"/><path d="M3 58.9L4.5 58.9M4.9 58.9L7.1 58.9M7.8 58.9L9.8 58.9M10.4 58.9L12.4 58.9M17.5 58.9L20.2 58.9M21.2 58.9L24.4 58.9M25 58.9L27.4 58.9M28 58.9L30.1 58.9M33.6 58.9L36.7 58.9M37.8 58.9L39.6 58.9M40.1 58.9L41.5 58.9M44.3 58.9L47.3 58.9M48.4 58.9L51.2 58.9M52.4 58.9L55.1 58.9M55.7 58.9L59.3 58.9M60.1 58.9L63 58.9M63.6 58.9L64.8 58.9M65.6 58.9L69.2 58.9M69.9 58.9L73 58.9M73.7 58.9L76.9 58.9M77.4 58.9L78.7 58.9M81.4 58.9L83.7 58.9M84.7 58.9L86.6 58.9M3 60.7L4.8 60.7M5.5 60.7L8.1 60.7M8.8 60.7L11.9 60.7M12.5 60.7L14.6 60.7M15.7 60.7L18.9 60.7M19.8 60.7L21.5 60.7M22.1 60.7L23.9 60.7M28.4 60.7L30.3 60.7M30.9 60.7L34.9 60.7M35.5 60.7L36.9 60.7M37.7 60.7L41.1 60.7M41.9 60.7L45.9 60.7M46.4 60.7L49.3 60.7M50.3 60.7L51.5 60.7M56.3 60.7L58 60.7M58.7 60.7L61.1 60.7M61.8 60.7L63 60.7M68.8 60.7L70.7 60.7M71.3 60.7L74.9 60.7M79.9 60.7L83.7 60.7M84.2 60.7L86.2 60.7M86.9 60.7L87 60.7" fill="none" stroke="#333" stroke-width="0.7" stroke-opacity="0.7"/></g><rect x="0.5" y="0.5" width="89" height="63" fill="none" stroke="#8b9fd8" stroke-width="1"/></svg>
<div class="cell" style="left:894.2px;top:305.0px;width:92.0px;height:31.5px"></div>
<div class="cb" style="left:896.8px;top:311.6px"></div>
<div class="num" style="left:909.2px;top:311.3px">18</div>
<div class="ttl" style="left:896.4px;top:324.0px;letter-spacing:-0.1px">軸組図[1]</div>
<svg class="th wd" style="left:894.6px;top:338.6px" width="91.2" height="64.8" viewBox="0 0 90 64" preserveAspectRatio="none"><rect x="0" y="0" width="90" height="64" fill="#fff"/><g opacity="0.6"><rect x="0" y="0" width="90" height="64" fill="#fff"/><rect x="0.5" y="0.5" width="89" height="63" fill="none" stroke="#8b9fd8" stroke-width="1"/><rect x="2.2" y="2" width="86" height="60" fill="none" stroke="#666" stroke-width="0.4"/><path d="M2.6 1.4L5.8 1.4M6.4 1.4L8.3 1.4M9.1 1.4L12.2 1.4M13.3 1.4L15.5 1.4M16 1.4L18.8 1.4M19.4 1.4L19.6 1.4" fill="none" stroke="#555" stroke-width="0.5" stroke-opacity="0.7"/><path d="M7 19.4L88 19.4" stroke="#777" stroke-width="0.25" stroke-opacity="0.55"/><path d="M7 24L88 24" stroke="#777" stroke-width="0.25" stroke-opacity="0.55"/><path d="M7 30.4L88 30.4" stroke="#777" stroke-width="0.25" stroke-opacity="0.55"/><path d="M7 36.2L88 36.2" stroke="#777" stroke-width="0.25" stroke-opacity="0.55"/><path d="M7 43.6L88 43.6" stroke="#777" stroke-width="0.25" stroke-opacity="0.55"/><path d="M7 47.4L88 47.4" stroke="#777" stroke-width="0.25" stroke-opacity="0.55"/><path d="M14.5 11L14.5 51.4M15.2 11L15.2 51.4" fill="none" stroke="#1a1a1a" stroke-width="0.4" stroke-opacity="0.85"/><path d="M14.8 8L14.8 55.4" stroke="#555" stroke-width="0.25" stroke-opacity="0.6"/><path d="M23.6 11L23.6 51.4M24.4 11L24.4 51.4" fill="none" stroke="#1a1a1a" stroke-width="0.4" stroke-opacity="0.85"/><path d="M24 8L24 55.4" stroke="#555" stroke-width="0.25" stroke-opacity="0.6"/><path d="M14.8 19.4L24 19.4" fill="none" stroke="#1a1a1a" stroke-width="0.8" stroke-opacity="0.9"/><rect x="13.9" y="18.4" width="1.8" height="2" fill="#111" opacity="0.85"/><rect x="23.1" y="18.4" width="1.8" height="2" fill="#111" opacity="0.85"/><path d="M14.8 24L24 24" fill="none" stroke="#1a1a1a" stroke-width="0.8" stroke-opacity="0.9"/><rect x="13.9" y="23" width="1.8" height="2" fill="#111" opacity="0.85"/><rect x="23.1" y="23" width="1.8" height="2" fill="#111" opacity="0.85"/><path d="M14.8 30.4L24 30.4" fill="none" stroke="#1a1a1a" stroke-width="0.8" stroke-opacity="0.9"/><rect x="13.9" y="29.4" width="1.8" height="2" fill="#111" opacity="0.85"/><rect x="23.1" y="29.4" width="1.8" height="2" fill="#111" opacity="0.85"/><path d="M14.8 36.2L24 36.2" fill="none" stroke="#1a1a1a" stroke-width="0.8" stroke-opacity="0.9"/><rect x="13.9" y="35.2" width="1.8" height="2" fill="#111" opacity="0.85"/><rect x="23.1" y="35.2" width="1.8" height="2" fill="#111" opacity="0.85"/><path d="M13.4 51.4L25.4 51.4M13.4 54L25.4 54" fill="none" stroke="#444" stroke-width="0.4" stroke-opacity="0.7"/><rect x="13.5" y="51.4" width="2.6" height="2.6" fill="none" stroke="#444" stroke-width="0.4"/><rect x="22.7" y="51.4" width="2.6" height="2.6" fill="none" stroke="#444" stroke-width="0.4"/><path d="M34 11L34 51.4M34.8 11L34.8 51.4" fill="none" stroke="#1a1a1a" stroke-width="0.4" stroke-opacity="0.85"/><path d="M34.4 8L34.4 55.4" stroke="#555" stroke-width="0.25" stroke-opacity="0.6"/><path d="M43.2 11L43.2 51.4M44 11L44 51.4" fill="none" stroke="#1a1a1a" stroke-width="0.4" stroke-opacity="0.85"/><path d="M43.6 8L43.6 55.4" stroke="#555" stroke-width="0.25" stroke-opacity="0.6"/><path d="M51.6 11L51.6 51.4M52.4 11L52.4 51.4" fill="none" stroke="#1a1a1a" stroke-width="0.4" stroke-opacity="0.85"/><path d="M52 8L52 55.4" stroke="#555" stroke-width="0.25" stroke-opacity="0.6"/><path d="M34.4 19.4L52 19.4" fill="none" stroke="#1a1a1a" stroke-width="0.8" stroke-opacity="0.9"/><rect x="33.5" y="18.4" width="1.8" height="2" fill="#111" opacity="0.85"/><rect x="42.7" y="18.4" width="1.8" height="2" fill="#111" opacity="0.85"/><rect x="51.1" y="18.4" width="1.8" height="2" fill="#111" opacity="0.85"/><path d="M34.4 24L52 24" fill="none" stroke="#1a1a1a" stroke-width="0.8" stroke-opacity="0.9"/><rect x="33.5" y="23" width="1.8" height="2" fill="#111" opacity="0.85"/><rect x="42.7" y="23" width="1.8" height="2" fill="#111" opacity="0.85"/><rect x="51.1" y="23" width="1.8" height="2" fill="#111" opacity="0.85"/><path d="M34.4 30.4L52 30.4" fill="none" stroke="#1a1a1a" stroke-width="0.8" stroke-opacity="0.9"/><rect x="33.5" y="29.4" width="1.8" height="2" fill="#111" opacity="0.85"/><rect x="42.7" y="29.4" width="1.8" height="2" fill="#111" opacity="0.85"/><rect x="51.1" y="29.4" width="1.8" height="2" fill="#111" opacity="0.85"/><path d="M34.4 36.2L52 36.2" fill="none" stroke="#1a1a1a" stroke-width="0.8" stroke-opacity="0.9"/><rect x="33.5" y="35.2" width="1.8" height="2" fill="#111" opacity="0.85"/><rect x="42.7" y="35.2" width="1.8" height="2" fill="#111" opacity="0.85"/><rect x="51.1" y="35.2" width="1.8" height="2" fill="#111" opacity="0.85"/><path d="M33 51.4L53.4 51.4M33 54L53.4 54" fill="none" stroke="#444" stroke-width="0.4" stroke-opacity="0.7"/><rect x="33.1" y="51.4" width="2.6" height="2.6" fill="none" stroke="#444" stroke-width="0.4"/><rect x="42.3" y="51.4" width="2.6" height="2.6" fill="none" stroke="#444" stroke-width="0.4"/><rect x="50.7" y="51.4" width="2.6" height="2.6" fill="none" stroke="#444" stroke-width="0.4"/><path d="M61.9 11L61.9 51.4M62.6 11L62.6 51.4" fill="none" stroke="#1a1a1a" stroke-width="0.4" stroke-opacity="0.85"/><path d="M62.2 8L62.2 55.4" stroke="#555" stroke-width="0.25" stroke-opacity="0.6"/><path d="M71.1 11L71.1 51.4M71.8 11L71.8 51.4" fill="none" stroke="#1a1a1a" stroke-width="0.4" stroke-opacity="0.85"/><path d="M71.4 8L71.4 55.4" stroke="#555" stroke-width="0.25" stroke-opacity="0.6"/><path d="M80.2 11L80.2 51.4M80.9 11L80.9 51.4" fill="none" stroke="#1a1a1a" stroke-width="0.4" stroke-opacity="0.85"/><path d="M80.6 8L80.6 55.4" stroke="#555" stroke-width="0.25" stroke-opacity="0.6"/><path d="M62.2 19.4L80.6 19.4" fill="none" stroke="#1a1a1a" stroke-width="0.8" stroke-opacity="0.9"/><rect x="61.3" y="18.4" width="1.8" height="2" fill="#111" opacity="0.85"/><rect x="70.5" y="18.4" width="1.8" height="2" fill="#111" opacity="0.85"/><rect x="79.7" y="18.4" width="1.8" height="2" fill="#111" opacity="0.85"/><path d="M62.2 24L80.6 24" fill="none" stroke="#1a1a1a" stroke-width="0.8" stroke-opacity="0.9"/><rect x="61.3" y="23" width="1.8" height="2" fill="#111" opacity="0.85"/><rect x="70.5" y="23" width="1.8" height="2" fill="#111" opacity="0.85"/><rect x="79.7" y="23" width="1.8" height="2" fill="#111" opacity="0.85"/><path d="M62.2 30.4L80.6 30.4" fill="none" stroke="#1a1a1a" stroke-width="0.8" stroke-opacity="0.9"/><rect x="61.3" y="29.4" width="1.8" height="2" fill="#111" opacity="0.85"/><rect x="70.5" y="29.4" width="1.8" height="2" fill="#111" opacity="0.85"/><rect x="79.7" y="29.4" width="1.8" height="2" fill="#111" opacity="0.85"/><path d="M62.2 36.2L80.6 36.2" fill="none" stroke="#1a1a1a" stroke-width="0.8" stroke-opacity="0.9"/><rect x="61.3" y="35.2" width="1.8" height="2" fill="#111" opacity="0.85"/><rect x="70.5" y="35.2" width="1.8" height="2" fill="#111" opacity="0.85"/><rect x="79.7" y="35.2" width="1.8" height="2" fill="#111" opacity="0.85"/><path d="M60.8 51.4L82 51.4M60.8 54L82 54" fill="none" stroke="#444" stroke-width="0.4" stroke-opacity="0.7"/><rect x="60.9" y="51.4" width="2.6" height="2.6" fill="none" stroke="#444" stroke-width="0.4"/><rect x="70.1" y="51.4" width="2.6" height="2.6" fill="none" stroke="#444" stroke-width="0.4"/><rect x="79.3" y="51.4" width="2.6" height="2.6" fill="none" stroke="#444" stroke-width="0.4"/><path d="M34.4 15L52 15M34.4 16L52 16M62.2 18.4L80.6 18.4" fill="none" stroke="#1a1a1a" stroke-width="0.6" stroke-opacity="0.9"/><path d="M7 30.6L9.6 28.6L12 30.4" fill="none" stroke="#1a1a1a" stroke-width="0.5"/><path d="M3.2 17.9L6.5 17.9M7.2 17.9L8.2 17.9M3.2 21.6L5.5 21.6M5.9 21.6L8.2 21.6M3.2 25.4L5.7 25.4M6.3 25.4L8.2 25.4M7.3 29.1L8.2 29.1M3.2 32.9L6.2 32.9M6.7 32.9L8.2 32.9M3.2 36.6L6.6 36.6M7.5 36.6L8.2 36.6M3.2 40.4L6.9 40.4M8 40.4L8.2 40.4M3.2 44.1L5.8 44.1M6.4 44.1L8.2 44.1" fill="none" stroke="#333" stroke-width="0.5" stroke-opacity="0.7"/><path d="M16 56.5L18 56.5M18.7 56.5L21.3 56.5M22.2 56.5L23 56.5" fill="none" stroke="#333" stroke-width="0.5" stroke-opacity="0.7"/><path d="M40 56.5L41.2 56.5M41.7 56.5L44.3 56.5M45 56.5L47 56.5" fill="none" stroke="#333" stroke-width="0.5" stroke-opacity="0.7"/><path d="M68 56.5L71.1 56.5M72.1 56.5L75 56.5" fill="none" stroke="#333" stroke-width="0.5" stroke-opacity="0.7"/><path d="M2.2 58L88.2 58" stroke="#1a1a1a" stroke-width="0.5"/><path d="M4 59.4L6.5 59.4M7.3 59.4L10.1 59.4M10.8 59.4L14.6 59.4M20.1 59.4L22.1 59.4M22.8 59.4L24 59.4M4 60.9L6 60.9M6.7 60.9L8.1 60.9M9.1 60.9L10.2 60.9M11.1 60.9L12.1 60.9M12.8 60.9L16.1 60.9M17.3 60.9L20.7 60.9M21.7 60.9L24 60.9" fill="none" stroke="#222" stroke-width="0.8" stroke-opacity="0.8"/><path d="M50.4 59.4L52.6 59.4M53.2 59.4L56.3 59.4M56.8 59.4L59 59.4M45 60.9L48.4 60.9M51.8 60.9L53.5 60.9M54.3 60.9L55.3 60.9M57.6 60.9L59 60.9" fill="none" stroke="#222" stroke-width="0.8" stroke-opacity="0.8"/><path d="M66 57.8L69.8 57.8M70.3 57.8L72 57.8M73.2 57.8L76.2 57.8M70.7 59.3L74.1 59.3M74.7 59.3L77.4 59.3M78.5 59.3L81.2 59.3M82 59.3L85.4 59.3M86.4 59.3L87 59.3M66 60.8L67.7 60.8M68.3 60.8L69.5 60.8M73.8 60.8L77.5 60.8M77.9 60.8L80.3 60.8M81 60.8L84.1 60.8M85.3 60.8L86.6 60.8" fill="none" stroke="#333" stroke-width="0.6" stroke-opacity="0.75"/></g><rect x="0.5" y="0.5" width="89" height="63" fill="none" stroke="#8b9fd8" stroke-width="1"/></svg>
<div class="cell" style="left:139.8px;top:405.0px;width:92.0px;height:31.5px"></div>
<div class="cb" style="left:142.4px;top:411.6px"></div>
<div class="num" style="left:154.8px;top:411.3px">19</div>
<div class="ttl" style="left:142.0px;top:424.0px;letter-spacing:-0.1px">5、R階床梁伏図</div>
<svg class="th wd" style="left:140.2px;top:438.3px" width="91.2" height="65.2" viewBox="0 0 90 64" preserveAspectRatio="none"><rect x="0" y="0" width="90" height="64" fill="#fff"/><g opacity="0.6"><rect x="0" y="0" width="90" height="64" fill="#fff"/><rect x="0.5" y="0.5" width="89" height="63" fill="none" stroke="#8b9fd8" stroke-width="1"/><rect x="1.8" y="1.6" width="86.6" height="60.8" fill="none" stroke="#888" stroke-width="0.35"/><path d="M2.4 1.3L5.5 1.3M6.7 1.3L10.3 1.3M11.2 1.3L14.5 1.3M15.7 1.3L19.3 1.3" fill="none" stroke="#666" stroke-width="0.5" stroke-opacity="0.7"/><rect x="54" y="8.6" width="19.6" height="6.8" fill="#000" opacity="0.2"/><path d="M54 8.6L54 15.4M56.5 8.6L56.5 15.4M58.9 8.6L58.9 15.4M61.4 8.6L61.4 15.4M63.8 8.6L63.8 15.4M66.2 8.6L66.2 15.4M68.7 8.6L68.7 15.4M71.2 8.6L71.2 15.4M73.6 8.6L73.6 15.4M54 8.6L73.6 8.6M54 10.9L73.6 10.9M54 13.1L73.6 13.1M54 15.4L73.6 15.4" fill="none" stroke="#1a1a1a" stroke-width="0.7" stroke-opacity="0.85"/><path d="M54 5.4L54 8.6M56.5 5.4L56.5 8.6M58.9 5.4L58.9 8.6M61.4 5.4L61.4 8.6M63.8 5.4L63.8 8.6M66.2 5.4L66.2 8.6M68.7 5.4L68.7 8.6M71.2 5.4L71.2 8.6M73.6 5.4L73.6 8.6" fill="none" stroke="#555" stroke-width="0.3" stroke-opacity="0.7"/><path d="M54 5.1L57.6 5.1M58.6 5.1L62.2 5.1M63.2 5.1L67 5.1M68 5.1L70.7 5.1M71.5 5.1L73 5.1" fill="none" stroke="#555" stroke-width="0.5" stroke-opacity="0.6"/><path d="M47 8L47 16M50 9.6L50 14" fill="none" stroke="#444" stroke-width="0.4" stroke-opacity="0.7"/><path d="M60 17.5L61.8 17.5M62.3 17.5L65.9 17.5M66.5 17.5L70.3 17.5M71.1 17.5L72 17.5" fill="none" stroke="#555" stroke-width="0.5" stroke-opacity="0.6"/><path d="M54 15.4L54 58M73.6 15.4L73.6 58M58.9 15.4L58.9 58M68.7 15.4L68.7 58M63.8 15.4L63.8 58" fill="none" stroke="#777" stroke-width="0.25" stroke-opacity="0.6"/><clipPath id="c233"><path d="M15.8 32.4L35.8 32.4L35.8 43.9L29 51L18.7 51L11.4 42.6L11.4 38Z"/></clipPath><g clip-path="url(#c233)"><rect x="11.4" y="32.4" width="24.4" height="18.6" fill="#000" opacity="0.22"/><path d="M11.4 32.4L11.4 51M14.9 32.4L14.9 51M18.4 32.4L18.4 51M21.9 32.4L21.9 51M25.3 32.4L25.3 51M28.8 32.4L28.8 51M32.3 32.4L32.3 51M35.8 32.4L35.8 51M11.4 32.4L35.8 32.4M11.4 36.1L35.8 36.1M11.4 39.8L35.8 39.8M11.4 43.6L35.8 43.6M11.4 47.3L35.8 47.3M11.4 51L35.8 51" fill="none" stroke="#1a1a1a" stroke-width="0.7" stroke-opacity="0.85"/><path d="M11.4 32.4L11.4 51M13.1 32.4L13.1 51M14.9 32.4L14.9 51M16.6 32.4L16.6 51M18.4 32.4L18.4 51M20.1 32.4L20.1 51M21.9 32.4L21.9 51M23.6 32.4L23.6 51M25.3 32.4L25.3 51M27.1 32.4L27.1 51M28.8 32.4L28.8 51M30.6 32.4L30.6 51M32.3 32.4L32.3 51M34.1 32.4L34.1 51M35.8 32.4L35.8 51M11.4 32.4L35.8 32.4M11.4 34.3L35.8 34.3M11.4 36.1L35.8 36.1M11.4 38L35.8 38M11.4 39.8L35.8 39.8M11.4 41.7L35.8 41.7M11.4 43.6L35.8 43.6M11.4 45.4L35.8 45.4M11.4 47.3L35.8 47.3M11.4 49.1L35.8 49.1M11.4 51L35.8 51" fill="none" stroke="#333" stroke-width="0.3" stroke-opacity="0.6"/></g><path d="M15.8 32.4L35.8 32.4L35.8 43.9L29 51L18.7 51L11.4 42.6L11.4 38Z" fill="none" stroke="#1a1a1a" stroke-width=".7"/><path d="M11.4 28.4L11.4 32M14.4 28.4L14.4 32M17.5 28.4L17.5 32M20.5 28.4L20.5 32M23.6 28.4L23.6 32M26.6 28.4L26.6 32M29.7 28.4L29.7 32M32.8 28.4L32.8 32M35.8 28.4L35.8 32" fill="none" stroke="#444" stroke-width="0.35" stroke-opacity="0.7"/><path d="M12 29.5L14 29.5M15.1 29.5L18.9 29.5M19.7 29.5L23.4 29.5M24.6 29.5L26.6 29.5M27.7 29.5L29.5 29.5M30.4 29.5L32.6 29.5M33.2 29.5L35 29.5" fill="none" stroke="#444" stroke-width="0.5" stroke-opacity="0.7"/><path d="M5.6 34L11 34M5.6 37.1L11 37.1M5.6 40.2L11 40.2M5.6 43.3L11 43.3M5.6 46.4L11 46.4M5.6 49.5L11 49.5" fill="none" stroke="#444" stroke-width="0.35" stroke-opacity="0.7"/><path d="M5 34.4L7 34.4M5 37.2L6.2 37.2M7.3 37.2L7.4 37.2M5 40.1L6.5 40.1M5 42.9L6.9 42.9M5 45.8L7.4 45.8M5 48.6L7.4 48.6" fill="none" stroke="#444" stroke-width="0.5" stroke-opacity="0.7"/><path d="M5.6 32.4L5.6 54.4M8.8 32.4L8.8 54.4M12 32.4L12 54.4M15.2 32.4L15.2 54.4M18.4 32.4L18.4 54.4M21.6 32.4L21.6 54.4M24.8 32.4L24.8 54.4M28 32.4L28 54.4M31.2 32.4L31.2 54.4M34.4 32.4L34.4 54.4M37.6 32.4L37.6 54.4M5.6 32.4L37.6 32.4M5.6 35.5L37.6 35.5M5.6 38.7L37.6 38.7M5.6 41.8L37.6 41.8M5.6 45L37.6 45M5.6 48.1L37.6 48.1M5.6 51.3L37.6 51.3M5.6 54.4L37.6 54.4" fill="none" stroke="#777" stroke-width="0.25" stroke-opacity="0.5"/><clipPath id="c236"><path d="M54.4 32L73.8 32L73.8 42.8L69 50L59.2 49.1L54.4 41Z"/></clipPath><g clip-path="url(#c236)"><rect x="54.4" y="32" width="19.4" height="18" fill="#000" opacity="0.22"/><path d="M54.4 32L54.4 50M57.2 32L57.2 50M59.9 32L59.9 50M62.7 32L62.7 50M65.5 32L65.5 50M68.3 32L68.3 50M71 32L71 50M73.8 32L73.8 50M54.4 32L73.8 32M54.4 35.6L73.8 35.6M54.4 39.2L73.8 39.2M54.4 42.8L73.8 42.8M54.4 46.4L73.8 46.4M54.4 50L73.8 50" fill="none" stroke="#1a1a1a" stroke-width="0.7" stroke-opacity="0.85"/><path d="M54.4 32L54.4 50M55.8 32L55.8 50M57.2 32L57.2 50M58.6 32L58.6 50M59.9 32L59.9 50M61.3 32L61.3 50M62.7 32L62.7 50M64.1 32L64.1 50M65.5 32L65.5 50M66.9 32L66.9 50M68.3 32L68.3 50M69.6 32L69.6 50M71 32L71 50M72.4 32L72.4 50M73.8 32L73.8 50M54.4 32L73.8 32M54.4 33.8L73.8 33.8M54.4 35.6L73.8 35.6M54.4 37.4L73.8 37.4M54.4 39.2L73.8 39.2M54.4 41L73.8 41M54.4 42.8L73.8 42.8M54.4 44.6L73.8 44.6M54.4 46.4L73.8 46.4M54.4 48.2L73.8 48.2M54.4 50L73.8 50" fill="none" stroke="#333" stroke-width="0.3" stroke-opacity="0.6"/></g><path d="M54.4 32L73.8 32L73.8 42.8L69 50L59.2 49.1L54.4 41Z" fill="none" stroke="#1a1a1a" stroke-width=".7"/><path d="M54.4 28.4L54.4 32M56.8 28.4L56.8 32M59.3 28.4L59.3 32M61.7 28.4L61.7 32M64.1 28.4L64.1 32M66.5 28.4L66.5 32M69 28.4L69 32M71.4 28.4L71.4 32M73.8 28.4L73.8 32" fill="none" stroke="#444" stroke-width="0.35" stroke-opacity="0.7"/><path d="M55 29.5L57.9 29.5M59 29.5L62.4 29.5M63 29.5L66.2 29.5M66.9 29.5L69.5 29.5M70.4 29.5L73 29.5" fill="none" stroke="#444" stroke-width="0.5" stroke-opacity="0.7"/><path d="M49 34L54 34M49 37L54 37M49 40L54 40M49 43L54 43M49 46L54 46M49 49L54 49" fill="none" stroke="#444" stroke-width="0.35" stroke-opacity="0.7"/><path d="M47.4 34.4L49.8 34.4M47.4 37.2L48.6 37.2M49.7 37.2L49.8 37.2M47.4 40.1L48.5 40.1M49.2 40.1L49.8 40.1M47.4 42.9L49.2 42.9M47.4 45.8L49.7 45.8M47.4 48.6L49.8 48.6" fill="none" stroke="#444" stroke-width="0.5" stroke-opacity="0.7"/><path d="M76 34L79 34M76 37L79 37M76 40L79 40M76 43L79 43M76 46L79 46M76 49L79 49" fill="none" stroke="#444" stroke-width="0.35" stroke-opacity="0.7"/><path d="M79 34.4L80.4 34.4M80.9 34.4L81 34.4M79 37.2L80 37.2M80.6 37.2L81 37.2M79 40.1L80.1 40.1M80.6 40.1L81 40.1M79 42.9L81 42.9M79 45.8L81 45.8M79 48.6L81 48.6" fill="none" stroke="#555" stroke-width="0.5" stroke-opacity="0.6"/><rect x="78.4" y="24.2" width="4" height="1.2" fill="#222" opacity="0.8"/><rect x="38" y="52.4" width="3.4" height="1.1" fill="#222" opacity="0.8"/><rect x="79" y="52.4" width="3.4" height="1.1" fill="#222" opacity="0.8"/><rect x="40" y="47" width="2" height="1.4" fill="#333" opacity="0.7"/><path d="M11 53L36 53M54 52.6L74 52.6" fill="none" stroke="#444" stroke-width="0.35" stroke-opacity="0.7"/><path d="M1.8 57.6L88.4 57.6" stroke="#555" stroke-width="0.45"/><path d="M3 59.1L6.6 59.1M7.8 59.1L9.7 59.1M10.5 59.1L13.5 59.1M14.2 59.1L15.9 59.1M16.7 59.1L20 59.1M20.9 59.1L22.4 59.1M3 60.8L5.2 60.8M6.1 60.8L9.6 60.8M10.3 60.8L14.2 60.8M15.3 60.8L16.3 60.8M17 60.8L19.6 60.8M20 60.8L21.2 60.8M22.1 60.8L25 60.8" fill="none" stroke="#444" stroke-width="0.7" stroke-opacity="0.7"/><path d="M45 59.1L48.1 59.1M48.7 59.1L51.9 59.1M52.4 59.1L55.4 59.1M55.9 59.1L57.7 59.1M45 60.8L48.9 60.8M49.7 60.8L52.2 60.8M53 60.8L54.5 60.8" fill="none" stroke="#333" stroke-width="0.7" stroke-opacity="0.75"/><path d="M68 59L70 59M71.2 59L74 59M75.1 59L76.1 59M76.6 59L79.5 59M80.5 59L84.1 59M84.8 59L86.5 59M68 60.9L70.4 60.9M70.9 60.9L72.3 60.9M72.8 60.9L75.6 60.9M80.9 60.9L83.6 60.9M84.7 60.9L87 60.9" fill="none" stroke="#444" stroke-width="0.7" stroke-opacity="0.7"/><path d="M26 57.6L26 62.4M44 57.6L44 62.4M66 57.6L66 62.4" fill="none" stroke="#666" stroke-width="0.4"/></g><rect x="0.5" y="0.5" width="89" height="63" fill="none" stroke="#8b9fd8" stroke-width="1"/></svg>
<div class="cell" style="left:234.1px;top:405.0px;width:92.0px;height:31.5px"></div>
<div class="cb" style="left:236.7px;top:411.6px"></div>
<div class="num" style="left:249.1px;top:411.3px">20</div>
<div class="ttl" style="left:236.3px;top:424.0px;letter-spacing:-0.1px">鉄骨製品検査</div>
<svg class="th ph" style="left:234.9px;top:438.3px" width="90.4" height="65.2" viewBox="0 0 90 64" preserveAspectRatio="none"><defs><linearGradient id="g20" x1="0" y1="0" x2="0" y2="1"><stop offset="0" stop-color="#3a3e44"/><stop offset="1" stop-color="#7e6660"/></linearGradient></defs><rect x="0" y="0" width="90" height="64" fill="url(#g20)"/><path d="M0 0L24 0L24 16L0 24Z" fill="#66707e"/><rect x="2" y="2" width="9" height="14" fill="#7e8896" opacity="0.8"/><rect x="24.6" y="3" width="9" height="17" fill="#8a4a4c"/><rect x="26" y="5" width="6" height="12" fill="#a05c5e" opacity="0.7"/><rect x="34" y="0" width="13.6" height="21" fill="#262c36"/><rect x="36" y="2" width="9" height="16" fill="#343c4a"/><rect x="47.6" y="0" width="42.4" height="30" fill="#15181c"/><path d="M50 2L50 28M60 2L60 28M70 2L70 28M80 2L80 28M90 2L90 28M50 2L90 2M50 15L90 15M50 28L90 28" fill="none" stroke="#3a3e46" stroke-width="0.7" stroke-opacity="0.9"/><rect x="20" y="0" width="4.6" height="20" fill="#4e5058"/><path d="M0 24L24 16L47 21L47 30L0 36Z" fill="#5a5058"/><path d="M2 14L20 29M8 13L24 27M14 12.6L28 25" fill="none" stroke="#c8a030" stroke-width="1.3"/><path d="M2 18L18 32M3 14L3 26M10 14L10 28" fill="none" stroke="#8a6c20" stroke-width="0.9"/><path d="M0 40L30 36L90 50L90 64L0 64Z" fill="#a88478"/><path d="M0 48L24 44L44 64L0 64Z" fill="#c09a8a"/><path d="M0 36L12 34L12 52L0 54Z" fill="#6a5a5c"/><path d="M4.6 33.4L40 23.6L83 33.6L79 57.6L16 52.6Z" fill="#5e4a52"/><path d="M4.6 33.4L40 23.6L83 33.6L60 37.6L16 38.6Z" fill="#8a8280"/><path d="M8 33.6L40 25.4L76 33.4L58 36L18 37Z" fill="#a8a29c" opacity="0.85"/><path d="M16 38.6L60 37.6L59 55.6L17 51Z" fill="#6e5860"/><path d="M20 41L56 40.4L55 52L21 48.6Z" fill="#7e6466" opacity="0.8"/><path d="M60 37.6L83 33.6L79 57.6L59 55.6Z" fill="#4a3c48"/><path d="M16 38.6L17 52M30 38.4L30.6 53M45 38L45 54.4" fill="none" stroke="#3a2e38" stroke-width="0.9"/><path d="M10 36L16 38.6L17 52.6L11 58L9 46Z" fill="#8e8a88"/><path d="M9 52L18 52.6L30 60L12 62Z" fill="#76706e"/><path d="M10 38L10 56M13 40L13.6 58" fill="none" stroke="#b8b4b0" stroke-width="0.8"/><rect x="21.1" y="59.6" width="1.8" height="1.4" fill="#c8c0b8" opacity="0.95"/><rect x="16.9" y="57.2" width="2" height="1.3" fill="#4a4246" opacity="0.95"/><rect x="25.4" y="57.4" width="1.4" height="0.9" fill="#4a4246" opacity="0.95"/><rect x="35.1" y="53.3" width="1.7" height="1.5" fill="#c8c0b8" opacity="0.95"/><rect x="27.5" y="57.1" width="2.7" height="1.6" fill="#4a4246" opacity="0.95"/><rect x="29.4" y="57.3" width="2.6" height="1.4" fill="#c8c0b8" opacity="0.95"/><rect x="30.7" y="55.9" width="1.6" height="1.2" fill="#4a4246" opacity="0.95"/><rect x="21" y="59.2" width="1.3" height="1" fill="#4a4246" opacity="0.95"/><rect x="21.2" y="60.3" width="1.6" height="0.8" fill="#4a4246" opacity="0.95"/><rect x="26.1" y="56" width="1.7" height="1" fill="#c8c0b8" opacity="0.95"/><path d="M68 48L82 52L81 58L66 56Z" fill="#a87840" opacity="0.8"/><path d="M0 30.6L22 26" fill="none" stroke="#b0a8a0" stroke-width="0.8"/><rect x="0.4" y="0.4" width="89.2" height="63.2" fill="none" stroke="#6f86cc" stroke-width="0.8"/></svg>
<div class="cell" style="left:328.4px;top:405.0px;width:92.0px;height:31.5px"></div>
<div class="cb" style="left:331.0px;top:411.6px"></div>
<div class="num" style="left:343.4px;top:411.3px">21</div>
<div class="ttl" style="left:330.6px;top:424.0px;letter-spacing:-0.1px">エレベーター平面図</div>
<svg class="th wd" style="left:328.8px;top:438.3px" width="91.2" height="65.2" viewBox="0 0 90 64" preserveAspectRatio="none"><rect x="0" y="0" width="90" height="64" fill="#fff"/><g opacity="0.75"><rect x="0" y="0" width="90" height="64" fill="#fff"/><rect x="0.5" y="0.5" width="89" height="63" fill="none" stroke="#8b9fd8" stroke-width="1"/><rect x="3.2" y="2.6" width="83.6" height="58.6" fill="none" stroke="#222" stroke-width="0.7"/><path d="M3.2 57.6L86.8 57.6" stroke="#222" stroke-width="0.6"/><rect x="3.2" y="57.6" width="22.8" height="3.6" fill="#000" opacity="0.22"/><rect x="70" y="57.6" width="16.8" height="3.6" fill="#000" opacity="0.25"/><path d="M3.8 58.6L6.2 58.6M7.3 58.6L9.7 58.6M10.6 58.6L12.1 58.6M13 58.6L16.4 58.6M17 58.6L18.3 58.6M21.6 58.6L24.5 58.6M25.1 58.6L25.8 58.6M3.8 60.1L5.4 60.1M5.8 60.1L8.2 60.1M9.3 60.1L11.8 60.1M12.6 60.1L15.6 60.1M21.3 60.1L24.4 60.1M25 60.1L25.8 60.1" fill="none" stroke="#111" stroke-width="1.1" stroke-opacity="1"/><path d="M26 57.6L26 61.2M44 57.6L44 61.2M70 57.6L70 61.2M8 57.6L8 61.2M14 57.6L14 61.2M20 57.6L20 61.2" fill="none" stroke="#111" stroke-width="0.6"/><path d="M45 58.6L47.4 58.6M48.4 58.6L49.8 58.6M50.5 58.6L52.3 58.6M53.3 58.6L56.1 58.6M57 58.6L58.4 58.6M59 58.6L62.7 58.6M45 60.1L46.2 60.1M46.9 60.1L49.1 60.1M53.9 60.1L55.3 60.1M55.8 60.1L57.7 60.1M58.3 60.1L61.3 60.1M61.9 60.1L63 60.1" fill="none" stroke="#111" stroke-width="1.3" stroke-opacity="1"/><path d="M71 58.6L72.8 58.6M73.7 58.6L77.3 58.6M77.9 58.6L79.3 58.6M80.3 58.6L81.7 58.6M82.2 58.6L84.1 58.6M85.2 58.6L86 58.6M71 60.1L72.4 60.1M73.5 60.1L76.9 60.1M77.9 60.1L81.7 60.1M82.4 60.1L85.9 60.1" fill="none" stroke="#111" stroke-width="1.1" stroke-opacity="1"/><rect x="9.4" y="6.6" width="32" height="43" fill="none" stroke="#1a1a1a" stroke-width="0.6"/><rect x="14.6" y="12.6" width="22" height="26" fill="none" stroke="#1a1a1a" stroke-width="0.8"/><path d="M6 9.6L44 9.6M12 4L12 52M39 4L39 52M6 42L44 42M20 4L20 12.6M30 4L30 12.6" fill="none" stroke="#1a1a1a" stroke-width="0.45" stroke-opacity="0.75"/><path d="M21.8 47.9L25.4 47.9M10.3 16.1L11.9 16.1M22.5 48.7L25.6 48.7M19.2 46.1L24.1 46.1M36 24.6L37.8 24.6M16.1 31.6L21.1 31.6M24.1 35.9L26.8 35.9M20.2 14.9L25.7 14.9M39.4 39.4L39.4 42M17.2 43L17.2 48M25.9 44.5L31.2 44.5M24.6 31.2L24.6 34.6M17.8 28.9L17.8 30.7M27.8 22.2L32.4 22.2M33.5 8.2L34.9 8.2M38.6 38.7L42 38.7M9.7 37.1L9.7 38.9M41.7 6.2L42 6.2M36.1 17.6L36.1 18.6M13.4 41.9L18.9 41.9M30 41.3L31 41.3M10.2 29.6L14.1 29.6M9.5 22L9.5 26.8M31.9 8.5L32.8 8.5M22.3 24.8L22.3 27M22.6 26.8L22.6 29.3M23.4 26.7L23.4 31.1M37.8 13.4L37.8 14.8M39.9 39L42 39M38.3 15.2L39.4 15.2M11.6 25L16.1 25M11.8 7.8L15.5 7.8M38.4 18.9L42 18.9M33.2 5.7L38.5 5.7M37.4 6.5L40.2 6.5M10.5 20.5L15.5 20.5M23.7 6.6L23.7 9.3M9.5 9.4L15 9.4M21.3 45.7L21.3 51M20.2 13.8L22 13.8M41.9 48.7L41.9 51M41.3 28.3L41.3 29.2M20.7 16.2L20.7 17.4M20.9 45.8L20.9 49M23.5 8.7L23.5 11.4M9.9 27.8L10.9 27.8M15.3 7.8L15.3 13.3M30.1 10.5L31.5 10.5M24.2 35.8L25.8 35.8M27.3 40.5L28.2 40.5M39.2 25.9L42 25.9M26.3 45L29.2 45M40.2 25.2L42 25.2M40.1 10.7L40.1 13.6M23.1 13.3L28.4 13.3M12.7 39.5L12.7 45.1M16.2 46.2L16.2 50.9M25.5 45.9L29.5 45.9M25.5 16.4L27.2 16.4M17.4 7.7L19.9 7.7M25 37.4L26.1 37.4M41.4 49.6L42 49.6M30.1 28.6L30.1 31.1M21.5 30.1L24.7 30.1M23.6 9.3L26 9.3M13.4 17.6L17.8 17.6M19.2 38.9L19.2 44.5M19.7 22.4L19.7 24.4M41.8 48.5L41.8 51M41.8 35.1L42 35.1M29.3 10.2L33.6 10.2M24.8 46L28.8 46M18.1 45.6L23.2 45.6M23.1 44.2L25.4 44.2M19 24L21.9 24M38.5 27.6L38.5 29.6M10.4 40.7L15.8 40.7M13.3 32.4L17.3 32.4M10.3 27.1L15.4 27.1M27.3 46.6L29 46.6M28.7 38.3L28.7 40.1M42 15.8L42 15.8M31.7 21.4L34.5 21.4M38.9 15.1L40.4 15.1M37.2 47.5L40.8 47.5M27.4 12.3L27.4 16.5M12.3 19.8L12.3 23.7M15.7 42.9L18.4 42.9M19.5 43L20.6 43M40 24.4L40 26.5" fill="none" stroke="#1a1a1a" stroke-width="0.5" stroke-opacity="0.7"/><rect x="16" y="14" width="8" height="7" fill="#000" opacity="0.13"/><path d="M19.6 16.7L24 16.7M19.3 17.4L19.3 20M19.2 20.9L19.2 21M24 18.2L24 18.2M17.2 14L17.2 18.1M22.9 15.4L24 15.4M17.4 20.7L17.4 21M17.4 14.8L17.4 15.7M22.4 17.7L22.4 21M17.7 20.8L17.7 21M19.5 20.7L20.7 20.7M22.5 17.1L24 17.1M21.6 15.3L21.6 18.5M16 15.2L22.7 15.2M23.9 20.1L24 20.1M20.4 16.2L24 16.2M18.4 17.4L18.4 21M21.9 15.7L21.9 17.4M20.7 17.3L24 17.3M16.8 18.6L20.8 18.6" fill="none" stroke="#1a1a1a" stroke-width="0.55" stroke-opacity="0.8"/><rect x="27" y="22" width="7" height="9" fill="#000" opacity="0.13"/><path d="M32.4 22.1L34 22.1M32.7 25L34 25M32.7 28.6L34 28.6M31.6 28.8L31.6 31M27.3 24.2L27.3 30.3M31.1 23.2L34 23.2M27.6 27.9L30 27.9M27.5 23.9L28.7 23.9M33.9 28.7L34 28.7M32 26.8L33.5 26.8M33.6 23.2L34 23.2M28.3 29L31 29M27.2 27.3L28.6 27.3M31.8 25.6L33.1 25.6M28.4 24.5L28.4 28M27.4 30.4L34 30.4M27.1 24.6L27.1 30.7M30.9 25.3L34 25.3" fill="none" stroke="#1a1a1a" stroke-width="0.55" stroke-opacity="0.75"/><circle cx="25" cy="24" r="2" fill="none" stroke="#1a1a1a" stroke-width="0.6"/><path d="M36 3L44 9M38 3L46 9" fill="none" stroke="#1a1a1a" stroke-width="0.5" stroke-opacity="0.8"/><path d="M10 52.7L12.6 52.7M17.2 52.7L20.8 52.7M21.5 52.7L23.4 52.7M23.9 52.7L25.5 52.7M26.3 52.7L28.5 52.7M29 52.7L31.9 52.7M10 54.2L13.9 54.2M15 54.2L18.2 54.2M19 54.2L21.1 54.2M21.8 54.2L25.4 54.2M30.6 54.2L32 54.2M14.1 55.7L17 55.7M17.6 55.7L19.8 55.7M23.2 55.7L26.1 55.7M26.9 55.7L29.2 55.7M30.2 55.7L32 55.7" fill="none" stroke="#444" stroke-width="0.5" stroke-opacity="0.65"/><path d="M46.6 9.4L48.7 9.4M49.7 9.4L51.3 9.4M52.3 9.4L54.2 9.4M55.1 9.4L56.6 9.4M57.1 9.4L60.7 9.4M61.6 9.4L62.6 9.4M46.6 11L49.2 11M49.9 11L52.1 11M53.1 11L54.8 11M59.1 11L60.7 11M61.6 11L62.6 11M46.6 12.6L47.7 12.6M48.8 12.6L52.4 12.6M53.2 12.6L56.6 12.6M57.4 12.6L61.4 12.6M46.6 14.2L48.9 14.2M50 14.2L52.6 14.2M53.2 14.2L55.7 14.2M56.7 14.2L60.3 14.2M46.6 15.8L50 15.8M50.7 15.8L52.6 15.8M53.4 15.8L57.2 15.8M57.9 15.8L60.6 15.8M61.7 15.8L62.6 15.8" fill="none" stroke="#1a1a1a" stroke-width="0.9" stroke-opacity="0.85"/><path d="M46.6 18.5L47.8 18.5M48.8 18.5L49.9 18.5M50.8 18.5L52.2 18.5M53.1 18.5L55.2 18.5M56 18.5L57.5 18.5M58.2 18.5L61.7 18.5M62.4 18.5L64.6 18.5M46.6 20.2L49.2 20.2M50.1 20.2L51.6 20.2M52.4 20.2L54.6 20.2M55.7 20.2L58 20.2M58.5 20.2L61.1 20.2M62.2 20.2L63.6 20.2M64.5 20.2L64.6 20.2" fill="none" stroke="#1a1a1a" stroke-width="0.9" stroke-opacity="0.85"/><rect x="47" y="23" width="7" height="7" fill="#000" opacity="0.13"/><path d="M50.4 26L53.7 26M52.4 24.7L54 24.7M49.2 25.3L52.2 25.3M50.8 26.9L54 26.9M50.8 30L54 30M52.4 28L52.4 29.7M47.2 24.8L49.2 24.8M49.6 29.7L49.6 30M52.5 29.1L54 29.1M51.8 26.7L54 26.7M53.5 27L54 27M49.4 29.5L49.4 30M47 29.6L47 30M48.6 24.7L52.3 24.7" fill="none" stroke="#1a1a1a" stroke-width="0.55" stroke-opacity="0.8"/><path d="M50.4 22L50.4 31M46 27L55 27" fill="none" stroke="#1a1a1a" stroke-width="0.7" stroke-opacity="0.85"/><path d="M69.4 6.2L71.4 6.2M72.2 6.2L74.7 6.2M75.8 6.2L79.3 6.2M80.2 6.2L83.8 6.2M84.8 6.2L86.4 6.2M69.4 7.8L72.8 7.8M74 7.8L75.5 7.8M76.5 7.8L77.8 7.8M78.9 7.8L82.8 7.8M83.9 7.8L86.4 7.8M69.4 9.5L72.3 9.5M72.8 9.5L75.8 9.5M77 9.5L79.2 9.5M79.6 9.5L82.7 9.5M69.4 11.1L73.3 11.1M74.1 11.1L77.4 11.1M78 11.1L79.1 11.1M79.8 11.1L81.5 11.1M82.7 11.1L86 11.1M69.4 12.7L72.9 12.7M73.8 12.7L76.9 12.7M78.1 12.7L81.3 12.7M81.7 12.7L83 12.7M83.5 12.7L86 12.7M72.7 14.3L76.1 14.3M76.7 14.3L77.8 14.3M78.8 14.3L82.2 14.3M82.7 14.3L84.5 14.3M85.5 14.3L86.4 14.3M69.4 16L71.9 16M72.7 16L74.3 16M75.4 16L77.1 16M78 16L81.3 16M82 16L83.5 16M69.4 17.6L71.6 17.6M72 17.6L74.4 17.6M75.3 17.6L78.1 17.6M78.5 17.6L81.3 17.6M82.1 17.6L84.8 17.6M85.9 17.6L86.4 17.6M69.4 19.2L72.8 19.2M73.3 19.2L76.3 19.2M77.4 19.2L80.5 19.2M81.4 19.2L84.2 19.2M84.9 19.2L86.4 19.2M69.4 20.8L71.7 20.8M72.3 20.8L75.5 20.8M76.5 20.8L77.6 20.8M78.3 20.8L79.5 20.8M85.3 20.8L86.4 20.8M69.4 22.5L70.5 22.5M71 22.5L74.4 22.5M75.4 22.5L78.2 22.5M78.7 22.5L80.5 22.5M81.4 22.5L83 22.5M84 22.5L85.3 22.5M85.8 22.5L86.4 22.5M69.4 24.1L73.2 24.1M73.9 24.1L77 24.1M77.6 24.1L81.5 24.1M82.1 24.1L84.9 24.1M86 24.1L86.4 24.1M69.4 25.7L71.2 25.7M72.2 25.7L75.4 25.7M76.3 25.7L78.5 25.7M83.4 25.7L86 25.7M69.4 27.3L70.5 27.3M71.6 27.3L74.9 27.3M75.8 27.3L77.3 27.3M81.1 27.3L83.8 27.3M84.4 27.3L86.4 27.3M69.4 29L70.8 29M71.3 29L74.8 29M75.7 29L79.1 29M79.7 29L81.6 29M82.7 29L86.1 29M69.4 30.6L72.7 30.6M73.4 30.6L74.9 30.6M75.8 30.6L79 30.6M79.5 30.6L83.1 30.6M83.8 30.6L85.6 30.6" fill="none" stroke="#1a1a1a" stroke-width="1" stroke-opacity="0.9"/><rect x="69.4" y="5.4" width="17" height="26" fill="#000" opacity="0.1"/><path d="M58.6 31.5L61.6 31.5M62.7 31.5L65 31.5M65.6 31.5L68.4 31.5M68.9 31.5L70.6 31.5M63.5 33.2L64.8 33.2M69.7 33.2L70.6 33.2M58.6 34.9L62.3 34.9M66.1 34.9L69.1 34.9M69.8 34.9L70.6 34.9M58.6 36.7L62.2 36.7M63.1 36.7L66.1 36.7M66.7 36.7L70.6 36.7M58.6 38.4L60.6 38.4M61.2 38.4L64.2 38.4M65.2 38.4L68.9 38.4M69.8 38.4L70.6 38.4M58.6 40.1L60.4 40.1M61 40.1L62.6 40.1M63.7 40.1L66.4 40.1M67 40.1L68.5 40.1M69.1 40.1L70.5 40.1M58.6 41.9L61.7 41.9M62.8 41.9L66.8 41.9M67.4 41.9L68.7 41.9M69.7 41.9L70.6 41.9M58.6 43.6L61.6 43.6M62.1 43.6L66 43.6M66.7 43.6L69 43.6M69.5 43.6L70.6 43.6M61.2 45.3L63.1 45.3M64 45.3L67.8 45.3M68.8 45.3L70.6 45.3M58.6 47.1L59.9 47.1M60.4 47.1L63.3 47.1M63.8 47.1L66.7 47.1M67.3 47.1L70.6 47.1M58.6 48.8L62.2 48.8M63.2 48.8L67 48.8M67.5 48.8L70 48.8M58.6 50.5L59.6 50.5M60.7 50.5L62 50.5M63 50.5L66.3 50.5M66.8 50.5L69.2 50.5M69.7 50.5L70.6 50.5M58.6 52.3L61.3 52.3M64.5 52.3L67.1 52.3M68 52.3L70 52.3M58.6 54L62 54M62.6 54L66.3 54M66.8 54L69.6 54M70.3 54L70.6 54M58.6 55.7L62 55.7M62.8 55.7L66.4 55.7M67 55.7L68.8 55.7" fill="none" stroke="#1a1a1a" stroke-width="0.95" stroke-opacity="0.88"/><path d="M73.6 34.9L74.7 34.9M75.5 34.9L79.2 34.9M79.8 34.9L81 34.9M81.9 34.9L85.2 34.9M86 34.9L86.6 34.9M73.6 36.7L77.4 36.7M78.2 36.7L80.1 36.7M81.1 36.7L84.2 36.7M84.8 36.7L86.6 36.7M73.6 38.4L77 38.4M77.9 38.4L81.9 38.4M82.3 38.4L84.8 38.4M85.5 38.4L86.6 38.4M73.6 40.2L77.3 40.2M78.2 40.2L80.4 40.2M81.6 40.2L84.4 40.2M85.5 40.2L86.6 40.2M73.6 42L76 42M76.8 42L79 42M79.6 42L80.7 42M81.5 42L82.8 42M83.7 42L86.6 42M76.2 43.7L78.4 43.7M79.3 43.7L81.3 43.7M82.2 43.7L85.5 43.7M86.2 43.7L86.6 43.7M73.6 45.5L76.7 45.5M77.8 45.5L81.6 45.5M82.4 45.5L85 45.5M86.1 45.5L86.6 45.5M73.6 47.3L77.1 47.3M77.6 47.3L80.5 47.3M83.4 47.3L84.6 47.3M85.2 47.3L86.6 47.3M73.6 49L75.8 49M76.4 49L79.4 49M80.3 49L82.9 49M83.6 49L86.6 49M73.6 50.8L76.8 50.8M77.7 50.8L80.4 50.8M81 50.8L83 50.8M83.5 50.8L85.8 50.8M73.6 52.6L75.8 52.6M76.6 52.6L80.1 52.6M80.6 52.6L82.9 52.6M85.9 52.6L86.6 52.6M73.6 54.3L75.3 54.3M76.1 54.3L78.5 54.3M82.2 54.3L84.9 54.3M85.7 54.3L86.6 54.3M73.6 56.1L75.9 56.1M76.9 56.1L78.2 56.1M78.7 56.1L81.7 56.1M82.4 56.1L84.9 56.1M86 56.1L86.6 56.1" fill="none" stroke="#1a1a1a" stroke-width="0.95" stroke-opacity="0.88"/></g><rect x="0.5" y="0.5" width="89" height="63" fill="none" stroke="#8b9fd8" stroke-width="1"/></svg>
<div class="cell" style="left:422.7px;top:405.0px;width:92.0px;height:31.5px"></div>
<div class="cb" style="left:425.3px;top:411.6px"></div>
<div class="num" style="left:437.7px;top:411.3px">22</div>
<div class="ttl" style="left:424.9px;top:424.0px;letter-spacing:-0.1px">2～4階床梁伏図</div>
<svg class="th wd" style="left:423.1px;top:438.3px" width="91.2" height="65.2" viewBox="0 0 90 64" preserveAspectRatio="none"><rect x="0" y="0" width="90" height="64" fill="#fff"/><g opacity="0.66"><rect x="0" y="0" width="90" height="64" fill="#fff"/><rect x="0.5" y="0.5" width="89" height="63" fill="none" stroke="#8b9fd8" stroke-width="1"/><rect x="3.2" y="2.6" width="83.6" height="58.6" fill="none" stroke="#222" stroke-width="0.7"/><path d="M3.2 57.6L86.8 57.6" stroke="#222" stroke-width="0.6"/><rect x="3.2" y="57.6" width="22.8" height="3.6" fill="#000" opacity="0.22"/><rect x="70" y="57.6" width="16.8" height="3.6" fill="#000" opacity="0.25"/><path d="M3.8 58.6L6.2 58.6M7.3 58.6L9.7 58.6M10.6 58.6L12.1 58.6M13 58.6L16.4 58.6M17 58.6L18.3 58.6M21.6 58.6L24.5 58.6M25.1 58.6L25.8 58.6M3.8 60.1L5.4 60.1M5.8 60.1L8.2 60.1M9.3 60.1L11.8 60.1M12.6 60.1L15.6 60.1M21.3 60.1L24.4 60.1M25 60.1L25.8 60.1" fill="none" stroke="#111" stroke-width="1.1" stroke-opacity="1"/><path d="M26 57.6L26 61.2M44 57.6L44 61.2M70 57.6L70 61.2M8 57.6L8 61.2M14 57.6L14 61.2M20 57.6L20 61.2" fill="none" stroke="#111" stroke-width="0.6"/><path d="M45 58.6L47.4 58.6M48.4 58.6L49.8 58.6M50.5 58.6L52.3 58.6M53.3 58.6L56.1 58.6M57 58.6L58.4 58.6M59 58.6L62.7 58.6M45 60.1L46.2 60.1M46.9 60.1L49.1 60.1M53.9 60.1L55.3 60.1M55.8 60.1L57.7 60.1M58.3 60.1L61.3 60.1M61.9 60.1L63 60.1" fill="none" stroke="#111" stroke-width="1.3" stroke-opacity="1"/><path d="M71 58.6L72.8 58.6M73.7 58.6L77.3 58.6M77.9 58.6L79.3 58.6M80.3 58.6L81.7 58.6M82.2 58.6L84.1 58.6M85.2 58.6L86 58.6M71 60.1L72.4 60.1M73.5 60.1L76.9 60.1M77.9 60.1L81.7 60.1M82.4 60.1L85.9 60.1" fill="none" stroke="#111" stroke-width="1.1" stroke-opacity="1"/><path d="M5 4L5 56M7.8 4L7.8 56M10.5 4L10.5 56M13.2 4L13.2 56M16 4L16 56M18.8 4L18.8 56M21.5 4L21.5 56M24.2 4L24.2 56M27 4L27 56M29.8 4L29.8 56M32.5 4L32.5 56M35.2 4L35.2 56M38 4L38 56M40.8 4L40.8 56M43.5 4L43.5 56M46.2 4L46.2 56M49 4L49 56M5 4L49 4M5 6.9L49 6.9M5 9.8L49 9.8M5 12.7L49 12.7M5 15.6L49 15.6M5 18.4L49 18.4M5 21.3L49 21.3M5 24.2L49 24.2M5 27.1L49 27.1M5 30L49 30M5 32.9L49 32.9M5 35.8L49 35.8M5 38.7L49 38.7M5 41.6L49 41.6M5 44.4L49 44.4M5 47.3L49 47.3M5 50.2L49 50.2M5 53.1L49 53.1M5 56L49 56" fill="none" stroke="#777" stroke-width="0.25" stroke-opacity="0.5"/><clipPath id="c260"><path d="M15.5 4.6L34 4.6L34 16.4L27.7 23.6L18.2 23.6L11.4 15.1L11.4 10.3Z"/></clipPath><g clip-path="url(#c260)"><rect x="11.4" y="4.6" width="22.6" height="19" fill="#000" opacity="0.22"/><path d="M11.4 4.6L11.4 23.6M14.6 4.6L14.6 23.6M17.9 4.6L17.9 23.6M21.1 4.6L21.1 23.6M24.3 4.6L24.3 23.6M27.5 4.6L27.5 23.6M30.8 4.6L30.8 23.6M34 4.6L34 23.6M11.4 4.6L34 4.6M11.4 8.4L34 8.4M11.4 12.2L34 12.2M11.4 16L34 16M11.4 19.8L34 19.8M11.4 23.6L34 23.6" fill="none" stroke="#1a1a1a" stroke-width="0.7" stroke-opacity="0.85"/><path d="M11.4 4.6L11.4 23.6M13 4.6L13 23.6M14.6 4.6L14.6 23.6M16.2 4.6L16.2 23.6M17.9 4.6L17.9 23.6M19.5 4.6L19.5 23.6M21.1 4.6L21.1 23.6M22.7 4.6L22.7 23.6M24.3 4.6L24.3 23.6M25.9 4.6L25.9 23.6M27.5 4.6L27.5 23.6M29.2 4.6L29.2 23.6M30.8 4.6L30.8 23.6M32.4 4.6L32.4 23.6M34 4.6L34 23.6M11.4 4.6L34 4.6M11.4 6.5L34 6.5M11.4 8.4L34 8.4M11.4 10.3L34 10.3M11.4 12.2L34 12.2M11.4 14.1L34 14.1M11.4 16L34 16M11.4 17.9L34 17.9M11.4 19.8L34 19.8M11.4 21.7L34 21.7M11.4 23.6L34 23.6" fill="none" stroke="#333" stroke-width="0.3" stroke-opacity="0.6"/></g><path d="M15.5 4.6L34 4.6L34 16.4L27.7 23.6L18.2 23.6L11.4 15.1L11.4 10.3Z" fill="none" stroke="#1a1a1a" stroke-width=".7"/><clipPath id="c261"><path d="M15.5 33L34 33L34 44.8L27.7 52L18.2 52L11.4 43.5L11.4 38.7Z"/></clipPath><g clip-path="url(#c261)"><rect x="11.4" y="33" width="22.6" height="19" fill="#000" opacity="0.22"/><path d="M11.4 33L11.4 52M14.6 33L14.6 52M17.9 33L17.9 52M21.1 33L21.1 52M24.3 33L24.3 52M27.5 33L27.5 52M30.8 33L30.8 52M34 33L34 52M11.4 33L34 33M11.4 36.8L34 36.8M11.4 40.6L34 40.6M11.4 44.4L34 44.4M11.4 48.2L34 48.2M11.4 52L34 52" fill="none" stroke="#1a1a1a" stroke-width="0.7" stroke-opacity="0.85"/><path d="M11.4 33L11.4 52M13 33L13 52M14.6 33L14.6 52M16.2 33L16.2 52M17.9 33L17.9 52M19.5 33L19.5 52M21.1 33L21.1 52M22.7 33L22.7 52M24.3 33L24.3 52M25.9 33L25.9 52M27.5 33L27.5 52M29.2 33L29.2 52M30.8 33L30.8 52M32.4 33L32.4 52M34 33L34 52M11.4 33L34 33M11.4 34.9L34 34.9M11.4 36.8L34 36.8M11.4 38.7L34 38.7M11.4 40.6L34 40.6M11.4 42.5L34 42.5M11.4 44.4L34 44.4M11.4 46.3L34 46.3M11.4 48.2L34 48.2M11.4 50.1L34 50.1M11.4 52L34 52" fill="none" stroke="#333" stroke-width="0.3" stroke-opacity="0.6"/></g><path d="M15.5 33L34 33L34 44.8L27.7 52L18.2 52L11.4 43.5L11.4 38.7Z" fill="none" stroke="#1a1a1a" stroke-width=".7"/><clipPath id="c262"><path d="M53.4 33L75 33L75 44.4L69.6 52L58.8 51L53.4 42.5Z"/></clipPath><g clip-path="url(#c262)"><rect x="53.4" y="33" width="21.6" height="19" fill="#000" opacity="0.22"/><path d="M53.4 33L53.4 52M56.5 33L56.5 52M59.6 33L59.6 52M62.7 33L62.7 52M65.7 33L65.7 52M68.8 33L68.8 52M71.9 33L71.9 52M75 33L75 52M53.4 33L75 33M53.4 36.8L75 36.8M53.4 40.6L75 40.6M53.4 44.4L75 44.4M53.4 48.2L75 48.2M53.4 52L75 52" fill="none" stroke="#1a1a1a" stroke-width="0.7" stroke-opacity="0.85"/><path d="M53.4 33L53.4 52M54.9 33L54.9 52M56.5 33L56.5 52M58 33L58 52M59.6 33L59.6 52M61.1 33L61.1 52M62.7 33L62.7 52M64.2 33L64.2 52M65.7 33L65.7 52M67.3 33L67.3 52M68.8 33L68.8 52M70.4 33L70.4 52M71.9 33L71.9 52M73.5 33L73.5 52M75 33L75 52M53.4 33L75 33M53.4 34.9L75 34.9M53.4 36.8L75 36.8M53.4 38.7L75 38.7M53.4 40.6L75 40.6M53.4 42.5L75 42.5M53.4 44.4L75 44.4M53.4 46.3L75 46.3M53.4 48.2L75 48.2M53.4 50.1L75 50.1M53.4 52L75 52" fill="none" stroke="#333" stroke-width="0.3" stroke-opacity="0.6"/></g><path d="M53.4 33L75 33L75 44.4L69.6 52L58.8 51L53.4 42.5Z" fill="none" stroke="#1a1a1a" stroke-width=".7"/><path d="M11.4 2.6L11.4 4.6M14.2 2.6L14.2 4.6M17.1 2.6L17.1 4.6M19.9 2.6L19.9 4.6M22.7 2.6L22.7 4.6M25.5 2.6L25.5 4.6M28.4 2.6L28.4 4.6M31.2 2.6L31.2 4.6M34 2.6L34 4.6" fill="none" stroke="#444" stroke-width="0.35" stroke-opacity="0.7"/><path d="M11.4 2.7L14.6 2.7M15.8 2.7L19.5 2.7M20.4 2.7L23.7 2.7M24.2 2.7L26.5 2.7M26.9 2.7L29.5 2.7M30.4 2.7L33.3 2.7" fill="none" stroke="#444" stroke-width="0.5" stroke-opacity="0.7"/><path d="M11.4 30.2L11.4 32.2M14.2 30.2L14.2 32.2M17.1 30.2L17.1 32.2M19.9 30.2L19.9 32.2M22.7 30.2L22.7 32.2M25.5 30.2L25.5 32.2M28.4 30.2L28.4 32.2M31.2 30.2L31.2 32.2M34 30.2L34 32.2" fill="none" stroke="#444" stroke-width="0.35" stroke-opacity="0.7"/><path d="M11.4 30.3L14.6 30.3M15.8 30.3L19.5 30.3M20.4 30.3L23.7 30.3M24.2 30.3L26.5 30.3M26.9 30.3L29.5 30.3M30.4 30.3L33.3 30.3" fill="none" stroke="#444" stroke-width="0.5" stroke-opacity="0.7"/><path d="M53.4 30.2L53.4 32.2M56.1 30.2L56.1 32.2M58.8 30.2L58.8 32.2M61.5 30.2L61.5 32.2M64.2 30.2L64.2 32.2M66.9 30.2L66.9 32.2M69.6 30.2L69.6 32.2M72.3 30.2L72.3 32.2M75 30.2L75 32.2" fill="none" stroke="#444" stroke-width="0.35" stroke-opacity="0.7"/><path d="M53.4 30.3L56.6 30.3M57.8 30.3L61.5 30.3M62.4 30.3L65.7 30.3M66.2 30.3L68.5 30.3M68.9 30.3L71.5 30.3M72.4 30.3L75 30.3" fill="none" stroke="#444" stroke-width="0.5" stroke-opacity="0.7"/><path d="M5.4 5L9 5M5.4 8L9 8M5.4 11L9 11M5.4 14L9 14M5.4 17L9 17M5.4 20L9 20" fill="none" stroke="#444" stroke-width="0.35" stroke-opacity="0.7"/><path d="M5.8 6.4L8.4 6.4M5.8 9.2L8.4 9.2M5.8 12.1L8.4 12.1M5.8 14.9L8.4 14.9M5.8 17.8L8.4 17.8M5.8 20.6L8.4 20.6" fill="none" stroke="#444" stroke-width="0.5" stroke-opacity="0.7"/><path d="M34.6 5L38.2 5M34.6 8L38.2 8M34.6 11L38.2 11M34.6 14L38.2 14M34.6 17L38.2 17M34.6 20L38.2 20" fill="none" stroke="#444" stroke-width="0.35" stroke-opacity="0.7"/><path d="M35 6.4L37.6 6.4M35 9.2L37.6 9.2M35 12.1L37.6 12.1M35 14.9L37.6 14.9M35 17.8L37.6 17.8M35 20.6L37.6 20.6" fill="none" stroke="#444" stroke-width="0.5" stroke-opacity="0.7"/><path d="M5.4 33.6L9 33.6M5.4 36.6L9 36.6M5.4 39.6L9 39.6M5.4 42.6L9 42.6M5.4 45.6L9 45.6M5.4 48.6L9 48.6" fill="none" stroke="#444" stroke-width="0.35" stroke-opacity="0.7"/><path d="M5.8 35L8.4 35M5.8 37.9L8.4 37.9M5.8 40.7L8.4 40.7M5.8 43.5L8.4 43.5M5.8 46.4L8.4 46.4M5.8 49.2L8.4 49.2" fill="none" stroke="#444" stroke-width="0.5" stroke-opacity="0.7"/><path d="M34.6 33.6L38.2 33.6M34.6 36.6L38.2 36.6M34.6 39.6L38.2 39.6M34.6 42.6L38.2 42.6M34.6 45.6L38.2 45.6M34.6 48.6L38.2 48.6" fill="none" stroke="#444" stroke-width="0.35" stroke-opacity="0.7"/><path d="M35 35L37.6 35M35 37.9L37.6 37.9M35 40.7L37.6 40.7M35 43.5L37.6 43.5M35 46.4L37.6 46.4M35 49.2L37.6 49.2" fill="none" stroke="#444" stroke-width="0.5" stroke-opacity="0.7"/><path d="M48 33.6L51.6 33.6M48 36.6L51.6 36.6M48 39.6L51.6 39.6M48 42.6L51.6 42.6M48 45.6L51.6 45.6M48 48.6L51.6 48.6" fill="none" stroke="#444" stroke-width="0.35" stroke-opacity="0.7"/><path d="M48.4 35L51 35M48.4 37.9L51 37.9M48.4 40.7L51 40.7M48.4 43.5L51 43.5M48.4 46.4L51 46.4M48.4 49.2L51 49.2" fill="none" stroke="#444" stroke-width="0.5" stroke-opacity="0.7"/><path d="M76 33.6L79.6 33.6M76 36.6L79.6 36.6M76 39.6L79.6 39.6M76 42.6L79.6 42.6M76 45.6L79.6 45.6M76 48.6L79.6 48.6" fill="none" stroke="#444" stroke-width="0.35" stroke-opacity="0.7"/><path d="M76.4 35L79 35M76.4 37.9L79 37.9M76.4 40.7L79 40.7M76.4 43.5L79 43.5M76.4 46.4L79 46.4M76.4 49.2L79 49.2" fill="none" stroke="#444" stroke-width="0.5" stroke-opacity="0.7"/><path d="M11 25.6L34 25.6M11 54L34 54M53 54L75 54" fill="none" stroke="#444" stroke-width="0.4" stroke-opacity="0.7"/><rect x="36.6" y="25.2" width="3.6" height="1.1" fill="#222" opacity="0.8"/><rect x="36.6" y="51.4" width="3.6" height="1.1" fill="#222" opacity="0.8"/><rect x="79.6" y="51.4" width="3.6" height="1.1" fill="#222" opacity="0.8"/><rect x="22" y="27" width="4" height="1" fill="#333" opacity="0.7"/><rect x="20" y="55" width="4" height="1" fill="#333" opacity="0.7"/><rect x="62" y="55" width="4" height="1" fill="#333" opacity="0.7"/><rect x="49.4" y="9" width="11.6" height="4.6" fill="#000" opacity="0.13"/><path d="M58.8 11.2L61 11.2M53 12.2L58.5 12.2M57.1 12.5L57.1 13.6M54.1 10.1L58.9 10.1M52.7 11.8L56 11.8M54.1 11.6L57 11.6M49.9 11.6L49.9 13.3M53.8 10.6L58.9 10.6M49.5 10L49.5 13.4M52.5 13.5L52.5 13.6M59.4 12.5L61 12.5M57.2 11.1L60.4 11.1M53 11.9L57.1 11.9M58 12.6L61 12.6M53.9 9.3L57.4 9.3M57.9 9.2L57.9 13.4M49.5 9.4L51.9 9.4M58.5 10.1L58.5 13.6M56.9 10.6L58.7 10.6M49.6 12.9L52.7 12.9M49.5 9.5L51.4 9.5M57.1 10.8L57.1 13.3" fill="none" stroke="#1a1a1a" stroke-width="0.55" stroke-opacity="0.8"/><circle cx="52.6" cy="11.2" r="1.6" fill="none" stroke="#1a1a1a" stroke-width="0.6"/><circle cx="58" cy="11.2" r="1.6" fill="none" stroke="#1a1a1a" stroke-width="0.6"/><path d="M52 17.1L55.9 17.1M56.8 17.1L59.2 17.1M59.9 17.1L60 17.1" fill="none" stroke="#1a1a1a" stroke-width="0.6" stroke-opacity="0.75"/><path d="M67.4 7.6L69 7.6M69.7 7.6L71 7.6M71.4 7.6L74.3 7.6M74.7 7.6L77.4 7.6" fill="none" stroke="#1a1a1a" stroke-width="0.7" stroke-opacity="0.8"/><path d="M68 10.4L71.3 10.4M68 12L69.5 12M73.4 12L76.1 12M76.7 12L80.5 12M68 13.6L70.8 13.6M75 13.6L78.8 13.6M80 13.6L81.4 13.6M82.3 13.6L83 13.6M71.2 15.2L73.9 15.2M74.5 15.2L76.1 15.2M77.2 15.2L81 15.2M81.5 15.2L83 15.2" fill="none" stroke="#444" stroke-width="0.5" stroke-opacity="0.6"/><path d="M68 14.6L84 14.6" stroke="#444" stroke-width="0.4" stroke-opacity="0.7"/><path d="M78.3 48.4L78.3 50M85.8 38.6L86 38.6M78.5 38.5L78.5 41.8M81.1 36L82.2 36M85.5 37.6L86 37.6M84.7 47L86 47M84.5 42.9L84.5 45.6M84.8 37.5L84.8 39.2M79.7 45.7L79.7 49M84.5 43.3L86 43.3M79.4 43L79.4 46.2M85.1 43.8L85.1 45.9M85.5 47.4L86 47.4M79.6 44.5L79.6 46.7" fill="none" stroke="#444" stroke-width="0.45" stroke-opacity="0.6"/></g><rect x="0.5" y="0.5" width="89" height="63" fill="none" stroke="#8b9fd8" stroke-width="1"/></svg>
<div class="cell" style="left:517.0px;top:405.0px;width:92.0px;height:31.5px"></div>
<div class="cb" style="left:519.6px;top:411.6px"></div>
<div class="num" style="left:532.0px;top:411.3px">23</div>
<div class="ttl" style="left:519.2px;top:424.0px;letter-spacing:-0.1px">配置図兼1階平面図</div>
<svg class="th cd" style="left:517.8px;top:438.3px" width="90.4" height="65.2" viewBox="0 0 90 64" preserveAspectRatio="none"><rect x="0" y="0" width="90" height="64" fill="#000"/><rect x="0.5" y="0.5" width="89" height="63" fill="none" stroke="#8ecbe8" stroke-width="1" stroke-dasharray="1.1 1.1"/><rect x="2.4" y="2.1" width="85.4" height="59.8" fill="none" stroke="#08b818" stroke-width="0.9"/><rect x="44.5" y="59.2" width="43.1" height="2.7" fill="#14e828"/><path d="M60.5 59.2L60.5 62M65.5 59.2L65.5 62M83 59.2L83 62" fill="none" stroke="#053" stroke-width="0.5"/><rect x="44.5" y="58.4" width="43" height="3.4" fill="#14e828"/><path d="M48 58.6L49.6 61.6M52.2 58.6L53.8 61.6M56.4 58.6L58 61.6M60.6 58.6L62.2 61.6M64.8 58.6L66.4 61.6M69 58.6L70.6 61.6M73.2 58.6L74.8 61.6M77.4 58.6L79 61.6M81.6 58.6L83.2 61.6" fill="none" stroke="#063" stroke-width="0.7"/><path d="M8.2 9L17.6 8L19 40.4L9.6 41.4Z" fill="#2828f0" opacity="0.6"/><path d="M8.6 12L18.6 11.6M8.6 15.4L18.6 15M8.6 18.8L18.6 18.4M8.6 22.2L18.6 21.8M8.6 25.6L18.6 25.2M8.6 29L18.6 28.6M8.6 32.4L18.6 32M8.6 35.8L18.6 35.4M8.6 39.2L18.6 38.8" fill="none" stroke="#000" stroke-width="0.7" stroke-opacity="0.7"/><path d="M10 18L17 18M10 27L17 26.6M11 28L11 34M16 28L16 34" fill="none" stroke="#f014f0" stroke-width="0.7"/><path d="M7 43.4L71 42.4L71.4 48.6L7.4 49.4Z" fill="#2828f0" opacity="0.7"/><path d="M69 12.4L72.6 12L79.6 45.6L75.6 46.6Z" fill="#2828f0" opacity="0.6"/><path d="M70 16L76 44M72 16L78 44" fill="none" stroke="#f014f0" stroke-width="0.5"/><rect x="28.6" y="3.9" width="33.8" height="7.4" fill="none" stroke="#f01818" stroke-width="0.8"/><path d="M33.4 3.9L33.4 11.3M38.2 3.9L38.2 11.3M43 3.9L43 11.3M47.8 3.9L47.8 11.3M52.6 3.9L52.6 11.3M57.4 3.9L57.4 11.3" fill="none" stroke="#f01818" stroke-width="0.7"/><rect x="24.2" y="11.4" width="41" height="31" fill="#f01818" opacity="0.5"/><rect x="24.2" y="11.4" width="41" height="31" fill="none" stroke="#f01818" stroke-width="0.9"/><rect x="27" y="14" width="35" height="25" fill="#000" opacity="0.55"/><path d="M27 14L27 39M32 14L32 39M37 14L37 39M42 14L42 39M47 14L47 39M52 14L52 39M57 14L57 39M62 14L62 39" fill="none" stroke="#f01818" stroke-width="1.1"/><path d="M27 14L62 14M27 19L62 19M27 24L62 24M27 29L62 29M27 34L62 34M27 39L62 39" fill="none" stroke="#f01818" stroke-width="1.1"/><path d="M30 20.5L60 20.5M30 30.6L60 30.6" fill="none" stroke="#f0e020" stroke-width="0.6"/><path d="M37 14L37 38M52 14L52 38M30 25.6L60 25.6" fill="none" stroke="#10e020" stroke-width="0.7"/><rect x="55.2" y="34.9" width="2.6" height="1.3" fill="#2828f0" opacity="0.95"/><rect x="54.6" y="33.1" width="1.2" height="0.8" fill="#f014f0" opacity="0.95"/><rect x="46.1" y="29.8" width="2" height="1.1" fill="#f0e020" opacity="0.95"/><rect x="30.8" y="35.3" width="1.4" height="0.8" fill="#20d0e0" opacity="0.95"/><rect x="61.1" y="13.7" width="1.4" height="0.9" fill="#f0e020" opacity="0.95"/><rect x="28.6" y="24.7" width="2.2" height="1.1" fill="#20d0e0" opacity="0.95"/><rect x="55.2" y="15.9" width="1.5" height="1.3" fill="#2828f0" opacity="0.95"/><rect x="28.2" y="23.3" width="2.2" height="1.2" fill="#f0e020" opacity="0.95"/><rect x="57.7" y="29.2" width="1" height="1" fill="#f0e020" opacity="0.95"/><rect x="50.1" y="31.5" width="1.7" height="0.9" fill="#f0e020" opacity="0.95"/><rect x="58.9" y="31.9" width="1.3" height="0.9" fill="#f014f0" opacity="0.95"/><rect x="29.8" y="29.3" width="1.6" height="1.2" fill="#f0e020" opacity="0.95"/><rect x="27.6" y="33.5" width="1.3" height="0.7" fill="#20d0e0" opacity="0.95"/><rect x="38.1" y="17.2" width="1" height="0.9" fill="#2828f0" opacity="0.95"/><rect x="38.7" y="30.1" width="1.6" height="1.1" fill="#f014f0" opacity="0.95"/><rect x="59.4" y="14.7" width="1.3" height="1" fill="#f014f0" opacity="0.95"/><rect x="37.4" y="16.4" width="2" height="1" fill="#f014f0" opacity="0.95"/><rect x="44" y="36.4" width="1.9" height="1" fill="#f014f0" opacity="0.95"/><rect x="51.2" y="33.8" width="1.6" height="1.3" fill="#f0e020" opacity="0.95"/><rect x="34.8" y="15.4" width="1.4" height="0.9" fill="#f014f0" opacity="0.95"/><rect x="43.7" y="24.7" width="1.6" height="1.2" fill="#2828f0" opacity="0.95"/><rect x="36.8" y="29.4" width="0.8" height="0.7" fill="#20d0e0" opacity="0.95"/><rect x="58.3" y="18.8" width="2" height="1.2" fill="#f014f0" opacity="0.95"/><rect x="54" y="33.5" width="2" height="1" fill="#f014f0" opacity="0.95"/><rect x="59.7" y="36.8" width="1.2" height="1.1" fill="#2828f0" opacity="0.95"/><rect x="46.2" y="27.9" width="1.8" height="1.2" fill="#f0e020" opacity="0.95"/><rect x="22.6" y="16" width="3" height="20" fill="none" stroke="#f0e020" stroke-width="0.5"/><path d="M17.4 8L25 6.4L42.6 6.6L50.4 11.4L46 12.4L36 10.4L24 10.6Z" fill="#10e020"/><path d="M65.4 14.4L70.6 13L70.4 23L66.6 22.4L64.6 18Z" fill="#10e020"/><circle cx="79.6" cy="8.4" r="1.9" fill="none" stroke="#10e020" stroke-width="0.8"/><path d="M78.6 6L80.8 8.2L78.8 9.6Z" fill="#10e020"/><rect x="29.6" y="40.4" width="22.6" height="5.6" fill="#ff2020"/><path d="M31 42L51 42M31 44L51 44" fill="none" stroke="#900" stroke-width="0.5"/><rect x="68.4" y="43.6" width="3.4" height="3.2" fill="none" stroke="#f0e020" stroke-width="0.9"/><path d="M8 52.4L14 52.4M17 52.8L24 52.8M28 52L36 52M40 52.6L50 52.6M54 52L62 52M66 52.6L76 52.2M78 51L86 50.4" fill="none" stroke="#f014f0" stroke-width="1"/><path d="M10 55L18 55M22 55.4L30 55.4M34 55L44 55M48 55.4L58 55.4M62 55L70 55" fill="none" stroke="#2828f0" stroke-width="1"/><path d="M24 46L24 54M26 49L26 56" fill="none" stroke="#f014f0" stroke-width="0.8"/><path d="M72 46L86.6 43.6L86.8 47L73 49Z" fill="none" stroke="#f014f0" stroke-width="0.7"/></svg>
<div class="cell" style="left:611.3px;top:405.0px;width:92.0px;height:31.5px"></div>
<div class="cb" style="left:613.9px;top:411.6px"></div>
<div class="num" style="left:626.3px;top:411.3px">24</div>
<div class="ttl" style="left:613.5px;top:424.0px;letter-spacing:-0.1px">基礎梁リスト</div>
<svg class="th wd" style="left:611.7px;top:438.3px" width="91.2" height="65.2" viewBox="0 0 90 64" preserveAspectRatio="none"><rect x="0" y="0" width="90" height="64" fill="#fff"/><g opacity="0.95"><rect x="0" y="0" width="90" height="64" fill="#fff"/><rect x="0.5" y="0.5" width="89" height="63" fill="none" stroke="#8b9fd8" stroke-width="1"/><rect x="3.2" y="2.6" width="83.6" height="58.6" fill="none" stroke="#222" stroke-width="0.7"/><path d="M3.2 57.6L86.8 57.6" stroke="#222" stroke-width="0.6"/><rect x="3.2" y="57.6" width="22.8" height="3.6" fill="#000" opacity="0.22"/><rect x="70" y="57.6" width="16.8" height="3.6" fill="#000" opacity="0.25"/><path d="M3.8 58.6L6.2 58.6M7.3 58.6L9.7 58.6M10.6 58.6L12.1 58.6M13 58.6L16.4 58.6M17 58.6L18.3 58.6M21.6 58.6L24.5 58.6M25.1 58.6L25.8 58.6M3.8 60.1L5.4 60.1M5.8 60.1L8.2 60.1M9.3 60.1L11.8 60.1M12.6 60.1L15.6 60.1M21.3 60.1L24.4 60.1M25 60.1L25.8 60.1" fill="none" stroke="#111" stroke-width="1.1" stroke-opacity="1"/><path d="M26 57.6L26 61.2M44 57.6L44 61.2M70 57.6L70 61.2M8 57.6L8 61.2M14 57.6L14 61.2M20 57.6L20 61.2" fill="none" stroke="#111" stroke-width="0.6"/><path d="M45 58.6L47.4 58.6M48.4 58.6L49.8 58.6M50.5 58.6L52.3 58.6M53.3 58.6L56.1 58.6M57 58.6L58.4 58.6M59 58.6L62.7 58.6M45 60.1L46.2 60.1M46.9 60.1L49.1 60.1M53.9 60.1L55.3 60.1M55.8 60.1L57.7 60.1M58.3 60.1L61.3 60.1M61.9 60.1L63 60.1" fill="none" stroke="#111" stroke-width="1.3" stroke-opacity="1"/><path d="M71 58.6L72.8 58.6M73.7 58.6L77.3 58.6M77.9 58.6L79.3 58.6M80.3 58.6L81.7 58.6M82.2 58.6L84.1 58.6M85.2 58.6L86 58.6M71 60.1L72.4 60.1M73.5 60.1L76.9 60.1M77.9 60.1L81.7 60.1M82.4 60.1L85.9 60.1" fill="none" stroke="#111" stroke-width="1.1" stroke-opacity="1"/><rect x="6.6" y="4.6" width="78.4" height="4.6" fill="#000" opacity="0.3"/><path d="M6.6 4.6L6.6 9.2M12.2 4.6L12.2 9.2M17.8 4.6L17.8 9.2M23.4 4.6L23.4 9.2M29 4.6L29 9.2M34.6 4.6L34.6 9.2M40.2 4.6L40.2 9.2M45.8 4.6L45.8 9.2M51.4 4.6L51.4 9.2M57 4.6L57 9.2M62.6 4.6L62.6 9.2M68.2 4.6L68.2 9.2M73.8 4.6L73.8 9.2M79.4 4.6L79.4 9.2M85 4.6L85 9.2M6.6 4.6L85 4.6M6.6 9.2L85 9.2" fill="none" stroke="#1a1a1a" stroke-width="0.5" stroke-opacity="0.85"/><path d="M7.1 6L10.6 6M11.1 6L13.9 6M14.8 6L17.7 6M18.8 6L21.2 6M22.1 6L25.8 6M26.4 6L29.3 6M30.5 6L32 6M33 6L34.2 6M35.1 6L37.9 6M38.3 6L39.8 6M40.9 6L44.2 6M44.8 6L46.9 6M47.7 6L51.4 6M51.9 6L54.8 6M58.1 6L61.1 6M62.2 6L65.8 6M66.3 6L68.1 6M74.9 6L77.1 6M78.2 6L79.3 6M80.2 6L82.3 6M83 6L84.5 6M7.1 7.8L9.9 7.8M10.8 7.8L12.3 7.8M15.3 7.8L18.3 7.8M19.1 7.8L20.1 7.8M24.9 7.8L26.6 7.8M27.4 7.8L29.9 7.8M30.7 7.8L32.7 7.8M41 7.8L42.7 7.8M43.9 7.8L45.7 7.8M46.7 7.8L48.4 7.8M49.5 7.8L50.7 7.8M53.2 7.8L56.8 7.8M57.4 7.8L58.7 7.8M59.3 7.8L61.1 7.8M64.2 7.8L67.3 7.8M68 7.8L71.4 7.8M75.2 7.8L76.5 7.8M77 7.8L80.8 7.8M81.7 7.8L82.8 7.8" fill="none" stroke="#1a1a1a" stroke-width="0.8" stroke-opacity="0.8"/><rect x="6.6" y="9.2" width="78.4" height="8.6" fill="none" stroke="#1a1a1a" stroke-width="0.5"/><path d="M11.6 9.2L11.6 17.8" fill="none" stroke="#1a1a1a" stroke-width="0.5"/><rect x="12" y="10.2" width="2.6" height="6.8" fill="#222" opacity="0.8"/><rect x="12.7" y="11" width="1.2" height="5.2" fill="#fff" opacity="0.55"/><rect x="17.6" y="10.2" width="2.6" height="6.8" fill="#222" opacity="0.8"/><rect x="18.3" y="11" width="1.2" height="5.2" fill="#fff" opacity="0.55"/><rect x="23.2" y="10.2" width="2.6" height="6.8" fill="#222" opacity="0.8"/><rect x="23.9" y="11" width="1.2" height="5.2" fill="#fff" opacity="0.55"/><rect x="28.8" y="10.2" width="2.6" height="6.8" fill="#222" opacity="0.8"/><rect x="29.5" y="11" width="1.2" height="5.2" fill="#fff" opacity="0.55"/><rect x="33.6" y="10.2" width="2.6" height="6.8" fill="#222" opacity="0.8"/><rect x="34.3" y="11" width="1.2" height="5.2" fill="#fff" opacity="0.55"/><rect x="39" y="10.2" width="2.6" height="6.8" fill="#222" opacity="0.8"/><rect x="39.7" y="11" width="1.2" height="5.2" fill="#fff" opacity="0.55"/><rect x="43.6" y="10.2" width="2.6" height="6.8" fill="#222" opacity="0.8"/><rect x="44.3" y="11" width="1.2" height="5.2" fill="#fff" opacity="0.55"/><rect x="47.6" y="6.6" width="3.8" height="10" fill="#111" opacity="0.9"/><rect x="54.6" y="10.6" width="2.2" height="3" fill="#333" opacity="0.75"/><rect x="60" y="10.6" width="2.2" height="3" fill="#333" opacity="0.75"/><rect x="65.6" y="10.6" width="2.2" height="3" fill="#333" opacity="0.75"/><rect x="71.2" y="10.2" width="2.6" height="6.8" fill="#222" opacity="0.8"/><rect x="71.9" y="11" width="1.2" height="5.2" fill="#fff" opacity="0.5"/><rect x="76" y="10.2" width="2.6" height="6.8" fill="#222" opacity="0.8"/><rect x="76.7" y="11" width="1.2" height="5.2" fill="#fff" opacity="0.5"/><defs><linearGradient id="g24a" x1="0" x2="1"><stop offset="0" stop-color="#222" stop-opacity=".95"/><stop offset=".6" stop-color="#333" stop-opacity=".9"/><stop offset="1" stop-color="#555" stop-opacity=".5"/></linearGradient><linearGradient id="g24b" x1="0" x2="1"><stop offset="0" stop-color="#222" stop-opacity=".95"/><stop offset=".75" stop-color="#333" stop-opacity=".9"/><stop offset="1" stop-color="#777" stop-opacity="0"/></linearGradient></defs><rect x="6.6" y="18.4" width="78.4" height="5.4" fill="url(#g24a)"/><path d="M12.2 18.4L12.2 23.8M17.8 18.4L17.8 23.8M23.4 18.4L23.4 23.8M29 18.4L29 23.8M34.6 18.4L34.6 23.8M40.2 18.4L40.2 23.8M45.8 18.4L45.8 23.8M51.4 18.4L51.4 23.8M57 18.4L57 23.8M62.6 18.4L62.6 23.8M68.2 18.4L68.2 23.8M73.8 18.4L73.8 23.8M79.4 18.4L79.4 23.8" fill="none" stroke="#ddd" stroke-width="0.4" stroke-opacity="0.6"/><path d="M6.6 20.1L9.1 20.1M10 20.1L12.1 20.1M13 20.1L16.5 20.1M17.6 20.1L18.9 20.1M21.9 20.1L24.2 20.1M24.7 20.1L27.9 20.1M32.5 20.1L36.4 20.1M36.9 20.1L40.7 20.1M41.7 20.1L45.4 20.1M51.1 20.1L54.9 20.1M58.7 20.1L60.1 20.1M61 20.1L64.9 20.1M66 20.1L69 20.1M69.8 20.1L72.1 20.1M73 20.1L75.1 20.1M6.6 22.3L9.2 22.3M10.4 22.3L11.6 22.3M12.6 22.3L15.5 22.3M16.6 22.3L19.1 22.3M20 22.3L22.7 22.3M28.1 22.3L30.2 22.3M30.9 22.3L33.2 22.3M34.2 22.3L35.8 22.3M36.4 22.3L38.5 22.3M48.4 22.3L52.2 22.3M55.1 22.3L56.7 22.3M59.9 22.3L61.5 22.3M62.6 22.3L65.7 22.3M66.5 22.3L68.4 22.3M71.2 22.3L72.4 22.3M73.2 22.3L77 22.3M77.9 22.3L79.1 22.3M83.8 22.3L84.9 22.3" fill="none" stroke="#eee" stroke-width="0.5" stroke-opacity="0.5"/><rect x="6.6" y="24.6" width="39" height="4.4" fill="#000" opacity="0.28"/><path d="M6.6 24.6L6.6 29M12.2 24.6L12.2 29M17.7 24.6L17.7 29M23.3 24.6L23.3 29M28.9 24.6L28.9 29M34.5 24.6L34.5 29M40 24.6L40 29M45.6 24.6L45.6 29M6.6 24.6L45.6 24.6M6.6 29L45.6 29" fill="none" stroke="#1a1a1a" stroke-width="0.5" stroke-opacity="0.85"/><path d="M7.1 25.9L11 25.9M12 25.9L14.5 25.9M15.4 25.9L17.2 25.9M22.8 25.9L26.1 25.9M26.7 25.9L28.1 25.9M28.9 25.9L32.8 25.9M33.7 25.9L36.9 25.9M37.4 25.9L38.6 25.9M39.7 25.9L41.3 25.9M42.2 25.9L45.1 25.9M7.1 27.7L10.3 27.7M11.4 27.7L13.7 27.7M18 27.7L21.2 27.7M22 27.7L24.4 27.7M25.2 27.7L28.3 27.7M28.8 27.7L30.3 27.7M31 27.7L33 27.7M34.1 27.7L37.9 27.7M38.7 27.7L41.5 27.7M42.5 27.7L45.1 27.7" fill="none" stroke="#1a1a1a" stroke-width="0.7" stroke-opacity="0.8"/><path d="M46 27.6L58 27.6" stroke="#666" stroke-width="0.4" stroke-opacity="0.6"/><rect x="6.6" y="29" width="39" height="8.6" fill="none" stroke="#1a1a1a" stroke-width="0.5"/><path d="M11.6 29L11.6 37.6" stroke="#1a1a1a" stroke-width="0.5"/><rect x="12.6" y="30.4" width="1.6" height="2" fill="#222" opacity="0.85"/><path d="M13.4 32L13.4 37" stroke="#1a1a1a" stroke-width="0.8" stroke-opacity="0.9"/><rect x="15.2" y="30.4" width="1.6" height="2" fill="#222" opacity="0.85"/><path d="M16 32L16 37" stroke="#1a1a1a" stroke-width="0.8" stroke-opacity="0.9"/><rect x="21" y="30.4" width="1.6" height="2" fill="#222" opacity="0.85"/><path d="M21.8 32L21.8 37" stroke="#1a1a1a" stroke-width="0.8" stroke-opacity="0.9"/><rect x="28.4" y="30.4" width="1.6" height="2" fill="#222" opacity="0.85"/><path d="M29.2 32L29.2 37" stroke="#1a1a1a" stroke-width="0.8" stroke-opacity="0.9"/><rect x="34.8" y="30.4" width="1.6" height="2" fill="#222" opacity="0.85"/><path d="M35.6 32L35.6 37" stroke="#1a1a1a" stroke-width="0.8" stroke-opacity="0.9"/><rect x="41" y="30.4" width="1.6" height="2" fill="#222" opacity="0.85"/><path d="M41.8 32L41.8 37" stroke="#1a1a1a" stroke-width="0.8" stroke-opacity="0.9"/><rect x="40.4" y="30" width="2.8" height="7.4" fill="#222" opacity="0.8"/><rect x="6.6" y="38.2" width="50" height="5" fill="url(#g24b)"/><path d="M12.2 38.2L12.2 43.2M17.8 38.2L17.8 43.2M23.4 38.2L23.4 43.2M29 38.2L29 43.2M34.6 38.2L34.6 43.2M40.2 38.2L40.2 43.2M45.8 38.2L45.8 43.2" fill="none" stroke="#ddd" stroke-width="0.4" stroke-opacity="0.6"/><path d="M6.6 39.8L8.2 39.8M8.8 39.8L12 39.8M12.5 39.8L16 39.8M16.8 39.8L19.2 39.8M25 39.8L26.9 39.8M27.6 39.8L29.7 39.8M30.7 39.8L32.2 39.8M32.8 39.8L35 39.8M35.8 39.8L37.7 39.8M38.3 39.8L39.9 39.8M40.7 39.8L44.5 39.8M45.3 39.8L46.6 39.8M6.6 41.8L8.3 41.8M9.1 41.8L11.4 41.8M12.5 41.8L15.5 41.8M21.7 41.8L23.4 41.8M24.5 41.8L27.6 41.8M33.1 41.8L36 41.8M42.1 41.8L45.3 41.8M45.8 41.8L46.6 41.8" fill="none" stroke="#eee" stroke-width="0.5" stroke-opacity="0.5"/><rect x="10.6" y="47" width="6" height="6.6" fill="#000" opacity="0.13"/><path d="M11.5 49.4L12.5 49.4M14.6 48.4L14.6 53.6M10.7 52.7L14.2 52.7M12.9 49.4L16.6 49.4M15.9 52.2L15.9 53.6M12.8 48L16.1 48M14.1 53.2L16.6 53.2M16.4 51.1L16.4 53.6M15.8 51.9L15.8 53.3M15.9 50.8L15.9 53.6M16.3 49.4L16.3 51.2M15.6 48.4L15.6 50.3M14.2 49.1L14.2 53.6M11 47.4L11 52.3" fill="none" stroke="#1a1a1a" stroke-width="0.55" stroke-opacity="0.8"/><path d="M8 50.4L19 50.4M13.6 45.6L13.6 54.6" fill="none" stroke="#1a1a1a" stroke-width="0.7" stroke-opacity="0.85"/><rect x="23.4" y="45.4" width="8" height="8" fill="#000" opacity="0.13"/><path d="M29.5 52L31.4 52M25.8 46.8L25.8 50.1M30.3 50.4L31.4 50.4M27.9 52.3L27.9 53.4M25.2 50.3L31.2 50.3M26.2 47.9L26.2 53.4M26.2 51.6L26.2 53.4M30.5 50.9L30.5 53.1M24.1 47L24.1 53.4M27.5 51.8L29.2 51.8M26 48L31.4 48M23.6 47.5L30.3 47.5M25.4 53.1L27.9 53.1M24.3 48.9L31.4 48.9M30.8 50.2L31.4 50.2M26.3 48.1L28.4 48.1M30.2 51.1L31.4 51.1M28.4 50.1L28.4 53.4" fill="none" stroke="#1a1a1a" stroke-width="0.55" stroke-opacity="0.8"/><path d="M20 49L40 49M27.4 44L27.4 55" fill="none" stroke="#1a1a1a" stroke-width="0.8" stroke-opacity="0.85"/><path d="M32 49.6L44 49.6" stroke="#666" stroke-width="0.4" stroke-opacity="0.6"/></g><rect x="0.5" y="0.5" width="89" height="63" fill="none" stroke="#8b9fd8" stroke-width="1"/></svg>
<div class="t" style="left:729px;top:443px;font-size:8.2px;color:#777;letter-spacing:-0.3px">(残り 262 件)</div>
<div class="t" style="left:735.5px;top:456px;font-size:8.8px;letter-spacing:-0.5px"><span class="lnk">次ページ</span></div>
<svg class="abs" style="left:240px;top:396px" width="200" height="160" viewBox="240 396 200 160"><defs><linearGradient id="sw" x1="372" y1="404" x2="290" y2="490" gradientUnits="userSpaceOnUse"><stop offset="0" stop-color="#c8ecd0" stop-opacity="0"/><stop offset=".3" stop-color="#9cd8ac" stop-opacity=".6"/><stop offset=".62" stop-color="#3cb05a" stop-opacity=".92"/><stop offset=".9" stop-color="#1fa340" stop-opacity="1"/></linearGradient></defs><path d="M263.2 560.0C263.3 559.3 263.0 562.5 263.8 555.9C264.6 549.3 265.9 532.5 268.0 520.5C270.1 508.5 273.1 493.9 276.4 484.1C279.7 474.3 283.7 468.7 287.7 461.7C291.7 454.7 294.2 448.6 300.3 442.0C306.4 435.4 314.5 428.0 324.1 422.4C333.7 416.8 349.6 411.3 357.7 408.4C365.8 405.5 370.4 405.6 373.0 405.0C372.3 405.8 374.4 406.2 369.0 409.8C363.6 413.4 348.8 421.2 340.9 426.6C332.9 432.0 326.7 437.1 321.3 442.0C315.9 446.9 312.9 449.1 308.7 456.1C304.5 463.1 299.4 474.8 296.1 484.1C292.8 493.4 290.7 503.7 289.1 512.1C287.5 520.5 287.0 527.3 286.3 534.6C285.6 541.9 285.1 551.7 284.9 555.9C284.6 560.1 284.8 559.3 284.8 560.0Z" fill="url(#sw)"/><g transform="rotate(-6 348 515)"><rect x="317.3" y="475" width="62" height="90" rx="30" ry="36" fill="#fff" stroke="#21a443" stroke-width="3.4"/><rect x="342.8" y="494" width="10.4" height="21" rx="5.2" fill="#fff" stroke="#21a443" stroke-width="2"/><path d="M348 476 V494" stroke="#21a443" stroke-width="1.8"/></g><g fill="#fff"><rect x="-6.5" y="-2.6" width="13" height="5.2" transform="translate(321.5 468.5) rotate(70)"/><rect x="-6.5" y="-2.6" width="13" height="5.2" transform="translate(309.5 478) rotate(38)"/><rect x="-6.5" y="-2.6" width="13" height="5.2" transform="translate(301.5 490.5) rotate(18)"/></g></svg>
<div class="circ" style="left:7.6px;top:267.1px;width:139.4px;height:139.4px"></div>
<div class="big" style="left:-20.7px;width:200px;top:296.3px;font-size:35.5px">Select</div>
<div class="sub" style="left:-20.7px;width:200px;top:339.3px;font-size:11.7px">カテゴリーフォルダーで</div>
<div class="sub" style="left:-20.7px;width:200px;top:355.3px;font-size:11.7px">分類表示</div>
<div class="circ" style="left:635.9px;top:60.9px;width:143.0px;height:143.0px"></div>
<div class="big" style="left:606.9px;width:200px;top:91.0px;font-size:35.3px">Search</div>
<div class="sub" style="left:606.9px;width:200px;top:134.6px;font-size:11.6px">属性キーワード検索</div>
<div class="sub" style="left:606.9px;width:200px;top:150.6px;font-size:11.6px">＆全文検索</div>
<div class="circ" style="left:784.2px;top:385.3px;width:142.6px;height:142.6px"></div>
<div class="big" style="left:754.7px;width:200px;top:405.3px;font-size:35.8px">Check</div>
<div class="sub" style="left:754.7px;width:200px;top:449.3px;font-size:11.6px">対象ファイルを</div>
<div class="sub" style="left:754.7px;width:200px;top:465.3px;font-size:11.6px">縮小画像で一覧表示</div>
<div class="sub" style="left:754.7px;width:200px;top:481.3px;font-size:11.6px">各ファイルを開く</div>
<div class="sub" style="left:754.7px;width:200px;top:497.3px;font-size:11.6px">手間を軽減</div>
</body></html>
